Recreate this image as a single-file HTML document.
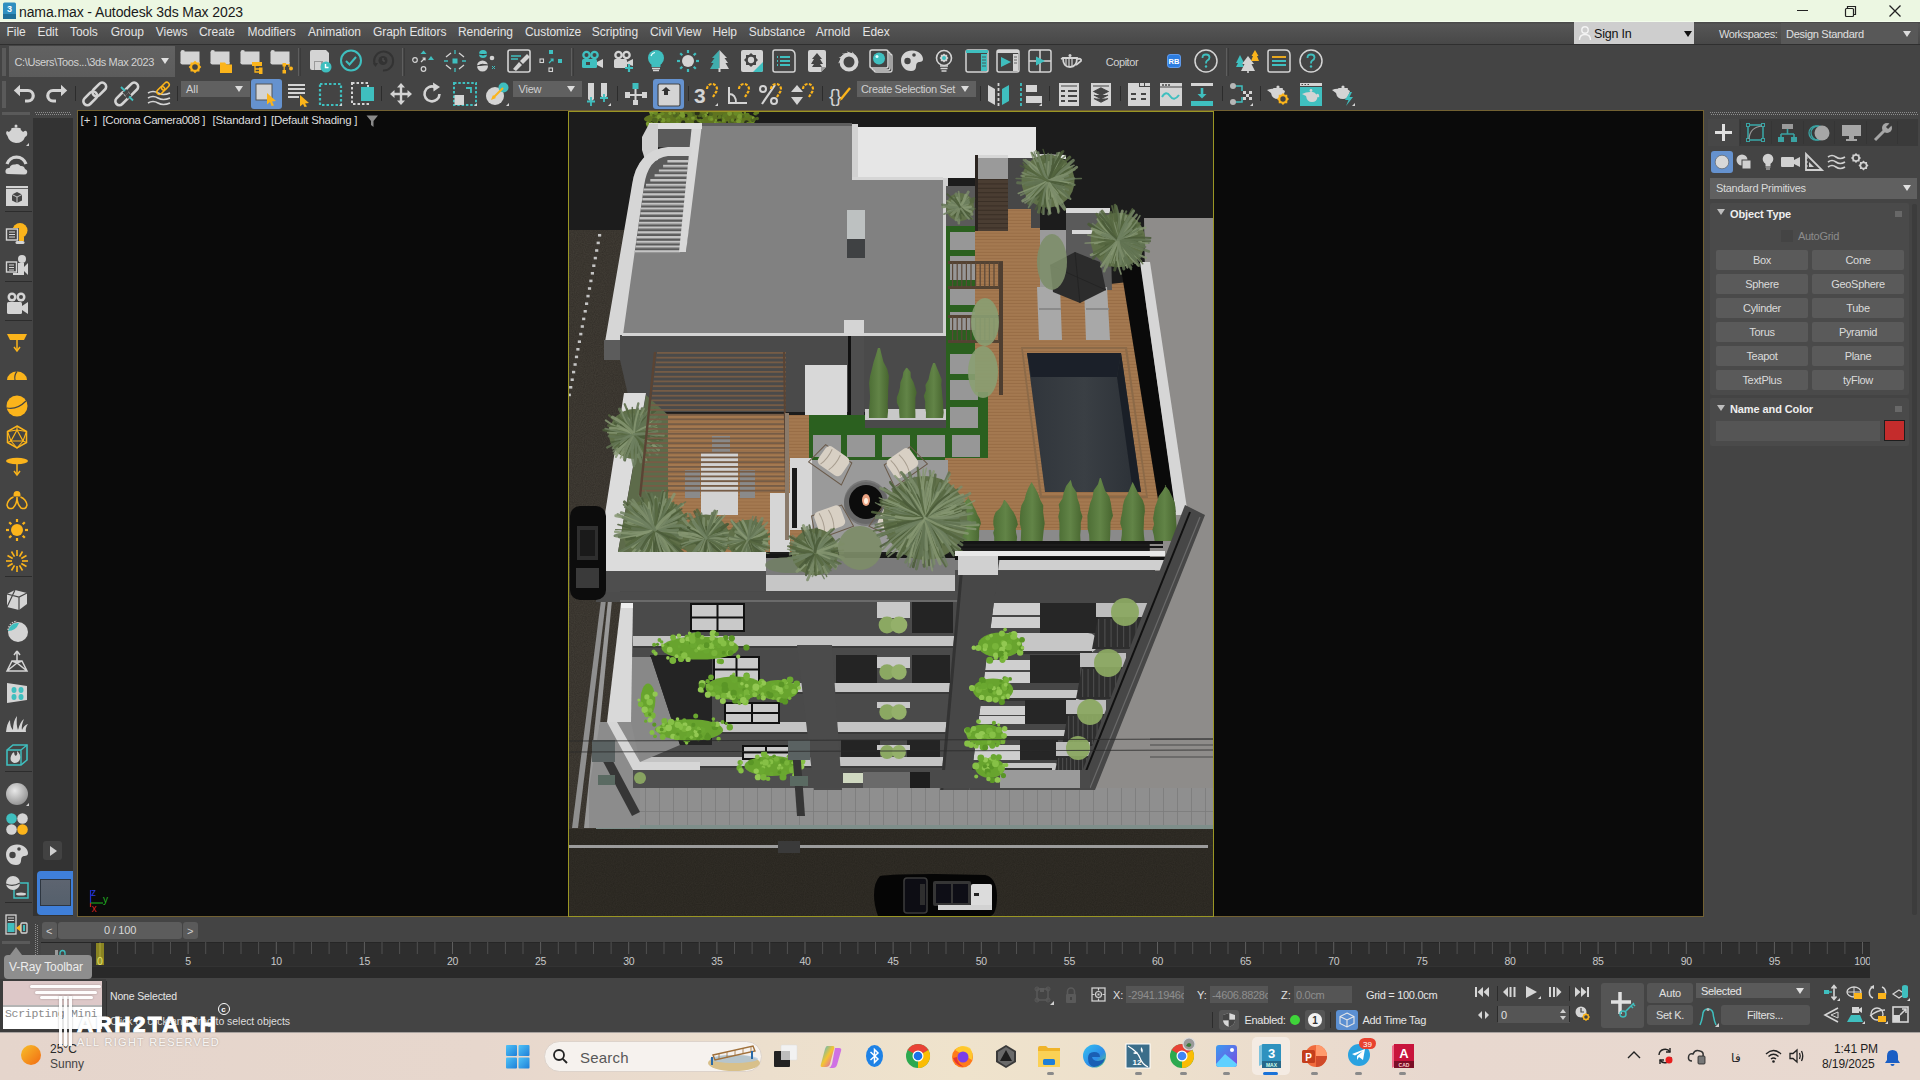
<!DOCTYPE html><html><head><meta charset="utf-8"><style>
*{box-sizing:border-box;margin:0;padding:0}
html,body{width:1920px;height:1080px;overflow:hidden;background:#444444;font-family:"Liberation Sans",sans-serif;position:relative}
.a{position:absolute}
svg.a{overflow:visible}
.t{position:absolute;white-space:nowrap;line-height:1}
</style></head><body>
<div class="a" style="left:0px;top:0px;width:1920px;height:22px;background:#ecf7e2;"></div>
<div class="a" style="left:0px;top:21px;width:1920px;height:1px;background:#f3fdec;"></div>
<div class="a" style="left:0px;top:22px;width:1920px;height:23px;background:linear-gradient(#4a4a4a 0px,#4a4a4a 1px,#565656 2px,#474747 100%);"></div>
<div class="a" style="left:0px;top:44px;width:1920px;height:1px;background:#2f2f2f;"></div>
<div class="a" style="left:33px;top:118px;width:40px;height:798px;background:#333333;"></div>
<div class="a" style="left:77px;top:110px;width:1627px;height:807px;background:#0a0a0a;border:1px solid #726132"></div>
<svg class="a" style="left:2px;top:2px" width="15" height="18" viewBox="0 0 15 18"><rect x="1" y="0.5" width="13" height="15.5" rx="1.5" fill="#2f8fc0"/><rect x="1" y="12" width="13" height="5" fill="#1f6f98"/><text x="7.5" y="10" font-size="9" font-weight="700" fill="#fff" text-anchor="middle" font-family="Liberation Sans">3</text></svg>
<div class="t" style="left:19.0px;top:5.0px;font-size:14px;color:#1a1a1a;font-weight:400;letter-spacing:-0.1px;font-family:'Liberation Sans';">nama.max - Autodesk 3ds Max 2023</div>
<div class="a" style="left:1797px;top:10px;width:11px;height:1px;background:#222;"></div>
<svg class="a" style="left:1843px;top:4px" width="14" height="14" viewBox="0 0 14 14"><rect x="2.5" y="4.5" width="8" height="8" fill="none" stroke="#222" stroke-width="1.2" rx="1"/><path d="M4.5 4.5 V2.5 H12.5 V10.5 H10.5" fill="none" stroke="#222" stroke-width="1.2"/></svg>
<svg class="a" style="left:1888px;top:4px" width="14" height="14" viewBox="0 0 14 14"><path d="M1.5 1.5 L12.5 12.5 M12.5 1.5 L1.5 12.5" stroke="#222" stroke-width="1.3"/></svg>
<div class="t" style="left:6.5px;top:25.8px;font-size:12px;color:#e4e4e4;font-weight:400;letter-spacing:-0.05px;font-family:'Liberation Sans';">File</div>
<div class="t" style="left:37.5px;top:25.8px;font-size:12px;color:#e4e4e4;font-weight:400;letter-spacing:-0.05px;font-family:'Liberation Sans';">Edit</div>
<div class="t" style="left:70.0px;top:25.8px;font-size:12px;color:#e4e4e4;font-weight:400;letter-spacing:-0.05px;font-family:'Liberation Sans';">Tools</div>
<div class="t" style="left:110.8px;top:25.8px;font-size:12px;color:#e4e4e4;font-weight:400;letter-spacing:-0.05px;font-family:'Liberation Sans';">Group</div>
<div class="t" style="left:155.8px;top:25.8px;font-size:12px;color:#e4e4e4;font-weight:400;letter-spacing:-0.05px;font-family:'Liberation Sans';">Views</div>
<div class="t" style="left:199.0px;top:25.8px;font-size:12px;color:#e4e4e4;font-weight:400;letter-spacing:-0.05px;font-family:'Liberation Sans';">Create</div>
<div class="t" style="left:247.5px;top:25.8px;font-size:12px;color:#e4e4e4;font-weight:400;letter-spacing:-0.05px;font-family:'Liberation Sans';">Modifiers</div>
<div class="t" style="left:308.0px;top:25.8px;font-size:12px;color:#e4e4e4;font-weight:400;letter-spacing:-0.05px;font-family:'Liberation Sans';">Animation</div>
<div class="t" style="left:373.0px;top:25.8px;font-size:12px;color:#e4e4e4;font-weight:400;letter-spacing:-0.05px;font-family:'Liberation Sans';">Graph Editors</div>
<div class="t" style="left:458.0px;top:25.8px;font-size:12px;color:#e4e4e4;font-weight:400;letter-spacing:-0.05px;font-family:'Liberation Sans';">Rendering</div>
<div class="t" style="left:525.0px;top:25.8px;font-size:12px;color:#e4e4e4;font-weight:400;letter-spacing:-0.05px;font-family:'Liberation Sans';">Customize</div>
<div class="t" style="left:591.8px;top:25.8px;font-size:12px;color:#e4e4e4;font-weight:400;letter-spacing:-0.05px;font-family:'Liberation Sans';">Scripting</div>
<div class="t" style="left:650.0px;top:25.8px;font-size:12px;color:#e4e4e4;font-weight:400;letter-spacing:-0.05px;font-family:'Liberation Sans';">Civil View</div>
<div class="t" style="left:712.5px;top:25.8px;font-size:12px;color:#e4e4e4;font-weight:400;letter-spacing:-0.05px;font-family:'Liberation Sans';">Help</div>
<div class="t" style="left:748.8px;top:25.8px;font-size:12px;color:#e4e4e4;font-weight:400;letter-spacing:-0.05px;font-family:'Liberation Sans';">Substance</div>
<div class="t" style="left:815.8px;top:25.8px;font-size:12px;color:#e4e4e4;font-weight:400;letter-spacing:-0.05px;font-family:'Liberation Sans';">Arnold</div>
<div class="t" style="left:862.5px;top:25.8px;font-size:12px;color:#e4e4e4;font-weight:400;letter-spacing:-0.05px;font-family:'Liberation Sans';">Edex</div>
<div class="a" style="left:1574px;top:22px;width:120px;height:22px;background:#cecece;"></div>
<svg class="a" style="left:1578px;top:25px" width="14" height="16" viewBox="0 0 14 16"><circle cx="7" cy="5" r="3.2" fill="none" stroke="#f4f4f4" stroke-width="1.4"/><path d="M1.5 15 Q1.5 9.5 7 9.5 Q12.5 9.5 12.5 15" fill="none" stroke="#f4f4f4" stroke-width="1.4"/></svg>
<div class="t" style="left:1594.0px;top:27.9px;font-size:12.5px;color:#111;font-weight:400;letter-spacing:-0.2px;font-family:'Liberation Sans';">Sign In</div>
<svg class="a" style="left:1683px;top:30px" width="10" height="8" viewBox="0 0 10 8"><path d="M1 1 H9 L5 7 Z" fill="#111"/></svg>
<div class="t" style="left:1719.0px;top:28.6px;font-size:11px;color:#dddddd;font-weight:400;letter-spacing:-0.45px;font-family:'Liberation Sans';">Workspaces:</div>
<div class="a" style="left:1781px;top:23px;width:137px;height:21px;background:#585858;"></div>
<div class="t" style="left:1786.0px;top:28.6px;font-size:11px;color:#e0e0e0;font-weight:400;letter-spacing:-0.28px;font-family:'Liberation Sans';">Design Standard</div>
<svg class="a" style="left:1902px;top:30px" width="10" height="8" viewBox="0 0 10 8"><path d="M1 1 H9 L5 7 Z" fill="#dcdcdc"/></svg>
<svg class="a" style="left:569px;top:112px;overflow:hidden" width="644" height="804" viewBox="569 112 644 804"><defs><radialGradient id="palm" cx="50%" cy="50%" r="50%"><stop offset="0" stop-color="#4f5e3e"/><stop offset="0.6" stop-color="#667757"/><stop offset="1" stop-color="#6f8060" stop-opacity="0.85"/></radialGradient><radialGradient id="cree" cx="50%" cy="50%" r="50%"><stop offset="0" stop-color="#5e9a2a"/><stop offset="1" stop-color="#7ab040" stop-opacity="0.9"/></radialGradient><linearGradient id="cyp" x1="0" y1="0" x2="1" y2="0"><stop offset="0" stop-color="#4d6e35"/><stop offset="0.5" stop-color="#628447"/><stop offset="1" stop-color="#47652f"/></linearGradient><linearGradient id="pool" x1="0" y1="0" x2="1" y2="0"><stop offset="0" stop-color="#30353b"/><stop offset="0.5" stop-color="#3a3f44"/><stop offset="1" stop-color="#2b3036"/></linearGradient><pattern id="wood" width="40" height="3.2" patternUnits="userSpaceOnUse"><rect width="40" height="3.2" fill="#a47950"/><rect y="2.3" width="40" height="0.9" fill="#976c45"/></pattern><pattern id="tiles" x="589" y="788" width="14" height="24" patternUnits="userSpaceOnUse"><rect width="14" height="24" fill="#8f8f8f"/><rect width="0.8" height="24" fill="#7b7b7b"/><rect y="23.2" width="14" height="0.8" fill="#7b7b7b"/></pattern><filter id="nz" x="0" y="0" width="100%" height="100%"><feTurbulence type="fractalNoise" baseFrequency="0.9" numOctaves="2" result="n"/><feColorMatrix type="matrix" values="0 0 0 0 0.55  0 0 0 0 0.5  0 0 0 0 0.4  0 0 0 0.35 0"/><feComposite in2="SourceGraphic" operator="in"/></filter></defs><rect x="569" y="112" width="644" height="804" fill="#1c1c1c" /><rect x="569" y="230" width="91" height="600" fill="#322e28" /><rect x="569" y="230" width="91" height="600" fill="#322e28" filter="url(#nz)" opacity="0.35"/><rect x="569" y="396" width="91" height="1" fill="#3a362f" /><rect x="598.0" y="234.0" width="3.2000000000000455" height="2.5999999999999943" fill="#c4c4c4" /><rect x="596.6" y="241.6" width="3.199999999999932" height="2.5999999999999943" fill="#c4c4c4" /><rect x="595.1" y="249.2" width="3.199999999999932" height="2.6000000000000227" fill="#c4c4c4" /><rect x="593.7" y="256.8" width="3.199999999999932" height="2.599999999999966" fill="#c4c4c4" /><rect x="592.2" y="264.4" width="3.199999999999932" height="2.6000000000000227" fill="#c4c4c4" /><rect x="590.8" y="272.0" width="3.2000000000000455" height="2.6000000000000227" fill="#c4c4c4" /><rect x="589.3" y="279.6" width="3.2000000000000455" height="2.599999999999966" fill="#c4c4c4" /><rect x="587.9" y="287.2" width="3.2000000000000455" height="2.6000000000000227" fill="#c4c4c4" /><rect x="586.4" y="294.8" width="3.2000000000000455" height="2.599999999999966" fill="#c4c4c4" /><rect x="585.0" y="302.4" width="3.2000000000000455" height="2.6000000000000227" fill="#c4c4c4" /><rect x="583.6" y="310.0" width="3.199999999999932" height="2.6000000000000227" fill="#c4c4c4" /><rect x="582.1" y="317.6" width="3.199999999999932" height="2.599999999999966" fill="#c4c4c4" /><rect x="580.7" y="325.2" width="3.199999999999932" height="2.6000000000000227" fill="#c4c4c4" /><rect x="579.2" y="332.8" width="3.199999999999932" height="2.599999999999966" fill="#c4c4c4" /><rect x="577.8" y="340.4" width="3.2000000000000455" height="2.6000000000000227" fill="#c4c4c4" /><rect x="576.3" y="348.0" width="3.2000000000000455" height="2.6000000000000227" fill="#c4c4c4" /><rect x="574.9" y="355.6" width="3.2000000000000455" height="2.599999999999966" fill="#c4c4c4" /><rect x="573.5" y="363.2" width="3.2000000000000455" height="2.6000000000000227" fill="#c4c4c4" /><rect x="572.0" y="370.8" width="3.2000000000000455" height="2.599999999999966" fill="#c4c4c4" /><rect x="570.6" y="378.4" width="3.199999999999932" height="2.6000000000000227" fill="#c4c4c4" /><rect x="569.1" y="386.0" width="3.199999999999932" height="2.6000000000000227" fill="#c4c4c4" /><rect x="567.7" y="393.6" width="3.199999999999932" height="2.599999999999966" fill="#c4c4c4" /><polygon points="1144,218 1213,218 1213,790 1080,790 1150,560" fill="#8e8c8a" /><line x1="1150" y1="739" x2="1213" y2="739" stroke="#3a3a3a" stroke-width="0.8" /><line x1="1150" y1="745" x2="1213" y2="745" stroke="#3a3a3a" stroke-width="0.8" /><line x1="1150" y1="757" x2="1213" y2="757" stroke="#3a3a3a" stroke-width="0.8" /><rect x="589" y="788" width="624" height="40" fill="url(#tiles)" /><rect x="596" y="825" width="617" height="5" fill="#7e8e8a" /><rect x="569" y="829" width="644" height="87" fill="#27241e" /><rect x="569" y="829" width="644" height="87" fill="#27241e" filter="url(#nz)" opacity="0.22"/><rect x="569" y="845" width="639" height="3" fill="#9c9c9c" /><rect x="778" y="841" width="22" height="12" fill="#3a3a3a" /><polygon points="601,600 606,600 578,828 572,828" fill="#8f8f8f" /><polygon points="608,600 612,600 590,828 584,828" fill="#999999" /><ellipse cx="700" cy="119" rx="56" ry="9" fill="#5f7420" /><circle cx="682.3" cy="114.4" r="2.0" fill="#6a8a26"/><circle cx="738.0" cy="113.5" r="1.9" fill="#2a3018"/><circle cx="670.0" cy="113.4" r="1.7" fill="#7a9a30"/><circle cx="656.2" cy="118.8" r="2.3" fill="#6a8a26"/><circle cx="752.1" cy="122.1" r="1.9" fill="#6a8a26"/><circle cx="710.6" cy="118.3" r="2.6" fill="#6a8a26"/><circle cx="708.3" cy="114.1" r="1.7" fill="#2a3018"/><circle cx="659.2" cy="116.9" r="2.3" fill="#7a9a30"/><circle cx="657.5" cy="121.1" r="1.3" fill="#6a8a26"/><circle cx="707.3" cy="113.0" r="1.1" fill="#7a9a30"/><circle cx="701.6" cy="120.5" r="2.2" fill="#5e7a22"/><circle cx="711.6" cy="119.3" r="1.5" fill="#7a9a30"/><circle cx="724.3" cy="115.9" r="1.9" fill="#2a3018"/><circle cx="701.5" cy="117.5" r="1.7" fill="#2a3018"/><circle cx="755.8" cy="113.9" r="1.7" fill="#4e6420"/><circle cx="663.0" cy="119.8" r="1.1" fill="#6a8a26"/><circle cx="731.6" cy="121.2" r="2.4" fill="#4e6420"/><circle cx="684.1" cy="117.6" r="1.8" fill="#5e7a22"/><circle cx="653.7" cy="113.5" r="1.4" fill="#6a8a26"/><circle cx="652.8" cy="123.2" r="2.0" fill="#5e7a22"/><circle cx="677.9" cy="118.2" r="2.1" fill="#6a8a26"/><circle cx="751.4" cy="117.7" r="2.0" fill="#5e7a22"/><circle cx="652.6" cy="124.3" r="1.2" fill="#7a9a30"/><circle cx="690.6" cy="126.7" r="1.8" fill="#7a9a30"/><circle cx="696.3" cy="120.8" r="2.4" fill="#5e7a22"/><circle cx="742.8" cy="116.5" r="1.7" fill="#4e6420"/><circle cx="722.5" cy="118.1" r="1.4" fill="#6a8a26"/><circle cx="665.7" cy="115.7" r="1.4" fill="#5e7a22"/><circle cx="739.1" cy="114.9" r="1.5" fill="#7a9a30"/><circle cx="692.9" cy="117.9" r="1.9" fill="#7a9a30"/><circle cx="723.3" cy="120.2" r="2.0" fill="#6a8a26"/><circle cx="697.1" cy="125.9" r="2.5" fill="#2a3018"/><circle cx="689.9" cy="118.4" r="1.2" fill="#5e7a22"/><circle cx="653.0" cy="113.1" r="1.3" fill="#7a9a30"/><circle cx="658.3" cy="121.6" r="1.2" fill="#2a3018"/><circle cx="662.9" cy="113.6" r="1.6" fill="#6a8a26"/><circle cx="653.9" cy="115.3" r="1.6" fill="#4e6420"/><circle cx="753.0" cy="121.6" r="1.8" fill="#6a8a26"/><circle cx="741.1" cy="127.9" r="1.7" fill="#5e7a22"/><circle cx="680.9" cy="114.3" r="2.2" fill="#4e6420"/><circle cx="699.6" cy="123.1" r="1.8" fill="#7a9a30"/><circle cx="752.5" cy="120.5" r="1.2" fill="#2a3018"/><circle cx="748.4" cy="124.1" r="1.5" fill="#6a8a26"/><circle cx="724.0" cy="116.2" r="1.6" fill="#7a9a30"/><circle cx="685.8" cy="115.6" r="1.9" fill="#2a3018"/><circle cx="682.9" cy="115.6" r="2.3" fill="#7a9a30"/><circle cx="736.3" cy="125.1" r="2.2" fill="#7a9a30"/><circle cx="668.4" cy="119.9" r="2.2" fill="#6a8a26"/><circle cx="734.5" cy="119.6" r="1.3" fill="#2a3018"/><circle cx="753.1" cy="119.2" r="2.5" fill="#4e6420"/><circle cx="753.0" cy="117.8" r="1.4" fill="#7a9a30"/><circle cx="698.6" cy="117.4" r="1.8" fill="#2a3018"/><circle cx="740.1" cy="119.7" r="2.0" fill="#6a8a26"/><circle cx="739.5" cy="113.9" r="1.6" fill="#7a9a30"/><circle cx="699.5" cy="114.9" r="2.3" fill="#4e6420"/><circle cx="655.7" cy="127.1" r="2.2" fill="#5e7a22"/><circle cx="691.0" cy="127.1" r="2.2" fill="#7a9a30"/><circle cx="757.2" cy="112.4" r="1.9" fill="#5e7a22"/><circle cx="736.3" cy="114.3" r="2.3" fill="#5e7a22"/><circle cx="719.6" cy="117.6" r="1.9" fill="#7a9a30"/><circle cx="648.4" cy="124.8" r="2.2" fill="#6a8a26"/><circle cx="705.0" cy="126.9" r="1.7" fill="#7a9a30"/><circle cx="738.5" cy="115.4" r="1.4" fill="#4e6420"/><circle cx="702.1" cy="124.2" r="1.5" fill="#2a3018"/><circle cx="692.9" cy="114.1" r="2.5" fill="#4e6420"/><circle cx="746.5" cy="122.6" r="2.3" fill="#2a3018"/><circle cx="693.1" cy="126.7" r="1.8" fill="#2a3018"/><circle cx="663.0" cy="120.2" r="2.4" fill="#7a9a30"/><circle cx="714.2" cy="124.4" r="1.2" fill="#7a9a30"/><circle cx="699.0" cy="123.6" r="1.9" fill="#4e6420"/><circle cx="722.4" cy="120.5" r="1.8" fill="#6a8a26"/><circle cx="744.9" cy="112.9" r="1.3" fill="#6a8a26"/><circle cx="732.5" cy="120.1" r="1.9" fill="#6a8a26"/><circle cx="695.6" cy="121.8" r="1.8" fill="#2a3018"/><circle cx="668.3" cy="116.4" r="1.8" fill="#5e7a22"/><circle cx="702.9" cy="116.0" r="1.8" fill="#4e6420"/><circle cx="749.4" cy="126.3" r="1.3" fill="#5e7a22"/><circle cx="661.4" cy="113.9" r="1.7" fill="#6a8a26"/><circle cx="721.2" cy="118.9" r="1.3" fill="#4e6420"/><circle cx="733.8" cy="126.4" r="1.2" fill="#4e6420"/><circle cx="662.0" cy="126.1" r="2.5" fill="#7a9a30"/><circle cx="729.6" cy="113.5" r="2.4" fill="#7a9a30"/><circle cx="756.9" cy="125.3" r="1.3" fill="#5e7a22"/><circle cx="757.3" cy="118.5" r="1.7" fill="#4e6420"/><circle cx="681.7" cy="123.6" r="1.0" fill="#2a3018"/><circle cx="697.4" cy="123.3" r="1.6" fill="#2a3018"/><circle cx="715.9" cy="120.2" r="1.1" fill="#7a9a30"/><circle cx="754.8" cy="113.7" r="1.4" fill="#6a8a26"/><circle cx="747.5" cy="114.9" r="2.2" fill="#5e7a22"/><circle cx="741.2" cy="122.8" r="2.5" fill="#5e7a22"/><circle cx="662.7" cy="126.7" r="1.9" fill="#4e6420"/><circle cx="656.0" cy="112.9" r="2.1" fill="#5e7a22"/><circle cx="746.3" cy="116.3" r="1.0" fill="#6a8a26"/><circle cx="735.8" cy="113.3" r="2.4" fill="#6a8a26"/><circle cx="675.6" cy="113.9" r="1.0" fill="#2a3018"/><circle cx="692.8" cy="126.6" r="2.0" fill="#6a8a26"/><circle cx="705.0" cy="115.8" r="1.2" fill="#7a9a30"/><circle cx="675.3" cy="114.9" r="2.5" fill="#4e6420"/><circle cx="705.5" cy="115.3" r="1.7" fill="#7a9a30"/><circle cx="676.3" cy="124.9" r="2.6" fill="#6a8a26"/><circle cx="647.7" cy="123.7" r="1.9" fill="#7a9a30"/><circle cx="703.6" cy="115.9" r="1.7" fill="#5e7a22"/><circle cx="719.5" cy="120.7" r="2.4" fill="#2a3018"/><circle cx="680.5" cy="115.4" r="1.4" fill="#7a9a30"/><circle cx="739.2" cy="123.3" r="2.0" fill="#5e7a22"/><circle cx="756.8" cy="127.7" r="2.3" fill="#6a8a26"/><circle cx="653.9" cy="123.9" r="1.4" fill="#7a9a30"/><circle cx="652.2" cy="122.6" r="1.6" fill="#2a3018"/><circle cx="721.1" cy="116.5" r="1.4" fill="#4e6420"/><circle cx="651.1" cy="115.0" r="1.4" fill="#6a8a26"/><circle cx="675.5" cy="127.4" r="2.6" fill="#2a3018"/><circle cx="682.2" cy="112.6" r="2.4" fill="#7a9a30"/><circle cx="685.9" cy="112.0" r="1.6" fill="#5e7a22"/><circle cx="677.2" cy="122.5" r="1.4" fill="#6a8a26"/><circle cx="656.2" cy="125.1" r="1.2" fill="#2a3018"/><circle cx="650.7" cy="112.4" r="1.5" fill="#7a9a30"/><circle cx="655.5" cy="127.3" r="2.4" fill="#7a9a30"/><circle cx="719.6" cy="123.5" r="2.4" fill="#5e7a22"/><circle cx="731.6" cy="123.5" r="1.8" fill="#4e6420"/><circle cx="727.1" cy="122.3" r="1.1" fill="#2a3018"/><circle cx="716.3" cy="123.7" r="2.3" fill="#7a9a30"/><circle cx="747.9" cy="124.0" r="1.9" fill="#6a8a26"/><circle cx="738.6" cy="121.3" r="2.4" fill="#7a9a30"/><circle cx="655.5" cy="112.7" r="2.0" fill="#6a8a26"/><circle cx="688.2" cy="119.2" r="1.1" fill="#6a8a26"/><circle cx="716.1" cy="122.9" r="1.8" fill="#6a8a26"/><circle cx="697.2" cy="113.1" r="2.5" fill="#2a3018"/><circle cx="656.3" cy="120.4" r="2.2" fill="#5e7a22"/><circle cx="674.2" cy="113.2" r="1.4" fill="#7a9a30"/><circle cx="671.8" cy="122.4" r="1.7" fill="#5e7a22"/><circle cx="654.6" cy="126.6" r="1.5" fill="#6a8a26"/><circle cx="715.1" cy="122.3" r="1.1" fill="#7a9a30"/><circle cx="683.2" cy="122.4" r="2.1" fill="#2a3018"/><circle cx="709.6" cy="112.2" r="1.1" fill="#4e6420"/><circle cx="754.9" cy="113.6" r="1.3" fill="#5e7a22"/><circle cx="678.6" cy="120.3" r="1.7" fill="#5e7a22"/><circle cx="731.9" cy="127.9" r="1.9" fill="#4e6420"/><circle cx="755.6" cy="127.0" r="1.0" fill="#5e7a22"/><circle cx="654.6" cy="120.1" r="2.6" fill="#4e6420"/><circle cx="689.3" cy="126.7" r="2.5" fill="#6a8a26"/><circle cx="711.1" cy="114.3" r="1.8" fill="#4e6420"/><circle cx="660.9" cy="125.1" r="1.8" fill="#6a8a26"/><circle cx="724.8" cy="115.7" r="2.4" fill="#5e7a22"/><circle cx="690.1" cy="114.5" r="2.5" fill="#5e7a22"/><circle cx="691.4" cy="123.6" r="1.7" fill="#5e7a22"/><circle cx="681.4" cy="125.4" r="1.0" fill="#4e6420"/><circle cx="740.0" cy="113.9" r="2.5" fill="#6a8a26"/><circle cx="747.0" cy="116.6" r="1.6" fill="#5e7a22"/><circle cx="689.7" cy="125.9" r="1.1" fill="#5e7a22"/><circle cx="730.6" cy="125.7" r="1.4" fill="#6a8a26"/><circle cx="739.5" cy="116.6" r="2.5" fill="#7a9a30"/><circle cx="754.8" cy="119.0" r="1.5" fill="#4e6420"/><circle cx="733.9" cy="118.8" r="1.0" fill="#5e7a22"/><circle cx="748.3" cy="127.1" r="1.9" fill="#6a8a26"/><circle cx="651.5" cy="123.7" r="1.7" fill="#7a9a30"/><circle cx="718.2" cy="116.6" r="1.1" fill="#2a3018"/><circle cx="660.3" cy="119.6" r="1.5" fill="#4e6420"/><circle cx="674.6" cy="123.8" r="2.0" fill="#5e7a22"/><circle cx="719.5" cy="116.8" r="1.9" fill="#5e7a22"/><circle cx="659.4" cy="122.3" r="1.1" fill="#2a3018"/><polygon points="702,124 852,124 852,178 943,178 948,335 622,335 630,252 686,252 698,135" fill="#818181" /><rect x="702" y="123" width="150" height="3" fill="#5e5e5e" /><polygon points="857,127 1036,127 1036,154 1066,155 1066,159 975,159 975,178 857,178" fill="#e6e6e6" /><rect x="852" y="124" width="6" height="54" fill="#d2d2d2" /><rect x="852" y="177" width="91" height="3" fill="#d6d6d6" /><rect x="943" y="178" width="5" height="157" fill="#d0d0d0" /><rect x="847" y="210" width="18" height="29" fill="#bdc1c1" /><rect x="847" y="239" width="18" height="19" fill="#3f4143" /><path d="M655 128 L698 128 L686 252 L626 252 L632 185 Q637 150 668 148 L657 147Z" fill="#5a5a5a" /><rect x="667.4" y="160.0" width="21.200000000000045" height="2.0" fill="#c4c4c4" /><rect x="667.4" y="162.0" width="21.200000000000045" height="0.8000000000000114" fill="#9a9a9a" /><rect x="663.1" y="164.8" width="25.100000000000023" height="2.0" fill="#c4c4c4" /><rect x="663.1" y="166.8" width="25.100000000000023" height="0.799999999999983" fill="#9a9a9a" /><rect x="658.9" y="169.5" width="28.800000000000068" height="2.0" fill="#c4c4c4" /><rect x="658.9" y="171.5" width="28.800000000000068" height="0.8000000000000114" fill="#9a9a9a" /><rect x="654.6" y="174.2" width="32.69999999999993" height="2.0" fill="#c4c4c4" /><rect x="654.6" y="176.2" width="32.69999999999993" height="0.9000000000000057" fill="#9a9a9a" /><rect x="650.3" y="179.0" width="36.5" height="2.0" fill="#c4c4c4" /><rect x="650.3" y="181.0" width="36.5" height="0.8000000000000114" fill="#9a9a9a" /><rect x="646.0" y="183.8" width="40.39999999999998" height="2.0" fill="#c4c4c4" /><rect x="646.0" y="185.8" width="40.39999999999998" height="0.799999999999983" fill="#9a9a9a" /><rect x="643.6" y="188.5" width="42.299999999999955" height="2.0" fill="#c4c4c4" /><rect x="643.6" y="190.5" width="42.299999999999955" height="0.8000000000000114" fill="#9a9a9a" /><rect x="643.0" y="193.2" width="42.5" height="2.0" fill="#c4c4c4" /><rect x="643.0" y="195.2" width="42.5" height="0.9000000000000057" fill="#9a9a9a" /><rect x="642.3" y="198.0" width="42.700000000000045" height="2.0" fill="#c4c4c4" /><rect x="642.3" y="200.0" width="42.700000000000045" height="0.8000000000000114" fill="#9a9a9a" /><rect x="641.6" y="202.8" width="43.0" height="2.0" fill="#c4c4c4" /><rect x="641.6" y="204.8" width="43.0" height="0.799999999999983" fill="#9a9a9a" /><rect x="641.0" y="207.5" width="43.200000000000045" height="2.0" fill="#c4c4c4" /><rect x="641.0" y="209.5" width="43.200000000000045" height="0.8000000000000114" fill="#9a9a9a" /><rect x="640.3" y="212.2" width="43.40000000000009" height="2.0" fill="#c4c4c4" /><rect x="640.3" y="214.2" width="43.40000000000009" height="0.9000000000000057" fill="#9a9a9a" /><rect x="639.6" y="217.0" width="43.69999999999993" height="2.0" fill="#c4c4c4" /><rect x="639.6" y="219.0" width="43.69999999999993" height="0.8000000000000114" fill="#9a9a9a" /><rect x="639.0" y="221.8" width="43.799999999999955" height="2.0" fill="#c4c4c4" /><rect x="639.0" y="223.8" width="43.799999999999955" height="0.799999999999983" fill="#9a9a9a" /><rect x="638.3" y="226.5" width="44.10000000000002" height="2.0" fill="#c4c4c4" /><rect x="638.3" y="228.5" width="44.10000000000002" height="0.8000000000000114" fill="#9a9a9a" /><rect x="637.6" y="231.2" width="44.299999999999955" height="2.0" fill="#c4c4c4" /><rect x="637.6" y="233.2" width="44.299999999999955" height="0.9000000000000057" fill="#9a9a9a" /><rect x="637.0" y="236.0" width="44.5" height="2.0" fill="#c4c4c4" /><rect x="637.0" y="238.0" width="44.5" height="0.8000000000000114" fill="#9a9a9a" /><rect x="636.3" y="240.8" width="44.700000000000045" height="2.0" fill="#c4c4c4" /><rect x="636.3" y="242.8" width="44.700000000000045" height="0.799999999999983" fill="#9a9a9a" /><rect x="635.6" y="245.5" width="45.0" height="2.0" fill="#c4c4c4" /><rect x="635.6" y="247.5" width="45.0" height="0.8000000000000114" fill="#9a9a9a" /><rect x="634.9" y="250.2" width="45.200000000000045" height="2.0" fill="#c4c4c4" /><rect x="634.9" y="252.2" width="45.200000000000045" height="0.9000000000000057" fill="#9a9a9a" /><polygon points="692,124 702,124 686,252 679,252" fill="#d8d8d8" /><rect x="649" y="123" width="53" height="6" fill="#dedede" /><polygon points="642,137 649,124 658,124 658,160 646,163 642,150" fill="#cfcfcf" /><path d="M605 342 L632 185 Q637 150 668 147 L692 147 L691 156 L668 156 Q648 158 644 186 L622 342Z" fill="#d6d6d6" /><polygon points="604,340 628,340 628,360 604,360" fill="#5c5c5c" /><polygon points="620,335 948,335 948,412 640,412 628,395 620,360" fill="#4a4a4a" /><rect x="622" y="333" width="326" height="3" fill="#d4d4d4" /><rect x="805" y="365" width="42" height="50" fill="#d8d8d8" /><rect x="844" y="320" width="20" height="16" fill="#d4d4d4" /><rect x="848" y="336" width="16" height="92" fill="#4e4e4e" /><rect x="848" y="336" width="3" height="92" fill="#111" /><rect x="946" y="186" width="29" height="40" fill="#5a5a5a" /><rect x="946" y="226" width="42" height="234" fill="#2b601f" /><rect x="808" y="415" width="180" height="45" fill="#2b601f" /><rect x="950" y="232" width="28" height="18" fill="#979797" /><rect x="950" y="256" width="28" height="24" fill="#979797" /><rect x="950" y="287" width="28" height="18" fill="#979797" /><rect x="950" y="312" width="28" height="18" fill="#979797" /><rect x="950" y="354" width="28" height="20" fill="#979797" /><rect x="950" y="380" width="28" height="20" fill="#979797" /><rect x="950" y="407" width="28" height="21" fill="#979797" /><rect x="813" y="435" width="28" height="22" fill="#979797" /><rect x="847" y="435" width="28" height="22" fill="#979797" /><rect x="882" y="435" width="28" height="22" fill="#979797" /><rect x="917" y="435" width="28" height="22" fill="#979797" /><rect x="952" y="435" width="28" height="22" fill="#979797" /><rect x="865" y="409" width="81" height="11" fill="#c8c8c8" /><rect x="865" y="420" width="81" height="8" fill="#4a4a4a" /><polygon points="880.0,348.0 881.7,355.0 883.5,362.0 887.2,369.0 888.9,376.0 888.6,383.0 888.1,390.0 888.1,397.0 887.7,404.0 888.1,411.0 887.4,418.0 869.0,418.0 868.9,411.0 869.5,404.0 870.1,397.0 869.6,390.0 869.1,383.0 870.1,376.0 871.9,369.0 873.6,362.0 875.9,355.0 877.9,348.0" fill="url(#cyp)"/><polygon points="906.5,367.0 910.6,372.1 910.8,377.2 913.5,382.3 915.2,387.4 916.7,392.5 915.4,397.6 915.4,402.7 915.2,407.8 915.4,412.9 915.4,418.0 899.6,418.0 899.2,412.9 899.1,407.8 896.9,402.7 896.8,397.6 898.7,392.5 900.0,387.4 900.4,382.3 902.5,377.2 903.4,372.1 906.7,367.0" fill="url(#cyp)"/><polygon points="935.0,363.0 937.2,368.5 939.5,374.0 941.7,379.5 941.3,385.0 941.9,390.5 942.3,396.0 943.0,401.5 943.2,407.0 943.7,412.5 943.0,418.0 925.9,418.0 926.0,412.5 925.1,407.0 925.2,401.5 923.8,396.0 925.9,390.5 925.4,385.0 928.5,379.5 929.7,374.0 931.1,368.5 933.1,363.0" fill="url(#cyp)"/><polygon points="975,228 1040,228 1040,292 1128,282 1165,530 945,530 945,458 988,458 988,392 975,392" fill="url(#wood)" /><rect x="1006" y="158" width="34" height="70" fill="#474747" /><rect x="1008" y="209" width="23" height="23" fill="url(#wood)" /><rect x="975" y="155" width="33" height="76" fill="#4a3d32" /><rect x="975" y="179.0" width="33" height="1.0" fill="#3a2f26" /><rect x="975" y="183.4" width="33" height="1.0" fill="#3a2f26" /><rect x="975" y="187.8" width="33" height="1.0" fill="#3a2f26" /><rect x="975" y="192.2" width="33" height="1.0" fill="#3a2f26" /><rect x="975" y="196.6" width="33" height="1.0" fill="#3a2f26" /><rect x="975" y="201.0" width="33" height="1.0" fill="#3a2f26" /><rect x="975" y="205.4" width="33" height="1.0" fill="#3a2f26" /><rect x="975" y="209.8" width="33" height="1.0" fill="#3a2f26" /><rect x="975" y="214.2" width="33" height="1.0" fill="#3a2f26" /><rect x="975" y="218.6" width="33" height="1.0" fill="#3a2f26" /><rect x="975" y="223.0" width="33" height="1.0" fill="#3a2f26" /><rect x="975" y="227.4" width="33" height="1.0" fill="#3a2f26" /><rect x="975" y="155" width="33" height="24" fill="#9a9a9a" /><rect x="975" y="155" width="33" height="3" fill="#d6d6d6" /><rect x="975" y="155" width="3" height="76" fill="#2a2420" /><polygon points="1066,208 1110,208 1112,290 1066,290" fill="#5a5a5a" /><rect x="1066" y="208" width="44" height="5" fill="#d8d8d8" /><rect x="1072" y="230" width="38" height="4" fill="#d8d8d8" /><rect x="1040" y="230" width="26" height="65" fill="#9a9a9a" /><polygon points="1120,262 1140,262 1176,512 1160,512" fill="#0a0a0a" /><polygon points="1140,262 1150,262 1188,515 1176,515" fill="#d6d6d6" /><rect x="948" y="261" width="55" height="3" fill="#544332" /><rect x="948" y="286" width="55" height="3" fill="#544332" /><rect x="952.0" y="262" width="1.2000000000000455" height="25" fill="#5a4838" /><rect x="956.6" y="262" width="1.2000000000000455" height="25" fill="#5a4838" /><rect x="961.2" y="262" width="1.2000000000000455" height="25" fill="#5a4838" /><rect x="965.8" y="262" width="1.2000000000000455" height="25" fill="#5a4838" /><rect x="970.4" y="262" width="1.2000000000000455" height="25" fill="#5a4838" /><rect x="975.0" y="262" width="1.2000000000000455" height="25" fill="#5a4838" /><rect x="979.6" y="262" width="1.2000000000000455" height="25" fill="#5a4838" /><rect x="984.2" y="262" width="1.2000000000000455" height="25" fill="#5a4838" /><rect x="988.8" y="262" width="1.2000000000000455" height="25" fill="#5a4838" /><rect x="993.4" y="262" width="1.2000000000000455" height="25" fill="#5a4838" /><rect x="998.0" y="262" width="1.2000000000000455" height="25" fill="#5a4838" /><rect x="948" y="315" width="55" height="3" fill="#544332" /><rect x="948" y="340" width="55" height="3" fill="#544332" /><rect x="952.0" y="316" width="1.2000000000000455" height="25" fill="#5a4838" /><rect x="956.6" y="316" width="1.2000000000000455" height="25" fill="#5a4838" /><rect x="961.2" y="316" width="1.2000000000000455" height="25" fill="#5a4838" /><rect x="965.8" y="316" width="1.2000000000000455" height="25" fill="#5a4838" /><rect x="970.4" y="316" width="1.2000000000000455" height="25" fill="#5a4838" /><rect x="975.0" y="316" width="1.2000000000000455" height="25" fill="#5a4838" /><rect x="979.6" y="316" width="1.2000000000000455" height="25" fill="#5a4838" /><rect x="984.2" y="316" width="1.2000000000000455" height="25" fill="#5a4838" /><rect x="988.8" y="316" width="1.2000000000000455" height="25" fill="#5a4838" /><rect x="993.4" y="316" width="1.2000000000000455" height="25" fill="#5a4838" /><rect x="998.0" y="316" width="1.2000000000000455" height="25" fill="#5a4838" /><rect x="999" y="262" width="4" height="133" fill="#4e3e30" /><polygon points="1021,347 1127,347 1148,498 1040,498" fill="#8c6a48" /><polygon points="1023,349 1125,349 1146,496 1042,496" fill="url(#wood)" /><polygon points="1027,353 1121,353 1141,492 1045,492" fill="url(#pool)" /><polygon points="1027,353 1121,353 1117,377 1031,377" fill="#1b2029" /><polygon points="1117,377 1121,353 1141,492 1133,492" fill="#1a1f27" /><polygon points="1037,287 1060,287 1062,340 1039,340" fill="#a8a8a8" /><polygon points="1084,287 1107,287 1110,340 1086,340" fill="#a8a8a8" /><rect x="1039" y="308" width="22" height="2" fill="#8a8a8a" /><rect x="1086" y="308" width="23" height="2" fill="#8a8a8a" /><polygon points="1050,265 1075,252 1100,262 1106,290 1080,303 1053,292" fill="#2c2c2c" /><line x1="1075" y1="252" x2="1080" y2="303" stroke="#222" stroke-width="0.8" /><line x1="1050" y1="265" x2="1106" y2="290" stroke="#222" stroke-width="0.8" /><circle cx="1048" cy="181" r="26.5" fill="#607049"/><circle cx="1048" cy="181" r="13.6" fill="#4c5b3a"/><path d="M1048.0 181.0 Q1050.8 195.7 1047.7 208.2" stroke="#55663f" stroke-width="2.6" fill="none" stroke-linecap="round" opacity="0.85"/><path d="M1048.0 181.0 Q1044.8 198.8 1037.8 212.3" stroke="#6f8060" stroke-width="1.6" fill="none" stroke-linecap="round" opacity="0.85"/><path d="M1048.0 181.0 Q1040.6 176.7 1035.5 171.8" stroke="#7b8c6a" stroke-width="1.8" fill="none" stroke-linecap="round" opacity="0.85"/><path d="M1048.0 181.0 Q1043.2 197.4 1035.4 209.3" stroke="#4a5a38" stroke-width="1.7" fill="none" stroke-linecap="round" opacity="0.85"/><path d="M1048.0 181.0 Q1052.4 198.8 1048.6 214.3" stroke="#6f8060" stroke-width="2.6" fill="none" stroke-linecap="round" opacity="0.85"/><path d="M1048.0 181.0 Q1056.0 196.6 1059.0 210.9" stroke="#55663f" stroke-width="2.5" fill="none" stroke-linecap="round" opacity="0.85"/><path d="M1048.0 181.0 Q1040.7 164.6 1031.8 152.7" stroke="#55663f" stroke-width="1.7" fill="none" stroke-linecap="round" opacity="0.85"/><path d="M1048.0 181.0 Q1047.4 168.9 1043.6 159.4" stroke="#55663f" stroke-width="2.0" fill="none" stroke-linecap="round" opacity="0.85"/><path d="M1048.0 181.0 Q1045.8 167.6 1046.3 156.3" stroke="#627352" stroke-width="1.6" fill="none" stroke-linecap="round" opacity="0.85"/><path d="M1048.0 181.0 Q1050.6 170.5 1056.4 163.3" stroke="#6f8060" stroke-width="1.6" fill="none" stroke-linecap="round" opacity="0.85"/><path d="M1048.0 181.0 Q1037.1 171.1 1028.9 162.3" stroke="#7b8c6a" stroke-width="3.0" fill="none" stroke-linecap="round" opacity="0.85"/><path d="M1048.0 181.0 Q1035.5 167.8 1031.2 152.5" stroke="#7b8c6a" stroke-width="1.5" fill="none" stroke-linecap="round" opacity="0.85"/><path d="M1048.0 181.0 Q1062.5 180.0 1074.2 184.9" stroke="#869672" stroke-width="2.0" fill="none" stroke-linecap="round" opacity="0.85"/><path d="M1048.0 181.0 Q1036.5 194.4 1022.8 200.9" stroke="#869672" stroke-width="3.0" fill="none" stroke-linecap="round" opacity="0.85"/><path d="M1048.0 181.0 Q1055.6 187.6 1064.2 189.8" stroke="#869672" stroke-width="1.6" fill="none" stroke-linecap="round" opacity="0.85"/><path d="M1048.0 181.0 Q1049.3 172.4 1047.6 165.1" stroke="#7b8c6a" stroke-width="2.5" fill="none" stroke-linecap="round" opacity="0.85"/><path d="M1048.0 181.0 Q1060.7 178.4 1071.5 178.8" stroke="#55663f" stroke-width="1.4" fill="none" stroke-linecap="round" opacity="0.85"/><path d="M1048.0 181.0 Q1038.0 196.3 1028.3 207.7" stroke="#627352" stroke-width="1.4" fill="none" stroke-linecap="round" opacity="0.85"/><path d="M1048.0 181.0 Q1046.8 169.5 1050.5 160.1" stroke="#55663f" stroke-width="2.8" fill="none" stroke-linecap="round" opacity="0.85"/><path d="M1048.0 181.0 Q1036.1 184.1 1026.0 184.7" stroke="#627352" stroke-width="3.0" fill="none" stroke-linecap="round" opacity="0.85"/><path d="M1048.0 181.0 Q1049.0 167.7 1046.1 156.9" stroke="#627352" stroke-width="2.5" fill="none" stroke-linecap="round" opacity="0.85"/><path d="M1048.0 181.0 Q1050.2 172.5 1049.7 165.0" stroke="#55663f" stroke-width="1.3" fill="none" stroke-linecap="round" opacity="0.85"/><path d="M1048.0 181.0 Q1057.9 184.2 1065.5 188.2" stroke="#4a5a38" stroke-width="1.3" fill="none" stroke-linecap="round" opacity="0.85"/><path d="M1048.0 181.0 Q1043.2 198.6 1043.4 213.9" stroke="#6f8060" stroke-width="2.4" fill="none" stroke-linecap="round" opacity="0.85"/><path d="M1048.0 181.0 Q1043.5 163.6 1035.9 150.7" stroke="#869672" stroke-width="1.8" fill="none" stroke-linecap="round" opacity="0.85"/><path d="M1048.0 181.0 Q1062.0 175.7 1071.5 167.4" stroke="#55663f" stroke-width="3.1" fill="none" stroke-linecap="round" opacity="0.85"/><path d="M1048.0 181.0 Q1058.8 192.5 1070.4 198.9" stroke="#7b8c6a" stroke-width="2.1" fill="none" stroke-linecap="round" opacity="0.85"/><path d="M1048.0 181.0 Q1060.8 170.2 1074.1 165.2" stroke="#7b8c6a" stroke-width="1.5" fill="none" stroke-linecap="round" opacity="0.85"/><path d="M1048.0 181.0 Q1054.0 166.2 1057.4 153.5" stroke="#627352" stroke-width="2.8" fill="none" stroke-linecap="round" opacity="0.85"/><path d="M1048.0 181.0 Q1044.8 192.3 1038.0 199.8" stroke="#4a5a38" stroke-width="1.9" fill="none" stroke-linecap="round" opacity="0.85"/><path d="M1048.0 181.0 Q1052.1 196.6 1057.5 208.8" stroke="#55663f" stroke-width="1.7" fill="none" stroke-linecap="round" opacity="0.85"/><path d="M1048.0 181.0 Q1034.0 179.9 1022.7 183.9" stroke="#7b8c6a" stroke-width="1.5" fill="none" stroke-linecap="round" opacity="0.85"/><path d="M1048.0 181.0 Q1059.1 179.7 1068.2 179.5" stroke="#55663f" stroke-width="1.4" fill="none" stroke-linecap="round" opacity="0.85"/><path d="M1048.0 181.0 Q1066.3 178.9 1081.4 178.6" stroke="#627352" stroke-width="1.5" fill="none" stroke-linecap="round" opacity="0.85"/><path d="M1048.0 181.0 Q1038.3 169.1 1027.7 161.9" stroke="#869672" stroke-width="2.7" fill="none" stroke-linecap="round" opacity="0.85"/><path d="M1048.0 181.0 Q1049.4 169.6 1051.9 160.6" stroke="#6f8060" stroke-width="1.8" fill="none" stroke-linecap="round" opacity="0.85"/><path d="M1048.0 181.0 Q1045.8 170.8 1046.6 162.0" stroke="#627352" stroke-width="1.7" fill="none" stroke-linecap="round" opacity="0.85"/><path d="M1048.0 181.0 Q1045.4 198.6 1041.7 212.6" stroke="#55663f" stroke-width="1.6" fill="none" stroke-linecap="round" opacity="0.85"/><path d="M1048.0 181.0 Q1061.6 181.4 1072.8 179.8" stroke="#55663f" stroke-width="1.7" fill="none" stroke-linecap="round" opacity="0.85"/><path d="M1048.0 181.0 Q1057.4 182.1 1065.2 180.0" stroke="#627352" stroke-width="2.1" fill="none" stroke-linecap="round" opacity="0.85"/><path d="M1048.0 181.0 Q1054.4 174.9 1061.8 172.8" stroke="#55663f" stroke-width="1.8" fill="none" stroke-linecap="round" opacity="0.85"/><path d="M1048.0 181.0 Q1033.7 171.9 1023.2 162.8" stroke="#55663f" stroke-width="1.6" fill="none" stroke-linecap="round" opacity="0.85"/><path d="M1048.0 181.0 Q1058.6 173.4 1063.8 163.3" stroke="#869672" stroke-width="1.7" fill="none" stroke-linecap="round" opacity="0.85"/><path d="M1048.0 181.0 Q1061.2 187.1 1068.8 197.3" stroke="#627352" stroke-width="2.4" fill="none" stroke-linecap="round" opacity="0.85"/><path d="M1048.0 181.0 Q1042.9 188.2 1039.4 194.6" stroke="#55663f" stroke-width="3.2" fill="none" stroke-linecap="round" opacity="0.85"/><path d="M1048.0 181.0 Q1041.5 172.7 1036.9 165.4" stroke="#6f8060" stroke-width="1.2" fill="none" stroke-linecap="round" opacity="0.85"/><path d="M1048.0 181.0 Q1036.3 190.0 1029.4 200.4" stroke="#55663f" stroke-width="1.4" fill="none" stroke-linecap="round" opacity="0.85"/><path d="M1048.0 181.0 Q1039.6 177.6 1032.3 176.1" stroke="#7b8c6a" stroke-width="1.4" fill="none" stroke-linecap="round" opacity="0.85"/><path d="M1048.0 181.0 Q1054.7 193.2 1062.3 201.9" stroke="#7b8c6a" stroke-width="2.5" fill="none" stroke-linecap="round" opacity="0.85"/><path d="M1048.0 181.0 Q1039.1 188.0 1030.6 192.1" stroke="#55663f" stroke-width="1.8" fill="none" stroke-linecap="round" opacity="0.85"/><path d="M1048.0 181.0 Q1037.3 175.3 1027.9 172.1" stroke="#6f8060" stroke-width="2.0" fill="none" stroke-linecap="round" opacity="0.85"/><path d="M1048.0 181.0 Q1036.9 186.9 1030.3 195.5" stroke="#7b8c6a" stroke-width="3.1" fill="none" stroke-linecap="round" opacity="0.85"/><path d="M1048.0 181.0 Q1033.2 189.1 1020.8 195.1" stroke="#6f8060" stroke-width="2.0" fill="none" stroke-linecap="round" opacity="0.85"/><path d="M1048.0 181.0 Q1051.3 188.9 1056.1 194.3" stroke="#869672" stroke-width="2.3" fill="none" stroke-linecap="round" opacity="0.85"/><path d="M1048.0 181.0 Q1036.6 189.6 1027.3 196.7" stroke="#869672" stroke-width="3.1" fill="none" stroke-linecap="round" opacity="0.85"/><path d="M1048.0 181.0 Q1056.5 188.5 1060.5 197.3" stroke="#55663f" stroke-width="2.2" fill="none" stroke-linecap="round" opacity="0.85"/><path d="M1048.0 181.0 Q1031.5 183.6 1017.7 182.8" stroke="#627352" stroke-width="3.1" fill="none" stroke-linecap="round" opacity="0.85"/><path d="M1048.0 181.0 Q1050.8 172.6 1056.4 167.3" stroke="#6f8060" stroke-width="3.0" fill="none" stroke-linecap="round" opacity="0.85"/><path d="M1048.0 181.0 Q1059.6 176.5 1068.2 170.9" stroke="#4a5a38" stroke-width="3.0" fill="none" stroke-linecap="round" opacity="0.85"/><path d="M1048.0 181.0 Q1059.2 171.0 1069.1 163.8" stroke="#4a5a38" stroke-width="2.9" fill="none" stroke-linecap="round" opacity="0.85"/><path d="M1048.0 181.0 Q1054.2 165.2 1065.5 155.7" stroke="#627352" stroke-width="1.6" fill="none" stroke-linecap="round" opacity="0.85"/><path d="M1048.0 181.0 Q1056.7 176.1 1064.9 174.1" stroke="#627352" stroke-width="1.9" fill="none" stroke-linecap="round" opacity="0.85"/><path d="M1048.0 181.0 Q1048.2 163.4 1043.0 149.3" stroke="#4a5a38" stroke-width="1.3" fill="none" stroke-linecap="round" opacity="0.85"/><path d="M1048.0 181.0 Q1041.5 167.2 1035.0 156.5" stroke="#7b8c6a" stroke-width="1.8" fill="none" stroke-linecap="round" opacity="0.85"/><path d="M1048.0 181.0 Q1033.5 177.8 1022.3 172.6" stroke="#7b8c6a" stroke-width="1.8" fill="none" stroke-linecap="round" opacity="0.85"/><path d="M1048.0 181.0 Q1048.4 193.4 1048.1 203.6" stroke="#4a5a38" stroke-width="1.9" fill="none" stroke-linecap="round" opacity="0.85"/><path d="M1048.0 181.0 Q1062.7 182.8 1074.6 184.9" stroke="#627352" stroke-width="2.2" fill="none" stroke-linecap="round" opacity="0.85"/><path d="M1048.0 181.0 Q1035.1 170.2 1025.5 160.2" stroke="#7b8c6a" stroke-width="2.9" fill="none" stroke-linecap="round" opacity="0.85"/><path d="M1048.0 181.0 Q1059.0 186.0 1068.1 190.0" stroke="#7b8c6a" stroke-width="1.9" fill="none" stroke-linecap="round" opacity="0.85"/><path d="M1048.0 181.0 Q1042.5 174.1 1039.1 167.6" stroke="#869672" stroke-width="1.5" fill="none" stroke-linecap="round" opacity="0.85"/><path d="M1048.0 181.0 Q1047.0 171.8 1044.9 164.5" stroke="#7b8c6a" stroke-width="2.7" fill="none" stroke-linecap="round" opacity="0.85"/><path d="M1048.0 181.0 Q1050.8 172.8 1051.4 165.6" stroke="#4a5a38" stroke-width="1.3" fill="none" stroke-linecap="round" opacity="0.85"/><path d="M1048.0 181.0 Q1051.1 171.1 1055.5 163.6" stroke="#7b8c6a" stroke-width="3.2" fill="none" stroke-linecap="round" opacity="0.85"/><path d="M1048.0 181.0 Q1057.3 167.3 1059.3 153.0" stroke="#869672" stroke-width="2.6" fill="none" stroke-linecap="round" opacity="0.85"/><path d="M1048.0 181.0 Q1059.4 184.8 1068.0 189.7" stroke="#627352" stroke-width="2.7" fill="none" stroke-linecap="round" opacity="0.85"/><path d="M1048.0 181.0 Q1034.6 169.4 1023.6 159.9" stroke="#6f8060" stroke-width="2.1" fill="none" stroke-linecap="round" opacity="0.85"/><path d="M1048.0 181.0 Q1056.5 174.7 1064.8 171.7" stroke="#4a5a38" stroke-width="1.7" fill="none" stroke-linecap="round" opacity="0.85"/><path d="M1048.0 181.0 Q1039.3 186.8 1034.8 194.7" stroke="#869672" stroke-width="2.0" fill="none" stroke-linecap="round" opacity="0.85"/><path d="M1048.0 181.0 Q1037.6 166.8 1034.3 152.0" stroke="#6f8060" stroke-width="1.5" fill="none" stroke-linecap="round" opacity="0.85"/><path d="M1048.0 181.0 Q1033.4 177.7 1021.3 175.8" stroke="#7b8c6a" stroke-width="1.9" fill="none" stroke-linecap="round" opacity="0.85"/><path d="M1048.0 181.0 Q1033.3 171.6 1020.1 165.7" stroke="#4a5a38" stroke-width="1.4" fill="none" stroke-linecap="round" opacity="0.85"/><path d="M1048.0 181.0 Q1034.5 190.7 1024.2 199.6" stroke="#6f8060" stroke-width="1.7" fill="none" stroke-linecap="round" opacity="0.85"/><path d="M1048.0 181.0 Q1036.9 192.9 1029.1 203.8" stroke="#627352" stroke-width="2.1" fill="none" stroke-linecap="round" opacity="0.85"/><path d="M1048.0 181.0 Q1059.2 178.8 1068.1 175.6" stroke="#6f8060" stroke-width="2.2" fill="none" stroke-linecap="round" opacity="0.85"/><path d="M1048.0 181.0 Q1062.4 181.2 1074.1 178.4" stroke="#6f8060" stroke-width="2.5" fill="none" stroke-linecap="round" opacity="0.85"/><path d="M1048.0 181.0 Q1047.4 170.3 1047.6 161.6" stroke="#869672" stroke-width="1.8" fill="none" stroke-linecap="round" opacity="0.85"/><path d="M1048.0 181.0 Q1030.5 178.6 1016.1 178.4" stroke="#627352" stroke-width="1.5" fill="none" stroke-linecap="round" opacity="0.85"/><path d="M1048.0 181.0 Q1056.9 181.8 1063.7 185.6" stroke="#6f8060" stroke-width="2.3" fill="none" stroke-linecap="round" opacity="0.85"/><path d="M1048.0 181.0 Q1043.0 190.5 1035.8 196.2" stroke="#4a5a38" stroke-width="2.4" fill="none" stroke-linecap="round" opacity="0.85"/><path d="M1048.0 181.0 Q1034.2 190.9 1027.5 203.9" stroke="#55663f" stroke-width="1.5" fill="none" stroke-linecap="round" opacity="0.85"/><path d="M1048.0 181.0 Q1050.2 190.7 1048.7 199.1" stroke="#869672" stroke-width="1.4" fill="none" stroke-linecap="round" opacity="0.85"/><path d="M1048.0 181.0 Q1040.3 172.8 1037.7 163.5" stroke="#55663f" stroke-width="2.8" fill="none" stroke-linecap="round" opacity="0.85"/><path d="M1048.0 181.0 Q1055.1 164.9 1061.8 152.1" stroke="#4a5a38" stroke-width="2.4" fill="none" stroke-linecap="round" opacity="0.85"/><path d="M1048.0 181.0 Q1061.0 171.7 1074.8 169.8" stroke="#55663f" stroke-width="1.7" fill="none" stroke-linecap="round" opacity="0.85"/><path d="M1048.0 181.0 Q1036.4 176.1 1025.6 176.5" stroke="#55663f" stroke-width="1.7" fill="none" stroke-linecap="round" opacity="0.85"/><path d="M1048.0 181.0 Q1061.1 187.8 1069.2 197.4" stroke="#627352" stroke-width="2.5" fill="none" stroke-linecap="round" opacity="0.85"/><path d="M1048.0 181.0 Q1053.2 194.7 1056.3 206.3" stroke="#869672" stroke-width="2.2" fill="none" stroke-linecap="round" opacity="0.85"/><path d="M1048.0 181.0 Q1035.9 174.6 1029.2 164.8" stroke="#869672" stroke-width="1.3" fill="none" stroke-linecap="round" opacity="0.85"/><path d="M1048.0 181.0 Q1060.0 169.7 1071.0 161.8" stroke="#55663f" stroke-width="2.6" fill="none" stroke-linecap="round" opacity="0.85"/><path d="M1048.0 181.0 Q1031.8 188.3 1018.2 193.5" stroke="#869672" stroke-width="1.4" fill="none" stroke-linecap="round" opacity="0.85"/><path d="M1048.0 181.0 Q1051.2 190.0 1050.6 198.1" stroke="#55663f" stroke-width="1.7" fill="none" stroke-linecap="round" opacity="0.85"/><path d="M1048.0 181.0 Q1063.0 171.2 1073.3 160.4" stroke="#6f8060" stroke-width="3.1" fill="none" stroke-linecap="round" opacity="0.85"/><path d="M1048.0 181.0 Q1043.3 194.3 1045.4 206.5" stroke="#4a5a38" stroke-width="2.1" fill="none" stroke-linecap="round" opacity="0.85"/><path d="M1048.0 181.0 Q1039.8 197.0 1038.8 212.3" stroke="#55663f" stroke-width="3.0" fill="none" stroke-linecap="round" opacity="0.85"/><path d="M1048.0 181.0 Q1059.1 180.4 1068.1 182.9" stroke="#869672" stroke-width="1.7" fill="none" stroke-linecap="round" opacity="0.85"/><path d="M1048.0 181.0 Q1058.9 195.1 1065.5 208.3" stroke="#7b8c6a" stroke-width="1.6" fill="none" stroke-linecap="round" opacity="0.85"/><path d="M1048.0 181.0 Q1044.9 198.5 1050.2 213.2" stroke="#869672" stroke-width="2.5" fill="none" stroke-linecap="round" opacity="0.85"/><path d="M1048.0 181.0 Q1056.7 170.1 1061.8 159.7" stroke="#4a5a38" stroke-width="2.1" fill="none" stroke-linecap="round" opacity="0.85"/><path d="M1048.0 181.0 Q1057.9 172.7 1062.7 162.7" stroke="#4a5a38" stroke-width="2.6" fill="none" stroke-linecap="round" opacity="0.85"/><path d="M1048.0 181.0 Q1053.4 169.8 1053.5 159.1" stroke="#4a5a38" stroke-width="2.4" fill="none" stroke-linecap="round" opacity="0.85"/><path d="M1048.0 181.0 Q1053.9 187.4 1057.7 193.5" stroke="#627352" stroke-width="1.4" fill="none" stroke-linecap="round" opacity="0.85"/><path d="M1048.0 181.0 Q1053.0 188.2 1058.0 193.3" stroke="#869672" stroke-width="1.3" fill="none" stroke-linecap="round" opacity="0.85"/><path d="M1048.0 181.0 Q1056.4 184.5 1064.0 185.4" stroke="#4a5a38" stroke-width="1.3" fill="none" stroke-linecap="round" opacity="0.85"/><path d="M1048.0 181.0 Q1057.3 196.7 1058.4 212.5" stroke="#869672" stroke-width="2.3" fill="none" stroke-linecap="round" opacity="0.85"/><path d="M1048.0 181.0 Q1058.3 166.4 1069.8 157.1" stroke="#55663f" stroke-width="3.1" fill="none" stroke-linecap="round" opacity="0.85"/><path d="M1048.0 181.0 Q1052.2 188.7 1052.6 196.2" stroke="#869672" stroke-width="3.1" fill="none" stroke-linecap="round" opacity="0.85"/><path d="M1048.0 181.0 Q1045.2 166.4 1048.2 153.9" stroke="#627352" stroke-width="2.2" fill="none" stroke-linecap="round" opacity="0.85"/><path d="M1048.0 181.0 Q1047.2 170.5 1048.9 161.9" stroke="#7b8c6a" stroke-width="1.8" fill="none" stroke-linecap="round" opacity="0.85"/><path d="M1048.0 181.0 Q1034.6 193.0 1028.6 207.3" stroke="#6f8060" stroke-width="1.3" fill="none" stroke-linecap="round" opacity="0.85"/><path d="M1048.0 181.0 Q1050.6 166.6 1051.2 154.6" stroke="#6f8060" stroke-width="2.2" fill="none" stroke-linecap="round" opacity="0.85"/><path d="M1048.0 181.0 Q1060.6 182.5 1070.6 185.5" stroke="#55663f" stroke-width="2.1" fill="none" stroke-linecap="round" opacity="0.85"/><path d="M1048.0 181.0 Q1044.6 167.5 1040.9 156.7" stroke="#55663f" stroke-width="1.6" fill="none" stroke-linecap="round" opacity="0.85"/><path d="M1048.0 181.0 Q1043.4 193.1 1042.6 203.8" stroke="#6f8060" stroke-width="2.2" fill="none" stroke-linecap="round" opacity="0.85"/><path d="M1048.0 181.0 Q1056.5 180.6 1063.2 178.9" stroke="#7b8c6a" stroke-width="2.2" fill="none" stroke-linecap="round" opacity="0.85"/><path d="M1048.0 181.0 Q1054.4 163.8 1063.2 151.3" stroke="#4a5a38" stroke-width="2.4" fill="none" stroke-linecap="round" opacity="0.85"/><path d="M1048.0 181.0 Q1058.0 175.7 1067.3 173.9" stroke="#869672" stroke-width="1.6" fill="none" stroke-linecap="round" opacity="0.85"/><path d="M1048.0 181.0 Q1054.8 197.7 1064.6 209.4" stroke="#7b8c6a" stroke-width="2.7" fill="none" stroke-linecap="round" opacity="0.85"/><path d="M1048.0 181.0 Q1039.6 166.8 1038.2 152.6" stroke="#6f8060" stroke-width="2.5" fill="none" stroke-linecap="round" opacity="0.85"/><path d="M1048.0 181.0 Q1065.0 176.6 1076.8 167.1" stroke="#7b8c6a" stroke-width="2.7" fill="none" stroke-linecap="round" opacity="0.85"/><path d="M1048.0 181.0 Q1058.4 182.7 1066.9 184.0" stroke="#4a5a38" stroke-width="1.7" fill="none" stroke-linecap="round" opacity="0.85"/><path d="M1048.0 181.0 Q1037.7 195.2 1024.9 202.9" stroke="#7b8c6a" stroke-width="1.7" fill="none" stroke-linecap="round" opacity="0.85"/><path d="M1048.0 181.0 Q1034.5 173.4 1024.6 165.3" stroke="#55663f" stroke-width="2.4" fill="none" stroke-linecap="round" opacity="0.85"/><circle cx="1118" cy="240" r="27.3" fill="#607049"/><circle cx="1118" cy="240" r="14.0" fill="#4c5b3a"/><path d="M1118.0 240.0 Q1113.0 249.0 1109.3 256.6" stroke="#869672" stroke-width="2.9" fill="none" stroke-linecap="round" opacity="0.85"/><path d="M1118.0 240.0 Q1111.5 251.9 1107.0 262.1" stroke="#6f8060" stroke-width="2.6" fill="none" stroke-linecap="round" opacity="0.85"/><path d="M1118.0 240.0 Q1127.5 249.7 1135.3 257.5" stroke="#627352" stroke-width="3.0" fill="none" stroke-linecap="round" opacity="0.85"/><path d="M1118.0 240.0 Q1119.0 256.6 1114.7 270.1" stroke="#4a5a38" stroke-width="2.9" fill="none" stroke-linecap="round" opacity="0.85"/><path d="M1118.0 240.0 Q1125.0 248.9 1129.4 257.0" stroke="#4a5a38" stroke-width="1.9" fill="none" stroke-linecap="round" opacity="0.85"/><path d="M1118.0 240.0 Q1115.0 258.5 1121.0 274.0" stroke="#869672" stroke-width="1.7" fill="none" stroke-linecap="round" opacity="0.85"/><path d="M1118.0 240.0 Q1122.5 255.0 1132.5 264.4" stroke="#627352" stroke-width="1.6" fill="none" stroke-linecap="round" opacity="0.85"/><path d="M1118.0 240.0 Q1119.4 223.6 1126.3 211.3" stroke="#627352" stroke-width="2.1" fill="none" stroke-linecap="round" opacity="0.85"/><path d="M1118.0 240.0 Q1126.2 231.7 1136.0 228.8" stroke="#7b8c6a" stroke-width="3.0" fill="none" stroke-linecap="round" opacity="0.85"/><path d="M1118.0 240.0 Q1102.3 246.5 1093.1 258.4" stroke="#4a5a38" stroke-width="2.6" fill="none" stroke-linecap="round" opacity="0.85"/><path d="M1118.0 240.0 Q1115.9 248.6 1113.4 255.5" stroke="#869672" stroke-width="1.7" fill="none" stroke-linecap="round" opacity="0.85"/><path d="M1118.0 240.0 Q1117.8 221.7 1116.1 206.8" stroke="#4a5a38" stroke-width="2.1" fill="none" stroke-linecap="round" opacity="0.85"/><path d="M1118.0 240.0 Q1110.2 224.2 1098.7 214.4" stroke="#869672" stroke-width="2.5" fill="none" stroke-linecap="round" opacity="0.85"/><path d="M1118.0 240.0 Q1117.9 223.9 1122.4 211.1" stroke="#869672" stroke-width="2.9" fill="none" stroke-linecap="round" opacity="0.85"/><path d="M1118.0 240.0 Q1129.1 247.3 1135.1 256.9" stroke="#869672" stroke-width="1.7" fill="none" stroke-linecap="round" opacity="0.85"/><path d="M1118.0 240.0 Q1104.8 250.6 1091.0 254.9" stroke="#869672" stroke-width="2.6" fill="none" stroke-linecap="round" opacity="0.85"/><path d="M1118.0 240.0 Q1126.2 228.9 1132.6 219.7" stroke="#7b8c6a" stroke-width="1.2" fill="none" stroke-linecap="round" opacity="0.85"/><path d="M1118.0 240.0 Q1110.7 223.6 1100.7 212.4" stroke="#6f8060" stroke-width="3.0" fill="none" stroke-linecap="round" opacity="0.85"/><path d="M1118.0 240.0 Q1108.6 250.2 1098.7 256.2" stroke="#55663f" stroke-width="3.1" fill="none" stroke-linecap="round" opacity="0.85"/><path d="M1118.0 240.0 Q1121.1 255.9 1123.9 268.9" stroke="#627352" stroke-width="3.1" fill="none" stroke-linecap="round" opacity="0.85"/><path d="M1118.0 240.0 Q1130.0 248.6 1139.6 255.9" stroke="#869672" stroke-width="2.3" fill="none" stroke-linecap="round" opacity="0.85"/><path d="M1118.0 240.0 Q1135.0 241.0 1148.8 243.1" stroke="#6f8060" stroke-width="1.9" fill="none" stroke-linecap="round" opacity="0.85"/><path d="M1118.0 240.0 Q1128.3 236.6 1136.7 233.6" stroke="#7b8c6a" stroke-width="2.6" fill="none" stroke-linecap="round" opacity="0.85"/><path d="M1118.0 240.0 Q1131.1 230.2 1145.2 227.8" stroke="#869672" stroke-width="2.4" fill="none" stroke-linecap="round" opacity="0.85"/><path d="M1118.0 240.0 Q1113.4 252.1 1114.4 263.2" stroke="#7b8c6a" stroke-width="1.2" fill="none" stroke-linecap="round" opacity="0.85"/><path d="M1118.0 240.0 Q1105.6 230.2 1098.1 219.2" stroke="#55663f" stroke-width="2.4" fill="none" stroke-linecap="round" opacity="0.85"/><path d="M1118.0 240.0 Q1121.6 221.7 1116.2 206.2" stroke="#627352" stroke-width="2.3" fill="none" stroke-linecap="round" opacity="0.85"/><path d="M1118.0 240.0 Q1131.5 238.8 1141.9 234.0" stroke="#55663f" stroke-width="1.5" fill="none" stroke-linecap="round" opacity="0.85"/><path d="M1118.0 240.0 Q1110.6 228.5 1101.5 221.5" stroke="#627352" stroke-width="2.3" fill="none" stroke-linecap="round" opacity="0.85"/><path d="M1118.0 240.0 Q1127.7 252.3 1135.3 262.7" stroke="#7b8c6a" stroke-width="2.9" fill="none" stroke-linecap="round" opacity="0.85"/><path d="M1118.0 240.0 Q1115.0 254.2 1110.8 265.3" stroke="#7b8c6a" stroke-width="1.5" fill="none" stroke-linecap="round" opacity="0.85"/><path d="M1118.0 240.0 Q1126.8 232.6 1130.4 223.1" stroke="#6f8060" stroke-width="2.0" fill="none" stroke-linecap="round" opacity="0.85"/><path d="M1118.0 240.0 Q1111.2 228.0 1107.2 217.4" stroke="#6f8060" stroke-width="2.8" fill="none" stroke-linecap="round" opacity="0.85"/><path d="M1118.0 240.0 Q1111.9 229.6 1105.6 221.9" stroke="#4a5a38" stroke-width="2.2" fill="none" stroke-linecap="round" opacity="0.85"/><path d="M1118.0 240.0 Q1109.1 231.2 1105.7 220.9" stroke="#7b8c6a" stroke-width="3.1" fill="none" stroke-linecap="round" opacity="0.85"/><path d="M1118.0 240.0 Q1126.8 224.0 1133.6 210.7" stroke="#627352" stroke-width="2.8" fill="none" stroke-linecap="round" opacity="0.85"/><path d="M1118.0 240.0 Q1107.1 250.1 1102.8 262.3" stroke="#627352" stroke-width="2.5" fill="none" stroke-linecap="round" opacity="0.85"/><path d="M1118.0 240.0 Q1113.5 229.6 1106.5 222.9" stroke="#627352" stroke-width="1.4" fill="none" stroke-linecap="round" opacity="0.85"/><path d="M1118.0 240.0 Q1120.7 253.2 1127.6 262.5" stroke="#627352" stroke-width="2.8" fill="none" stroke-linecap="round" opacity="0.85"/><path d="M1118.0 240.0 Q1123.0 230.8 1122.9 221.7" stroke="#4a5a38" stroke-width="3.0" fill="none" stroke-linecap="round" opacity="0.85"/><path d="M1118.0 240.0 Q1131.5 252.2 1145.9 257.8" stroke="#869672" stroke-width="2.3" fill="none" stroke-linecap="round" opacity="0.85"/><path d="M1118.0 240.0 Q1120.6 255.8 1127.4 267.5" stroke="#869672" stroke-width="2.3" fill="none" stroke-linecap="round" opacity="0.85"/><path d="M1118.0 240.0 Q1112.2 232.0 1109.4 224.2" stroke="#7b8c6a" stroke-width="1.4" fill="none" stroke-linecap="round" opacity="0.85"/><path d="M1118.0 240.0 Q1124.6 252.2 1134.2 259.4" stroke="#7b8c6a" stroke-width="1.3" fill="none" stroke-linecap="round" opacity="0.85"/><path d="M1118.0 240.0 Q1116.5 228.8 1111.7 220.5" stroke="#4a5a38" stroke-width="1.5" fill="none" stroke-linecap="round" opacity="0.85"/><path d="M1118.0 240.0 Q1135.5 240.7 1149.9 241.3" stroke="#4a5a38" stroke-width="2.1" fill="none" stroke-linecap="round" opacity="0.85"/><path d="M1118.0 240.0 Q1116.9 253.5 1110.8 263.7" stroke="#869672" stroke-width="2.1" fill="none" stroke-linecap="round" opacity="0.85"/><path d="M1118.0 240.0 Q1105.6 230.9 1099.8 218.8" stroke="#4a5a38" stroke-width="1.3" fill="none" stroke-linecap="round" opacity="0.85"/><path d="M1118.0 240.0 Q1116.5 220.8 1115.0 205.1" stroke="#55663f" stroke-width="2.8" fill="none" stroke-linecap="round" opacity="0.85"/><path d="M1118.0 240.0 Q1100.0 242.5 1085.1 243.2" stroke="#869672" stroke-width="1.3" fill="none" stroke-linecap="round" opacity="0.85"/><path d="M1118.0 240.0 Q1124.8 246.8 1130.3 252.6" stroke="#6f8060" stroke-width="2.5" fill="none" stroke-linecap="round" opacity="0.85"/><path d="M1118.0 240.0 Q1101.2 238.6 1087.8 235.1" stroke="#7b8c6a" stroke-width="1.6" fill="none" stroke-linecap="round" opacity="0.85"/><path d="M1118.0 240.0 Q1116.4 249.1 1117.8 256.8" stroke="#6f8060" stroke-width="1.8" fill="none" stroke-linecap="round" opacity="0.85"/><path d="M1118.0 240.0 Q1107.1 248.8 1097.1 254.5" stroke="#4a5a38" stroke-width="1.7" fill="none" stroke-linecap="round" opacity="0.85"/><path d="M1118.0 240.0 Q1123.2 252.9 1125.3 264.2" stroke="#627352" stroke-width="1.4" fill="none" stroke-linecap="round" opacity="0.85"/><path d="M1118.0 240.0 Q1114.2 254.4 1109.8 265.8" stroke="#55663f" stroke-width="2.5" fill="none" stroke-linecap="round" opacity="0.85"/><path d="M1118.0 240.0 Q1105.4 236.9 1095.8 232.1" stroke="#7b8c6a" stroke-width="2.3" fill="none" stroke-linecap="round" opacity="0.85"/><path d="M1118.0 240.0 Q1128.5 241.8 1137.4 240.8" stroke="#4a5a38" stroke-width="3.0" fill="none" stroke-linecap="round" opacity="0.85"/><path d="M1118.0 240.0 Q1130.7 245.9 1141.6 249.4" stroke="#7b8c6a" stroke-width="2.3" fill="none" stroke-linecap="round" opacity="0.85"/><path d="M1118.0 240.0 Q1104.7 231.1 1097.6 219.2" stroke="#869672" stroke-width="2.4" fill="none" stroke-linecap="round" opacity="0.85"/><path d="M1118.0 240.0 Q1133.4 240.7 1145.1 246.9" stroke="#627352" stroke-width="2.5" fill="none" stroke-linecap="round" opacity="0.85"/><path d="M1118.0 240.0 Q1123.7 247.1 1124.9 255.0" stroke="#869672" stroke-width="2.7" fill="none" stroke-linecap="round" opacity="0.85"/><path d="M1118.0 240.0 Q1124.1 231.9 1130.8 226.7" stroke="#869672" stroke-width="1.8" fill="none" stroke-linecap="round" opacity="0.85"/><path d="M1118.0 240.0 Q1113.4 252.3 1110.3 262.6" stroke="#7b8c6a" stroke-width="1.8" fill="none" stroke-linecap="round" opacity="0.85"/><path d="M1118.0 240.0 Q1100.3 235.3 1088.6 224.3" stroke="#4a5a38" stroke-width="2.2" fill="none" stroke-linecap="round" opacity="0.85"/><path d="M1118.0 240.0 Q1131.0 251.4 1141.0 261.3" stroke="#7b8c6a" stroke-width="2.4" fill="none" stroke-linecap="round" opacity="0.85"/><path d="M1118.0 240.0 Q1130.1 244.1 1141.1 242.1" stroke="#869672" stroke-width="2.4" fill="none" stroke-linecap="round" opacity="0.85"/><path d="M1118.0 240.0 Q1105.2 242.2 1094.6 243.6" stroke="#869672" stroke-width="1.4" fill="none" stroke-linecap="round" opacity="0.85"/><path d="M1118.0 240.0 Q1130.9 231.8 1140.1 223.1" stroke="#55663f" stroke-width="2.1" fill="none" stroke-linecap="round" opacity="0.85"/><path d="M1118.0 240.0 Q1133.8 250.3 1142.8 263.8" stroke="#55663f" stroke-width="1.4" fill="none" stroke-linecap="round" opacity="0.85"/><path d="M1118.0 240.0 Q1133.8 243.8 1147.4 243.3" stroke="#869672" stroke-width="1.7" fill="none" stroke-linecap="round" opacity="0.85"/><path d="M1118.0 240.0 Q1129.9 236.2 1138.2 229.4" stroke="#869672" stroke-width="2.7" fill="none" stroke-linecap="round" opacity="0.85"/><path d="M1118.0 240.0 Q1116.8 230.5 1115.8 222.8" stroke="#869672" stroke-width="2.5" fill="none" stroke-linecap="round" opacity="0.85"/><path d="M1118.0 240.0 Q1111.0 223.3 1102.1 211.2" stroke="#55663f" stroke-width="3.0" fill="none" stroke-linecap="round" opacity="0.85"/><path d="M1118.0 240.0 Q1126.7 238.8 1134.0 241.1" stroke="#4a5a38" stroke-width="2.5" fill="none" stroke-linecap="round" opacity="0.85"/><path d="M1118.0 240.0 Q1111.0 254.8 1106.8 267.6" stroke="#7b8c6a" stroke-width="1.5" fill="none" stroke-linecap="round" opacity="0.85"/><path d="M1118.0 240.0 Q1109.0 256.4 1104.2 271.1" stroke="#7b8c6a" stroke-width="2.7" fill="none" stroke-linecap="round" opacity="0.85"/><path d="M1118.0 240.0 Q1130.6 251.6 1137.1 264.6" stroke="#869672" stroke-width="1.9" fill="none" stroke-linecap="round" opacity="0.85"/><path d="M1118.0 240.0 Q1125.1 228.3 1126.0 216.4" stroke="#7b8c6a" stroke-width="2.8" fill="none" stroke-linecap="round" opacity="0.85"/><path d="M1118.0 240.0 Q1122.0 225.9 1123.8 214.0" stroke="#55663f" stroke-width="1.8" fill="none" stroke-linecap="round" opacity="0.85"/><path d="M1118.0 240.0 Q1109.6 225.0 1099.8 214.7" stroke="#4a5a38" stroke-width="2.4" fill="none" stroke-linecap="round" opacity="0.85"/><path d="M1118.0 240.0 Q1128.2 240.6 1136.6 241.8" stroke="#4a5a38" stroke-width="2.9" fill="none" stroke-linecap="round" opacity="0.85"/><path d="M1118.0 240.0 Q1128.7 233.2 1135.5 225.1" stroke="#4a5a38" stroke-width="2.6" fill="none" stroke-linecap="round" opacity="0.85"/><path d="M1118.0 240.0 Q1120.9 253.1 1120.4 264.3" stroke="#6f8060" stroke-width="2.6" fill="none" stroke-linecap="round" opacity="0.85"/><path d="M1118.0 240.0 Q1105.7 248.3 1094.1 252.7" stroke="#55663f" stroke-width="2.8" fill="none" stroke-linecap="round" opacity="0.85"/><path d="M1118.0 240.0 Q1131.0 252.6 1138.9 265.4" stroke="#627352" stroke-width="3.2" fill="none" stroke-linecap="round" opacity="0.85"/><path d="M1118.0 240.0 Q1127.1 225.4 1136.6 214.8" stroke="#7b8c6a" stroke-width="2.6" fill="none" stroke-linecap="round" opacity="0.85"/><path d="M1118.0 240.0 Q1129.3 249.1 1140.7 253.5" stroke="#627352" stroke-width="2.8" fill="none" stroke-linecap="round" opacity="0.85"/><path d="M1118.0 240.0 Q1116.4 221.0 1112.0 205.9" stroke="#55663f" stroke-width="1.8" fill="none" stroke-linecap="round" opacity="0.85"/><path d="M1118.0 240.0 Q1107.2 240.8 1098.7 244.3" stroke="#55663f" stroke-width="1.7" fill="none" stroke-linecap="round" opacity="0.85"/><path d="M1118.0 240.0 Q1109.1 243.6 1101.1 244.4" stroke="#55663f" stroke-width="2.8" fill="none" stroke-linecap="round" opacity="0.85"/><path d="M1118.0 240.0 Q1101.4 232.8 1089.0 224.2" stroke="#4a5a38" stroke-width="3.0" fill="none" stroke-linecap="round" opacity="0.85"/><path d="M1118.0 240.0 Q1107.3 241.3 1098.4 239.2" stroke="#55663f" stroke-width="1.6" fill="none" stroke-linecap="round" opacity="0.85"/><path d="M1118.0 240.0 Q1115.9 227.7 1111.1 218.3" stroke="#7b8c6a" stroke-width="2.3" fill="none" stroke-linecap="round" opacity="0.85"/><path d="M1118.0 240.0 Q1124.4 230.8 1130.8 224.0" stroke="#7b8c6a" stroke-width="3.0" fill="none" stroke-linecap="round" opacity="0.85"/><path d="M1118.0 240.0 Q1130.9 248.3 1139.9 257.3" stroke="#627352" stroke-width="2.8" fill="none" stroke-linecap="round" opacity="0.85"/><path d="M1118.0 240.0 Q1129.6 239.5 1138.8 244.0" stroke="#55663f" stroke-width="2.4" fill="none" stroke-linecap="round" opacity="0.85"/><path d="M1118.0 240.0 Q1135.5 236.4 1150.4 238.0" stroke="#4a5a38" stroke-width="2.2" fill="none" stroke-linecap="round" opacity="0.85"/><path d="M1118.0 240.0 Q1129.0 236.2 1136.9 230.5" stroke="#7b8c6a" stroke-width="1.4" fill="none" stroke-linecap="round" opacity="0.85"/><path d="M1118.0 240.0 Q1124.5 222.3 1132.4 208.9" stroke="#55663f" stroke-width="1.7" fill="none" stroke-linecap="round" opacity="0.85"/><path d="M1118.0 240.0 Q1130.7 239.9 1141.0 239.2" stroke="#55663f" stroke-width="1.3" fill="none" stroke-linecap="round" opacity="0.85"/><path d="M1118.0 240.0 Q1128.9 232.0 1134.9 222.2" stroke="#55663f" stroke-width="3.1" fill="none" stroke-linecap="round" opacity="0.85"/><path d="M1118.0 240.0 Q1104.6 227.3 1096.6 214.2" stroke="#55663f" stroke-width="2.6" fill="none" stroke-linecap="round" opacity="0.85"/><path d="M1118.0 240.0 Q1103.8 233.9 1092.2 228.9" stroke="#869672" stroke-width="3.1" fill="none" stroke-linecap="round" opacity="0.85"/><path d="M1118.0 240.0 Q1121.1 257.4 1131.2 269.3" stroke="#627352" stroke-width="1.9" fill="none" stroke-linecap="round" opacity="0.85"/><path d="M1118.0 240.0 Q1121.5 248.4 1120.9 256.2" stroke="#6f8060" stroke-width="1.7" fill="none" stroke-linecap="round" opacity="0.85"/><path d="M1118.0 240.0 Q1110.0 235.9 1102.6 234.7" stroke="#6f8060" stroke-width="3.0" fill="none" stroke-linecap="round" opacity="0.85"/><path d="M1118.0 240.0 Q1111.2 226.1 1110.9 212.7" stroke="#55663f" stroke-width="3.2" fill="none" stroke-linecap="round" opacity="0.85"/><path d="M1118.0 240.0 Q1115.2 248.3 1111.5 254.4" stroke="#869672" stroke-width="1.6" fill="none" stroke-linecap="round" opacity="0.85"/><path d="M1118.0 240.0 Q1103.4 231.8 1092.5 223.5" stroke="#6f8060" stroke-width="1.4" fill="none" stroke-linecap="round" opacity="0.85"/><path d="M1118.0 240.0 Q1109.4 249.3 1100.3 254.6" stroke="#7b8c6a" stroke-width="2.0" fill="none" stroke-linecap="round" opacity="0.85"/><path d="M1118.0 240.0 Q1125.1 254.2 1135.9 262.5" stroke="#869672" stroke-width="1.2" fill="none" stroke-linecap="round" opacity="0.85"/><path d="M1118.0 240.0 Q1123.2 231.1 1123.7 222.1" stroke="#55663f" stroke-width="2.9" fill="none" stroke-linecap="round" opacity="0.85"/><path d="M1118.0 240.0 Q1132.8 229.7 1140.0 215.6" stroke="#7b8c6a" stroke-width="1.5" fill="none" stroke-linecap="round" opacity="0.85"/><path d="M1118.0 240.0 Q1129.2 234.0 1138.7 229.6" stroke="#55663f" stroke-width="1.2" fill="none" stroke-linecap="round" opacity="0.85"/><path d="M1118.0 240.0 Q1109.7 255.3 1101.1 266.7" stroke="#869672" stroke-width="2.2" fill="none" stroke-linecap="round" opacity="0.85"/><path d="M1118.0 240.0 Q1109.5 254.1 1103.3 266.0" stroke="#7b8c6a" stroke-width="1.6" fill="none" stroke-linecap="round" opacity="0.85"/><path d="M1118.0 240.0 Q1130.7 252.6 1138.0 265.7" stroke="#7b8c6a" stroke-width="1.7" fill="none" stroke-linecap="round" opacity="0.85"/><path d="M1118.0 240.0 Q1132.7 240.6 1144.4 244.3" stroke="#627352" stroke-width="1.8" fill="none" stroke-linecap="round" opacity="0.85"/><path d="M1118.0 240.0 Q1126.1 250.8 1137.0 255.5" stroke="#627352" stroke-width="2.2" fill="none" stroke-linecap="round" opacity="0.85"/><path d="M1118.0 240.0 Q1134.8 246.8 1148.9 251.5" stroke="#627352" stroke-width="2.5" fill="none" stroke-linecap="round" opacity="0.85"/><path d="M1118.0 240.0 Q1122.8 231.3 1127.2 224.5" stroke="#6f8060" stroke-width="2.7" fill="none" stroke-linecap="round" opacity="0.85"/><path d="M1118.0 240.0 Q1118.4 251.2 1116.5 260.3" stroke="#7b8c6a" stroke-width="1.7" fill="none" stroke-linecap="round" opacity="0.85"/><path d="M1118.0 240.0 Q1124.3 233.2 1131.4 229.8" stroke="#6f8060" stroke-width="2.7" fill="none" stroke-linecap="round" opacity="0.85"/><path d="M1118.0 240.0 Q1107.8 231.4 1102.5 221.3" stroke="#4a5a38" stroke-width="2.2" fill="none" stroke-linecap="round" opacity="0.85"/><path d="M1118.0 240.0 Q1135.4 239.0 1149.8 240.4" stroke="#627352" stroke-width="2.3" fill="none" stroke-linecap="round" opacity="0.85"/><path d="M1118.0 240.0 Q1131.0 241.0 1140.9 246.0" stroke="#627352" stroke-width="1.8" fill="none" stroke-linecap="round" opacity="0.85"/><path d="M1118.0 240.0 Q1124.4 255.6 1131.0 267.7" stroke="#627352" stroke-width="2.6" fill="none" stroke-linecap="round" opacity="0.85"/><path d="M1118.0 240.0 Q1123.9 222.9 1133.6 211.1" stroke="#6f8060" stroke-width="2.7" fill="none" stroke-linecap="round" opacity="0.85"/><path d="M1118.0 240.0 Q1127.8 252.4 1136.7 261.7" stroke="#627352" stroke-width="2.5" fill="none" stroke-linecap="round" opacity="0.85"/><path d="M1118.0 240.0 Q1119.2 249.3 1123.0 256.3" stroke="#7b8c6a" stroke-width="2.7" fill="none" stroke-linecap="round" opacity="0.85"/><path d="M1118.0 240.0 Q1131.3 235.1 1140.2 227.1" stroke="#6f8060" stroke-width="1.9" fill="none" stroke-linecap="round" opacity="0.85"/><circle cx="960" cy="207" r="14.0" fill="#607049"/><circle cx="960" cy="207" r="7.2" fill="#4c5b3a"/><path d="M960.0 207.0 Q963.6 200.9 968.6 197.2" stroke="#7b8c6a" stroke-width="1.2" fill="none" stroke-linecap="round" opacity="0.85"/><path d="M960.0 207.0 Q956.0 202.8 954.7 197.9" stroke="#6f8060" stroke-width="2.3" fill="none" stroke-linecap="round" opacity="0.85"/><path d="M960.0 207.0 Q957.8 199.7 955.9 193.8" stroke="#6f8060" stroke-width="2.9" fill="none" stroke-linecap="round" opacity="0.85"/><path d="M960.0 207.0 Q953.5 210.3 947.6 211.4" stroke="#869672" stroke-width="1.4" fill="none" stroke-linecap="round" opacity="0.85"/><path d="M960.0 207.0 Q964.9 198.9 968.3 192.0" stroke="#7b8c6a" stroke-width="2.8" fill="none" stroke-linecap="round" opacity="0.85"/><path d="M960.0 207.0 Q964.8 203.4 968.8 200.4" stroke="#869672" stroke-width="1.4" fill="none" stroke-linecap="round" opacity="0.85"/><path d="M960.0 207.0 Q952.7 207.3 946.7 205.9" stroke="#55663f" stroke-width="2.3" fill="none" stroke-linecap="round" opacity="0.85"/><path d="M960.0 207.0 Q967.1 210.3 972.1 214.5" stroke="#6f8060" stroke-width="1.5" fill="none" stroke-linecap="round" opacity="0.85"/><path d="M960.0 207.0 Q962.4 203.0 963.4 199.3" stroke="#869672" stroke-width="1.4" fill="none" stroke-linecap="round" opacity="0.85"/><path d="M960.0 207.0 Q959.3 216.0 958.8 223.3" stroke="#7b8c6a" stroke-width="2.5" fill="none" stroke-linecap="round" opacity="0.85"/><path d="M960.0 207.0 Q957.8 202.5 957.3 198.3" stroke="#869672" stroke-width="2.9" fill="none" stroke-linecap="round" opacity="0.85"/><path d="M960.0 207.0 Q960.4 214.0 958.2 219.6" stroke="#6f8060" stroke-width="2.4" fill="none" stroke-linecap="round" opacity="0.85"/><path d="M960.0 207.0 Q965.4 214.5 972.2 218.7" stroke="#627352" stroke-width="2.3" fill="none" stroke-linecap="round" opacity="0.85"/><path d="M960.0 207.0 Q963.1 213.9 968.3 218.0" stroke="#627352" stroke-width="2.7" fill="none" stroke-linecap="round" opacity="0.85"/><path d="M960.0 207.0 Q967.6 209.2 974.3 208.7" stroke="#4a5a38" stroke-width="2.6" fill="none" stroke-linecap="round" opacity="0.85"/><path d="M960.0 207.0 Q953.4 206.5 948.1 205.1" stroke="#6f8060" stroke-width="3.1" fill="none" stroke-linecap="round" opacity="0.85"/><path d="M960.0 207.0 Q959.4 213.3 960.7 218.4" stroke="#4a5a38" stroke-width="2.1" fill="none" stroke-linecap="round" opacity="0.85"/><path d="M960.0 207.0 Q967.2 201.7 973.8 198.6" stroke="#55663f" stroke-width="2.9" fill="none" stroke-linecap="round" opacity="0.85"/><path d="M960.0 207.0 Q964.4 213.9 969.0 218.8" stroke="#7b8c6a" stroke-width="1.9" fill="none" stroke-linecap="round" opacity="0.85"/><path d="M960.0 207.0 Q965.0 207.2 969.2 207.7" stroke="#6f8060" stroke-width="1.6" fill="none" stroke-linecap="round" opacity="0.85"/><path d="M960.0 207.0 Q955.5 206.2 951.7 206.8" stroke="#7b8c6a" stroke-width="1.5" fill="none" stroke-linecap="round" opacity="0.85"/><path d="M960.0 207.0 Q966.4 202.4 973.3 201.5" stroke="#55663f" stroke-width="2.8" fill="none" stroke-linecap="round" opacity="0.85"/><path d="M960.0 207.0 Q956.6 202.2 953.2 198.7" stroke="#6f8060" stroke-width="2.6" fill="none" stroke-linecap="round" opacity="0.85"/><path d="M960.0 207.0 Q961.7 202.7 962.9 199.1" stroke="#55663f" stroke-width="1.4" fill="none" stroke-linecap="round" opacity="0.85"/><path d="M960.0 207.0 Q951.5 211.6 944.0 214.1" stroke="#6f8060" stroke-width="1.8" fill="none" stroke-linecap="round" opacity="0.85"/><path d="M960.0 207.0 Q961.5 211.5 964.3 214.5" stroke="#4a5a38" stroke-width="3.1" fill="none" stroke-linecap="round" opacity="0.85"/><path d="M960.0 207.0 Q967.2 209.6 972.0 214.1" stroke="#7b8c6a" stroke-width="3.1" fill="none" stroke-linecap="round" opacity="0.85"/><path d="M960.0 207.0 Q964.6 211.0 967.5 215.1" stroke="#6f8060" stroke-width="2.0" fill="none" stroke-linecap="round" opacity="0.85"/><path d="M960.0 207.0 Q959.7 198.5 958.6 191.6" stroke="#7b8c6a" stroke-width="1.8" fill="none" stroke-linecap="round" opacity="0.85"/><path d="M960.0 207.0 Q952.6 204.1 946.9 200.8" stroke="#869672" stroke-width="1.6" fill="none" stroke-linecap="round" opacity="0.85"/><path d="M960.0 207.0 Q963.7 202.2 968.6 200.0" stroke="#6f8060" stroke-width="2.2" fill="none" stroke-linecap="round" opacity="0.85"/><path d="M960.0 207.0 Q957.5 211.9 955.0 215.6" stroke="#4a5a38" stroke-width="2.3" fill="none" stroke-linecap="round" opacity="0.85"/><path d="M960.0 207.0 Q964.8 204.7 968.6 202.5" stroke="#6f8060" stroke-width="3.1" fill="none" stroke-linecap="round" opacity="0.85"/><path d="M960.0 207.0 Q954.2 208.6 949.1 207.6" stroke="#6f8060" stroke-width="3.2" fill="none" stroke-linecap="round" opacity="0.85"/><path d="M960.0 207.0 Q967.4 207.8 973.4 208.8" stroke="#6f8060" stroke-width="2.4" fill="none" stroke-linecap="round" opacity="0.85"/><path d="M960.0 207.0 Q965.7 210.3 971.0 211.5" stroke="#869672" stroke-width="2.1" fill="none" stroke-linecap="round" opacity="0.85"/><path d="M960.0 207.0 Q950.2 206.1 942.3 204.7" stroke="#627352" stroke-width="2.6" fill="none" stroke-linecap="round" opacity="0.85"/><path d="M960.0 207.0 Q958.3 202.1 955.3 198.7" stroke="#4a5a38" stroke-width="1.6" fill="none" stroke-linecap="round" opacity="0.85"/><path d="M960.0 207.0 Q964.5 201.2 965.7 195.1" stroke="#869672" stroke-width="2.7" fill="none" stroke-linecap="round" opacity="0.85"/><path d="M960.0 207.0 Q965.8 208.1 970.8 206.7" stroke="#869672" stroke-width="2.5" fill="none" stroke-linecap="round" opacity="0.85"/><path d="M960.0 207.0 Q966.1 213.9 971.7 219.0" stroke="#4a5a38" stroke-width="1.2" fill="none" stroke-linecap="round" opacity="0.85"/><path d="M960.0 207.0 Q950.4 205.4 942.4 207.2" stroke="#7b8c6a" stroke-width="2.3" fill="none" stroke-linecap="round" opacity="0.85"/><path d="M960.0 207.0 Q957.8 214.5 957.4 221.0" stroke="#7b8c6a" stroke-width="1.4" fill="none" stroke-linecap="round" opacity="0.85"/><path d="M960.0 207.0 Q958.3 213.1 957.3 218.3" stroke="#4a5a38" stroke-width="1.9" fill="none" stroke-linecap="round" opacity="0.85"/><path d="M960.0 207.0 Q955.6 211.4 951.6 214.5" stroke="#7b8c6a" stroke-width="2.8" fill="none" stroke-linecap="round" opacity="0.85"/><path d="M960.0 207.0 Q957.5 213.9 955.9 219.8" stroke="#7b8c6a" stroke-width="2.8" fill="none" stroke-linecap="round" opacity="0.85"/><path d="M960.0 207.0 Q956.4 203.6 952.2 202.6" stroke="#6f8060" stroke-width="3.0" fill="none" stroke-linecap="round" opacity="0.85"/><path d="M960.0 207.0 Q956.3 202.6 951.8 200.4" stroke="#7b8c6a" stroke-width="1.9" fill="none" stroke-linecap="round" opacity="0.85"/><path d="M960.0 207.0 Q964.3 205.3 968.0 204.7" stroke="#7b8c6a" stroke-width="1.7" fill="none" stroke-linecap="round" opacity="0.85"/><path d="M960.0 207.0 Q954.0 205.6 949.1 204.5" stroke="#7b8c6a" stroke-width="2.4" fill="none" stroke-linecap="round" opacity="0.85"/><path d="M960.0 207.0 Q951.9 208.0 945.2 205.4" stroke="#6f8060" stroke-width="2.0" fill="none" stroke-linecap="round" opacity="0.85"/><path d="M960.0 207.0 Q957.0 200.8 954.4 195.7" stroke="#55663f" stroke-width="1.2" fill="none" stroke-linecap="round" opacity="0.85"/><path d="M960.0 207.0 Q964.4 211.8 969.6 213.9" stroke="#4a5a38" stroke-width="2.0" fill="none" stroke-linecap="round" opacity="0.85"/><path d="M960.0 207.0 Q963.2 211.4 965.6 215.2" stroke="#7b8c6a" stroke-width="2.0" fill="none" stroke-linecap="round" opacity="0.85"/><path d="M960.0 207.0 Q953.9 199.2 947.3 194.3" stroke="#4a5a38" stroke-width="1.9" fill="none" stroke-linecap="round" opacity="0.85"/><ellipse cx="1052" cy="262" rx="15" ry="28" fill="#7d8e6a" opacity="0.9"/><ellipse cx="985" cy="322" rx="14" ry="24" fill="#8a9e72" opacity="0.9"/><ellipse cx="983" cy="372" rx="15" ry="26" fill="#8a9e72" opacity="0.9"/><rect x="640" y="415" width="169" height="137" fill="url(#wood)" /><polygon points="624,393 646,393 618,552 766,552 766,571 596,571" fill="#dcdcdc" /><polygon points="646,395 668,415 668,552 618,552" fill="#5d6b4a" /><circle cx="634" cy="434" r="25.0" fill="#607049"/><circle cx="634" cy="434" r="12.8" fill="#4c5b3a"/><path d="M634.0 434.0 Q642.4 441.7 651.4 445.4" stroke="#55663f" stroke-width="1.9" fill="none" stroke-linecap="round" opacity="0.85"/><path d="M634.0 434.0 Q625.0 434.0 617.7 432.7" stroke="#869672" stroke-width="3.0" fill="none" stroke-linecap="round" opacity="0.85"/><path d="M634.0 434.0 Q644.8 427.0 655.5 424.8" stroke="#869672" stroke-width="3.1" fill="none" stroke-linecap="round" opacity="0.85"/><path d="M634.0 434.0 Q631.4 446.6 628.2 456.7" stroke="#627352" stroke-width="2.2" fill="none" stroke-linecap="round" opacity="0.85"/><path d="M634.0 434.0 Q644.9 441.8 656.6 443.0" stroke="#4a5a38" stroke-width="1.4" fill="none" stroke-linecap="round" opacity="0.85"/><path d="M634.0 434.0 Q628.0 428.3 624.1 422.5" stroke="#55663f" stroke-width="2.0" fill="none" stroke-linecap="round" opacity="0.85"/><path d="M634.0 434.0 Q631.4 426.5 628.7 420.5" stroke="#55663f" stroke-width="1.8" fill="none" stroke-linecap="round" opacity="0.85"/><path d="M634.0 434.0 Q629.5 425.3 625.2 418.5" stroke="#4a5a38" stroke-width="2.2" fill="none" stroke-linecap="round" opacity="0.85"/><path d="M634.0 434.0 Q645.9 422.4 654.8 412.2" stroke="#627352" stroke-width="2.2" fill="none" stroke-linecap="round" opacity="0.85"/><path d="M634.0 434.0 Q627.4 440.2 620.0 442.8" stroke="#4a5a38" stroke-width="1.5" fill="none" stroke-linecap="round" opacity="0.85"/><path d="M634.0 434.0 Q641.4 440.1 648.1 444.2" stroke="#7b8c6a" stroke-width="2.2" fill="none" stroke-linecap="round" opacity="0.85"/><path d="M634.0 434.0 Q636.2 425.8 639.4 419.5" stroke="#4a5a38" stroke-width="1.2" fill="none" stroke-linecap="round" opacity="0.85"/><path d="M634.0 434.0 Q632.3 422.8 629.6 413.9" stroke="#6f8060" stroke-width="1.5" fill="none" stroke-linecap="round" opacity="0.85"/><path d="M634.0 434.0 Q644.5 420.5 653.7 410.0" stroke="#627352" stroke-width="1.3" fill="none" stroke-linecap="round" opacity="0.85"/><path d="M634.0 434.0 Q627.0 438.7 622.4 444.1" stroke="#4a5a38" stroke-width="3.0" fill="none" stroke-linecap="round" opacity="0.85"/><path d="M634.0 434.0 Q642.4 434.4 648.8 438.2" stroke="#627352" stroke-width="1.7" fill="none" stroke-linecap="round" opacity="0.85"/><path d="M634.0 434.0 Q647.9 425.8 660.7 421.6" stroke="#7b8c6a" stroke-width="1.8" fill="none" stroke-linecap="round" opacity="0.85"/><path d="M634.0 434.0 Q619.0 425.5 609.0 415.2" stroke="#55663f" stroke-width="2.2" fill="none" stroke-linecap="round" opacity="0.85"/><path d="M634.0 434.0 Q623.0 444.1 613.2 451.3" stroke="#6f8060" stroke-width="1.6" fill="none" stroke-linecap="round" opacity="0.85"/><path d="M634.0 434.0 Q630.8 426.5 630.5 419.6" stroke="#55663f" stroke-width="2.9" fill="none" stroke-linecap="round" opacity="0.85"/><path d="M634.0 434.0 Q628.3 441.9 622.9 447.7" stroke="#6f8060" stroke-width="3.1" fill="none" stroke-linecap="round" opacity="0.85"/><path d="M634.0 434.0 Q627.1 442.8 620.8 449.4" stroke="#6f8060" stroke-width="2.9" fill="none" stroke-linecap="round" opacity="0.85"/><path d="M634.0 434.0 Q642.3 437.9 649.2 440.6" stroke="#6f8060" stroke-width="2.9" fill="none" stroke-linecap="round" opacity="0.85"/><path d="M634.0 434.0 Q626.7 444.0 616.8 448.7" stroke="#7b8c6a" stroke-width="1.9" fill="none" stroke-linecap="round" opacity="0.85"/><path d="M634.0 434.0 Q626.6 425.6 623.5 416.5" stroke="#869672" stroke-width="1.5" fill="none" stroke-linecap="round" opacity="0.85"/><path d="M634.0 434.0 Q638.7 446.3 641.9 456.6" stroke="#4a5a38" stroke-width="2.8" fill="none" stroke-linecap="round" opacity="0.85"/><path d="M634.0 434.0 Q640.1 419.5 648.7 409.5" stroke="#6f8060" stroke-width="1.5" fill="none" stroke-linecap="round" opacity="0.85"/><path d="M634.0 434.0 Q620.9 439.1 612.9 448.3" stroke="#6f8060" stroke-width="2.4" fill="none" stroke-linecap="round" opacity="0.85"/><path d="M634.0 434.0 Q624.2 431.5 615.6 433.4" stroke="#627352" stroke-width="2.1" fill="none" stroke-linecap="round" opacity="0.85"/><path d="M634.0 434.0 Q647.7 434.1 658.9 433.7" stroke="#6f8060" stroke-width="2.1" fill="none" stroke-linecap="round" opacity="0.85"/><path d="M634.0 434.0 Q622.8 440.3 614.7 447.2" stroke="#55663f" stroke-width="1.5" fill="none" stroke-linecap="round" opacity="0.85"/><path d="M634.0 434.0 Q649.2 439.4 658.7 450.0" stroke="#7b8c6a" stroke-width="2.7" fill="none" stroke-linecap="round" opacity="0.85"/><path d="M634.0 434.0 Q630.3 425.4 630.6 417.4" stroke="#869672" stroke-width="1.2" fill="none" stroke-linecap="round" opacity="0.85"/><path d="M634.0 434.0 Q638.2 449.6 647.0 460.3" stroke="#869672" stroke-width="1.8" fill="none" stroke-linecap="round" opacity="0.85"/><path d="M634.0 434.0 Q650.1 438.5 661.7 446.6" stroke="#6f8060" stroke-width="2.8" fill="none" stroke-linecap="round" opacity="0.85"/><path d="M634.0 434.0 Q631.9 425.5 630.9 418.4" stroke="#869672" stroke-width="1.8" fill="none" stroke-linecap="round" opacity="0.85"/><path d="M634.0 434.0 Q621.8 444.5 615.9 457.0" stroke="#869672" stroke-width="2.1" fill="none" stroke-linecap="round" opacity="0.85"/><path d="M634.0 434.0 Q639.4 426.6 644.8 421.2" stroke="#55663f" stroke-width="1.8" fill="none" stroke-linecap="round" opacity="0.85"/><path d="M634.0 434.0 Q639.6 420.5 642.1 408.7" stroke="#55663f" stroke-width="3.0" fill="none" stroke-linecap="round" opacity="0.85"/><path d="M634.0 434.0 Q632.8 423.7 628.1 416.2" stroke="#6f8060" stroke-width="2.9" fill="none" stroke-linecap="round" opacity="0.85"/><path d="M634.0 434.0 Q642.0 441.2 650.0 445.2" stroke="#4a5a38" stroke-width="1.7" fill="none" stroke-linecap="round" opacity="0.85"/><path d="M634.0 434.0 Q631.8 426.0 630.5 419.3" stroke="#627352" stroke-width="1.3" fill="none" stroke-linecap="round" opacity="0.85"/><path d="M634.0 434.0 Q633.5 424.6 634.7 416.9" stroke="#4a5a38" stroke-width="2.7" fill="none" stroke-linecap="round" opacity="0.85"/><path d="M634.0 434.0 Q627.8 426.6 622.7 420.6" stroke="#4a5a38" stroke-width="2.9" fill="none" stroke-linecap="round" opacity="0.85"/><path d="M634.0 434.0 Q617.1 433.1 603.6 430.0" stroke="#4a5a38" stroke-width="2.5" fill="none" stroke-linecap="round" opacity="0.85"/><path d="M634.0 434.0 Q649.7 437.3 663.1 434.2" stroke="#6f8060" stroke-width="2.8" fill="none" stroke-linecap="round" opacity="0.85"/><path d="M634.0 434.0 Q644.4 425.3 651.5 416.5" stroke="#627352" stroke-width="2.6" fill="none" stroke-linecap="round" opacity="0.85"/><path d="M634.0 434.0 Q644.3 437.9 653.5 438.6" stroke="#6f8060" stroke-width="2.8" fill="none" stroke-linecap="round" opacity="0.85"/><path d="M634.0 434.0 Q646.1 442.3 656.8 447.7" stroke="#869672" stroke-width="2.0" fill="none" stroke-linecap="round" opacity="0.85"/><path d="M634.0 434.0 Q636.7 446.7 638.3 457.3" stroke="#7b8c6a" stroke-width="1.9" fill="none" stroke-linecap="round" opacity="0.85"/><path d="M634.0 434.0 Q626.5 444.3 621.5 453.6" stroke="#869672" stroke-width="2.6" fill="none" stroke-linecap="round" opacity="0.85"/><path d="M634.0 434.0 Q619.6 433.1 607.7 432.6" stroke="#869672" stroke-width="1.6" fill="none" stroke-linecap="round" opacity="0.85"/><path d="M634.0 434.0 Q642.9 432.0 649.0 426.7" stroke="#55663f" stroke-width="2.7" fill="none" stroke-linecap="round" opacity="0.85"/><path d="M634.0 434.0 Q642.7 423.9 645.0 412.4" stroke="#627352" stroke-width="1.5" fill="none" stroke-linecap="round" opacity="0.85"/><path d="M634.0 434.0 Q623.9 425.5 618.4 415.8" stroke="#55663f" stroke-width="1.7" fill="none" stroke-linecap="round" opacity="0.85"/><path d="M634.0 434.0 Q630.3 442.0 624.8 447.1" stroke="#627352" stroke-width="2.5" fill="none" stroke-linecap="round" opacity="0.85"/><path d="M634.0 434.0 Q626.9 421.5 627.0 408.8" stroke="#627352" stroke-width="1.7" fill="none" stroke-linecap="round" opacity="0.85"/><path d="M634.0 434.0 Q629.8 425.8 628.0 418.4" stroke="#869672" stroke-width="2.5" fill="none" stroke-linecap="round" opacity="0.85"/><path d="M634.0 434.0 Q641.3 428.3 646.7 422.8" stroke="#6f8060" stroke-width="2.3" fill="none" stroke-linecap="round" opacity="0.85"/><path d="M634.0 434.0 Q642.2 442.8 650.1 448.8" stroke="#869672" stroke-width="3.1" fill="none" stroke-linecap="round" opacity="0.85"/><path d="M634.0 434.0 Q622.7 428.9 615.7 420.9" stroke="#627352" stroke-width="2.7" fill="none" stroke-linecap="round" opacity="0.85"/><path d="M634.0 434.0 Q629.1 444.3 628.9 454.1" stroke="#55663f" stroke-width="1.6" fill="none" stroke-linecap="round" opacity="0.85"/><path d="M634.0 434.0 Q632.5 442.9 628.6 449.4" stroke="#55663f" stroke-width="1.8" fill="none" stroke-linecap="round" opacity="0.85"/><path d="M634.0 434.0 Q622.6 441.1 611.0 442.3" stroke="#4a5a38" stroke-width="1.8" fill="none" stroke-linecap="round" opacity="0.85"/><path d="M634.0 434.0 Q651.2 437.3 665.8 436.2" stroke="#55663f" stroke-width="2.7" fill="none" stroke-linecap="round" opacity="0.85"/><path d="M634.0 434.0 Q626.7 447.2 620.5 457.9" stroke="#869672" stroke-width="1.7" fill="none" stroke-linecap="round" opacity="0.85"/><path d="M634.0 434.0 Q625.4 438.5 617.8 441.1" stroke="#55663f" stroke-width="2.3" fill="none" stroke-linecap="round" opacity="0.85"/><path d="M634.0 434.0 Q642.5 440.5 650.3 444.5" stroke="#869672" stroke-width="2.4" fill="none" stroke-linecap="round" opacity="0.85"/><path d="M634.0 434.0 Q636.3 444.0 633.8 452.7" stroke="#55663f" stroke-width="1.5" fill="none" stroke-linecap="round" opacity="0.85"/><path d="M634.0 434.0 Q626.6 439.6 620.6 444.4" stroke="#869672" stroke-width="1.9" fill="none" stroke-linecap="round" opacity="0.85"/><path d="M634.0 434.0 Q646.8 427.2 654.9 417.9" stroke="#869672" stroke-width="1.4" fill="none" stroke-linecap="round" opacity="0.85"/><path d="M634.0 434.0 Q632.5 423.0 633.0 413.9" stroke="#6f8060" stroke-width="1.6" fill="none" stroke-linecap="round" opacity="0.85"/><path d="M634.0 434.0 Q626.4 444.8 617.7 451.7" stroke="#6f8060" stroke-width="1.9" fill="none" stroke-linecap="round" opacity="0.85"/><path d="M634.0 434.0 Q647.1 436.8 657.6 440.2" stroke="#869672" stroke-width="2.5" fill="none" stroke-linecap="round" opacity="0.85"/><path d="M634.0 434.0 Q643.9 435.5 651.3 439.7" stroke="#869672" stroke-width="2.0" fill="none" stroke-linecap="round" opacity="0.85"/><path d="M634.0 434.0 Q631.6 447.3 626.5 457.4" stroke="#869672" stroke-width="1.4" fill="none" stroke-linecap="round" opacity="0.85"/><path d="M634.0 434.0 Q641.1 446.2 650.5 453.6" stroke="#55663f" stroke-width="2.0" fill="none" stroke-linecap="round" opacity="0.85"/><path d="M634.0 434.0 Q624.0 433.6 615.9 436.4" stroke="#55663f" stroke-width="1.9" fill="none" stroke-linecap="round" opacity="0.85"/><path d="M634.0 434.0 Q640.7 420.0 651.4 411.7" stroke="#6f8060" stroke-width="2.1" fill="none" stroke-linecap="round" opacity="0.85"/><path d="M634.0 434.0 Q648.1 438.6 659.3 443.2" stroke="#55663f" stroke-width="3.0" fill="none" stroke-linecap="round" opacity="0.85"/><path d="M634.0 434.0 Q625.2 420.8 619.4 409.0" stroke="#627352" stroke-width="3.0" fill="none" stroke-linecap="round" opacity="0.85"/><path d="M634.0 434.0 Q649.6 432.0 662.5 434.8" stroke="#4a5a38" stroke-width="2.6" fill="none" stroke-linecap="round" opacity="0.85"/><path d="M634.0 434.0 Q642.2 441.4 651.3 444.2" stroke="#4a5a38" stroke-width="2.1" fill="none" stroke-linecap="round" opacity="0.85"/><path d="M634.0 434.0 Q642.6 418.9 654.9 410.4" stroke="#4a5a38" stroke-width="3.1" fill="none" stroke-linecap="round" opacity="0.85"/><path d="M634.0 434.0 Q638.0 419.6 643.9 408.8" stroke="#869672" stroke-width="1.9" fill="none" stroke-linecap="round" opacity="0.85"/><path d="M634.0 434.0 Q617.5 429.5 605.9 420.5" stroke="#869672" stroke-width="2.2" fill="none" stroke-linecap="round" opacity="0.85"/><path d="M634.0 434.0 Q641.2 423.1 649.7 416.2" stroke="#627352" stroke-width="2.5" fill="none" stroke-linecap="round" opacity="0.85"/><path d="M634.0 434.0 Q632.1 419.5 632.3 407.5" stroke="#4a5a38" stroke-width="1.5" fill="none" stroke-linecap="round" opacity="0.85"/><path d="M634.0 434.0 Q623.4 428.5 615.0 423.4" stroke="#4a5a38" stroke-width="2.3" fill="none" stroke-linecap="round" opacity="0.85"/><path d="M634.0 434.0 Q633.1 444.1 632.7 452.4" stroke="#627352" stroke-width="3.1" fill="none" stroke-linecap="round" opacity="0.85"/><path d="M634.0 434.0 Q647.9 442.5 656.5 453.2" stroke="#55663f" stroke-width="1.7" fill="none" stroke-linecap="round" opacity="0.85"/><path d="M634.0 434.0 Q625.2 422.1 621.1 410.4" stroke="#7b8c6a" stroke-width="1.7" fill="none" stroke-linecap="round" opacity="0.85"/><path d="M634.0 434.0 Q626.0 429.8 619.3 426.8" stroke="#4a5a38" stroke-width="2.2" fill="none" stroke-linecap="round" opacity="0.85"/><path d="M634.0 434.0 Q644.6 424.1 649.7 412.8" stroke="#627352" stroke-width="2.8" fill="none" stroke-linecap="round" opacity="0.85"/><path d="M634.0 434.0 Q620.2 428.5 608.4 425.6" stroke="#55663f" stroke-width="2.7" fill="none" stroke-linecap="round" opacity="0.85"/><path d="M634.0 434.0 Q646.3 430.1 656.7 428.2" stroke="#869672" stroke-width="2.1" fill="none" stroke-linecap="round" opacity="0.85"/><path d="M634.0 434.0 Q644.8 447.4 648.9 461.5" stroke="#55663f" stroke-width="2.3" fill="none" stroke-linecap="round" opacity="0.85"/><path d="M634.0 434.0 Q633.5 425.5 636.5 418.8" stroke="#6f8060" stroke-width="1.7" fill="none" stroke-linecap="round" opacity="0.85"/><path d="M634.0 434.0 Q630.6 417.2 624.7 404.2" stroke="#55663f" stroke-width="2.1" fill="none" stroke-linecap="round" opacity="0.85"/><path d="M634.0 434.0 Q619.0 440.9 607.2 447.5" stroke="#627352" stroke-width="2.4" fill="none" stroke-linecap="round" opacity="0.85"/><path d="M634.0 434.0 Q649.4 428.4 659.8 419.3" stroke="#869672" stroke-width="1.5" fill="none" stroke-linecap="round" opacity="0.85"/><path d="M634.0 434.0 Q636.3 419.1 643.1 408.2" stroke="#6f8060" stroke-width="1.2" fill="none" stroke-linecap="round" opacity="0.85"/><path d="M634.0 434.0 Q623.5 444.8 614.9 453.6" stroke="#869672" stroke-width="3.1" fill="none" stroke-linecap="round" opacity="0.85"/><path d="M634.0 434.0 Q640.1 424.4 642.4 415.2" stroke="#6f8060" stroke-width="1.9" fill="none" stroke-linecap="round" opacity="0.85"/><path d="M634.0 434.0 Q647.6 444.0 657.3 454.0" stroke="#6f8060" stroke-width="2.6" fill="none" stroke-linecap="round" opacity="0.85"/><path d="M634.0 434.0 Q629.8 427.1 628.9 420.1" stroke="#7b8c6a" stroke-width="3.2" fill="none" stroke-linecap="round" opacity="0.85"/><path d="M634.0 434.0 Q643.0 433.6 650.2 436.1" stroke="#627352" stroke-width="2.8" fill="none" stroke-linecap="round" opacity="0.85"/><path d="M634.0 434.0 Q649.2 427.8 661.0 421.5" stroke="#627352" stroke-width="2.5" fill="none" stroke-linecap="round" opacity="0.85"/><path d="M634.0 434.0 Q630.1 451.1 633.9 466.0" stroke="#6f8060" stroke-width="2.7" fill="none" stroke-linecap="round" opacity="0.85"/><path d="M634.0 434.0 Q645.2 434.9 654.3 435.8" stroke="#4a5a38" stroke-width="1.5" fill="none" stroke-linecap="round" opacity="0.85"/><path d="M634.0 434.0 Q649.0 439.6 662.6 439.8" stroke="#4a5a38" stroke-width="1.3" fill="none" stroke-linecap="round" opacity="0.85"/><path d="M634.0 434.0 Q630.0 423.0 624.9 414.7" stroke="#627352" stroke-width="2.2" fill="none" stroke-linecap="round" opacity="0.85"/><path d="M634.0 434.0 Q625.3 439.2 616.5 439.9" stroke="#4a5a38" stroke-width="3.1" fill="none" stroke-linecap="round" opacity="0.85"/><path d="M634.0 434.0 Q628.7 442.5 625.3 450.0" stroke="#4a5a38" stroke-width="3.0" fill="none" stroke-linecap="round" opacity="0.85"/><path d="M634.0 434.0 Q637.2 449.5 640.9 462.0" stroke="#6f8060" stroke-width="2.7" fill="none" stroke-linecap="round" opacity="0.85"/><path d="M634.0 434.0 Q625.4 441.4 618.3 447.4" stroke="#4a5a38" stroke-width="1.2" fill="none" stroke-linecap="round" opacity="0.85"/><path d="M634.0 434.0 Q637.8 443.6 636.7 452.6" stroke="#4a5a38" stroke-width="3.0" fill="none" stroke-linecap="round" opacity="0.85"/><path d="M634.0 434.0 Q645.0 443.3 650.0 454.8" stroke="#6f8060" stroke-width="1.7" fill="none" stroke-linecap="round" opacity="0.85"/><path d="M634.0 434.0 Q645.2 436.0 654.6 432.9" stroke="#4a5a38" stroke-width="2.3" fill="none" stroke-linecap="round" opacity="0.85"/><path d="M634.0 434.0 Q642.2 435.1 649.0 433.3" stroke="#55663f" stroke-width="2.3" fill="none" stroke-linecap="round" opacity="0.85"/><path d="M634.0 434.0 Q638.1 420.6 637.9 408.8" stroke="#6f8060" stroke-width="2.5" fill="none" stroke-linecap="round" opacity="0.85"/><path d="M634.0 434.0 Q637.6 424.4 639.0 416.1" stroke="#627352" stroke-width="2.8" fill="none" stroke-linecap="round" opacity="0.85"/><path d="M634.0 434.0 Q626.4 447.3 624.7 460.2" stroke="#4a5a38" stroke-width="2.7" fill="none" stroke-linecap="round" opacity="0.85"/><path d="M634.0 434.0 Q638.0 449.9 634.9 463.7" stroke="#6f8060" stroke-width="2.6" fill="none" stroke-linecap="round" opacity="0.85"/><path d="M634.0 434.0 Q628.2 443.4 623.5 451.1" stroke="#7b8c6a" stroke-width="3.2" fill="none" stroke-linecap="round" opacity="0.85"/><path d="M634.0 434.0 Q644.4 422.2 656.5 416.3" stroke="#627352" stroke-width="3.2" fill="none" stroke-linecap="round" opacity="0.85"/><path d="M634.0 434.0 Q650.4 433.9 663.7 435.4" stroke="#7b8c6a" stroke-width="2.1" fill="none" stroke-linecap="round" opacity="0.85"/><path d="M634.0 434.0 Q634.7 417.1 638.3 403.5" stroke="#627352" stroke-width="2.4" fill="none" stroke-linecap="round" opacity="0.85"/><path d="M634.0 434.0 Q631.7 448.8 624.2 459.4" stroke="#6f8060" stroke-width="2.3" fill="none" stroke-linecap="round" opacity="0.85"/><path d="M634.0 434.0 Q639.6 449.9 645.3 462.5" stroke="#6f8060" stroke-width="2.4" fill="none" stroke-linecap="round" opacity="0.85"/><path d="M634.0 434.0 Q645.4 434.4 654.6 432.4" stroke="#7b8c6a" stroke-width="2.7" fill="none" stroke-linecap="round" opacity="0.85"/><path d="M634.0 434.0 Q647.2 424.9 659.7 420.3" stroke="#627352" stroke-width="1.8" fill="none" stroke-linecap="round" opacity="0.85"/><path d="M634.0 434.0 Q634.7 442.1 633.3 448.8" stroke="#6f8060" stroke-width="1.5" fill="none" stroke-linecap="round" opacity="0.85"/><path d="M634.0 434.0 Q642.4 434.1 649.1 435.9" stroke="#4a5a38" stroke-width="2.1" fill="none" stroke-linecap="round" opacity="0.85"/><path d="M634.0 434.0 Q625.4 431.9 617.8 433.8" stroke="#55663f" stroke-width="1.7" fill="none" stroke-linecap="round" opacity="0.85"/><path d="M634.0 434.0 Q626.6 429.4 621.3 424.6" stroke="#4a5a38" stroke-width="2.8" fill="none" stroke-linecap="round" opacity="0.85"/><path d="M634.0 434.0 Q639.8 441.8 645.6 447.4" stroke="#55663f" stroke-width="2.3" fill="none" stroke-linecap="round" opacity="0.85"/><path d="M634.0 434.0 Q641.5 427.4 650.0 425.6" stroke="#869672" stroke-width="1.9" fill="none" stroke-linecap="round" opacity="0.85"/><path d="M634.0 434.0 Q620.8 438.2 609.0 436.2" stroke="#627352" stroke-width="2.8" fill="none" stroke-linecap="round" opacity="0.85"/><path d="M634.0 434.0 Q626.3 437.3 621.0 441.8" stroke="#6f8060" stroke-width="2.5" fill="none" stroke-linecap="round" opacity="0.85"/><path d="M634.0 434.0 Q645.2 430.4 655.4 432.4" stroke="#55663f" stroke-width="3.1" fill="none" stroke-linecap="round" opacity="0.85"/><path d="M634.0 434.0 Q627.5 446.7 623.4 457.7" stroke="#7b8c6a" stroke-width="1.8" fill="none" stroke-linecap="round" opacity="0.85"/><path d="M634.0 434.0 Q630.6 423.4 630.7 414.1" stroke="#627352" stroke-width="1.4" fill="none" stroke-linecap="round" opacity="0.85"/><path d="M634.0 434.0 Q618.1 431.7 605.3 428.6" stroke="#6f8060" stroke-width="1.9" fill="none" stroke-linecap="round" opacity="0.85"/><path d="M634.0 434.0 Q621.9 427.7 610.0 428.0" stroke="#869672" stroke-width="2.3" fill="none" stroke-linecap="round" opacity="0.85"/><path d="M634.0 434.0 Q624.9 429.5 617.6 425.6" stroke="#869672" stroke-width="2.4" fill="none" stroke-linecap="round" opacity="0.85"/><path d="M634.0 434.0 Q646.9 440.0 659.3 439.1" stroke="#4a5a38" stroke-width="2.5" fill="none" stroke-linecap="round" opacity="0.85"/><path d="M634.0 434.0 Q624.6 438.9 615.5 439.6" stroke="#6f8060" stroke-width="2.2" fill="none" stroke-linecap="round" opacity="0.85"/><path d="M634.0 434.0 Q646.4 432.5 656.7 435.3" stroke="#6f8060" stroke-width="2.5" fill="none" stroke-linecap="round" opacity="0.85"/><path d="M634.0 434.0 Q626.4 425.0 619.2 418.5" stroke="#55663f" stroke-width="3.2" fill="none" stroke-linecap="round" opacity="0.85"/><path d="M634.0 434.0 Q644.5 441.9 651.2 450.6" stroke="#627352" stroke-width="1.6" fill="none" stroke-linecap="round" opacity="0.85"/><path d="M634.0 434.0 Q624.0 422.7 612.5 417.1" stroke="#869672" stroke-width="3.0" fill="none" stroke-linecap="round" opacity="0.85"/><path d="M634.0 434.0 Q634.7 421.0 638.3 410.7" stroke="#869672" stroke-width="1.9" fill="none" stroke-linecap="round" opacity="0.85"/><path d="M634.0 434.0 Q646.7 435.1 657.0 431.4" stroke="#6f8060" stroke-width="2.5" fill="none" stroke-linecap="round" opacity="0.85"/><rect x="701" y="453" width="37" height="62" fill="#d2d2d2" /><rect x="712" y="436" width="18" height="16" fill="#8a8a8a" /><rect x="685" y="470" width="15" height="28" fill="#8a8a8a" /><rect x="740" y="470" width="15" height="28" fill="#8a8a8a" /><rect x="657.0" y="352.0" width="129.0" height="1.8000000000000114" fill="#765c46" /><rect x="656.4" y="356.8" width="129.60000000000002" height="1.8000000000000114" fill="#765c46" /><rect x="655.9" y="361.5" width="130.10000000000002" height="1.8000000000000114" fill="#765c46" /><rect x="655.3" y="366.2" width="130.70000000000005" height="1.900000000000034" fill="#765c46" /><rect x="654.7" y="371.0" width="131.29999999999995" height="1.8000000000000114" fill="#765c46" /><rect x="654.1" y="375.8" width="131.89999999999998" height="1.8000000000000114" fill="#765c46" /><rect x="653.6" y="380.5" width="132.39999999999998" height="1.8000000000000114" fill="#765c46" /><rect x="653.0" y="385.2" width="133.0" height="1.900000000000034" fill="#765c46" /><rect x="652.4" y="390.0" width="133.60000000000002" height="1.8000000000000114" fill="#765c46" /><rect x="651.9" y="394.8" width="134.10000000000002" height="1.8000000000000114" fill="#765c46" /><rect x="651.3" y="399.5" width="134.70000000000005" height="1.8000000000000114" fill="#765c46" /><rect x="650.7" y="404.2" width="135.29999999999995" height="1.900000000000034" fill="#765c46" /><rect x="650.2" y="409.0" width="135.79999999999995" height="1.8000000000000114" fill="#765c46" /><rect x="649.6" y="413.8" width="136.39999999999998" height="1.8000000000000114" fill="#765c46" /><rect x="649.0" y="418.5" width="137.0" height="1.8000000000000114" fill="#765c46" /><rect x="648.5" y="423.2" width="137.5" height="1.900000000000034" fill="#765c46" /><rect x="647.9" y="428.0" width="138.10000000000002" height="1.8000000000000114" fill="#765c46" /><rect x="647.3" y="432.8" width="138.70000000000005" height="1.8000000000000114" fill="#765c46" /><rect x="646.7" y="437.5" width="139.29999999999995" height="1.8000000000000114" fill="#765c46" /><rect x="646.2" y="442.2" width="139.79999999999995" height="1.900000000000034" fill="#765c46" /><rect x="645.6" y="447.0" width="140.39999999999998" height="1.8000000000000114" fill="#765c46" /><rect x="645.0" y="451.8" width="141.0" height="1.8000000000000114" fill="#765c46" /><rect x="644.5" y="456.5" width="141.5" height="1.8000000000000114" fill="#765c46" /><rect x="643.9" y="461.2" width="142.10000000000002" height="1.900000000000034" fill="#765c46" /><rect x="643.3" y="466.0" width="142.70000000000005" height="1.8000000000000114" fill="#765c46" /><rect x="642.8" y="470.8" width="143.20000000000005" height="1.8000000000000114" fill="#765c46" /><rect x="642.2" y="475.5" width="143.79999999999995" height="1.8000000000000114" fill="#765c46" /><rect x="641.6" y="480.2" width="144.39999999999998" height="1.900000000000034" fill="#765c46" /><rect x="641.0" y="485.0" width="145.0" height="1.8000000000000114" fill="#765c46" /><rect x="640.5" y="489.8" width="145.5" height="1.8000000000000114" fill="#765c46" /><line x1="655" y1="352" x2="640" y2="497" stroke="#5a4434" stroke-width="2.4" /><line x1="784" y1="352" x2="786" y2="495" stroke="#5a4434" stroke-width="2" /><circle cx="655" cy="530" r="32.8" fill="#607049"/><circle cx="655" cy="530" r="16.8" fill="#4c5b3a"/><path d="M655.0 530.0 Q646.8 540.2 636.8 545.3" stroke="#55663f" stroke-width="2.8" fill="none" stroke-linecap="round" opacity="0.85"/><path d="M655.0 530.0 Q654.8 518.8 652.9 509.7" stroke="#7b8c6a" stroke-width="2.5" fill="none" stroke-linecap="round" opacity="0.85"/><path d="M655.0 530.0 Q645.0 538.7 640.7 549.5" stroke="#7b8c6a" stroke-width="2.0" fill="none" stroke-linecap="round" opacity="0.85"/><path d="M655.0 530.0 Q646.8 519.6 638.2 512.7" stroke="#6f8060" stroke-width="1.7" fill="none" stroke-linecap="round" opacity="0.85"/><path d="M655.0 530.0 Q654.7 544.9 656.4 557.0" stroke="#7b8c6a" stroke-width="1.9" fill="none" stroke-linecap="round" opacity="0.85"/><path d="M655.0 530.0 Q645.0 550.7 642.4 569.9" stroke="#4a5a38" stroke-width="1.6" fill="none" stroke-linecap="round" opacity="0.85"/><path d="M655.0 530.0 Q632.7 529.6 614.9 535.7" stroke="#627352" stroke-width="2.7" fill="none" stroke-linecap="round" opacity="0.85"/><path d="M655.0 530.0 Q654.5 544.6 649.6 556.0" stroke="#627352" stroke-width="2.2" fill="none" stroke-linecap="round" opacity="0.85"/><path d="M655.0 530.0 Q644.2 515.6 641.6 500.2" stroke="#4a5a38" stroke-width="2.1" fill="none" stroke-linecap="round" opacity="0.85"/><path d="M655.0 530.0 Q662.1 510.0 662.7 492.2" stroke="#55663f" stroke-width="2.7" fill="none" stroke-linecap="round" opacity="0.85"/><path d="M655.0 530.0 Q664.2 521.2 670.1 512.5" stroke="#6f8060" stroke-width="2.9" fill="none" stroke-linecap="round" opacity="0.85"/><path d="M655.0 530.0 Q661.5 519.5 662.6 508.9" stroke="#627352" stroke-width="3.0" fill="none" stroke-linecap="round" opacity="0.85"/><path d="M655.0 530.0 Q666.8 545.8 676.0 559.2" stroke="#627352" stroke-width="1.4" fill="none" stroke-linecap="round" opacity="0.85"/><path d="M655.0 530.0 Q641.6 538.0 632.3 547.1" stroke="#869672" stroke-width="2.5" fill="none" stroke-linecap="round" opacity="0.85"/><path d="M655.0 530.0 Q669.4 512.2 685.6 501.9" stroke="#627352" stroke-width="1.3" fill="none" stroke-linecap="round" opacity="0.85"/><path d="M655.0 530.0 Q646.7 523.5 641.6 516.2" stroke="#4a5a38" stroke-width="1.5" fill="none" stroke-linecap="round" opacity="0.85"/><path d="M655.0 530.0 Q645.7 537.1 635.7 539.0" stroke="#6f8060" stroke-width="1.2" fill="none" stroke-linecap="round" opacity="0.85"/><path d="M655.0 530.0 Q672.9 543.8 686.5 556.2" stroke="#4a5a38" stroke-width="3.1" fill="none" stroke-linecap="round" opacity="0.85"/><path d="M655.0 530.0 Q662.8 547.4 670.0 561.3" stroke="#869672" stroke-width="1.5" fill="none" stroke-linecap="round" opacity="0.85"/><path d="M655.0 530.0 Q672.0 528.0 686.1 528.7" stroke="#55663f" stroke-width="2.9" fill="none" stroke-linecap="round" opacity="0.85"/><path d="M655.0 530.0 Q664.5 550.6 664.0 570.3" stroke="#869672" stroke-width="3.0" fill="none" stroke-linecap="round" opacity="0.85"/><path d="M655.0 530.0 Q650.5 520.4 649.5 511.6" stroke="#55663f" stroke-width="1.7" fill="none" stroke-linecap="round" opacity="0.85"/><path d="M655.0 530.0 Q675.4 531.1 690.5 541.0" stroke="#6f8060" stroke-width="3.1" fill="none" stroke-linecap="round" opacity="0.85"/><path d="M655.0 530.0 Q646.5 513.4 642.1 498.5" stroke="#4a5a38" stroke-width="2.3" fill="none" stroke-linecap="round" opacity="0.85"/><path d="M655.0 530.0 Q636.2 543.3 619.6 552.3" stroke="#6f8060" stroke-width="2.7" fill="none" stroke-linecap="round" opacity="0.85"/><path d="M655.0 530.0 Q646.7 543.3 643.1 556.0" stroke="#7b8c6a" stroke-width="3.1" fill="none" stroke-linecap="round" opacity="0.85"/><path d="M655.0 530.0 Q666.3 512.8 682.6 504.6" stroke="#869672" stroke-width="3.0" fill="none" stroke-linecap="round" opacity="0.85"/><path d="M655.0 530.0 Q639.4 514.2 623.6 504.7" stroke="#4a5a38" stroke-width="1.7" fill="none" stroke-linecap="round" opacity="0.85"/><path d="M655.0 530.0 Q675.7 532.4 692.9 527.9" stroke="#55663f" stroke-width="2.5" fill="none" stroke-linecap="round" opacity="0.85"/><path d="M655.0 530.0 Q660.3 508.7 663.4 491.0" stroke="#869672" stroke-width="1.3" fill="none" stroke-linecap="round" opacity="0.85"/><path d="M655.0 530.0 Q652.2 514.2 643.4 503.3" stroke="#7b8c6a" stroke-width="2.5" fill="none" stroke-linecap="round" opacity="0.85"/><path d="M655.0 530.0 Q674.8 528.6 691.1 530.2" stroke="#4a5a38" stroke-width="2.9" fill="none" stroke-linecap="round" opacity="0.85"/><path d="M655.0 530.0 Q641.5 523.0 628.5 522.1" stroke="#869672" stroke-width="2.8" fill="none" stroke-linecap="round" opacity="0.85"/><path d="M655.0 530.0 Q647.6 538.4 642.5 546.1" stroke="#6f8060" stroke-width="3.2" fill="none" stroke-linecap="round" opacity="0.85"/><path d="M655.0 530.0 Q649.7 516.5 643.4 506.4" stroke="#4a5a38" stroke-width="2.5" fill="none" stroke-linecap="round" opacity="0.85"/><path d="M655.0 530.0 Q674.2 524.1 687.5 513.2" stroke="#7b8c6a" stroke-width="1.7" fill="none" stroke-linecap="round" opacity="0.85"/><path d="M655.0 530.0 Q648.1 546.5 636.3 556.6" stroke="#627352" stroke-width="2.3" fill="none" stroke-linecap="round" opacity="0.85"/><path d="M655.0 530.0 Q658.0 515.3 656.2 502.7" stroke="#627352" stroke-width="1.6" fill="none" stroke-linecap="round" opacity="0.85"/><path d="M655.0 530.0 Q657.9 542.2 656.6 552.8" stroke="#7b8c6a" stroke-width="2.8" fill="none" stroke-linecap="round" opacity="0.85"/><path d="M655.0 530.0 Q674.4 521.3 691.6 517.4" stroke="#55663f" stroke-width="2.5" fill="none" stroke-linecap="round" opacity="0.85"/><path d="M655.0 530.0 Q644.2 548.4 629.9 559.7" stroke="#7b8c6a" stroke-width="2.1" fill="none" stroke-linecap="round" opacity="0.85"/><path d="M655.0 530.0 Q654.8 541.7 654.8 551.3" stroke="#4a5a38" stroke-width="1.9" fill="none" stroke-linecap="round" opacity="0.85"/><path d="M655.0 530.0 Q643.7 532.3 635.0 536.1" stroke="#7b8c6a" stroke-width="2.0" fill="none" stroke-linecap="round" opacity="0.85"/><path d="M655.0 530.0 Q640.5 537.8 626.6 539.4" stroke="#4a5a38" stroke-width="2.8" fill="none" stroke-linecap="round" opacity="0.85"/><path d="M655.0 530.0 Q649.5 516.0 643.4 505.2" stroke="#627352" stroke-width="2.2" fill="none" stroke-linecap="round" opacity="0.85"/><path d="M655.0 530.0 Q634.4 530.1 618.0 524.5" stroke="#4a5a38" stroke-width="1.7" fill="none" stroke-linecap="round" opacity="0.85"/><path d="M655.0 530.0 Q645.1 525.0 636.7 521.3" stroke="#869672" stroke-width="1.6" fill="none" stroke-linecap="round" opacity="0.85"/><path d="M655.0 530.0 Q665.2 520.9 676.5 517.6" stroke="#7b8c6a" stroke-width="1.7" fill="none" stroke-linecap="round" opacity="0.85"/><path d="M655.0 530.0 Q645.0 511.2 629.6 500.8" stroke="#7b8c6a" stroke-width="1.6" fill="none" stroke-linecap="round" opacity="0.85"/><path d="M655.0 530.0 Q650.5 549.8 645.7 565.8" stroke="#869672" stroke-width="3.0" fill="none" stroke-linecap="round" opacity="0.85"/><path d="M655.0 530.0 Q642.4 544.9 631.3 556.2" stroke="#7b8c6a" stroke-width="1.8" fill="none" stroke-linecap="round" opacity="0.85"/><path d="M655.0 530.0 Q642.9 523.6 635.6 514.5" stroke="#4a5a38" stroke-width="1.7" fill="none" stroke-linecap="round" opacity="0.85"/><path d="M655.0 530.0 Q637.3 515.6 624.5 501.9" stroke="#4a5a38" stroke-width="2.9" fill="none" stroke-linecap="round" opacity="0.85"/><path d="M655.0 530.0 Q646.9 517.9 641.6 507.1" stroke="#7b8c6a" stroke-width="1.3" fill="none" stroke-linecap="round" opacity="0.85"/><path d="M655.0 530.0 Q638.3 530.6 625.0 525.1" stroke="#55663f" stroke-width="3.0" fill="none" stroke-linecap="round" opacity="0.85"/><path d="M655.0 530.0 Q634.1 522.2 617.7 514.3" stroke="#7b8c6a" stroke-width="2.6" fill="none" stroke-linecap="round" opacity="0.85"/><path d="M655.0 530.0 Q634.6 537.4 616.1 536.5" stroke="#7b8c6a" stroke-width="2.1" fill="none" stroke-linecap="round" opacity="0.85"/><path d="M655.0 530.0 Q654.7 519.5 655.3 510.9" stroke="#627352" stroke-width="1.7" fill="none" stroke-linecap="round" opacity="0.85"/><path d="M655.0 530.0 Q672.6 537.2 688.5 538.7" stroke="#7b8c6a" stroke-width="2.3" fill="none" stroke-linecap="round" opacity="0.85"/><path d="M655.0 530.0 Q666.3 536.8 672.7 546.2" stroke="#55663f" stroke-width="1.4" fill="none" stroke-linecap="round" opacity="0.85"/><path d="M655.0 530.0 Q670.1 543.1 685.9 549.1" stroke="#55663f" stroke-width="2.3" fill="none" stroke-linecap="round" opacity="0.85"/><path d="M655.0 530.0 Q658.2 544.3 663.3 555.3" stroke="#4a5a38" stroke-width="2.9" fill="none" stroke-linecap="round" opacity="0.85"/><path d="M655.0 530.0 Q638.1 535.8 626.8 546.0" stroke="#55663f" stroke-width="3.2" fill="none" stroke-linecap="round" opacity="0.85"/><path d="M655.0 530.0 Q665.6 540.1 671.2 551.1" stroke="#55663f" stroke-width="2.2" fill="none" stroke-linecap="round" opacity="0.85"/><path d="M655.0 530.0 Q638.1 527.9 625.0 522.5" stroke="#7b8c6a" stroke-width="1.4" fill="none" stroke-linecap="round" opacity="0.85"/><path d="M655.0 530.0 Q667.2 517.5 675.1 505.4" stroke="#7b8c6a" stroke-width="2.2" fill="none" stroke-linecap="round" opacity="0.85"/><path d="M655.0 530.0 Q648.1 541.7 646.4 553.1" stroke="#7b8c6a" stroke-width="2.0" fill="none" stroke-linecap="round" opacity="0.85"/><path d="M655.0 530.0 Q653.4 542.9 654.0 553.5" stroke="#4a5a38" stroke-width="1.3" fill="none" stroke-linecap="round" opacity="0.85"/><path d="M655.0 530.0 Q671.5 521.2 686.0 516.0" stroke="#627352" stroke-width="2.6" fill="none" stroke-linecap="round" opacity="0.85"/><path d="M655.0 530.0 Q660.1 518.1 662.5 507.7" stroke="#4a5a38" stroke-width="3.0" fill="none" stroke-linecap="round" opacity="0.85"/><path d="M655.0 530.0 Q655.3 519.5 652.5 511.1" stroke="#4a5a38" stroke-width="1.3" fill="none" stroke-linecap="round" opacity="0.85"/><path d="M655.0 530.0 Q667.5 534.2 678.4 535.3" stroke="#627352" stroke-width="2.1" fill="none" stroke-linecap="round" opacity="0.85"/><path d="M655.0 530.0 Q660.3 512.9 665.5 499.2" stroke="#869672" stroke-width="2.1" fill="none" stroke-linecap="round" opacity="0.85"/><path d="M655.0 530.0 Q661.4 520.9 669.6 516.0" stroke="#869672" stroke-width="2.1" fill="none" stroke-linecap="round" opacity="0.85"/><path d="M655.0 530.0 Q671.5 543.9 680.6 559.7" stroke="#7b8c6a" stroke-width="2.8" fill="none" stroke-linecap="round" opacity="0.85"/><path d="M655.0 530.0 Q669.2 519.7 683.1 515.1" stroke="#7b8c6a" stroke-width="2.8" fill="none" stroke-linecap="round" opacity="0.85"/><path d="M655.0 530.0 Q654.7 510.1 648.3 494.4" stroke="#4a5a38" stroke-width="2.8" fill="none" stroke-linecap="round" opacity="0.85"/><path d="M655.0 530.0 Q668.7 547.3 679.4 561.8" stroke="#55663f" stroke-width="1.6" fill="none" stroke-linecap="round" opacity="0.85"/><path d="M655.0 530.0 Q657.6 541.3 661.3 550.1" stroke="#627352" stroke-width="1.3" fill="none" stroke-linecap="round" opacity="0.85"/><path d="M655.0 530.0 Q650.0 551.3 653.1 569.8" stroke="#627352" stroke-width="2.6" fill="none" stroke-linecap="round" opacity="0.85"/><path d="M655.0 530.0 Q665.1 523.4 674.5 519.9" stroke="#7b8c6a" stroke-width="1.5" fill="none" stroke-linecap="round" opacity="0.85"/><path d="M655.0 530.0 Q655.0 547.8 658.5 562.2" stroke="#4a5a38" stroke-width="1.8" fill="none" stroke-linecap="round" opacity="0.85"/><path d="M655.0 530.0 Q652.3 543.4 645.9 553.1" stroke="#627352" stroke-width="2.3" fill="none" stroke-linecap="round" opacity="0.85"/><path d="M655.0 530.0 Q660.1 507.7 667.7 490.4" stroke="#55663f" stroke-width="2.0" fill="none" stroke-linecap="round" opacity="0.85"/><path d="M655.0 530.0 Q665.0 539.9 669.3 551.3" stroke="#869672" stroke-width="2.5" fill="none" stroke-linecap="round" opacity="0.85"/><path d="M655.0 530.0 Q636.1 535.3 620.2 537.9" stroke="#869672" stroke-width="2.1" fill="none" stroke-linecap="round" opacity="0.85"/><path d="M655.0 530.0 Q668.1 537.0 681.2 536.5" stroke="#627352" stroke-width="2.5" fill="none" stroke-linecap="round" opacity="0.85"/><path d="M655.0 530.0 Q668.9 520.1 683.8 518.5" stroke="#6f8060" stroke-width="1.8" fill="none" stroke-linecap="round" opacity="0.85"/><path d="M655.0 530.0 Q659.1 508.7 662.7 491.3" stroke="#627352" stroke-width="3.0" fill="none" stroke-linecap="round" opacity="0.85"/><path d="M655.0 530.0 Q664.7 514.8 676.5 505.3" stroke="#55663f" stroke-width="2.3" fill="none" stroke-linecap="round" opacity="0.85"/><path d="M655.0 530.0 Q635.1 532.9 619.0 536.8" stroke="#627352" stroke-width="2.7" fill="none" stroke-linecap="round" opacity="0.85"/><path d="M655.0 530.0 Q650.9 547.3 645.0 560.7" stroke="#55663f" stroke-width="1.4" fill="none" stroke-linecap="round" opacity="0.85"/><path d="M655.0 530.0 Q672.1 522.3 687.0 518.3" stroke="#6f8060" stroke-width="1.3" fill="none" stroke-linecap="round" opacity="0.85"/><path d="M655.0 530.0 Q640.4 529.6 628.7 533.2" stroke="#55663f" stroke-width="1.9" fill="none" stroke-linecap="round" opacity="0.85"/><path d="M655.0 530.0 Q650.3 540.3 648.9 549.6" stroke="#55663f" stroke-width="2.3" fill="none" stroke-linecap="round" opacity="0.85"/><path d="M655.0 530.0 Q666.1 535.7 672.2 544.7" stroke="#55663f" stroke-width="2.0" fill="none" stroke-linecap="round" opacity="0.85"/><path d="M655.0 530.0 Q643.4 529.5 633.9 528.2" stroke="#627352" stroke-width="2.5" fill="none" stroke-linecap="round" opacity="0.85"/><path d="M655.0 530.0 Q659.2 519.4 665.8 512.4" stroke="#869672" stroke-width="2.7" fill="none" stroke-linecap="round" opacity="0.85"/><path d="M655.0 530.0 Q662.0 551.2 674.7 565.6" stroke="#869672" stroke-width="1.9" fill="none" stroke-linecap="round" opacity="0.85"/><path d="M655.0 530.0 Q643.3 533.8 632.8 532.8" stroke="#627352" stroke-width="1.4" fill="none" stroke-linecap="round" opacity="0.85"/><path d="M655.0 530.0 Q638.0 532.6 623.7 530.8" stroke="#7b8c6a" stroke-width="1.4" fill="none" stroke-linecap="round" opacity="0.85"/><path d="M655.0 530.0 Q644.6 526.5 636.9 521.7" stroke="#627352" stroke-width="1.7" fill="none" stroke-linecap="round" opacity="0.85"/><path d="M655.0 530.0 Q635.2 518.3 615.8 515.8" stroke="#869672" stroke-width="3.0" fill="none" stroke-linecap="round" opacity="0.85"/><path d="M655.0 530.0 Q633.3 529.9 615.5 529.6" stroke="#55663f" stroke-width="1.2" fill="none" stroke-linecap="round" opacity="0.85"/><path d="M655.0 530.0 Q655.9 512.4 663.2 499.0" stroke="#627352" stroke-width="2.6" fill="none" stroke-linecap="round" opacity="0.85"/><path d="M655.0 530.0 Q666.0 548.0 673.2 563.7" stroke="#7b8c6a" stroke-width="3.2" fill="none" stroke-linecap="round" opacity="0.85"/><path d="M655.0 530.0 Q641.2 527.3 629.5 527.1" stroke="#55663f" stroke-width="3.0" fill="none" stroke-linecap="round" opacity="0.85"/><path d="M655.0 530.0 Q656.3 543.4 660.0 554.0" stroke="#4a5a38" stroke-width="2.7" fill="none" stroke-linecap="round" opacity="0.85"/><path d="M655.0 530.0 Q668.3 532.2 677.7 539.4" stroke="#55663f" stroke-width="2.4" fill="none" stroke-linecap="round" opacity="0.85"/><path d="M655.0 530.0 Q638.5 520.2 629.3 506.4" stroke="#6f8060" stroke-width="2.8" fill="none" stroke-linecap="round" opacity="0.85"/><path d="M655.0 530.0 Q659.9 512.8 656.9 497.5" stroke="#6f8060" stroke-width="1.6" fill="none" stroke-linecap="round" opacity="0.85"/><path d="M655.0 530.0 Q643.4 540.4 630.9 544.9" stroke="#627352" stroke-width="1.4" fill="none" stroke-linecap="round" opacity="0.85"/><path d="M655.0 530.0 Q642.5 531.0 632.3 528.4" stroke="#627352" stroke-width="2.8" fill="none" stroke-linecap="round" opacity="0.85"/><path d="M655.0 530.0 Q673.6 525.8 686.0 514.2" stroke="#55663f" stroke-width="2.6" fill="none" stroke-linecap="round" opacity="0.85"/><path d="M655.0 530.0 Q662.4 515.3 662.7 501.0" stroke="#6f8060" stroke-width="2.2" fill="none" stroke-linecap="round" opacity="0.85"/><path d="M655.0 530.0 Q651.0 511.9 655.3 496.4" stroke="#869672" stroke-width="1.6" fill="none" stroke-linecap="round" opacity="0.85"/><path d="M655.0 530.0 Q644.2 541.2 636.1 551.2" stroke="#6f8060" stroke-width="2.5" fill="none" stroke-linecap="round" opacity="0.85"/><path d="M655.0 530.0 Q657.5 513.5 665.0 501.4" stroke="#7b8c6a" stroke-width="2.7" fill="none" stroke-linecap="round" opacity="0.85"/><path d="M655.0 530.0 Q665.2 510.2 674.2 494.3" stroke="#869672" stroke-width="3.0" fill="none" stroke-linecap="round" opacity="0.85"/><path d="M655.0 530.0 Q662.5 512.5 663.3 496.4" stroke="#7b8c6a" stroke-width="1.5" fill="none" stroke-linecap="round" opacity="0.85"/><path d="M655.0 530.0 Q659.9 509.1 663.4 491.9" stroke="#4a5a38" stroke-width="1.8" fill="none" stroke-linecap="round" opacity="0.85"/><path d="M655.0 530.0 Q666.6 527.5 675.3 522.8" stroke="#6f8060" stroke-width="3.1" fill="none" stroke-linecap="round" opacity="0.85"/><path d="M655.0 530.0 Q661.2 518.1 669.1 510.0" stroke="#4a5a38" stroke-width="2.4" fill="none" stroke-linecap="round" opacity="0.85"/><path d="M655.0 530.0 Q633.9 535.9 615.2 531.8" stroke="#869672" stroke-width="2.6" fill="none" stroke-linecap="round" opacity="0.85"/><path d="M655.0 530.0 Q649.3 515.7 640.5 506.0" stroke="#6f8060" stroke-width="2.5" fill="none" stroke-linecap="round" opacity="0.85"/><path d="M655.0 530.0 Q644.9 535.6 637.6 541.6" stroke="#6f8060" stroke-width="2.5" fill="none" stroke-linecap="round" opacity="0.85"/><path d="M655.0 530.0 Q668.0 521.0 678.7 513.7" stroke="#6f8060" stroke-width="1.8" fill="none" stroke-linecap="round" opacity="0.85"/><path d="M655.0 530.0 Q666.8 530.7 676.3 532.2" stroke="#7b8c6a" stroke-width="2.8" fill="none" stroke-linecap="round" opacity="0.85"/><path d="M655.0 530.0 Q652.1 541.9 648.2 551.2" stroke="#55663f" stroke-width="2.3" fill="none" stroke-linecap="round" opacity="0.85"/><path d="M655.0 530.0 Q668.6 517.8 673.6 502.5" stroke="#55663f" stroke-width="1.8" fill="none" stroke-linecap="round" opacity="0.85"/><path d="M655.0 530.0 Q660.2 551.1 670.1 566.4" stroke="#4a5a38" stroke-width="2.0" fill="none" stroke-linecap="round" opacity="0.85"/><path d="M655.0 530.0 Q669.5 542.3 680.2 553.9" stroke="#627352" stroke-width="1.3" fill="none" stroke-linecap="round" opacity="0.85"/><path d="M655.0 530.0 Q646.9 539.3 643.9 549.4" stroke="#6f8060" stroke-width="1.5" fill="none" stroke-linecap="round" opacity="0.85"/><path d="M655.0 530.0 Q637.1 517.7 624.6 504.7" stroke="#7b8c6a" stroke-width="2.0" fill="none" stroke-linecap="round" opacity="0.85"/><path d="M655.0 530.0 Q668.8 514.9 681.5 503.9" stroke="#627352" stroke-width="2.4" fill="none" stroke-linecap="round" opacity="0.85"/><path d="M655.0 530.0 Q676.2 530.7 693.6 532.2" stroke="#627352" stroke-width="1.4" fill="none" stroke-linecap="round" opacity="0.85"/><path d="M655.0 530.0 Q662.8 518.9 664.0 507.0" stroke="#55663f" stroke-width="1.9" fill="none" stroke-linecap="round" opacity="0.85"/><path d="M655.0 530.0 Q657.3 510.2 651.5 493.9" stroke="#627352" stroke-width="2.5" fill="none" stroke-linecap="round" opacity="0.85"/><path d="M655.0 530.0 Q668.8 517.1 681.9 508.8" stroke="#4a5a38" stroke-width="1.4" fill="none" stroke-linecap="round" opacity="0.85"/><path d="M655.0 530.0 Q652.6 544.0 652.4 555.6" stroke="#869672" stroke-width="1.8" fill="none" stroke-linecap="round" opacity="0.85"/><path d="M655.0 530.0 Q642.9 542.0 633.0 551.8" stroke="#869672" stroke-width="2.6" fill="none" stroke-linecap="round" opacity="0.85"/><path d="M655.0 530.0 Q643.6 549.7 627.8 561.3" stroke="#869672" stroke-width="1.3" fill="none" stroke-linecap="round" opacity="0.85"/><path d="M655.0 530.0 Q643.6 538.8 636.3 548.2" stroke="#627352" stroke-width="2.2" fill="none" stroke-linecap="round" opacity="0.85"/><path d="M655.0 530.0 Q652.3 519.5 655.0 510.3" stroke="#627352" stroke-width="1.9" fill="none" stroke-linecap="round" opacity="0.85"/><path d="M655.0 530.0 Q667.8 524.7 678.2 520.2" stroke="#4a5a38" stroke-width="1.6" fill="none" stroke-linecap="round" opacity="0.85"/><path d="M655.0 530.0 Q667.6 530.6 677.9 529.7" stroke="#6f8060" stroke-width="2.4" fill="none" stroke-linecap="round" opacity="0.85"/><path d="M655.0 530.0 Q651.2 549.9 656.9 566.7" stroke="#4a5a38" stroke-width="1.3" fill="none" stroke-linecap="round" opacity="0.85"/><path d="M655.0 530.0 Q642.7 513.5 632.7 499.8" stroke="#7b8c6a" stroke-width="2.6" fill="none" stroke-linecap="round" opacity="0.85"/><path d="M655.0 530.0 Q669.2 525.2 681.9 525.7" stroke="#6f8060" stroke-width="3.0" fill="none" stroke-linecap="round" opacity="0.85"/><path d="M655.0 530.0 Q638.6 517.0 621.2 512.7" stroke="#6f8060" stroke-width="2.8" fill="none" stroke-linecap="round" opacity="0.85"/><path d="M655.0 530.0 Q658.9 550.3 666.4 565.8" stroke="#6f8060" stroke-width="1.3" fill="none" stroke-linecap="round" opacity="0.85"/><path d="M655.0 530.0 Q658.7 543.9 667.5 552.9" stroke="#6f8060" stroke-width="1.3" fill="none" stroke-linecap="round" opacity="0.85"/><path d="M655.0 530.0 Q656.1 515.1 659.6 503.2" stroke="#6f8060" stroke-width="2.6" fill="none" stroke-linecap="round" opacity="0.85"/><path d="M655.0 530.0 Q666.9 525.0 677.0 521.9" stroke="#7b8c6a" stroke-width="1.8" fill="none" stroke-linecap="round" opacity="0.85"/><path d="M655.0 530.0 Q647.2 517.2 643.6 505.2" stroke="#7b8c6a" stroke-width="1.8" fill="none" stroke-linecap="round" opacity="0.85"/><path d="M655.0 530.0 Q659.8 551.4 666.4 568.2" stroke="#7b8c6a" stroke-width="2.1" fill="none" stroke-linecap="round" opacity="0.85"/><path d="M655.0 530.0 Q657.4 515.8 659.7 504.3" stroke="#4a5a38" stroke-width="1.5" fill="none" stroke-linecap="round" opacity="0.85"/><path d="M655.0 530.0 Q637.0 524.1 622.9 517.6" stroke="#6f8060" stroke-width="2.7" fill="none" stroke-linecap="round" opacity="0.85"/><path d="M655.0 530.0 Q649.1 515.8 649.3 502.6" stroke="#869672" stroke-width="2.8" fill="none" stroke-linecap="round" opacity="0.85"/><path d="M655.0 530.0 Q644.9 532.9 636.8 536.0" stroke="#869672" stroke-width="2.3" fill="none" stroke-linecap="round" opacity="0.85"/><path d="M655.0 530.0 Q638.3 544.8 630.4 562.3" stroke="#627352" stroke-width="1.7" fill="none" stroke-linecap="round" opacity="0.85"/><path d="M655.0 530.0 Q664.5 523.3 670.0 515.1" stroke="#7b8c6a" stroke-width="2.4" fill="none" stroke-linecap="round" opacity="0.85"/><path d="M655.0 530.0 Q654.9 507.8 645.4 490.8" stroke="#627352" stroke-width="1.5" fill="none" stroke-linecap="round" opacity="0.85"/><path d="M655.0 530.0 Q644.8 513.7 631.8 504.0" stroke="#7b8c6a" stroke-width="2.7" fill="none" stroke-linecap="round" opacity="0.85"/><path d="M655.0 530.0 Q663.3 510.6 664.5 492.9" stroke="#7b8c6a" stroke-width="2.0" fill="none" stroke-linecap="round" opacity="0.85"/><path d="M655.0 530.0 Q646.4 539.4 641.4 548.8" stroke="#4a5a38" stroke-width="2.9" fill="none" stroke-linecap="round" opacity="0.85"/><path d="M655.0 530.0 Q637.0 542.9 620.5 550.8" stroke="#627352" stroke-width="1.8" fill="none" stroke-linecap="round" opacity="0.85"/><path d="M655.0 530.0 Q668.7 537.5 681.0 541.5" stroke="#4a5a38" stroke-width="2.2" fill="none" stroke-linecap="round" opacity="0.85"/><path d="M655.0 530.0 Q642.5 520.8 630.1 516.7" stroke="#6f8060" stroke-width="2.3" fill="none" stroke-linecap="round" opacity="0.85"/><path d="M655.0 530.0 Q647.6 510.1 638.5 495.1" stroke="#627352" stroke-width="1.5" fill="none" stroke-linecap="round" opacity="0.85"/><path d="M655.0 530.0 Q657.5 513.4 655.8 499.5" stroke="#55663f" stroke-width="3.0" fill="none" stroke-linecap="round" opacity="0.85"/><path d="M655.0 530.0 Q664.3 513.8 669.6 499.4" stroke="#627352" stroke-width="3.0" fill="none" stroke-linecap="round" opacity="0.85"/><path d="M655.0 530.0 Q663.3 517.2 674.7 510.4" stroke="#869672" stroke-width="3.0" fill="none" stroke-linecap="round" opacity="0.85"/><path d="M655.0 530.0 Q641.2 514.3 624.8 507.1" stroke="#627352" stroke-width="1.7" fill="none" stroke-linecap="round" opacity="0.85"/><path d="M655.0 530.0 Q650.5 544.3 645.1 555.3" stroke="#55663f" stroke-width="2.3" fill="none" stroke-linecap="round" opacity="0.85"/><path d="M655.0 530.0 Q650.0 519.9 648.6 510.5" stroke="#6f8060" stroke-width="2.9" fill="none" stroke-linecap="round" opacity="0.85"/><circle cx="706" cy="538" r="23.4" fill="#607049"/><circle cx="706" cy="538" r="12.0" fill="#4c5b3a"/><path d="M706.0 538.0 Q693.3 544.7 680.8 544.9" stroke="#4a5a38" stroke-width="2.1" fill="none" stroke-linecap="round" opacity="0.85"/><path d="M706.0 538.0 Q694.2 541.9 684.6 545.6" stroke="#55663f" stroke-width="2.8" fill="none" stroke-linecap="round" opacity="0.85"/><path d="M706.0 538.0 Q694.2 537.7 685.0 542.3" stroke="#6f8060" stroke-width="1.8" fill="none" stroke-linecap="round" opacity="0.85"/><path d="M706.0 538.0 Q696.5 537.2 689.0 534.7" stroke="#627352" stroke-width="2.3" fill="none" stroke-linecap="round" opacity="0.85"/><path d="M706.0 538.0 Q718.7 537.7 728.7 534.2" stroke="#627352" stroke-width="2.6" fill="none" stroke-linecap="round" opacity="0.85"/><path d="M706.0 538.0 Q717.0 542.7 727.5 541.9" stroke="#55663f" stroke-width="2.0" fill="none" stroke-linecap="round" opacity="0.85"/><path d="M706.0 538.0 Q704.7 546.1 703.8 552.8" stroke="#7b8c6a" stroke-width="1.4" fill="none" stroke-linecap="round" opacity="0.85"/><path d="M706.0 538.0 Q698.8 531.8 691.4 528.9" stroke="#55663f" stroke-width="2.9" fill="none" stroke-linecap="round" opacity="0.85"/><path d="M706.0 538.0 Q716.3 536.2 724.4 533.4" stroke="#55663f" stroke-width="3.2" fill="none" stroke-linecap="round" opacity="0.85"/><path d="M706.0 538.0 Q696.2 532.2 687.7 528.6" stroke="#869672" stroke-width="3.1" fill="none" stroke-linecap="round" opacity="0.85"/><path d="M706.0 538.0 Q712.0 549.5 714.6 560.0" stroke="#627352" stroke-width="1.4" fill="none" stroke-linecap="round" opacity="0.85"/><path d="M706.0 538.0 Q709.0 551.8 714.8 562.1" stroke="#7b8c6a" stroke-width="2.2" fill="none" stroke-linecap="round" opacity="0.85"/><path d="M706.0 538.0 Q710.0 524.4 712.4 513.1" stroke="#627352" stroke-width="2.7" fill="none" stroke-linecap="round" opacity="0.85"/><path d="M706.0 538.0 Q704.4 521.8 697.1 509.8" stroke="#55663f" stroke-width="2.7" fill="none" stroke-linecap="round" opacity="0.85"/><path d="M706.0 538.0 Q703.0 524.4 701.6 513.0" stroke="#627352" stroke-width="1.3" fill="none" stroke-linecap="round" opacity="0.85"/><path d="M706.0 538.0 Q711.4 525.9 718.3 517.3" stroke="#4a5a38" stroke-width="2.7" fill="none" stroke-linecap="round" opacity="0.85"/><path d="M706.0 538.0 Q701.2 545.5 696.0 550.8" stroke="#6f8060" stroke-width="2.5" fill="none" stroke-linecap="round" opacity="0.85"/><path d="M706.0 538.0 Q714.2 541.8 721.8 542.5" stroke="#55663f" stroke-width="1.9" fill="none" stroke-linecap="round" opacity="0.85"/><path d="M706.0 538.0 Q698.2 540.9 691.4 542.2" stroke="#627352" stroke-width="1.4" fill="none" stroke-linecap="round" opacity="0.85"/><path d="M706.0 538.0 Q715.9 531.5 722.1 523.7" stroke="#6f8060" stroke-width="1.4" fill="none" stroke-linecap="round" opacity="0.85"/><path d="M706.0 538.0 Q691.3 540.0 679.2 542.0" stroke="#55663f" stroke-width="1.5" fill="none" stroke-linecap="round" opacity="0.85"/><path d="M706.0 538.0 Q708.5 548.7 705.8 557.9" stroke="#869672" stroke-width="1.9" fill="none" stroke-linecap="round" opacity="0.85"/><path d="M706.0 538.0 Q717.4 530.1 727.2 524.3" stroke="#4a5a38" stroke-width="3.1" fill="none" stroke-linecap="round" opacity="0.85"/><path d="M706.0 538.0 Q702.8 527.6 703.8 518.3" stroke="#7b8c6a" stroke-width="2.8" fill="none" stroke-linecap="round" opacity="0.85"/><path d="M706.0 538.0 Q715.3 536.6 723.0 539.4" stroke="#7b8c6a" stroke-width="2.4" fill="none" stroke-linecap="round" opacity="0.85"/><path d="M706.0 538.0 Q710.0 522.2 717.4 510.7" stroke="#55663f" stroke-width="1.4" fill="none" stroke-linecap="round" opacity="0.85"/><path d="M706.0 538.0 Q692.4 530.2 680.4 525.4" stroke="#6f8060" stroke-width="2.9" fill="none" stroke-linecap="round" opacity="0.85"/><path d="M706.0 538.0 Q712.7 528.3 722.2 523.8" stroke="#627352" stroke-width="2.5" fill="none" stroke-linecap="round" opacity="0.85"/><path d="M706.0 538.0 Q708.5 548.3 711.5 556.6" stroke="#55663f" stroke-width="3.0" fill="none" stroke-linecap="round" opacity="0.85"/><path d="M706.0 538.0 Q711.0 545.8 717.8 550.0" stroke="#4a5a38" stroke-width="2.1" fill="none" stroke-linecap="round" opacity="0.85"/><path d="M706.0 538.0 Q701.4 523.0 694.7 511.7" stroke="#4a5a38" stroke-width="2.7" fill="none" stroke-linecap="round" opacity="0.85"/><path d="M706.0 538.0 Q716.2 543.8 726.1 545.0" stroke="#869672" stroke-width="2.0" fill="none" stroke-linecap="round" opacity="0.85"/><path d="M706.0 538.0 Q719.9 537.9 731.3 536.4" stroke="#7b8c6a" stroke-width="2.1" fill="none" stroke-linecap="round" opacity="0.85"/><path d="M706.0 538.0 Q715.8 544.9 722.0 552.7" stroke="#869672" stroke-width="2.0" fill="none" stroke-linecap="round" opacity="0.85"/><path d="M706.0 538.0 Q715.5 538.8 723.2 536.6" stroke="#869672" stroke-width="2.0" fill="none" stroke-linecap="round" opacity="0.85"/><path d="M706.0 538.0 Q698.9 525.8 688.8 518.8" stroke="#55663f" stroke-width="1.3" fill="none" stroke-linecap="round" opacity="0.85"/><path d="M706.0 538.0 Q709.2 544.7 710.2 550.9" stroke="#7b8c6a" stroke-width="2.1" fill="none" stroke-linecap="round" opacity="0.85"/><path d="M706.0 538.0 Q714.8 534.6 721.5 530.8" stroke="#4a5a38" stroke-width="2.5" fill="none" stroke-linecap="round" opacity="0.85"/><path d="M706.0 538.0 Q714.5 533.1 721.6 529.3" stroke="#55663f" stroke-width="1.5" fill="none" stroke-linecap="round" opacity="0.85"/><path d="M706.0 538.0 Q719.0 532.0 731.1 531.0" stroke="#55663f" stroke-width="3.0" fill="none" stroke-linecap="round" opacity="0.85"/><path d="M706.0 538.0 Q709.2 529.7 711.7 522.8" stroke="#55663f" stroke-width="2.2" fill="none" stroke-linecap="round" opacity="0.85"/><path d="M706.0 538.0 Q716.8 537.0 725.1 532.7" stroke="#55663f" stroke-width="3.0" fill="none" stroke-linecap="round" opacity="0.85"/><path d="M706.0 538.0 Q692.3 532.1 680.6 528.7" stroke="#4a5a38" stroke-width="2.2" fill="none" stroke-linecap="round" opacity="0.85"/><path d="M706.0 538.0 Q709.5 526.2 711.8 516.4" stroke="#869672" stroke-width="2.6" fill="none" stroke-linecap="round" opacity="0.85"/><path d="M706.0 538.0 Q704.8 549.0 700.9 557.4" stroke="#869672" stroke-width="1.2" fill="none" stroke-linecap="round" opacity="0.85"/><path d="M706.0 538.0 Q712.6 548.0 714.4 558.2" stroke="#627352" stroke-width="2.9" fill="none" stroke-linecap="round" opacity="0.85"/><path d="M706.0 538.0 Q701.0 530.2 696.1 524.3" stroke="#55663f" stroke-width="2.1" fill="none" stroke-linecap="round" opacity="0.85"/><path d="M706.0 538.0 Q715.6 545.4 724.9 549.4" stroke="#55663f" stroke-width="2.6" fill="none" stroke-linecap="round" opacity="0.85"/><path d="M706.0 538.0 Q713.4 524.8 722.1 515.7" stroke="#6f8060" stroke-width="1.4" fill="none" stroke-linecap="round" opacity="0.85"/><path d="M706.0 538.0 Q700.2 546.3 699.3 555.1" stroke="#4a5a38" stroke-width="2.2" fill="none" stroke-linecap="round" opacity="0.85"/><path d="M706.0 538.0 Q707.6 530.7 707.6 524.5" stroke="#55663f" stroke-width="1.3" fill="none" stroke-linecap="round" opacity="0.85"/><path d="M706.0 538.0 Q709.0 529.1 707.9 521.1" stroke="#7b8c6a" stroke-width="2.0" fill="none" stroke-linecap="round" opacity="0.85"/><path d="M706.0 538.0 Q698.7 532.2 690.8 530.3" stroke="#55663f" stroke-width="2.7" fill="none" stroke-linecap="round" opacity="0.85"/><path d="M706.0 538.0 Q711.0 525.0 719.2 516.4" stroke="#869672" stroke-width="1.3" fill="none" stroke-linecap="round" opacity="0.85"/><path d="M706.0 538.0 Q719.9 533.1 728.7 523.9" stroke="#4a5a38" stroke-width="1.3" fill="none" stroke-linecap="round" opacity="0.85"/><path d="M706.0 538.0 Q692.4 540.7 682.5 547.0" stroke="#6f8060" stroke-width="1.7" fill="none" stroke-linecap="round" opacity="0.85"/><path d="M706.0 538.0 Q716.0 542.4 725.5 541.5" stroke="#627352" stroke-width="1.5" fill="none" stroke-linecap="round" opacity="0.85"/><path d="M706.0 538.0 Q695.6 526.0 689.6 514.2" stroke="#6f8060" stroke-width="2.7" fill="none" stroke-linecap="round" opacity="0.85"/><path d="M706.0 538.0 Q705.8 549.2 706.0 558.3" stroke="#627352" stroke-width="1.2" fill="none" stroke-linecap="round" opacity="0.85"/><path d="M706.0 538.0 Q694.7 547.6 689.2 559.1" stroke="#627352" stroke-width="1.2" fill="none" stroke-linecap="round" opacity="0.85"/><path d="M706.0 538.0 Q708.9 526.1 712.2 516.6" stroke="#6f8060" stroke-width="1.4" fill="none" stroke-linecap="round" opacity="0.85"/><path d="M706.0 538.0 Q703.1 545.4 698.4 550.4" stroke="#7b8c6a" stroke-width="1.4" fill="none" stroke-linecap="round" opacity="0.85"/><path d="M706.0 538.0 Q693.8 532.7 682.2 533.3" stroke="#7b8c6a" stroke-width="2.3" fill="none" stroke-linecap="round" opacity="0.85"/><path d="M706.0 538.0 Q691.5 538.4 679.9 534.9" stroke="#869672" stroke-width="2.5" fill="none" stroke-linecap="round" opacity="0.85"/><path d="M706.0 538.0 Q702.9 553.3 699.4 565.7" stroke="#6f8060" stroke-width="1.2" fill="none" stroke-linecap="round" opacity="0.85"/><path d="M706.0 538.0 Q716.7 549.9 727.4 557.7" stroke="#4a5a38" stroke-width="2.4" fill="none" stroke-linecap="round" opacity="0.85"/><path d="M706.0 538.0 Q699.8 525.2 696.6 514.0" stroke="#627352" stroke-width="2.7" fill="none" stroke-linecap="round" opacity="0.85"/><path d="M706.0 538.0 Q713.7 535.0 720.6 534.3" stroke="#869672" stroke-width="2.9" fill="none" stroke-linecap="round" opacity="0.85"/><path d="M706.0 538.0 Q718.0 532.4 729.5 532.6" stroke="#869672" stroke-width="2.4" fill="none" stroke-linecap="round" opacity="0.85"/><path d="M706.0 538.0 Q716.7 540.3 724.2 546.3" stroke="#869672" stroke-width="1.4" fill="none" stroke-linecap="round" opacity="0.85"/><path d="M706.0 538.0 Q716.5 540.2 725.4 539.8" stroke="#55663f" stroke-width="1.5" fill="none" stroke-linecap="round" opacity="0.85"/><path d="M706.0 538.0 Q697.4 529.6 692.9 520.4" stroke="#7b8c6a" stroke-width="3.0" fill="none" stroke-linecap="round" opacity="0.85"/><path d="M706.0 538.0 Q715.1 542.6 721.0 548.9" stroke="#869672" stroke-width="2.0" fill="none" stroke-linecap="round" opacity="0.85"/><path d="M706.0 538.0 Q721.2 535.8 733.9 536.1" stroke="#7b8c6a" stroke-width="2.9" fill="none" stroke-linecap="round" opacity="0.85"/><path d="M706.0 538.0 Q708.4 530.7 712.9 525.8" stroke="#627352" stroke-width="2.9" fill="none" stroke-linecap="round" opacity="0.85"/><path d="M706.0 538.0 Q711.1 547.3 710.9 556.6" stroke="#4a5a38" stroke-width="1.9" fill="none" stroke-linecap="round" opacity="0.85"/><path d="M706.0 538.0 Q710.6 553.0 716.5 564.4" stroke="#869672" stroke-width="1.5" fill="none" stroke-linecap="round" opacity="0.85"/><path d="M706.0 538.0 Q704.2 547.6 699.2 554.5" stroke="#7b8c6a" stroke-width="1.3" fill="none" stroke-linecap="round" opacity="0.85"/><path d="M706.0 538.0 Q716.9 537.3 725.7 535.9" stroke="#4a5a38" stroke-width="2.5" fill="none" stroke-linecap="round" opacity="0.85"/><path d="M706.0 538.0 Q714.3 543.8 723.0 545.0" stroke="#627352" stroke-width="1.7" fill="none" stroke-linecap="round" opacity="0.85"/><path d="M706.0 538.0 Q697.1 546.5 692.2 555.7" stroke="#6f8060" stroke-width="1.6" fill="none" stroke-linecap="round" opacity="0.85"/><path d="M706.0 538.0 Q703.9 548.5 705.8 557.5" stroke="#55663f" stroke-width="2.2" fill="none" stroke-linecap="round" opacity="0.85"/><path d="M706.0 538.0 Q712.8 532.2 719.7 529.2" stroke="#55663f" stroke-width="2.7" fill="none" stroke-linecap="round" opacity="0.85"/><path d="M706.0 538.0 Q710.4 546.3 711.9 554.1" stroke="#6f8060" stroke-width="2.0" fill="none" stroke-linecap="round" opacity="0.85"/><path d="M706.0 538.0 Q714.1 532.5 719.9 526.9" stroke="#55663f" stroke-width="1.2" fill="none" stroke-linecap="round" opacity="0.85"/><path d="M706.0 538.0 Q710.9 529.8 715.0 523.1" stroke="#7b8c6a" stroke-width="1.3" fill="none" stroke-linecap="round" opacity="0.85"/><path d="M706.0 538.0 Q716.9 544.0 723.5 552.4" stroke="#7b8c6a" stroke-width="2.2" fill="none" stroke-linecap="round" opacity="0.85"/><path d="M706.0 538.0 Q697.5 541.1 689.8 540.1" stroke="#7b8c6a" stroke-width="1.7" fill="none" stroke-linecap="round" opacity="0.85"/><path d="M706.0 538.0 Q707.5 547.7 712.5 554.7" stroke="#627352" stroke-width="2.1" fill="none" stroke-linecap="round" opacity="0.85"/><path d="M706.0 538.0 Q698.1 536.4 692.2 533.0" stroke="#869672" stroke-width="1.6" fill="none" stroke-linecap="round" opacity="0.85"/><path d="M706.0 538.0 Q691.5 530.0 683.0 518.7" stroke="#7b8c6a" stroke-width="3.1" fill="none" stroke-linecap="round" opacity="0.85"/><path d="M706.0 538.0 Q717.5 533.8 726.8 530.3" stroke="#627352" stroke-width="1.7" fill="none" stroke-linecap="round" opacity="0.85"/><path d="M706.0 538.0 Q701.1 544.8 699.9 551.9" stroke="#7b8c6a" stroke-width="2.2" fill="none" stroke-linecap="round" opacity="0.85"/><path d="M706.0 538.0 Q692.2 540.5 681.2 544.2" stroke="#7b8c6a" stroke-width="1.3" fill="none" stroke-linecap="round" opacity="0.85"/><path d="M706.0 538.0 Q715.1 542.1 720.8 548.5" stroke="#55663f" stroke-width="2.8" fill="none" stroke-linecap="round" opacity="0.85"/><path d="M706.0 538.0 Q717.8 537.6 727.3 535.9" stroke="#55663f" stroke-width="1.6" fill="none" stroke-linecap="round" opacity="0.85"/><path d="M706.0 538.0 Q713.6 524.3 716.7 511.7" stroke="#869672" stroke-width="2.5" fill="none" stroke-linecap="round" opacity="0.85"/><path d="M706.0 538.0 Q696.5 537.5 689.1 534.0" stroke="#4a5a38" stroke-width="2.2" fill="none" stroke-linecap="round" opacity="0.85"/><path d="M706.0 538.0 Q697.9 545.3 692.9 553.0" stroke="#6f8060" stroke-width="3.0" fill="none" stroke-linecap="round" opacity="0.85"/><path d="M706.0 538.0 Q713.5 530.3 718.2 522.7" stroke="#627352" stroke-width="3.0" fill="none" stroke-linecap="round" opacity="0.85"/><path d="M706.0 538.0 Q717.6 537.5 727.0 540.1" stroke="#7b8c6a" stroke-width="2.6" fill="none" stroke-linecap="round" opacity="0.85"/><path d="M706.0 538.0 Q717.3 539.5 726.2 542.6" stroke="#627352" stroke-width="1.5" fill="none" stroke-linecap="round" opacity="0.85"/><path d="M706.0 538.0 Q701.6 546.1 699.4 553.4" stroke="#55663f" stroke-width="1.3" fill="none" stroke-linecap="round" opacity="0.85"/><path d="M706.0 538.0 Q722.0 538.3 735.1 540.3" stroke="#7b8c6a" stroke-width="1.7" fill="none" stroke-linecap="round" opacity="0.85"/><path d="M706.0 538.0 Q715.2 527.3 721.6 517.5" stroke="#627352" stroke-width="2.5" fill="none" stroke-linecap="round" opacity="0.85"/><path d="M706.0 538.0 Q710.8 552.2 711.7 564.7" stroke="#7b8c6a" stroke-width="1.6" fill="none" stroke-linecap="round" opacity="0.85"/><path d="M706.0 538.0 Q719.9 534.7 731.6 533.9" stroke="#627352" stroke-width="1.3" fill="none" stroke-linecap="round" opacity="0.85"/><path d="M706.0 538.0 Q701.4 531.9 699.2 525.9" stroke="#627352" stroke-width="1.9" fill="none" stroke-linecap="round" opacity="0.85"/><path d="M706.0 538.0 Q710.4 530.4 714.3 524.3" stroke="#4a5a38" stroke-width="2.8" fill="none" stroke-linecap="round" opacity="0.85"/><path d="M706.0 538.0 Q693.3 532.3 682.6 528.4" stroke="#627352" stroke-width="1.5" fill="none" stroke-linecap="round" opacity="0.85"/><path d="M706.0 538.0 Q706.4 549.2 703.0 558.1" stroke="#4a5a38" stroke-width="3.0" fill="none" stroke-linecap="round" opacity="0.85"/><path d="M706.0 538.0 Q702.0 551.7 694.8 561.4" stroke="#7b8c6a" stroke-width="1.5" fill="none" stroke-linecap="round" opacity="0.85"/><path d="M706.0 538.0 Q696.6 531.3 688.0 527.3" stroke="#4a5a38" stroke-width="2.0" fill="none" stroke-linecap="round" opacity="0.85"/><path d="M706.0 538.0 Q715.7 525.1 724.7 515.5" stroke="#869672" stroke-width="1.7" fill="none" stroke-linecap="round" opacity="0.85"/><path d="M706.0 538.0 Q719.6 545.9 733.1 547.1" stroke="#55663f" stroke-width="1.4" fill="none" stroke-linecap="round" opacity="0.85"/><path d="M706.0 538.0 Q719.1 543.6 729.4 549.1" stroke="#627352" stroke-width="1.6" fill="none" stroke-linecap="round" opacity="0.85"/><path d="M706.0 538.0 Q691.5 533.7 679.0 533.0" stroke="#869672" stroke-width="2.8" fill="none" stroke-linecap="round" opacity="0.85"/><path d="M706.0 538.0 Q696.3 531.9 687.9 527.6" stroke="#4a5a38" stroke-width="2.2" fill="none" stroke-linecap="round" opacity="0.85"/><path d="M706.0 538.0 Q710.4 523.1 714.9 511.1" stroke="#627352" stroke-width="3.1" fill="none" stroke-linecap="round" opacity="0.85"/><path d="M706.0 538.0 Q699.3 531.0 691.2 528.3" stroke="#869672" stroke-width="2.0" fill="none" stroke-linecap="round" opacity="0.85"/><path d="M706.0 538.0 Q699.9 528.7 693.4 522.1" stroke="#6f8060" stroke-width="3.1" fill="none" stroke-linecap="round" opacity="0.85"/><circle cx="748" cy="540" r="20.3" fill="#607049"/><circle cx="748" cy="540" r="10.4" fill="#4c5b3a"/><path d="M748.0 540.0 Q759.7 543.8 768.0 549.9" stroke="#7b8c6a" stroke-width="2.4" fill="none" stroke-linecap="round" opacity="0.85"/><path d="M748.0 540.0 Q740.5 551.4 736.3 561.9" stroke="#6f8060" stroke-width="2.1" fill="none" stroke-linecap="round" opacity="0.85"/><path d="M748.0 540.0 Q746.7 528.5 742.7 519.7" stroke="#6f8060" stroke-width="1.6" fill="none" stroke-linecap="round" opacity="0.85"/><path d="M748.0 540.0 Q748.8 549.8 749.9 557.8" stroke="#627352" stroke-width="3.1" fill="none" stroke-linecap="round" opacity="0.85"/><path d="M748.0 540.0 Q741.4 543.6 736.9 547.9" stroke="#6f8060" stroke-width="2.7" fill="none" stroke-linecap="round" opacity="0.85"/><path d="M748.0 540.0 Q738.6 546.9 734.5 556.4" stroke="#627352" stroke-width="2.7" fill="none" stroke-linecap="round" opacity="0.85"/><path d="M748.0 540.0 Q737.8 531.4 732.5 521.3" stroke="#4a5a38" stroke-width="1.4" fill="none" stroke-linecap="round" opacity="0.85"/><path d="M748.0 540.0 Q740.0 545.6 733.3 549.9" stroke="#4a5a38" stroke-width="1.4" fill="none" stroke-linecap="round" opacity="0.85"/><path d="M748.0 540.0 Q743.6 549.8 738.4 556.9" stroke="#7b8c6a" stroke-width="1.9" fill="none" stroke-linecap="round" opacity="0.85"/><path d="M748.0 540.0 Q751.9 528.8 756.1 520.0" stroke="#627352" stroke-width="2.6" fill="none" stroke-linecap="round" opacity="0.85"/><path d="M748.0 540.0 Q755.9 548.2 763.3 553.9" stroke="#4a5a38" stroke-width="1.8" fill="none" stroke-linecap="round" opacity="0.85"/><path d="M748.0 540.0 Q739.5 531.6 733.6 523.7" stroke="#627352" stroke-width="3.1" fill="none" stroke-linecap="round" opacity="0.85"/><path d="M748.0 540.0 Q755.3 531.0 760.4 523.1" stroke="#55663f" stroke-width="1.5" fill="none" stroke-linecap="round" opacity="0.85"/><path d="M748.0 540.0 Q757.8 531.0 762.2 520.4" stroke="#627352" stroke-width="2.4" fill="none" stroke-linecap="round" opacity="0.85"/><path d="M748.0 540.0 Q739.0 536.4 733.5 530.1" stroke="#55663f" stroke-width="2.3" fill="none" stroke-linecap="round" opacity="0.85"/><path d="M748.0 540.0 Q755.7 539.0 762.2 540.4" stroke="#55663f" stroke-width="2.6" fill="none" stroke-linecap="round" opacity="0.85"/><path d="M748.0 540.0 Q756.9 550.2 759.2 561.9" stroke="#627352" stroke-width="2.8" fill="none" stroke-linecap="round" opacity="0.85"/><path d="M748.0 540.0 Q758.5 548.9 766.9 556.5" stroke="#627352" stroke-width="3.1" fill="none" stroke-linecap="round" opacity="0.85"/><path d="M748.0 540.0 Q756.3 544.0 762.9 547.4" stroke="#869672" stroke-width="1.8" fill="none" stroke-linecap="round" opacity="0.85"/><path d="M748.0 540.0 Q748.4 546.9 747.3 552.5" stroke="#627352" stroke-width="1.4" fill="none" stroke-linecap="round" opacity="0.85"/><path d="M748.0 540.0 Q753.9 543.5 759.5 544.8" stroke="#627352" stroke-width="3.1" fill="none" stroke-linecap="round" opacity="0.85"/><path d="M748.0 540.0 Q747.3 530.9 745.8 523.6" stroke="#627352" stroke-width="2.2" fill="none" stroke-linecap="round" opacity="0.85"/><path d="M748.0 540.0 Q760.7 538.7 771.2 538.5" stroke="#869672" stroke-width="2.7" fill="none" stroke-linecap="round" opacity="0.85"/><path d="M748.0 540.0 Q745.2 546.0 744.7 551.5" stroke="#55663f" stroke-width="1.8" fill="none" stroke-linecap="round" opacity="0.85"/><path d="M748.0 540.0 Q757.3 545.9 764.7 551.2" stroke="#869672" stroke-width="1.6" fill="none" stroke-linecap="round" opacity="0.85"/><path d="M748.0 540.0 Q735.4 542.7 725.1 544.6" stroke="#869672" stroke-width="2.4" fill="none" stroke-linecap="round" opacity="0.85"/><path d="M748.0 540.0 Q742.6 543.7 737.1 544.7" stroke="#627352" stroke-width="3.1" fill="none" stroke-linecap="round" opacity="0.85"/><path d="M748.0 540.0 Q742.5 533.7 737.9 528.7" stroke="#7b8c6a" stroke-width="1.7" fill="none" stroke-linecap="round" opacity="0.85"/><path d="M748.0 540.0 Q745.5 546.4 741.8 550.9" stroke="#55663f" stroke-width="1.7" fill="none" stroke-linecap="round" opacity="0.85"/><path d="M748.0 540.0 Q746.8 551.4 742.7 560.2" stroke="#4a5a38" stroke-width="2.6" fill="none" stroke-linecap="round" opacity="0.85"/><path d="M748.0 540.0 Q756.0 551.7 758.4 563.6" stroke="#6f8060" stroke-width="3.2" fill="none" stroke-linecap="round" opacity="0.85"/><path d="M748.0 540.0 Q756.9 544.8 764.9 547.0" stroke="#869672" stroke-width="1.9" fill="none" stroke-linecap="round" opacity="0.85"/><path d="M748.0 540.0 Q760.3 536.9 770.3 534.1" stroke="#6f8060" stroke-width="1.8" fill="none" stroke-linecap="round" opacity="0.85"/><path d="M748.0 540.0 Q746.4 552.4 740.1 561.4" stroke="#6f8060" stroke-width="1.8" fill="none" stroke-linecap="round" opacity="0.85"/><path d="M748.0 540.0 Q740.4 539.5 734.2 538.8" stroke="#627352" stroke-width="3.1" fill="none" stroke-linecap="round" opacity="0.85"/><path d="M748.0 540.0 Q749.1 547.3 752.3 552.7" stroke="#4a5a38" stroke-width="2.2" fill="none" stroke-linecap="round" opacity="0.85"/><path d="M748.0 540.0 Q742.2 531.6 740.7 523.0" stroke="#55663f" stroke-width="1.8" fill="none" stroke-linecap="round" opacity="0.85"/><path d="M748.0 540.0 Q755.9 545.3 763.6 547.3" stroke="#6f8060" stroke-width="2.2" fill="none" stroke-linecap="round" opacity="0.85"/><path d="M748.0 540.0 Q738.0 539.6 729.9 538.5" stroke="#869672" stroke-width="2.9" fill="none" stroke-linecap="round" opacity="0.85"/><path d="M748.0 540.0 Q747.3 529.4 742.6 521.4" stroke="#869672" stroke-width="2.8" fill="none" stroke-linecap="round" opacity="0.85"/><path d="M748.0 540.0 Q743.8 534.1 738.3 531.0" stroke="#869672" stroke-width="2.1" fill="none" stroke-linecap="round" opacity="0.85"/><path d="M748.0 540.0 Q758.5 548.0 764.1 557.8" stroke="#4a5a38" stroke-width="3.1" fill="none" stroke-linecap="round" opacity="0.85"/><path d="M748.0 540.0 Q736.7 540.4 727.9 544.4" stroke="#55663f" stroke-width="1.8" fill="none" stroke-linecap="round" opacity="0.85"/><path d="M748.0 540.0 Q742.7 532.6 739.2 526.0" stroke="#627352" stroke-width="2.2" fill="none" stroke-linecap="round" opacity="0.85"/><path d="M748.0 540.0 Q757.8 550.0 769.2 554.2" stroke="#6f8060" stroke-width="1.3" fill="none" stroke-linecap="round" opacity="0.85"/><path d="M748.0 540.0 Q741.4 531.7 738.7 523.1" stroke="#6f8060" stroke-width="2.6" fill="none" stroke-linecap="round" opacity="0.85"/><path d="M748.0 540.0 Q735.1 538.1 724.9 535.3" stroke="#627352" stroke-width="1.5" fill="none" stroke-linecap="round" opacity="0.85"/><path d="M748.0 540.0 Q752.0 528.7 755.6 519.6" stroke="#627352" stroke-width="1.9" fill="none" stroke-linecap="round" opacity="0.85"/><path d="M748.0 540.0 Q741.8 536.4 735.7 535.8" stroke="#869672" stroke-width="3.1" fill="none" stroke-linecap="round" opacity="0.85"/><path d="M748.0 540.0 Q734.1 540.6 723.0 544.3" stroke="#6f8060" stroke-width="2.4" fill="none" stroke-linecap="round" opacity="0.85"/><path d="M748.0 540.0 Q742.6 545.9 736.6 549.1" stroke="#869672" stroke-width="2.8" fill="none" stroke-linecap="round" opacity="0.85"/><path d="M748.0 540.0 Q755.2 539.2 760.8 536.6" stroke="#6f8060" stroke-width="2.8" fill="none" stroke-linecap="round" opacity="0.85"/><path d="M748.0 540.0 Q758.5 540.0 766.7 543.3" stroke="#869672" stroke-width="2.8" fill="none" stroke-linecap="round" opacity="0.85"/><path d="M748.0 540.0 Q754.6 534.0 757.9 527.1" stroke="#869672" stroke-width="1.5" fill="none" stroke-linecap="round" opacity="0.85"/><path d="M748.0 540.0 Q745.2 528.7 739.3 520.7" stroke="#55663f" stroke-width="1.3" fill="none" stroke-linecap="round" opacity="0.85"/><path d="M748.0 540.0 Q741.7 538.4 737.4 534.6" stroke="#4a5a38" stroke-width="2.7" fill="none" stroke-linecap="round" opacity="0.85"/><path d="M748.0 540.0 Q761.2 545.5 773.2 546.1" stroke="#6f8060" stroke-width="1.7" fill="none" stroke-linecap="round" opacity="0.85"/><path d="M748.0 540.0 Q747.6 549.3 746.3 556.8" stroke="#6f8060" stroke-width="1.9" fill="none" stroke-linecap="round" opacity="0.85"/><path d="M748.0 540.0 Q745.7 553.7 742.7 564.6" stroke="#869672" stroke-width="1.2" fill="none" stroke-linecap="round" opacity="0.85"/><path d="M748.0 540.0 Q740.9 528.6 732.0 521.6" stroke="#627352" stroke-width="2.7" fill="none" stroke-linecap="round" opacity="0.85"/><path d="M748.0 540.0 Q744.5 534.1 740.3 530.2" stroke="#627352" stroke-width="3.0" fill="none" stroke-linecap="round" opacity="0.85"/><path d="M748.0 540.0 Q751.0 532.1 753.9 525.9" stroke="#7b8c6a" stroke-width="2.5" fill="none" stroke-linecap="round" opacity="0.85"/><path d="M748.0 540.0 Q743.9 547.2 742.7 554.2" stroke="#869672" stroke-width="2.6" fill="none" stroke-linecap="round" opacity="0.85"/><path d="M748.0 540.0 Q738.8 549.3 734.6 559.6" stroke="#627352" stroke-width="2.9" fill="none" stroke-linecap="round" opacity="0.85"/><path d="M748.0 540.0 Q761.2 538.2 771.2 533.2" stroke="#55663f" stroke-width="2.3" fill="none" stroke-linecap="round" opacity="0.85"/><path d="M748.0 540.0 Q757.4 529.4 762.1 518.5" stroke="#7b8c6a" stroke-width="3.1" fill="none" stroke-linecap="round" opacity="0.85"/><path d="M748.0 540.0 Q749.8 526.8 752.9 516.4" stroke="#6f8060" stroke-width="1.6" fill="none" stroke-linecap="round" opacity="0.85"/><path d="M748.0 540.0 Q755.1 541.9 760.3 545.2" stroke="#55663f" stroke-width="3.0" fill="none" stroke-linecap="round" opacity="0.85"/><path d="M748.0 540.0 Q753.7 544.1 759.4 545.4" stroke="#627352" stroke-width="2.7" fill="none" stroke-linecap="round" opacity="0.85"/><path d="M748.0 540.0 Q741.7 533.7 737.7 527.6" stroke="#7b8c6a" stroke-width="2.2" fill="none" stroke-linecap="round" opacity="0.85"/><path d="M748.0 540.0 Q740.1 529.1 731.5 521.9" stroke="#6f8060" stroke-width="2.1" fill="none" stroke-linecap="round" opacity="0.85"/><path d="M748.0 540.0 Q742.4 552.1 738.9 562.4" stroke="#55663f" stroke-width="2.3" fill="none" stroke-linecap="round" opacity="0.85"/><path d="M748.0 540.0 Q761.5 539.2 772.5 539.7" stroke="#7b8c6a" stroke-width="1.3" fill="none" stroke-linecap="round" opacity="0.85"/><path d="M748.0 540.0 Q756.7 532.2 763.5 525.5" stroke="#6f8060" stroke-width="1.6" fill="none" stroke-linecap="round" opacity="0.85"/><path d="M748.0 540.0 Q759.3 537.2 767.0 530.7" stroke="#869672" stroke-width="2.9" fill="none" stroke-linecap="round" opacity="0.85"/><path d="M748.0 540.0 Q759.1 540.4 767.7 544.4" stroke="#869672" stroke-width="2.1" fill="none" stroke-linecap="round" opacity="0.85"/><path d="M748.0 540.0 Q755.8 541.1 762.3 539.9" stroke="#4a5a38" stroke-width="1.8" fill="none" stroke-linecap="round" opacity="0.85"/><path d="M748.0 540.0 Q743.9 547.1 738.8 551.7" stroke="#55663f" stroke-width="2.7" fill="none" stroke-linecap="round" opacity="0.85"/><path d="M748.0 540.0 Q759.2 531.2 767.2 522.6" stroke="#7b8c6a" stroke-width="2.1" fill="none" stroke-linecap="round" opacity="0.85"/><path d="M748.0 540.0 Q756.6 544.6 763.6 548.2" stroke="#6f8060" stroke-width="1.9" fill="none" stroke-linecap="round" opacity="0.85"/><path d="M748.0 540.0 Q758.3 539.1 766.4 536.8" stroke="#55663f" stroke-width="2.7" fill="none" stroke-linecap="round" opacity="0.85"/><path d="M748.0 540.0 Q754.3 552.4 763.8 559.9" stroke="#4a5a38" stroke-width="3.2" fill="none" stroke-linecap="round" opacity="0.85"/><path d="M748.0 540.0 Q750.3 546.2 754.1 550.3" stroke="#55663f" stroke-width="2.5" fill="none" stroke-linecap="round" opacity="0.85"/><path d="M748.0 540.0 Q737.2 548.5 731.9 559.0" stroke="#55663f" stroke-width="1.6" fill="none" stroke-linecap="round" opacity="0.85"/><path d="M748.0 540.0 Q755.2 530.3 761.0 522.4" stroke="#627352" stroke-width="2.6" fill="none" stroke-linecap="round" opacity="0.85"/><path d="M748.0 540.0 Q757.7 535.2 766.0 531.9" stroke="#869672" stroke-width="1.5" fill="none" stroke-linecap="round" opacity="0.85"/><path d="M748.0 540.0 Q755.5 540.6 761.4 542.6" stroke="#4a5a38" stroke-width="2.6" fill="none" stroke-linecap="round" opacity="0.85"/><path d="M748.0 540.0 Q738.2 543.7 731.3 549.1" stroke="#55663f" stroke-width="2.1" fill="none" stroke-linecap="round" opacity="0.85"/><path d="M748.0 540.0 Q752.6 527.3 756.0 516.7" stroke="#627352" stroke-width="1.5" fill="none" stroke-linecap="round" opacity="0.85"/><path d="M748.0 540.0 Q746.8 552.8 750.6 563.3" stroke="#627352" stroke-width="1.7" fill="none" stroke-linecap="round" opacity="0.85"/><path d="M748.0 540.0 Q751.5 550.5 754.0 559.2" stroke="#869672" stroke-width="2.6" fill="none" stroke-linecap="round" opacity="0.85"/><path d="M748.0 540.0 Q742.4 534.1 735.7 531.8" stroke="#7b8c6a" stroke-width="2.9" fill="none" stroke-linecap="round" opacity="0.85"/><path d="M748.0 540.0 Q760.1 546.8 771.8 548.2" stroke="#55663f" stroke-width="2.1" fill="none" stroke-linecap="round" opacity="0.85"/><path d="M748.0 540.0 Q756.5 533.3 763.8 528.2" stroke="#6f8060" stroke-width="2.0" fill="none" stroke-linecap="round" opacity="0.85"/><path d="M748.0 540.0 Q737.5 530.3 731.3 520.1" stroke="#869672" stroke-width="1.9" fill="none" stroke-linecap="round" opacity="0.85"/><path d="M748.0 540.0 Q750.7 547.2 752.4 553.3" stroke="#4a5a38" stroke-width="2.0" fill="none" stroke-linecap="round" opacity="0.85"/><path d="M748.0 540.0 Q745.5 551.1 740.3 559.3" stroke="#627352" stroke-width="2.1" fill="none" stroke-linecap="round" opacity="0.85"/><path d="M748.0 540.0 Q742.3 548.7 740.4 557.3" stroke="#7b8c6a" stroke-width="1.6" fill="none" stroke-linecap="round" opacity="0.85"/><path d="M748.0 540.0 Q749.1 529.0 750.4 520.0" stroke="#6f8060" stroke-width="2.1" fill="none" stroke-linecap="round" opacity="0.85"/><rect x="790" y="458" width="22" height="72" fill="#d6d6d6" /><rect x="770" y="493" width="20" height="59" fill="#d6d6d6" /><rect x="792" y="468" width="5" height="60" fill="#1a1a1a" /><rect x="785" y="413" width="4" height="127" fill="#8a7a6a" /><rect x="812" y="460" width="136" height="92" fill="#9a9a9a" /><circle cx="866" cy="502" r="22" fill="#777777" /><circle cx="866" cy="504" r="22" fill="#5a5a5a" opacity="0.5"/><circle cx="866" cy="502" r="17" fill="#0c0c0c" /><ellipse cx="866" cy="500" rx="4" ry="6" fill="#e8a080" /><ellipse cx="866" cy="501" rx="2" ry="3" fill="#fff0e0" /><g transform="translate(833 462) rotate(35)"><path d="M-16 -10 L16 -10 L20 14 L-20 14Z" fill="none" stroke="#6a5a4a" stroke-width="1"/><rect x="-14" y="-12" width="28" height="22" rx="5" fill="#d8d0c4"/><path d="M-8 -10 Q-6 0 -9 9 M2 -10 Q4 0 1 9" stroke="#a89e90" stroke-width="1" fill="none"/></g><g transform="translate(903 464) rotate(-35)"><path d="M-16 -10 L16 -10 L20 14 L-20 14Z" fill="none" stroke="#6a5a4a" stroke-width="1"/><rect x="-14" y="-12" width="28" height="22" rx="5" fill="#d8d0c4"/><path d="M-8 -10 Q-6 0 -9 9 M2 -10 Q4 0 1 9" stroke="#a89e90" stroke-width="1" fill="none"/></g><g transform="translate(830 520) rotate(-20)"><path d="M-16 -10 L16 -10 L20 14 L-20 14Z" fill="none" stroke="#6a5a4a" stroke-width="1"/><rect x="-14" y="-12" width="28" height="22" rx="5" fill="#d8d0c4"/><path d="M-8 -10 Q-6 0 -9 9 M2 -10 Q4 0 1 9" stroke="#a89e90" stroke-width="1" fill="none"/></g><g transform="translate(893 522) rotate(25)"><path d="M-16 -10 L16 -10 L20 14 L-20 14Z" fill="none" stroke="#6a5a4a" stroke-width="1"/><rect x="-14" y="-12" width="28" height="22" rx="5" fill="#d8d0c4"/><path d="M-8 -10 Q-6 0 -9 9 M2 -10 Q4 0 1 9" stroke="#a89e90" stroke-width="1" fill="none"/></g><rect x="950" y="530" width="213" height="11" fill="#8a8a8a" /><polygon points="967.3,497.0 971.4,501.4 973.2,505.8 975.7,510.2 977.3,514.6 979.9,519.0 980.9,523.4 979.4,527.8 979.1,532.2 979.1,536.6 978.7,541.0 957.4,541.0 956.5,536.6 955.7,532.2 957.2,527.8 956.4,523.4 955.4,519.0 958.5,514.6 960.0,510.2 961.6,505.8 965.1,501.4 969.0,497.0" fill="url(#cyp)"/><polygon points="1004.8,500.0 1008.0,504.1 1010.6,508.2 1013.6,512.3 1015.7,516.4 1017.0,520.5 1017.9,524.6 1015.8,528.7 1016.1,532.8 1017.1,536.9 1016.7,541.0 994.2,541.0 994.2,536.9 993.2,532.8 994.4,528.7 993.3,524.6 993.3,520.5 993.9,516.4 995.6,512.3 999.9,508.2 1002.5,504.1 1003.9,500.0" fill="url(#cyp)"/><polygon points="1031.6,482.0 1035.1,487.9 1038.1,493.8 1040.2,499.7 1043.3,505.6 1043.1,511.5 1043.9,517.4 1044.7,523.3 1043.8,529.2 1043.2,535.1 1042.6,541.0 1020.7,541.0 1021.0,535.1 1021.2,529.2 1019.8,523.3 1019.9,517.4 1020.3,511.5 1021.4,505.6 1024.5,499.7 1026.0,493.8 1028.3,487.9 1031.6,482.0" fill="url(#cyp)"/><polygon points="1070.8,480.0 1072.4,486.1 1076.5,492.2 1077.4,498.3 1079.6,504.4 1080.4,510.5 1082.5,516.6 1080.8,522.7 1080.8,528.8 1080.2,534.9 1080.5,541.0 1059.5,541.0 1059.3,534.9 1059.5,528.8 1059.4,522.7 1058.3,516.6 1059.6,510.5 1058.7,504.4 1062.5,498.3 1063.8,492.2 1066.1,486.1 1070.6,480.0" fill="url(#cyp)"/><polygon points="1100.9,478.0 1102.9,484.3 1105.1,490.6 1109.4,496.9 1110.9,503.2 1111.7,509.5 1113.0,515.8 1110.5,522.1 1110.4,528.4 1110.3,534.7 1109.9,541.0 1089.4,541.0 1089.1,534.7 1087.6,528.4 1087.6,522.1 1087.4,515.8 1088.8,509.5 1090.1,503.2 1092.6,496.9 1093.6,490.6 1098.0,484.3 1099.8,478.0" fill="url(#cyp)"/><polygon points="1132.7,482.0 1135.6,487.9 1138.4,493.8 1142.6,499.7 1144.5,505.6 1144.9,511.5 1144.0,517.4 1143.9,523.3 1143.6,529.2 1143.9,535.1 1144.6,541.0 1120.9,541.0 1121.8,535.1 1122.0,529.2 1120.2,523.3 1121.0,517.4 1122.3,511.5 1122.9,505.6 1124.4,499.7 1127.8,493.8 1130.1,487.9 1132.6,482.0" fill="url(#cyp)"/><polygon points="1164.8,485.0 1169.2,490.6 1171.9,496.2 1174.5,501.8 1175.5,507.4 1175.6,513.0 1176.0,518.6 1176.4,524.2 1176.9,529.8 1175.1,535.4 1176.8,541.0 1154.6,541.0 1153.8,535.4 1152.4,529.8 1154.1,524.2 1153.0,518.6 1154.0,513.0 1154.9,507.4 1157.0,501.8 1158.7,496.2 1162.9,490.6 1166.1,485.0" fill="url(#cyp)"/><rect x="950" y="541" width="213" height="3" fill="#151515" /><rect x="950" y="546" width="213" height="2" fill="#151515" /><rect x="950" y="510" width="3" height="50" fill="#151515" /><rect x="596" y="552" width="170" height="19" fill="#dcdcdc" /><rect x="596" y="571" width="170" height="21" fill="#4e4e4e" /><rect x="766" y="554" width="192" height="5" fill="#161616" /><rect x="766" y="558" width="192" height="17" fill="#7a7a7a" /><ellipse cx="790" cy="565" rx="25" ry="8" fill="#6f8060" opacity="0.7"/><rect x="766" y="575" width="192" height="16" fill="#c6c6c6" /><circle cx="815" cy="552" r="23.4" fill="#607049"/><circle cx="815" cy="552" r="12.0" fill="#4c5b3a"/><path d="M815.0 552.0 Q825.7 544.6 836.3 541.8" stroke="#7b8c6a" stroke-width="1.8" fill="none" stroke-linecap="round" opacity="0.85"/><path d="M815.0 552.0 Q824.3 553.1 832.0 551.3" stroke="#4a5a38" stroke-width="2.5" fill="none" stroke-linecap="round" opacity="0.85"/><path d="M815.0 552.0 Q828.5 549.6 839.8 550.6" stroke="#4a5a38" stroke-width="1.8" fill="none" stroke-linecap="round" opacity="0.85"/><path d="M815.0 552.0 Q809.6 544.9 802.6 541.7" stroke="#7b8c6a" stroke-width="2.9" fill="none" stroke-linecap="round" opacity="0.85"/><path d="M815.0 552.0 Q822.9 537.7 833.8 528.8" stroke="#55663f" stroke-width="2.2" fill="none" stroke-linecap="round" opacity="0.85"/><path d="M815.0 552.0 Q815.9 539.4 816.6 529.1" stroke="#4a5a38" stroke-width="3.0" fill="none" stroke-linecap="round" opacity="0.85"/><path d="M815.0 552.0 Q811.5 545.4 811.2 539.0" stroke="#627352" stroke-width="2.4" fill="none" stroke-linecap="round" opacity="0.85"/><path d="M815.0 552.0 Q812.0 559.9 812.4 567.2" stroke="#7b8c6a" stroke-width="2.9" fill="none" stroke-linecap="round" opacity="0.85"/><path d="M815.0 552.0 Q816.4 544.0 820.4 538.2" stroke="#6f8060" stroke-width="2.1" fill="none" stroke-linecap="round" opacity="0.85"/><path d="M815.0 552.0 Q801.2 554.2 789.6 553.0" stroke="#869672" stroke-width="1.6" fill="none" stroke-linecap="round" opacity="0.85"/><path d="M815.0 552.0 Q819.0 543.6 818.4 535.4" stroke="#4a5a38" stroke-width="2.2" fill="none" stroke-linecap="round" opacity="0.85"/><path d="M815.0 552.0 Q803.8 557.8 794.5 562.2" stroke="#6f8060" stroke-width="2.8" fill="none" stroke-linecap="round" opacity="0.85"/><path d="M815.0 552.0 Q824.0 545.5 828.2 536.8" stroke="#7b8c6a" stroke-width="3.1" fill="none" stroke-linecap="round" opacity="0.85"/><path d="M815.0 552.0 Q830.0 553.0 841.1 559.8" stroke="#6f8060" stroke-width="2.8" fill="none" stroke-linecap="round" opacity="0.85"/><path d="M815.0 552.0 Q827.2 550.2 837.4 550.4" stroke="#627352" stroke-width="2.7" fill="none" stroke-linecap="round" opacity="0.85"/><path d="M815.0 552.0 Q821.0 538.0 831.4 529.8" stroke="#4a5a38" stroke-width="1.7" fill="none" stroke-linecap="round" opacity="0.85"/><path d="M815.0 552.0 Q807.1 554.3 800.2 554.1" stroke="#55663f" stroke-width="2.9" fill="none" stroke-linecap="round" opacity="0.85"/><path d="M815.0 552.0 Q801.9 543.9 792.5 535.5" stroke="#6f8060" stroke-width="1.4" fill="none" stroke-linecap="round" opacity="0.85"/><path d="M815.0 552.0 Q823.6 548.9 830.1 545.2" stroke="#55663f" stroke-width="1.5" fill="none" stroke-linecap="round" opacity="0.85"/><path d="M815.0 552.0 Q820.0 543.6 824.4 536.9" stroke="#627352" stroke-width="1.5" fill="none" stroke-linecap="round" opacity="0.85"/><path d="M815.0 552.0 Q815.5 542.3 818.9 534.8" stroke="#627352" stroke-width="3.0" fill="none" stroke-linecap="round" opacity="0.85"/><path d="M815.0 552.0 Q825.2 552.5 833.5 551.6" stroke="#55663f" stroke-width="3.2" fill="none" stroke-linecap="round" opacity="0.85"/><path d="M815.0 552.0 Q800.0 549.5 788.0 546.3" stroke="#55663f" stroke-width="2.1" fill="none" stroke-linecap="round" opacity="0.85"/><path d="M815.0 552.0 Q805.3 555.3 796.7 555.5" stroke="#7b8c6a" stroke-width="1.3" fill="none" stroke-linecap="round" opacity="0.85"/><path d="M815.0 552.0 Q801.3 557.8 788.6 558.2" stroke="#6f8060" stroke-width="3.1" fill="none" stroke-linecap="round" opacity="0.85"/><path d="M815.0 552.0 Q812.4 539.8 805.9 531.3" stroke="#627352" stroke-width="2.0" fill="none" stroke-linecap="round" opacity="0.85"/><path d="M815.0 552.0 Q823.9 544.5 832.1 539.4" stroke="#4a5a38" stroke-width="3.1" fill="none" stroke-linecap="round" opacity="0.85"/><path d="M815.0 552.0 Q801.1 548.3 790.4 543.3" stroke="#627352" stroke-width="2.4" fill="none" stroke-linecap="round" opacity="0.85"/><path d="M815.0 552.0 Q824.0 558.1 831.3 563.1" stroke="#627352" stroke-width="1.4" fill="none" stroke-linecap="round" opacity="0.85"/><path d="M815.0 552.0 Q813.8 562.4 811.1 570.6" stroke="#627352" stroke-width="2.4" fill="none" stroke-linecap="round" opacity="0.85"/><path d="M815.0 552.0 Q824.2 553.5 831.6 555.0" stroke="#6f8060" stroke-width="1.4" fill="none" stroke-linecap="round" opacity="0.85"/><path d="M815.0 552.0 Q805.9 563.2 797.0 571.3" stroke="#869672" stroke-width="3.1" fill="none" stroke-linecap="round" opacity="0.85"/><path d="M815.0 552.0 Q827.8 549.0 837.8 544.5" stroke="#869672" stroke-width="2.3" fill="none" stroke-linecap="round" opacity="0.85"/><path d="M815.0 552.0 Q808.1 562.9 800.0 570.1" stroke="#869672" stroke-width="1.8" fill="none" stroke-linecap="round" opacity="0.85"/><path d="M815.0 552.0 Q822.4 549.0 829.4 549.5" stroke="#4a5a38" stroke-width="1.2" fill="none" stroke-linecap="round" opacity="0.85"/><path d="M815.0 552.0 Q801.8 549.6 790.7 549.7" stroke="#627352" stroke-width="2.7" fill="none" stroke-linecap="round" opacity="0.85"/><path d="M815.0 552.0 Q809.2 537.3 803.4 525.6" stroke="#869672" stroke-width="3.2" fill="none" stroke-linecap="round" opacity="0.85"/><path d="M815.0 552.0 Q812.2 542.5 806.1 536.4" stroke="#55663f" stroke-width="3.1" fill="none" stroke-linecap="round" opacity="0.85"/><path d="M815.0 552.0 Q811.0 563.9 806.2 573.1" stroke="#7b8c6a" stroke-width="1.2" fill="none" stroke-linecap="round" opacity="0.85"/><path d="M815.0 552.0 Q810.2 540.7 809.5 530.4" stroke="#4a5a38" stroke-width="1.6" fill="none" stroke-linecap="round" opacity="0.85"/><path d="M815.0 552.0 Q823.0 564.7 826.7 576.6" stroke="#55663f" stroke-width="1.4" fill="none" stroke-linecap="round" opacity="0.85"/><path d="M815.0 552.0 Q823.4 543.3 831.1 537.0" stroke="#7b8c6a" stroke-width="1.8" fill="none" stroke-linecap="round" opacity="0.85"/><path d="M815.0 552.0 Q811.0 545.0 810.3 538.2" stroke="#7b8c6a" stroke-width="2.9" fill="none" stroke-linecap="round" opacity="0.85"/><path d="M815.0 552.0 Q816.6 542.3 814.6 534.0" stroke="#6f8060" stroke-width="1.5" fill="none" stroke-linecap="round" opacity="0.85"/><path d="M815.0 552.0 Q822.5 553.5 828.8 553.9" stroke="#7b8c6a" stroke-width="1.3" fill="none" stroke-linecap="round" opacity="0.85"/><path d="M815.0 552.0 Q808.7 545.7 805.8 538.7" stroke="#4a5a38" stroke-width="2.7" fill="none" stroke-linecap="round" opacity="0.85"/><path d="M815.0 552.0 Q823.4 545.2 832.1 542.5" stroke="#627352" stroke-width="2.3" fill="none" stroke-linecap="round" opacity="0.85"/><path d="M815.0 552.0 Q823.5 561.5 828.7 570.7" stroke="#627352" stroke-width="2.8" fill="none" stroke-linecap="round" opacity="0.85"/><path d="M815.0 552.0 Q807.5 548.4 801.2 545.8" stroke="#7b8c6a" stroke-width="2.2" fill="none" stroke-linecap="round" opacity="0.85"/><path d="M815.0 552.0 Q822.6 554.4 829.4 553.4" stroke="#627352" stroke-width="2.0" fill="none" stroke-linecap="round" opacity="0.85"/><path d="M815.0 552.0 Q830.2 555.1 843.3 553.0" stroke="#55663f" stroke-width="1.9" fill="none" stroke-linecap="round" opacity="0.85"/><path d="M815.0 552.0 Q804.7 547.4 797.5 541.1" stroke="#55663f" stroke-width="2.2" fill="none" stroke-linecap="round" opacity="0.85"/><path d="M815.0 552.0 Q806.1 539.9 801.9 528.1" stroke="#4a5a38" stroke-width="2.1" fill="none" stroke-linecap="round" opacity="0.85"/><path d="M815.0 552.0 Q830.8 552.4 843.0 558.7" stroke="#6f8060" stroke-width="1.6" fill="none" stroke-linecap="round" opacity="0.85"/><path d="M815.0 552.0 Q810.1 558.6 807.7 565.0" stroke="#7b8c6a" stroke-width="2.5" fill="none" stroke-linecap="round" opacity="0.85"/><path d="M815.0 552.0 Q828.9 556.2 838.5 563.8" stroke="#869672" stroke-width="2.1" fill="none" stroke-linecap="round" opacity="0.85"/><path d="M815.0 552.0 Q811.4 561.7 808.6 569.7" stroke="#869672" stroke-width="3.0" fill="none" stroke-linecap="round" opacity="0.85"/><path d="M815.0 552.0 Q826.9 547.3 835.9 541.9" stroke="#869672" stroke-width="2.2" fill="none" stroke-linecap="round" opacity="0.85"/><path d="M815.0 552.0 Q824.6 561.0 828.2 571.8" stroke="#4a5a38" stroke-width="1.3" fill="none" stroke-linecap="round" opacity="0.85"/><path d="M815.0 552.0 Q826.6 555.7 836.1 558.5" stroke="#627352" stroke-width="2.7" fill="none" stroke-linecap="round" opacity="0.85"/><path d="M815.0 552.0 Q821.9 563.6 827.1 573.4" stroke="#869672" stroke-width="2.1" fill="none" stroke-linecap="round" opacity="0.85"/><path d="M815.0 552.0 Q816.3 563.6 816.3 573.2" stroke="#869672" stroke-width="2.6" fill="none" stroke-linecap="round" opacity="0.85"/><path d="M815.0 552.0 Q818.3 559.6 819.8 566.2" stroke="#6f8060" stroke-width="2.6" fill="none" stroke-linecap="round" opacity="0.85"/><path d="M815.0 552.0 Q814.2 565.5 812.5 576.4" stroke="#7b8c6a" stroke-width="1.6" fill="none" stroke-linecap="round" opacity="0.85"/><path d="M815.0 552.0 Q819.7 545.4 823.2 539.9" stroke="#55663f" stroke-width="1.4" fill="none" stroke-linecap="round" opacity="0.85"/><path d="M815.0 552.0 Q830.8 552.5 843.6 550.3" stroke="#4a5a38" stroke-width="1.4" fill="none" stroke-linecap="round" opacity="0.85"/><path d="M815.0 552.0 Q813.6 560.2 814.7 567.1" stroke="#4a5a38" stroke-width="3.0" fill="none" stroke-linecap="round" opacity="0.85"/><path d="M815.0 552.0 Q813.8 567.9 807.5 579.9" stroke="#7b8c6a" stroke-width="2.8" fill="none" stroke-linecap="round" opacity="0.85"/><path d="M815.0 552.0 Q824.9 557.7 833.9 560.5" stroke="#55663f" stroke-width="2.5" fill="none" stroke-linecap="round" opacity="0.85"/><path d="M815.0 552.0 Q801.9 542.3 788.9 538.0" stroke="#869672" stroke-width="1.3" fill="none" stroke-linecap="round" opacity="0.85"/><path d="M815.0 552.0 Q827.8 559.2 838.8 564.1" stroke="#627352" stroke-width="1.7" fill="none" stroke-linecap="round" opacity="0.85"/><path d="M815.0 552.0 Q812.7 541.7 811.8 533.0" stroke="#6f8060" stroke-width="2.6" fill="none" stroke-linecap="round" opacity="0.85"/><path d="M815.0 552.0 Q817.1 543.4 822.6 537.7" stroke="#627352" stroke-width="2.1" fill="none" stroke-linecap="round" opacity="0.85"/><path d="M815.0 552.0 Q825.0 561.8 836.4 565.9" stroke="#869672" stroke-width="2.9" fill="none" stroke-linecap="round" opacity="0.85"/><path d="M815.0 552.0 Q808.1 545.0 805.4 537.0" stroke="#7b8c6a" stroke-width="1.4" fill="none" stroke-linecap="round" opacity="0.85"/><path d="M815.0 552.0 Q815.0 560.8 817.9 567.8" stroke="#55663f" stroke-width="2.9" fill="none" stroke-linecap="round" opacity="0.85"/><path d="M815.0 552.0 Q825.2 553.6 833.7 551.6" stroke="#4a5a38" stroke-width="3.0" fill="none" stroke-linecap="round" opacity="0.85"/><path d="M815.0 552.0 Q801.4 543.2 789.9 536.5" stroke="#4a5a38" stroke-width="2.5" fill="none" stroke-linecap="round" opacity="0.85"/><path d="M815.0 552.0 Q812.1 560.8 808.7 567.6" stroke="#627352" stroke-width="2.7" fill="none" stroke-linecap="round" opacity="0.85"/><path d="M815.0 552.0 Q802.4 550.1 791.8 550.5" stroke="#6f8060" stroke-width="1.6" fill="none" stroke-linecap="round" opacity="0.85"/><path d="M815.0 552.0 Q821.1 556.6 824.6 562.0" stroke="#4a5a38" stroke-width="2.1" fill="none" stroke-linecap="round" opacity="0.85"/><path d="M815.0 552.0 Q805.2 550.3 797.3 548.4" stroke="#869672" stroke-width="2.7" fill="none" stroke-linecap="round" opacity="0.85"/><path d="M815.0 552.0 Q806.5 560.1 799.9 567.1" stroke="#4a5a38" stroke-width="2.6" fill="none" stroke-linecap="round" opacity="0.85"/><path d="M815.0 552.0 Q805.9 547.7 797.4 547.0" stroke="#55663f" stroke-width="2.9" fill="none" stroke-linecap="round" opacity="0.85"/><path d="M815.0 552.0 Q801.0 551.0 789.6 554.8" stroke="#7b8c6a" stroke-width="1.6" fill="none" stroke-linecap="round" opacity="0.85"/><path d="M815.0 552.0 Q813.4 540.6 809.7 531.7" stroke="#6f8060" stroke-width="1.4" fill="none" stroke-linecap="round" opacity="0.85"/><path d="M815.0 552.0 Q816.4 561.4 819.6 568.7" stroke="#869672" stroke-width="2.8" fill="none" stroke-linecap="round" opacity="0.85"/><path d="M815.0 552.0 Q817.0 562.6 814.3 571.5" stroke="#4a5a38" stroke-width="1.2" fill="none" stroke-linecap="round" opacity="0.85"/><path d="M815.0 552.0 Q809.0 556.9 806.0 562.8" stroke="#4a5a38" stroke-width="3.1" fill="none" stroke-linecap="round" opacity="0.85"/><path d="M815.0 552.0 Q821.3 544.0 827.6 538.4" stroke="#6f8060" stroke-width="2.8" fill="none" stroke-linecap="round" opacity="0.85"/><path d="M815.0 552.0 Q828.0 558.8 835.7 568.8" stroke="#7b8c6a" stroke-width="2.7" fill="none" stroke-linecap="round" opacity="0.85"/><path d="M815.0 552.0 Q817.1 567.4 824.2 578.7" stroke="#627352" stroke-width="1.3" fill="none" stroke-linecap="round" opacity="0.85"/><path d="M815.0 552.0 Q821.6 538.2 831.2 529.4" stroke="#7b8c6a" stroke-width="2.1" fill="none" stroke-linecap="round" opacity="0.85"/><path d="M815.0 552.0 Q823.7 562.0 828.7 571.8" stroke="#6f8060" stroke-width="2.6" fill="none" stroke-linecap="round" opacity="0.85"/><path d="M815.0 552.0 Q829.5 547.6 839.3 539.0" stroke="#627352" stroke-width="1.9" fill="none" stroke-linecap="round" opacity="0.85"/><path d="M815.0 552.0 Q806.8 556.0 800.0 559.4" stroke="#6f8060" stroke-width="2.7" fill="none" stroke-linecap="round" opacity="0.85"/><path d="M815.0 552.0 Q820.8 560.0 828.8 563.6" stroke="#4a5a38" stroke-width="2.2" fill="none" stroke-linecap="round" opacity="0.85"/><path d="M815.0 552.0 Q826.0 552.4 834.9 550.3" stroke="#55663f" stroke-width="1.6" fill="none" stroke-linecap="round" opacity="0.85"/><path d="M815.0 552.0 Q822.4 559.3 829.2 564.3" stroke="#55663f" stroke-width="1.5" fill="none" stroke-linecap="round" opacity="0.85"/><path d="M815.0 552.0 Q818.8 558.6 820.2 564.8" stroke="#4a5a38" stroke-width="2.5" fill="none" stroke-linecap="round" opacity="0.85"/><path d="M815.0 552.0 Q827.3 558.5 835.5 566.6" stroke="#627352" stroke-width="2.9" fill="none" stroke-linecap="round" opacity="0.85"/><path d="M815.0 552.0 Q804.4 545.1 795.3 540.2" stroke="#55663f" stroke-width="1.8" fill="none" stroke-linecap="round" opacity="0.85"/><path d="M815.0 552.0 Q799.9 553.3 787.6 549.2" stroke="#7b8c6a" stroke-width="1.4" fill="none" stroke-linecap="round" opacity="0.85"/><path d="M815.0 552.0 Q819.7 561.1 819.3 570.1" stroke="#6f8060" stroke-width="2.0" fill="none" stroke-linecap="round" opacity="0.85"/><path d="M815.0 552.0 Q814.6 562.4 817.6 570.8" stroke="#869672" stroke-width="2.0" fill="none" stroke-linecap="round" opacity="0.85"/><path d="M815.0 552.0 Q815.4 564.7 815.9 575.2" stroke="#55663f" stroke-width="2.0" fill="none" stroke-linecap="round" opacity="0.85"/><path d="M815.0 552.0 Q805.3 548.9 797.4 546.3" stroke="#869672" stroke-width="2.1" fill="none" stroke-linecap="round" opacity="0.85"/><path d="M815.0 552.0 Q822.9 551.7 829.3 550.8" stroke="#627352" stroke-width="2.0" fill="none" stroke-linecap="round" opacity="0.85"/><path d="M815.0 552.0 Q822.7 562.3 825.6 572.9" stroke="#7b8c6a" stroke-width="2.1" fill="none" stroke-linecap="round" opacity="0.85"/><path d="M815.0 552.0 Q830.6 547.1 843.5 543.9" stroke="#869672" stroke-width="2.7" fill="none" stroke-linecap="round" opacity="0.85"/><path d="M815.0 552.0 Q823.2 552.4 830.0 551.3" stroke="#627352" stroke-width="2.1" fill="none" stroke-linecap="round" opacity="0.85"/><path d="M815.0 552.0 Q829.5 557.9 840.9 563.7" stroke="#55663f" stroke-width="1.6" fill="none" stroke-linecap="round" opacity="0.85"/><path d="M815.0 552.0 Q805.0 552.2 796.7 551.1" stroke="#4a5a38" stroke-width="2.6" fill="none" stroke-linecap="round" opacity="0.85"/><path d="M815.0 552.0 Q812.6 544.0 811.5 537.3" stroke="#55663f" stroke-width="2.3" fill="none" stroke-linecap="round" opacity="0.85"/><path d="M815.0 552.0 Q822.1 546.0 825.9 539.0" stroke="#6f8060" stroke-width="3.0" fill="none" stroke-linecap="round" opacity="0.85"/><path d="M815.0 552.0 Q805.4 543.9 796.8 538.4" stroke="#55663f" stroke-width="1.7" fill="none" stroke-linecap="round" opacity="0.85"/><path d="M815.0 552.0 Q812.9 537.1 809.3 525.2" stroke="#4a5a38" stroke-width="1.9" fill="none" stroke-linecap="round" opacity="0.85"/><path d="M815.0 552.0 Q824.2 561.9 831.0 570.7" stroke="#627352" stroke-width="1.4" fill="none" stroke-linecap="round" opacity="0.85"/><path d="M815.0 552.0 Q825.7 551.8 833.7 546.8" stroke="#627352" stroke-width="2.0" fill="none" stroke-linecap="round" opacity="0.85"/><path d="M815.0 552.0 Q820.5 563.0 822.2 573.1" stroke="#6f8060" stroke-width="1.9" fill="none" stroke-linecap="round" opacity="0.85"/><path d="M815.0 552.0 Q819.6 541.4 820.2 531.6" stroke="#6f8060" stroke-width="2.9" fill="none" stroke-linecap="round" opacity="0.85"/><path d="M815.0 552.0 Q824.7 556.8 833.4 559.1" stroke="#6f8060" stroke-width="3.0" fill="none" stroke-linecap="round" opacity="0.85"/><path d="M815.0 552.0 Q809.9 541.2 805.2 532.6" stroke="#627352" stroke-width="2.1" fill="none" stroke-linecap="round" opacity="0.85"/><path d="M815.0 552.0 Q823.2 555.7 829.9 558.7" stroke="#869672" stroke-width="1.6" fill="none" stroke-linecap="round" opacity="0.85"/><path d="M815.0 552.0 Q809.3 538.8 807.2 527.0" stroke="#6f8060" stroke-width="2.5" fill="none" stroke-linecap="round" opacity="0.85"/><path d="M815.0 552.0 Q801.1 551.6 790.3 546.6" stroke="#55663f" stroke-width="2.7" fill="none" stroke-linecap="round" opacity="0.85"/><path d="M815.0 552.0 Q808.3 563.8 806.1 575.0" stroke="#4a5a38" stroke-width="2.3" fill="none" stroke-linecap="round" opacity="0.85"/><path d="M815.0 552.0 Q829.7 548.9 840.4 542.0" stroke="#869672" stroke-width="2.5" fill="none" stroke-linecap="round" opacity="0.85"/><path d="M815.0 552.0 Q802.1 545.9 791.3 541.5" stroke="#7b8c6a" stroke-width="1.9" fill="none" stroke-linecap="round" opacity="0.85"/><path d="M815.0 552.0 Q818.7 559.1 822.4 564.4" stroke="#55663f" stroke-width="3.1" fill="none" stroke-linecap="round" opacity="0.85"/><path d="M815.0 552.0 Q830.9 552.5 843.3 558.0" stroke="#869672" stroke-width="3.1" fill="none" stroke-linecap="round" opacity="0.85"/><path d="M815.0 552.0 Q815.9 544.0 820.1 538.3" stroke="#4a5a38" stroke-width="3.0" fill="none" stroke-linecap="round" opacity="0.85"/><circle cx="860" cy="548" r="22" fill="#7d8c68" opacity="0.92"/><circle cx="925" cy="518" r="42.1" fill="#607049"/><circle cx="925" cy="518" r="21.6" fill="#4c5b3a"/><path d="M925.0 518.0 Q912.2 506.7 902.1 496.9" stroke="#869672" stroke-width="1.4" fill="none" stroke-linecap="round" opacity="0.85"/><path d="M925.0 518.0 Q927.5 534.2 927.1 547.6" stroke="#869672" stroke-width="1.8" fill="none" stroke-linecap="round" opacity="0.85"/><path d="M925.0 518.0 Q943.8 516.6 958.8 523.6" stroke="#55663f" stroke-width="1.3" fill="none" stroke-linecap="round" opacity="0.85"/><path d="M925.0 518.0 Q920.8 504.5 920.1 492.7" stroke="#869672" stroke-width="2.6" fill="none" stroke-linecap="round" opacity="0.85"/><path d="M925.0 518.0 Q950.3 505.7 969.9 493.4" stroke="#7b8c6a" stroke-width="2.9" fill="none" stroke-linecap="round" opacity="0.85"/><path d="M925.0 518.0 Q947.3 516.5 965.0 510.6" stroke="#55663f" stroke-width="1.2" fill="none" stroke-linecap="round" opacity="0.85"/><path d="M925.0 518.0 Q927.2 532.7 928.8 544.8" stroke="#4a5a38" stroke-width="3.1" fill="none" stroke-linecap="round" opacity="0.85"/><path d="M925.0 518.0 Q902.3 502.0 884.2 488.1" stroke="#4a5a38" stroke-width="2.0" fill="none" stroke-linecap="round" opacity="0.85"/><path d="M925.0 518.0 Q927.4 497.3 933.5 481.1" stroke="#627352" stroke-width="1.6" fill="none" stroke-linecap="round" opacity="0.85"/><path d="M925.0 518.0 Q921.5 491.3 923.4 469.0" stroke="#869672" stroke-width="1.7" fill="none" stroke-linecap="round" opacity="0.85"/><path d="M925.0 518.0 Q939.4 521.9 951.0 525.7" stroke="#6f8060" stroke-width="2.1" fill="none" stroke-linecap="round" opacity="0.85"/><path d="M925.0 518.0 Q910.3 533.4 902.7 549.6" stroke="#869672" stroke-width="2.4" fill="none" stroke-linecap="round" opacity="0.85"/><path d="M925.0 518.0 Q922.1 498.3 915.5 483.0" stroke="#7b8c6a" stroke-width="1.5" fill="none" stroke-linecap="round" opacity="0.85"/><path d="M925.0 518.0 Q913.5 501.7 905.1 487.5" stroke="#627352" stroke-width="2.2" fill="none" stroke-linecap="round" opacity="0.85"/><path d="M925.0 518.0 Q934.6 545.6 946.2 566.7" stroke="#627352" stroke-width="1.6" fill="none" stroke-linecap="round" opacity="0.85"/><path d="M925.0 518.0 Q927.7 540.5 925.3 559.3" stroke="#6f8060" stroke-width="3.0" fill="none" stroke-linecap="round" opacity="0.85"/><path d="M925.0 518.0 Q913.9 499.9 899.6 488.9" stroke="#4a5a38" stroke-width="2.0" fill="none" stroke-linecap="round" opacity="0.85"/><path d="M925.0 518.0 Q917.4 543.4 905.6 562.2" stroke="#6f8060" stroke-width="2.9" fill="none" stroke-linecap="round" opacity="0.85"/><path d="M925.0 518.0 Q939.5 501.0 944.8 482.4" stroke="#869672" stroke-width="2.4" fill="none" stroke-linecap="round" opacity="0.85"/><path d="M925.0 518.0 Q922.3 502.1 916.1 490.1" stroke="#55663f" stroke-width="2.5" fill="none" stroke-linecap="round" opacity="0.85"/><path d="M925.0 518.0 Q916.0 492.9 903.8 474.3" stroke="#869672" stroke-width="2.1" fill="none" stroke-linecap="round" opacity="0.85"/><path d="M925.0 518.0 Q899.9 528.4 879.4 537.1" stroke="#627352" stroke-width="1.5" fill="none" stroke-linecap="round" opacity="0.85"/><path d="M925.0 518.0 Q936.5 530.5 943.3 542.9" stroke="#7b8c6a" stroke-width="2.9" fill="none" stroke-linecap="round" opacity="0.85"/><path d="M925.0 518.0 Q945.6 532.5 962.0 544.8" stroke="#627352" stroke-width="2.9" fill="none" stroke-linecap="round" opacity="0.85"/><path d="M925.0 518.0 Q904.5 518.1 888.7 509.2" stroke="#55663f" stroke-width="2.2" fill="none" stroke-linecap="round" opacity="0.85"/><path d="M925.0 518.0 Q940.3 511.4 952.3 505.1" stroke="#869672" stroke-width="1.3" fill="none" stroke-linecap="round" opacity="0.85"/><path d="M925.0 518.0 Q908.9 512.9 895.1 510.7" stroke="#6f8060" stroke-width="2.8" fill="none" stroke-linecap="round" opacity="0.85"/><path d="M925.0 518.0 Q900.2 503.5 881.7 488.8" stroke="#6f8060" stroke-width="1.5" fill="none" stroke-linecap="round" opacity="0.85"/><path d="M925.0 518.0 Q910.9 521.2 899.0 521.3" stroke="#869672" stroke-width="2.5" fill="none" stroke-linecap="round" opacity="0.85"/><path d="M925.0 518.0 Q920.1 544.2 924.2 566.4" stroke="#55663f" stroke-width="2.8" fill="none" stroke-linecap="round" opacity="0.85"/><path d="M925.0 518.0 Q933.4 506.6 942.7 499.2" stroke="#55663f" stroke-width="1.7" fill="none" stroke-linecap="round" opacity="0.85"/><path d="M925.0 518.0 Q932.3 501.9 941.1 490.2" stroke="#55663f" stroke-width="1.6" fill="none" stroke-linecap="round" opacity="0.85"/><path d="M925.0 518.0 Q906.4 523.5 890.7 526.5" stroke="#869672" stroke-width="2.8" fill="none" stroke-linecap="round" opacity="0.85"/><path d="M925.0 518.0 Q920.4 490.9 926.4 468.1" stroke="#869672" stroke-width="1.4" fill="none" stroke-linecap="round" opacity="0.85"/><path d="M925.0 518.0 Q914.7 494.0 909.5 473.1" stroke="#627352" stroke-width="3.2" fill="none" stroke-linecap="round" opacity="0.85"/><path d="M925.0 518.0 Q918.3 536.5 911.1 551.0" stroke="#4a5a38" stroke-width="2.5" fill="none" stroke-linecap="round" opacity="0.85"/><path d="M925.0 518.0 Q917.8 530.7 914.9 542.4" stroke="#4a5a38" stroke-width="3.1" fill="none" stroke-linecap="round" opacity="0.85"/><path d="M925.0 518.0 Q912.6 498.7 906.5 480.7" stroke="#7b8c6a" stroke-width="2.3" fill="none" stroke-linecap="round" opacity="0.85"/><path d="M925.0 518.0 Q940.2 494.3 949.1 472.8" stroke="#627352" stroke-width="2.8" fill="none" stroke-linecap="round" opacity="0.85"/><path d="M925.0 518.0 Q908.0 505.8 889.6 504.1" stroke="#627352" stroke-width="2.3" fill="none" stroke-linecap="round" opacity="0.85"/><path d="M925.0 518.0 Q910.4 513.6 897.2 516.5" stroke="#7b8c6a" stroke-width="2.6" fill="none" stroke-linecap="round" opacity="0.85"/><path d="M925.0 518.0 Q948.6 519.6 967.8 521.6" stroke="#627352" stroke-width="2.5" fill="none" stroke-linecap="round" opacity="0.85"/><path d="M925.0 518.0 Q934.3 533.8 947.6 542.4" stroke="#869672" stroke-width="2.6" fill="none" stroke-linecap="round" opacity="0.85"/><path d="M925.0 518.0 Q940.7 530.1 947.5 546.1" stroke="#6f8060" stroke-width="1.2" fill="none" stroke-linecap="round" opacity="0.85"/><path d="M925.0 518.0 Q909.4 528.3 893.3 530.2" stroke="#6f8060" stroke-width="2.4" fill="none" stroke-linecap="round" opacity="0.85"/><path d="M925.0 518.0 Q939.3 521.0 950.4 526.0" stroke="#6f8060" stroke-width="1.3" fill="none" stroke-linecap="round" opacity="0.85"/><path d="M925.0 518.0 Q900.1 508.7 878.7 504.3" stroke="#869672" stroke-width="1.4" fill="none" stroke-linecap="round" opacity="0.85"/><path d="M925.0 518.0 Q943.2 519.4 958.2 517.1" stroke="#6f8060" stroke-width="2.8" fill="none" stroke-linecap="round" opacity="0.85"/><path d="M925.0 518.0 Q904.6 505.8 892.8 489.2" stroke="#55663f" stroke-width="2.7" fill="none" stroke-linecap="round" opacity="0.85"/><path d="M925.0 518.0 Q904.4 523.5 887.2 526.7" stroke="#55663f" stroke-width="2.1" fill="none" stroke-linecap="round" opacity="0.85"/><path d="M925.0 518.0 Q925.9 547.2 932.3 570.6" stroke="#869672" stroke-width="1.8" fill="none" stroke-linecap="round" opacity="0.85"/><path d="M925.0 518.0 Q908.6 532.4 896.3 545.4" stroke="#55663f" stroke-width="2.3" fill="none" stroke-linecap="round" opacity="0.85"/><path d="M925.0 518.0 Q914.4 503.9 906.4 491.8" stroke="#627352" stroke-width="3.0" fill="none" stroke-linecap="round" opacity="0.85"/><path d="M925.0 518.0 Q923.5 500.2 927.6 485.6" stroke="#4a5a38" stroke-width="1.5" fill="none" stroke-linecap="round" opacity="0.85"/><path d="M925.0 518.0 Q935.2 532.6 944.3 544.1" stroke="#55663f" stroke-width="2.9" fill="none" stroke-linecap="round" opacity="0.85"/><path d="M925.0 518.0 Q911.8 522.4 903.1 530.7" stroke="#6f8060" stroke-width="2.1" fill="none" stroke-linecap="round" opacity="0.85"/><path d="M925.0 518.0 Q901.5 528.7 881.4 535.3" stroke="#55663f" stroke-width="1.4" fill="none" stroke-linecap="round" opacity="0.85"/><path d="M925.0 518.0 Q898.6 521.9 876.4 516.1" stroke="#6f8060" stroke-width="2.8" fill="none" stroke-linecap="round" opacity="0.85"/><path d="M925.0 518.0 Q911.4 519.3 900.6 522.1" stroke="#627352" stroke-width="1.5" fill="none" stroke-linecap="round" opacity="0.85"/><path d="M925.0 518.0 Q930.1 496.2 941.2 480.6" stroke="#55663f" stroke-width="2.4" fill="none" stroke-linecap="round" opacity="0.85"/><path d="M925.0 518.0 Q932.0 499.1 940.9 484.9" stroke="#627352" stroke-width="1.7" fill="none" stroke-linecap="round" opacity="0.85"/><path d="M925.0 518.0 Q947.6 518.0 965.0 508.9" stroke="#4a5a38" stroke-width="3.2" fill="none" stroke-linecap="round" opacity="0.85"/><path d="M925.0 518.0 Q906.1 531.3 889.7 540.9" stroke="#55663f" stroke-width="2.9" fill="none" stroke-linecap="round" opacity="0.85"/><path d="M925.0 518.0 Q910.5 509.3 897.4 504.6" stroke="#6f8060" stroke-width="2.9" fill="none" stroke-linecap="round" opacity="0.85"/><path d="M925.0 518.0 Q918.5 539.8 914.9 558.1" stroke="#7b8c6a" stroke-width="1.2" fill="none" stroke-linecap="round" opacity="0.85"/><path d="M925.0 518.0 Q923.1 535.8 915.1 548.9" stroke="#55663f" stroke-width="2.5" fill="none" stroke-linecap="round" opacity="0.85"/><path d="M925.0 518.0 Q906.2 516.0 890.8 514.5" stroke="#6f8060" stroke-width="1.9" fill="none" stroke-linecap="round" opacity="0.85"/><path d="M925.0 518.0 Q900.6 512.2 879.3 516.9" stroke="#7b8c6a" stroke-width="1.9" fill="none" stroke-linecap="round" opacity="0.85"/><path d="M925.0 518.0 Q903.1 510.6 883.2 514.6" stroke="#627352" stroke-width="2.4" fill="none" stroke-linecap="round" opacity="0.85"/><path d="M925.0 518.0 Q942.2 514.4 954.9 506.9" stroke="#4a5a38" stroke-width="2.8" fill="none" stroke-linecap="round" opacity="0.85"/><path d="M925.0 518.0 Q943.3 530.7 951.8 548.4" stroke="#4a5a38" stroke-width="1.5" fill="none" stroke-linecap="round" opacity="0.85"/><path d="M925.0 518.0 Q922.4 542.7 922.9 563.1" stroke="#869672" stroke-width="1.9" fill="none" stroke-linecap="round" opacity="0.85"/><path d="M925.0 518.0 Q934.1 536.8 938.1 553.7" stroke="#55663f" stroke-width="2.6" fill="none" stroke-linecap="round" opacity="0.85"/><path d="M925.0 518.0 Q931.6 503.0 934.4 489.7" stroke="#4a5a38" stroke-width="2.5" fill="none" stroke-linecap="round" opacity="0.85"/><path d="M925.0 518.0 Q940.4 523.9 953.9 526.0" stroke="#7b8c6a" stroke-width="3.1" fill="none" stroke-linecap="round" opacity="0.85"/><path d="M925.0 518.0 Q935.5 539.9 939.8 559.6" stroke="#869672" stroke-width="2.3" fill="none" stroke-linecap="round" opacity="0.85"/><path d="M925.0 518.0 Q918.2 499.3 905.3 487.7" stroke="#7b8c6a" stroke-width="2.0" fill="none" stroke-linecap="round" opacity="0.85"/><path d="M925.0 518.0 Q948.4 506.6 971.2 507.6" stroke="#7b8c6a" stroke-width="3.2" fill="none" stroke-linecap="round" opacity="0.85"/><path d="M925.0 518.0 Q943.2 534.4 963.9 539.9" stroke="#4a5a38" stroke-width="1.4" fill="none" stroke-linecap="round" opacity="0.85"/><path d="M925.0 518.0 Q938.6 493.8 950.2 474.3" stroke="#7b8c6a" stroke-width="1.7" fill="none" stroke-linecap="round" opacity="0.85"/><path d="M925.0 518.0 Q914.6 534.4 911.5 550.6" stroke="#627352" stroke-width="2.8" fill="none" stroke-linecap="round" opacity="0.85"/><path d="M925.0 518.0 Q917.4 503.8 910.8 492.3" stroke="#4a5a38" stroke-width="1.5" fill="none" stroke-linecap="round" opacity="0.85"/><path d="M925.0 518.0 Q897.5 518.7 875.5 524.8" stroke="#627352" stroke-width="2.2" fill="none" stroke-linecap="round" opacity="0.85"/><path d="M925.0 518.0 Q932.1 544.3 933.2 566.8" stroke="#6f8060" stroke-width="1.9" fill="none" stroke-linecap="round" opacity="0.85"/><path d="M925.0 518.0 Q925.6 537.8 921.0 553.8" stroke="#7b8c6a" stroke-width="1.2" fill="none" stroke-linecap="round" opacity="0.85"/><path d="M925.0 518.0 Q906.2 526.3 888.4 525.8" stroke="#55663f" stroke-width="2.5" fill="none" stroke-linecap="round" opacity="0.85"/><path d="M925.0 518.0 Q942.1 507.7 959.2 505.8" stroke="#4a5a38" stroke-width="1.7" fill="none" stroke-linecap="round" opacity="0.85"/><path d="M925.0 518.0 Q918.7 496.0 914.6 477.7" stroke="#627352" stroke-width="2.2" fill="none" stroke-linecap="round" opacity="0.85"/><path d="M925.0 518.0 Q925.6 532.3 931.0 543.3" stroke="#55663f" stroke-width="2.3" fill="none" stroke-linecap="round" opacity="0.85"/><path d="M925.0 518.0 Q943.4 538.0 960.1 552.9" stroke="#869672" stroke-width="1.2" fill="none" stroke-linecap="round" opacity="0.85"/><path d="M925.0 518.0 Q938.2 501.3 953.9 492.3" stroke="#7b8c6a" stroke-width="1.5" fill="none" stroke-linecap="round" opacity="0.85"/><path d="M925.0 518.0 Q907.3 517.2 893.8 510.0" stroke="#627352" stroke-width="2.0" fill="none" stroke-linecap="round" opacity="0.85"/><path d="M925.0 518.0 Q951.2 516.6 972.4 513.2" stroke="#6f8060" stroke-width="2.5" fill="none" stroke-linecap="round" opacity="0.85"/><path d="M925.0 518.0 Q945.1 500.5 967.7 495.2" stroke="#6f8060" stroke-width="2.3" fill="none" stroke-linecap="round" opacity="0.85"/><path d="M925.0 518.0 Q903.5 515.6 885.6 517.8" stroke="#6f8060" stroke-width="1.3" fill="none" stroke-linecap="round" opacity="0.85"/><path d="M925.0 518.0 Q947.9 511.1 964.5 499.8" stroke="#7b8c6a" stroke-width="2.5" fill="none" stroke-linecap="round" opacity="0.85"/><path d="M925.0 518.0 Q904.3 520.8 889.2 530.8" stroke="#6f8060" stroke-width="2.7" fill="none" stroke-linecap="round" opacity="0.85"/><path d="M925.0 518.0 Q920.3 502.5 913.9 490.7" stroke="#869672" stroke-width="1.4" fill="none" stroke-linecap="round" opacity="0.85"/><path d="M925.0 518.0 Q937.8 509.4 946.9 500.4" stroke="#7b8c6a" stroke-width="1.5" fill="none" stroke-linecap="round" opacity="0.85"/><path d="M925.0 518.0 Q929.5 536.3 938.0 549.6" stroke="#7b8c6a" stroke-width="2.7" fill="none" stroke-linecap="round" opacity="0.85"/><path d="M925.0 518.0 Q913.7 506.4 905.1 496.3" stroke="#627352" stroke-width="3.1" fill="none" stroke-linecap="round" opacity="0.85"/><path d="M925.0 518.0 Q937.9 523.1 948.0 528.3" stroke="#869672" stroke-width="3.0" fill="none" stroke-linecap="round" opacity="0.85"/><path d="M925.0 518.0 Q944.5 513.1 960.1 507.6" stroke="#55663f" stroke-width="2.9" fill="none" stroke-linecap="round" opacity="0.85"/><path d="M925.0 518.0 Q930.4 535.5 927.6 551.3" stroke="#7b8c6a" stroke-width="2.2" fill="none" stroke-linecap="round" opacity="0.85"/><path d="M925.0 518.0 Q933.5 507.5 943.1 501.4" stroke="#7b8c6a" stroke-width="1.3" fill="none" stroke-linecap="round" opacity="0.85"/><path d="M925.0 518.0 Q916.1 528.2 912.4 539.2" stroke="#55663f" stroke-width="1.4" fill="none" stroke-linecap="round" opacity="0.85"/><path d="M925.0 518.0 Q941.1 503.9 949.5 487.9" stroke="#6f8060" stroke-width="2.2" fill="none" stroke-linecap="round" opacity="0.85"/><path d="M925.0 518.0 Q906.2 505.0 889.4 496.7" stroke="#7b8c6a" stroke-width="1.2" fill="none" stroke-linecap="round" opacity="0.85"/><path d="M925.0 518.0 Q901.6 535.1 880.6 546.5" stroke="#4a5a38" stroke-width="2.2" fill="none" stroke-linecap="round" opacity="0.85"/><path d="M925.0 518.0 Q905.1 519.7 888.7 519.8" stroke="#869672" stroke-width="1.4" fill="none" stroke-linecap="round" opacity="0.85"/><path d="M925.0 518.0 Q911.5 515.1 900.0 517.3" stroke="#7b8c6a" stroke-width="2.7" fill="none" stroke-linecap="round" opacity="0.85"/><path d="M925.0 518.0 Q950.8 518.0 971.7 514.1" stroke="#7b8c6a" stroke-width="1.3" fill="none" stroke-linecap="round" opacity="0.85"/><path d="M925.0 518.0 Q922.4 546.3 916.4 568.9" stroke="#627352" stroke-width="2.9" fill="none" stroke-linecap="round" opacity="0.85"/><path d="M925.0 518.0 Q910.1 520.1 898.2 523.4" stroke="#4a5a38" stroke-width="2.5" fill="none" stroke-linecap="round" opacity="0.85"/><path d="M925.0 518.0 Q915.1 537.9 905.1 553.2" stroke="#4a5a38" stroke-width="3.1" fill="none" stroke-linecap="round" opacity="0.85"/><path d="M925.0 518.0 Q944.7 500.4 961.4 486.7" stroke="#7b8c6a" stroke-width="2.5" fill="none" stroke-linecap="round" opacity="0.85"/><path d="M925.0 518.0 Q902.2 507.1 881.6 503.2" stroke="#4a5a38" stroke-width="3.1" fill="none" stroke-linecap="round" opacity="0.85"/><path d="M925.0 518.0 Q910.0 541.8 908.0 566.2" stroke="#6f8060" stroke-width="1.3" fill="none" stroke-linecap="round" opacity="0.85"/><path d="M925.0 518.0 Q943.1 522.1 958.7 521.0" stroke="#55663f" stroke-width="3.0" fill="none" stroke-linecap="round" opacity="0.85"/><path d="M925.0 518.0 Q929.7 545.8 926.8 569.3" stroke="#6f8060" stroke-width="1.5" fill="none" stroke-linecap="round" opacity="0.85"/><path d="M925.0 518.0 Q910.1 526.3 902.2 539.1" stroke="#4a5a38" stroke-width="2.6" fill="none" stroke-linecap="round" opacity="0.85"/><path d="M925.0 518.0 Q924.9 494.6 930.3 475.8" stroke="#55663f" stroke-width="1.5" fill="none" stroke-linecap="round" opacity="0.85"/><path d="M925.0 518.0 Q905.4 519.2 889.4 514.4" stroke="#7b8c6a" stroke-width="1.9" fill="none" stroke-linecap="round" opacity="0.85"/><path d="M925.0 518.0 Q900.9 508.3 880.9 501.0" stroke="#55663f" stroke-width="3.1" fill="none" stroke-linecap="round" opacity="0.85"/><path d="M925.0 518.0 Q928.4 504.2 932.4 493.2" stroke="#55663f" stroke-width="1.4" fill="none" stroke-linecap="round" opacity="0.85"/><path d="M925.0 518.0 Q896.6 515.6 875.5 502.7" stroke="#6f8060" stroke-width="1.3" fill="none" stroke-linecap="round" opacity="0.85"/><path d="M925.0 518.0 Q903.4 536.7 887.2 553.6" stroke="#55663f" stroke-width="2.3" fill="none" stroke-linecap="round" opacity="0.85"/><path d="M925.0 518.0 Q944.2 536.2 959.7 551.3" stroke="#627352" stroke-width="2.2" fill="none" stroke-linecap="round" opacity="0.85"/><path d="M925.0 518.0 Q934.9 506.3 939.5 494.2" stroke="#627352" stroke-width="3.0" fill="none" stroke-linecap="round" opacity="0.85"/><path d="M925.0 518.0 Q929.4 530.6 928.2 542.1" stroke="#6f8060" stroke-width="2.9" fill="none" stroke-linecap="round" opacity="0.85"/><path d="M925.0 518.0 Q933.7 493.5 929.9 471.0" stroke="#6f8060" stroke-width="2.5" fill="none" stroke-linecap="round" opacity="0.85"/><path d="M925.0 518.0 Q935.1 530.9 945.5 539.6" stroke="#7b8c6a" stroke-width="2.6" fill="none" stroke-linecap="round" opacity="0.85"/><path d="M925.0 518.0 Q939.1 500.3 948.9 484.5" stroke="#6f8060" stroke-width="1.8" fill="none" stroke-linecap="round" opacity="0.85"/><path d="M925.0 518.0 Q937.2 538.0 942.3 556.9" stroke="#627352" stroke-width="1.9" fill="none" stroke-linecap="round" opacity="0.85"/><path d="M925.0 518.0 Q920.2 494.1 910.6 476.1" stroke="#6f8060" stroke-width="1.4" fill="none" stroke-linecap="round" opacity="0.85"/><path d="M925.0 518.0 Q920.0 532.1 915.6 543.5" stroke="#869672" stroke-width="1.8" fill="none" stroke-linecap="round" opacity="0.85"/><path d="M925.0 518.0 Q930.6 503.1 936.6 491.4" stroke="#6f8060" stroke-width="1.4" fill="none" stroke-linecap="round" opacity="0.85"/><path d="M925.0 518.0 Q935.1 531.4 938.0 545.5" stroke="#55663f" stroke-width="3.1" fill="none" stroke-linecap="round" opacity="0.85"/><path d="M925.0 518.0 Q915.1 507.1 911.8 494.7" stroke="#869672" stroke-width="1.7" fill="none" stroke-linecap="round" opacity="0.85"/><path d="M925.0 518.0 Q946.4 508.1 965.2 503.1" stroke="#7b8c6a" stroke-width="1.4" fill="none" stroke-linecap="round" opacity="0.85"/><path d="M925.0 518.0 Q925.9 544.2 927.4 565.7" stroke="#7b8c6a" stroke-width="2.6" fill="none" stroke-linecap="round" opacity="0.85"/><path d="M925.0 518.0 Q919.6 503.5 916.2 491.3" stroke="#6f8060" stroke-width="2.0" fill="none" stroke-linecap="round" opacity="0.85"/><path d="M925.0 518.0 Q922.6 533.1 917.8 544.8" stroke="#7b8c6a" stroke-width="2.1" fill="none" stroke-linecap="round" opacity="0.85"/><path d="M925.0 518.0 Q941.7 501.0 953.4 485.4" stroke="#7b8c6a" stroke-width="2.2" fill="none" stroke-linecap="round" opacity="0.85"/><path d="M925.0 518.0 Q936.3 528.4 948.5 532.8" stroke="#7b8c6a" stroke-width="1.3" fill="none" stroke-linecap="round" opacity="0.85"/><path d="M925.0 518.0 Q922.5 535.4 923.7 550.0" stroke="#4a5a38" stroke-width="1.4" fill="none" stroke-linecap="round" opacity="0.85"/><path d="M925.0 518.0 Q911.1 501.3 900.0 487.4" stroke="#55663f" stroke-width="1.6" fill="none" stroke-linecap="round" opacity="0.85"/><path d="M925.0 518.0 Q903.7 534.8 888.6 551.2" stroke="#7b8c6a" stroke-width="3.0" fill="none" stroke-linecap="round" opacity="0.85"/><path d="M925.0 518.0 Q902.2 507.3 882.1 501.9" stroke="#7b8c6a" stroke-width="1.4" fill="none" stroke-linecap="round" opacity="0.85"/><path d="M925.0 518.0 Q914.0 536.8 911.0 555.0" stroke="#7b8c6a" stroke-width="1.8" fill="none" stroke-linecap="round" opacity="0.85"/><path d="M925.0 518.0 Q918.8 544.9 913.2 566.8" stroke="#4a5a38" stroke-width="2.7" fill="none" stroke-linecap="round" opacity="0.85"/><path d="M925.0 518.0 Q940.2 514.5 952.7 511.7" stroke="#869672" stroke-width="3.0" fill="none" stroke-linecap="round" opacity="0.85"/><path d="M925.0 518.0 Q949.0 524.7 970.1 522.5" stroke="#6f8060" stroke-width="2.8" fill="none" stroke-linecap="round" opacity="0.85"/><path d="M925.0 518.0 Q932.6 500.1 940.0 485.9" stroke="#627352" stroke-width="2.9" fill="none" stroke-linecap="round" opacity="0.85"/><path d="M925.0 518.0 Q953.5 526.1 978.4 524.8" stroke="#869672" stroke-width="2.7" fill="none" stroke-linecap="round" opacity="0.85"/><path d="M925.0 518.0 Q921.8 503.5 921.8 491.2" stroke="#627352" stroke-width="3.2" fill="none" stroke-linecap="round" opacity="0.85"/><path d="M925.0 518.0 Q926.4 537.4 935.3 551.8" stroke="#869672" stroke-width="2.5" fill="none" stroke-linecap="round" opacity="0.85"/><path d="M925.0 518.0 Q910.7 504.9 901.5 491.9" stroke="#55663f" stroke-width="1.4" fill="none" stroke-linecap="round" opacity="0.85"/><path d="M925.0 518.0 Q942.8 536.4 959.9 548.8" stroke="#7b8c6a" stroke-width="2.7" fill="none" stroke-linecap="round" opacity="0.85"/><path d="M925.0 518.0 Q904.1 506.9 886.1 499.6" stroke="#869672" stroke-width="1.7" fill="none" stroke-linecap="round" opacity="0.85"/><path d="M925.0 518.0 Q907.3 507.9 889.4 508.2" stroke="#6f8060" stroke-width="1.7" fill="none" stroke-linecap="round" opacity="0.85"/><path d="M925.0 518.0 Q921.4 504.5 922.0 492.8" stroke="#4a5a38" stroke-width="2.2" fill="none" stroke-linecap="round" opacity="0.85"/><path d="M925.0 518.0 Q938.8 526.1 952.4 527.6" stroke="#55663f" stroke-width="1.9" fill="none" stroke-linecap="round" opacity="0.85"/><path d="M925.0 518.0 Q928.4 543.9 929.1 565.3" stroke="#4a5a38" stroke-width="2.1" fill="none" stroke-linecap="round" opacity="0.85"/><path d="M925.0 518.0 Q946.2 531.8 965.8 539.4" stroke="#627352" stroke-width="1.5" fill="none" stroke-linecap="round" opacity="0.85"/><path d="M925.0 518.0 Q905.7 538.8 887.3 553.2" stroke="#6f8060" stroke-width="2.8" fill="none" stroke-linecap="round" opacity="0.85"/><path d="M925.0 518.0 Q939.7 529.5 946.4 544.4" stroke="#55663f" stroke-width="2.1" fill="none" stroke-linecap="round" opacity="0.85"/><path d="M925.0 518.0 Q911.1 517.5 899.8 520.1" stroke="#869672" stroke-width="2.7" fill="none" stroke-linecap="round" opacity="0.85"/><path d="M925.0 518.0 Q908.3 542.3 888.0 556.7" stroke="#7b8c6a" stroke-width="1.7" fill="none" stroke-linecap="round" opacity="0.85"/><path d="M925.0 518.0 Q935.7 500.2 940.1 483.4" stroke="#6f8060" stroke-width="2.6" fill="none" stroke-linecap="round" opacity="0.85"/><path d="M925.0 518.0 Q945.3 532.7 955.3 552.0" stroke="#4a5a38" stroke-width="2.8" fill="none" stroke-linecap="round" opacity="0.85"/><path d="M925.0 518.0 Q917.4 535.7 913.4 551.1" stroke="#627352" stroke-width="1.7" fill="none" stroke-linecap="round" opacity="0.85"/><path d="M925.0 518.0 Q942.4 525.1 952.7 538.1" stroke="#6f8060" stroke-width="1.7" fill="none" stroke-linecap="round" opacity="0.85"/><path d="M925.0 518.0 Q899.8 529.0 877.9 535.1" stroke="#869672" stroke-width="2.8" fill="none" stroke-linecap="round" opacity="0.85"/><path d="M925.0 518.0 Q902.4 515.6 883.7 518.2" stroke="#627352" stroke-width="1.6" fill="none" stroke-linecap="round" opacity="0.85"/><path d="M925.0 518.0 Q905.3 534.6 897.4 555.9" stroke="#869672" stroke-width="2.3" fill="none" stroke-linecap="round" opacity="0.85"/><path d="M925.0 518.0 Q902.8 537.4 886.3 555.0" stroke="#55663f" stroke-width="1.2" fill="none" stroke-linecap="round" opacity="0.85"/><path d="M925.0 518.0 Q913.5 497.3 909.8 477.8" stroke="#7b8c6a" stroke-width="2.5" fill="none" stroke-linecap="round" opacity="0.85"/><path d="M925.0 518.0 Q934.8 497.9 933.6 478.3" stroke="#7b8c6a" stroke-width="2.7" fill="none" stroke-linecap="round" opacity="0.85"/><path d="M925.0 518.0 Q897.2 520.6 875.2 527.6" stroke="#55663f" stroke-width="1.9" fill="none" stroke-linecap="round" opacity="0.85"/><path d="M925.0 518.0 Q915.1 540.5 913.3 561.2" stroke="#7b8c6a" stroke-width="1.5" fill="none" stroke-linecap="round" opacity="0.85"/><path d="M925.0 518.0 Q906.6 498.0 889.9 483.2" stroke="#7b8c6a" stroke-width="1.8" fill="none" stroke-linecap="round" opacity="0.85"/><path d="M925.0 518.0 Q919.0 502.5 921.0 488.1" stroke="#6f8060" stroke-width="1.8" fill="none" stroke-linecap="round" opacity="0.85"/><path d="M925.0 518.0 Q921.3 546.1 910.1 567.3" stroke="#627352" stroke-width="1.6" fill="none" stroke-linecap="round" opacity="0.85"/><path d="M925.0 518.0 Q926.8 502.8 921.8 490.4" stroke="#627352" stroke-width="2.7" fill="none" stroke-linecap="round" opacity="0.85"/><path d="M925.0 518.0 Q912.0 540.3 909.6 562.3" stroke="#869672" stroke-width="2.0" fill="none" stroke-linecap="round" opacity="0.85"/><path d="M925.0 518.0 Q942.7 514.8 955.3 505.6" stroke="#869672" stroke-width="2.7" fill="none" stroke-linecap="round" opacity="0.85"/><path d="M925.0 518.0 Q916.8 540.7 900.7 554.5" stroke="#869672" stroke-width="3.1" fill="none" stroke-linecap="round" opacity="0.85"/><path d="M925.0 518.0 Q918.0 535.2 908.7 547.6" stroke="#7b8c6a" stroke-width="1.6" fill="none" stroke-linecap="round" opacity="0.85"/><path d="M925.0 518.0 Q916.7 541.9 899.8 556.5" stroke="#6f8060" stroke-width="2.5" fill="none" stroke-linecap="round" opacity="0.85"/><path d="M925.0 518.0 Q940.1 508.5 951.2 498.9" stroke="#55663f" stroke-width="1.6" fill="none" stroke-linecap="round" opacity="0.85"/><path d="M925.0 518.0 Q912.4 535.6 903.4 551.0" stroke="#55663f" stroke-width="2.1" fill="none" stroke-linecap="round" opacity="0.85"/><path d="M925.0 518.0 Q909.5 527.9 893.5 529.1" stroke="#869672" stroke-width="2.3" fill="none" stroke-linecap="round" opacity="0.85"/><path d="M925.0 518.0 Q904.5 529.5 887.4 538.4" stroke="#627352" stroke-width="1.7" fill="none" stroke-linecap="round" opacity="0.85"/><path d="M925.0 518.0 Q916.3 530.9 911.4 542.8" stroke="#4a5a38" stroke-width="3.0" fill="none" stroke-linecap="round" opacity="0.85"/><path d="M925.0 518.0 Q924.8 535.4 927.9 549.5" stroke="#627352" stroke-width="1.7" fill="none" stroke-linecap="round" opacity="0.85"/><path d="M925.0 518.0 Q922.7 540.0 928.0 558.1" stroke="#6f8060" stroke-width="2.9" fill="none" stroke-linecap="round" opacity="0.85"/><path d="M925.0 518.0 Q915.4 528.6 906.8 536.6" stroke="#627352" stroke-width="2.5" fill="none" stroke-linecap="round" opacity="0.85"/><path d="M925.0 518.0 Q940.6 512.9 954.7 514.7" stroke="#55663f" stroke-width="2.6" fill="none" stroke-linecap="round" opacity="0.85"/><path d="M925.0 518.0 Q909.0 532.0 902.4 549.4" stroke="#627352" stroke-width="2.2" fill="none" stroke-linecap="round" opacity="0.85"/><path d="M925.0 518.0 Q907.5 505.0 898.1 488.9" stroke="#7b8c6a" stroke-width="1.5" fill="none" stroke-linecap="round" opacity="0.85"/><path d="M925.0 518.0 Q932.3 542.8 934.5 564.0" stroke="#7b8c6a" stroke-width="2.1" fill="none" stroke-linecap="round" opacity="0.85"/><path d="M925.0 518.0 Q898.8 530.5 882.7 549.5" stroke="#7b8c6a" stroke-width="1.9" fill="none" stroke-linecap="round" opacity="0.85"/><path d="M925.0 518.0 Q929.8 539.8 937.4 556.5" stroke="#55663f" stroke-width="3.1" fill="none" stroke-linecap="round" opacity="0.85"/><path d="M925.0 518.0 Q897.4 527.4 873.6 531.0" stroke="#55663f" stroke-width="1.6" fill="none" stroke-linecap="round" opacity="0.85"/><path d="M925.0 518.0 Q935.9 530.4 942.7 542.2" stroke="#869672" stroke-width="2.3" fill="none" stroke-linecap="round" opacity="0.85"/><path d="M925.0 518.0 Q915.2 500.5 910.4 484.5" stroke="#55663f" stroke-width="2.7" fill="none" stroke-linecap="round" opacity="0.85"/><path d="M925.0 518.0 Q909.4 496.5 891.0 483.8" stroke="#6f8060" stroke-width="2.1" fill="none" stroke-linecap="round" opacity="0.85"/><path d="M925.0 518.0 Q921.4 540.0 912.2 556.4" stroke="#7b8c6a" stroke-width="1.3" fill="none" stroke-linecap="round" opacity="0.85"/><path d="M925.0 518.0 Q926.0 537.0 934.8 551.1" stroke="#627352" stroke-width="2.4" fill="none" stroke-linecap="round" opacity="0.85"/><path d="M925.0 518.0 Q953.6 513.3 974.8 500.7" stroke="#869672" stroke-width="1.4" fill="none" stroke-linecap="round" opacity="0.85"/><path d="M925.0 518.0 Q940.0 521.7 952.0 525.6" stroke="#7b8c6a" stroke-width="2.3" fill="none" stroke-linecap="round" opacity="0.85"/><path d="M925.0 518.0 Q902.3 504.0 884.9 490.7" stroke="#55663f" stroke-width="1.8" fill="none" stroke-linecap="round" opacity="0.85"/><path d="M925.0 518.0 Q907.6 504.5 888.4 502.0" stroke="#7b8c6a" stroke-width="1.7" fill="none" stroke-linecap="round" opacity="0.85"/><path d="M925.0 518.0 Q925.3 501.2 923.0 487.5" stroke="#869672" stroke-width="1.5" fill="none" stroke-linecap="round" opacity="0.85"/><path d="M925.0 518.0 Q911.3 510.7 900.6 503.9" stroke="#55663f" stroke-width="2.0" fill="none" stroke-linecap="round" opacity="0.85"/><path d="M925.0 518.0 Q922.8 496.5 912.2 480.8" stroke="#7b8c6a" stroke-width="3.2" fill="none" stroke-linecap="round" opacity="0.85"/><path d="M925.0 518.0 Q934.7 494.6 950.0 479.3" stroke="#869672" stroke-width="1.3" fill="none" stroke-linecap="round" opacity="0.85"/><path d="M925.0 518.0 Q929.5 502.4 928.9 488.8" stroke="#7b8c6a" stroke-width="2.8" fill="none" stroke-linecap="round" opacity="0.85"/><path d="M925.0 518.0 Q947.5 534.0 959.1 555.0" stroke="#6f8060" stroke-width="2.0" fill="none" stroke-linecap="round" opacity="0.85"/><path d="M925.0 518.0 Q942.3 540.7 963.8 552.3" stroke="#55663f" stroke-width="1.9" fill="none" stroke-linecap="round" opacity="0.85"/><path d="M925.0 518.0 Q903.4 520.4 885.6 515.2" stroke="#627352" stroke-width="3.2" fill="none" stroke-linecap="round" opacity="0.85"/><path d="M925.0 518.0 Q939.7 526.8 951.1 535.1" stroke="#55663f" stroke-width="1.7" fill="none" stroke-linecap="round" opacity="0.85"/><path d="M925.0 518.0 Q952.0 526.8 975.4 529.2" stroke="#869672" stroke-width="2.2" fill="none" stroke-linecap="round" opacity="0.85"/><path d="M925.0 518.0 Q923.5 492.3 919.1 471.5" stroke="#869672" stroke-width="1.8" fill="none" stroke-linecap="round" opacity="0.85"/><path d="M925.0 518.0 Q943.2 534.4 952.7 552.9" stroke="#7b8c6a" stroke-width="2.1" fill="none" stroke-linecap="round" opacity="0.85"/><path d="M925.0 518.0 Q907.6 538.4 897.8 558.5" stroke="#55663f" stroke-width="2.8" fill="none" stroke-linecap="round" opacity="0.85"/><path d="M925.0 518.0 Q910.4 522.5 899.1 528.1" stroke="#6f8060" stroke-width="2.7" fill="none" stroke-linecap="round" opacity="0.85"/><path d="M925.0 518.0 Q930.6 496.9 932.3 479.1" stroke="#869672" stroke-width="2.3" fill="none" stroke-linecap="round" opacity="0.85"/><path d="M925.0 518.0 Q912.9 498.5 901.7 483.3" stroke="#7b8c6a" stroke-width="2.2" fill="none" stroke-linecap="round" opacity="0.85"/><path d="M925.0 518.0 Q940.8 530.8 950.5 544.8" stroke="#7b8c6a" stroke-width="2.0" fill="none" stroke-linecap="round" opacity="0.85"/><path d="M925.0 518.0 Q903.2 516.8 885.6 513.2" stroke="#6f8060" stroke-width="1.5" fill="none" stroke-linecap="round" opacity="0.85"/><path d="M925.0 518.0 Q938.8 512.6 951.6 513.3" stroke="#869672" stroke-width="1.2" fill="none" stroke-linecap="round" opacity="0.85"/><path d="M925.0 518.0 Q909.0 520.5 895.5 518.8" stroke="#55663f" stroke-width="1.4" fill="none" stroke-linecap="round" opacity="0.85"/><path d="M925.0 518.0 Q951.6 525.7 975.0 522.8" stroke="#6f8060" stroke-width="3.1" fill="none" stroke-linecap="round" opacity="0.85"/><path d="M925.0 518.0 Q916.3 491.1 901.3 472.5" stroke="#627352" stroke-width="3.0" fill="none" stroke-linecap="round" opacity="0.85"/><path d="M925.0 518.0 Q926.5 535.5 926.8 549.8" stroke="#7b8c6a" stroke-width="2.6" fill="none" stroke-linecap="round" opacity="0.85"/><path d="M925.0 518.0 Q939.1 526.4 947.2 538.0" stroke="#6f8060" stroke-width="2.8" fill="none" stroke-linecap="round" opacity="0.85"/><path d="M925.0 518.0 Q904.4 496.9 880.5 488.2" stroke="#7b8c6a" stroke-width="2.6" fill="none" stroke-linecap="round" opacity="0.85"/><path d="M925.0 518.0 Q945.3 517.1 961.2 510.7" stroke="#869672" stroke-width="1.6" fill="none" stroke-linecap="round" opacity="0.85"/><path d="M925.0 518.0 Q911.2 502.1 905.6 484.9" stroke="#4a5a38" stroke-width="3.0" fill="none" stroke-linecap="round" opacity="0.85"/><path d="M925.0 518.0 Q923.3 504.6 916.8 494.9" stroke="#4a5a38" stroke-width="2.0" fill="none" stroke-linecap="round" opacity="0.85"/><path d="M925.0 518.0 Q921.0 503.2 921.5 490.3" stroke="#6f8060" stroke-width="1.7" fill="none" stroke-linecap="round" opacity="0.85"/><path d="M925.0 518.0 Q937.6 510.2 946.1 501.2" stroke="#627352" stroke-width="2.4" fill="none" stroke-linecap="round" opacity="0.85"/><path d="M925.0 518.0 Q895.9 517.2 872.3 512.0" stroke="#55663f" stroke-width="2.7" fill="none" stroke-linecap="round" opacity="0.85"/><path d="M925.0 518.0 Q911.7 510.7 903.3 500.9" stroke="#4a5a38" stroke-width="2.0" fill="none" stroke-linecap="round" opacity="0.85"/><path d="M925.0 518.0 Q897.9 517.1 875.7 517.9" stroke="#6f8060" stroke-width="2.1" fill="none" stroke-linecap="round" opacity="0.85"/><path d="M925.0 518.0 Q935.5 533.0 940.9 547.4" stroke="#4a5a38" stroke-width="2.4" fill="none" stroke-linecap="round" opacity="0.85"/><path d="M925.0 518.0 Q943.4 501.8 963.0 494.6" stroke="#869672" stroke-width="2.1" fill="none" stroke-linecap="round" opacity="0.85"/><path d="M925.0 518.0 Q922.6 538.4 922.2 555.2" stroke="#627352" stroke-width="3.0" fill="none" stroke-linecap="round" opacity="0.85"/><path d="M925.0 518.0 Q899.5 528.9 877.7 535.3" stroke="#627352" stroke-width="2.7" fill="none" stroke-linecap="round" opacity="0.85"/><path d="M925.0 518.0 Q922.8 498.2 927.2 481.8" stroke="#7b8c6a" stroke-width="2.2" fill="none" stroke-linecap="round" opacity="0.85"/><path d="M925.0 518.0 Q917.0 529.7 908.0 537.3" stroke="#869672" stroke-width="2.9" fill="none" stroke-linecap="round" opacity="0.85"/><path d="M925.0 518.0 Q946.8 520.2 964.5 512.5" stroke="#7b8c6a" stroke-width="2.6" fill="none" stroke-linecap="round" opacity="0.85"/><path d="M925.0 518.0 Q934.2 505.6 937.9 493.0" stroke="#869672" stroke-width="3.0" fill="none" stroke-linecap="round" opacity="0.85"/><path d="M925.0 518.0 Q901.9 518.0 883.1 514.6" stroke="#869672" stroke-width="1.5" fill="none" stroke-linecap="round" opacity="0.85"/><path d="M925.0 518.0 Q918.3 496.8 908.1 481.2" stroke="#869672" stroke-width="1.2" fill="none" stroke-linecap="round" opacity="0.85"/><path d="M925.0 518.0 Q931.9 546.3 945.6 566.7" stroke="#55663f" stroke-width="1.4" fill="none" stroke-linecap="round" opacity="0.85"/><path d="M925.0 518.0 Q908.4 509.4 892.7 507.5" stroke="#6f8060" stroke-width="1.7" fill="none" stroke-linecap="round" opacity="0.85"/><path d="M925.0 518.0 Q933.0 494.9 935.3 474.8" stroke="#55663f" stroke-width="2.6" fill="none" stroke-linecap="round" opacity="0.85"/><path d="M925.0 518.0 Q938.8 498.3 957.8 489.1" stroke="#55663f" stroke-width="1.4" fill="none" stroke-linecap="round" opacity="0.85"/><path d="M925.0 518.0 Q900.3 505.8 879.3 497.8" stroke="#869672" stroke-width="1.4" fill="none" stroke-linecap="round" opacity="0.85"/><path d="M925.0 518.0 Q909.5 525.8 896.5 531.5" stroke="#6f8060" stroke-width="3.2" fill="none" stroke-linecap="round" opacity="0.85"/><path d="M925.0 518.0 Q934.9 502.5 944.4 490.8" stroke="#55663f" stroke-width="3.2" fill="none" stroke-linecap="round" opacity="0.85"/><path d="M925.0 518.0 Q924.7 491.9 933.8 471.3" stroke="#869672" stroke-width="2.3" fill="none" stroke-linecap="round" opacity="0.85"/><path d="M925.0 518.0 Q930.7 543.9 940.2 563.8" stroke="#869672" stroke-width="3.2" fill="none" stroke-linecap="round" opacity="0.85"/><path d="M925.0 518.0 Q913.4 531.6 910.5 547.0" stroke="#627352" stroke-width="2.4" fill="none" stroke-linecap="round" opacity="0.85"/><path d="M925.0 518.0 Q947.0 526.0 965.9 529.4" stroke="#627352" stroke-width="1.9" fill="none" stroke-linecap="round" opacity="0.85"/><path d="M925.0 518.0 Q912.3 530.5 907.7 545.3" stroke="#869672" stroke-width="2.5" fill="none" stroke-linecap="round" opacity="0.85"/><path d="M925.0 518.0 Q907.0 515.7 892.1 514.6" stroke="#55663f" stroke-width="2.4" fill="none" stroke-linecap="round" opacity="0.85"/><path d="M925.0 518.0 Q943.9 522.2 959.6 524.7" stroke="#627352" stroke-width="2.2" fill="none" stroke-linecap="round" opacity="0.85"/><path d="M925.0 518.0 Q919.2 490.6 917.7 467.7" stroke="#55663f" stroke-width="2.1" fill="none" stroke-linecap="round" opacity="0.85"/><path d="M925.0 518.0 Q944.9 531.4 962.4 540.5" stroke="#55663f" stroke-width="2.9" fill="none" stroke-linecap="round" opacity="0.85"/><path d="M925.0 518.0 Q931.5 504.0 930.6 490.4" stroke="#869672" stroke-width="1.8" fill="none" stroke-linecap="round" opacity="0.85"/><path d="M925.0 518.0 Q909.2 520.1 896.0 516.8" stroke="#869672" stroke-width="3.0" fill="none" stroke-linecap="round" opacity="0.85"/><path d="M925.0 518.0 Q914.5 502.7 906.7 489.6" stroke="#627352" stroke-width="1.5" fill="none" stroke-linecap="round" opacity="0.85"/><path d="M925.0 518.0 Q932.3 534.8 939.1 548.2" stroke="#6f8060" stroke-width="1.5" fill="none" stroke-linecap="round" opacity="0.85"/><path d="M925.0 518.0 Q902.5 531.9 885.5 545.3" stroke="#6f8060" stroke-width="1.4" fill="none" stroke-linecap="round" opacity="0.85"/><path d="M925.0 518.0 Q900.2 524.2 880.2 530.4" stroke="#4a5a38" stroke-width="1.4" fill="none" stroke-linecap="round" opacity="0.85"/><path d="M925.0 518.0 Q902.3 502.4 890.2 482.0" stroke="#4a5a38" stroke-width="2.3" fill="none" stroke-linecap="round" opacity="0.85"/><path d="M925.0 518.0 Q935.3 502.5 949.0 494.1" stroke="#4a5a38" stroke-width="2.0" fill="none" stroke-linecap="round" opacity="0.85"/><path d="M925.0 518.0 Q939.5 542.7 947.2 565.2" stroke="#6f8060" stroke-width="2.0" fill="none" stroke-linecap="round" opacity="0.85"/><path d="M925.0 518.0 Q942.3 537.2 953.7 555.2" stroke="#6f8060" stroke-width="2.6" fill="none" stroke-linecap="round" opacity="0.85"/><path d="M925.0 518.0 Q912.3 492.5 895.0 475.9" stroke="#869672" stroke-width="2.1" fill="none" stroke-linecap="round" opacity="0.85"/><path d="M925.0 518.0 Q916.6 534.6 906.9 546.6" stroke="#869672" stroke-width="2.2" fill="none" stroke-linecap="round" opacity="0.85"/><path d="M925.0 518.0 Q946.6 530.6 967.7 533.5" stroke="#869672" stroke-width="2.3" fill="none" stroke-linecap="round" opacity="0.85"/><rect x="955" y="551" width="210" height="5" fill="#e8e8e8" /><rect x="955" y="557" width="210" height="3" fill="#111" /><rect x="958" y="560" width="207" height="10" fill="#cfcfcf" /><rect x="955" y="570" width="200" height="30" fill="#4a4a4a" /><rect x="998" y="592" width="155" height="2" fill="#6a6a6a" /><polygon points="620,591 1169.956,591 1089.974,788 630,788" fill="#4a4a4a" /><rect x="596" y="592" width="362" height="10" fill="#4c4c4c" /><rect x="620" y="600" width="338" height="2" fill="#6a6a6a" /><polygon points="633,636 960,636 960,646 633,646" fill="#c4c4c4" /><rect x="633" y="646" width="327" height="2" fill="#3a3a3a" /><polygon points="633,683 960,683 960,692 633,692" fill="#c4c4c4" /><rect x="633" y="692" width="327" height="2" fill="#3a3a3a" /><polygon points="633,722 960,722 960,732 633,732" fill="#c4c4c4" /><rect x="633" y="732" width="327" height="2" fill="#3a3a3a" /><polygon points="633,757 960,757 960,766 633,766" fill="#c4c4c4" /><rect x="633" y="766" width="327" height="2" fill="#3a3a3a" /><rect x="912" y="602" width="41" height="31" fill="#242424" /><rect x="836" y="655" width="41" height="28" fill="#242424" /><rect x="912" y="655" width="38" height="28" fill="#242424" /><rect x="841" y="740" width="39" height="17" fill="#242424" /><rect x="907" y="740" width="33" height="17" fill="#242424" /><rect x="650" y="655" width="55" height="45" fill="#242424" /><rect x="660" y="700" width="50" height="45" fill="#242424" /><rect x="690" y="603" width="55" height="29" fill="#111" /><rect x="692" y="605" width="51" height="25" fill="#c9c9c9" /><rect x="716.5" y="603" width="2.0" height="29" fill="#111" /><rect x="690" y="616.5" width="55" height="2.0" fill="#111" /><rect x="713" y="656" width="47" height="27" fill="#111" /><rect x="715" y="658" width="43" height="23" fill="#c9c9c9" /><rect x="735.5" y="656" width="2.0" height="27" fill="#111" /><rect x="713" y="668.5" width="47" height="2.0" fill="#111" /><rect x="724" y="702" width="56" height="22" fill="#111" /><rect x="726" y="704" width="52" height="18" fill="#c9c9c9" /><rect x="751.0" y="702" width="2.0" height="22" fill="#111" /><rect x="724" y="712.0" width="56" height="2.0" fill="#111" /><rect x="742" y="745" width="48" height="15" fill="#111" /><rect x="744" y="747" width="44" height="11" fill="#c9c9c9" /><rect x="765.0" y="745" width="2.0" height="15" fill="#111" /><rect x="742" y="751.5" width="48" height="2.0" fill="#111" /><rect x="877" y="602" width="33" height="16" fill="#c8c8c8" /><rect x="877" y="657" width="33" height="11" fill="#c8c8c8" /><rect x="877" y="702" width="33" height="6" fill="#c8c8c8" /><rect x="877" y="745" width="33" height="5" fill="#c8c8c8" /><polygon points="797,645 832,645 842,790 814,790" fill="#4b4b4b" /><polygon points="998.0,571 1178.076,571 1089.162,790 969.53,790" fill="#474747" /><polygon points="993.84,603 1040,603 1040,615 992.28,615" fill="#cfcfcf" /><polygon points="992.02,617 1040,617 1040,628 990.59,628" fill="#cfcfcf" /><rect x="989.9" y="633" width="108.1" height="20" rx="10.0" fill="#c6c6c6"/><rect x="987.3" y="651" width="104.70000000000005" height="3" fill="#333" /><polygon points="986.43,660 1030,660 1030,670 985.13,670" fill="#cfcfcf" /><polygon points="984.87,672 1030,672 1030,683 983.44,683" fill="#cfcfcf" /><rect x="982.5" y="690" width="99.5" height="10" rx="5.0" fill="#c6c6c6"/><rect x="981.2" y="698" width="94.79999999999995" height="3" fill="#333" /><polygon points="980.45,706 1025,706 1025,715 979.28,715" fill="#cfcfcf" /><polygon points="979.15,716 1025,716 1025,724 978.11,724" fill="#cfcfcf" /><rect x="977.3" y="730" width="92.7" height="8" rx="4.0" fill="#c6c6c6"/><rect x="976.3" y="736" width="87.70000000000005" height="3" fill="#333" /><polygon points="975.38,745 1020,745 1020,752 974.47,752" fill="#cfcfcf" /><polygon points="974.47,752 1020,752 1020,760 973.43,760" fill="#cfcfcf" /><rect x="973.0" y="763" width="85.0" height="7" rx="3.5" fill="#c6c6c6"/><rect x="972.1" y="768" width="79.89999999999998" height="3" fill="#333" /><rect x="1040" y="603" width="58" height="30" fill="#262626" /><rect x="1030" y="655" width="50" height="28" fill="#262626" /><rect x="1025" y="700" width="43" height="24" fill="#262626" /><rect x="1020" y="740" width="38" height="20" fill="#262626" /><polygon points="1098,617 1148,617 1142,649 1092,649" fill="#2e2e2e" /><rect x="1098.0" y="619" width="1.2000000000000455" height="28" fill="#4a4a4a" /><rect x="1104.2" y="619" width="1.2999999999999545" height="28" fill="#4a4a4a" /><rect x="1110.5" y="619" width="1.2000000000000455" height="28" fill="#4a4a4a" /><rect x="1116.8" y="619" width="1.2000000000000455" height="28" fill="#4a4a4a" /><rect x="1123.0" y="619" width="1.2000000000000455" height="28" fill="#4a4a4a" /><rect x="1129.2" y="619" width="1.2999999999999545" height="28" fill="#4a4a4a" /><rect x="1135.5" y="619" width="1.2000000000000455" height="28" fill="#4a4a4a" /><rect x="1141.8" y="619" width="1.2000000000000455" height="28" fill="#4a4a4a" /><rect x="1096" y="603" width="52" height="14" fill="#bdbdbd" /><polygon points="1082,667 1126,667 1120,699 1076,699" fill="#2e2e2e" /><rect x="1082.0" y="669" width="1.2000000000000455" height="28" fill="#4a4a4a" /><rect x="1087.5" y="669" width="1.2000000000000455" height="28" fill="#4a4a4a" /><rect x="1093.0" y="669" width="1.2000000000000455" height="28" fill="#4a4a4a" /><rect x="1098.5" y="669" width="1.2000000000000455" height="28" fill="#4a4a4a" /><rect x="1104.0" y="669" width="1.2000000000000455" height="28" fill="#4a4a4a" /><rect x="1109.5" y="669" width="1.2000000000000455" height="28" fill="#4a4a4a" /><rect x="1115.0" y="669" width="1.2000000000000455" height="28" fill="#4a4a4a" /><rect x="1120.5" y="669" width="1.2000000000000455" height="28" fill="#4a4a4a" /><rect x="1080" y="653" width="46" height="14" fill="#bdbdbd" /><polygon points="1068,714 1106,714 1100,746 1062,746" fill="#2e2e2e" /><rect x="1068.0" y="716" width="1.2000000000000455" height="28" fill="#4a4a4a" /><rect x="1072.8" y="716" width="1.2000000000000455" height="28" fill="#4a4a4a" /><rect x="1077.5" y="716" width="1.2000000000000455" height="28" fill="#4a4a4a" /><rect x="1082.2" y="716" width="1.2999999999999545" height="28" fill="#4a4a4a" /><rect x="1087.0" y="716" width="1.2000000000000455" height="28" fill="#4a4a4a" /><rect x="1091.8" y="716" width="1.2000000000000455" height="28" fill="#4a4a4a" /><rect x="1096.5" y="716" width="1.2000000000000455" height="28" fill="#4a4a4a" /><rect x="1101.2" y="716" width="1.2999999999999545" height="28" fill="#4a4a4a" /><rect x="1066" y="700" width="40" height="14" fill="#bdbdbd" /><polygon points="1058,756 1090,756 1084,788 1052,788" fill="#2e2e2e" /><rect x="1058.0" y="758" width="1.2000000000000455" height="28" fill="#4a4a4a" /><rect x="1062.0" y="758" width="1.2000000000000455" height="28" fill="#4a4a4a" /><rect x="1066.0" y="758" width="1.2000000000000455" height="28" fill="#4a4a4a" /><rect x="1070.0" y="758" width="1.2000000000000455" height="28" fill="#4a4a4a" /><rect x="1074.0" y="758" width="1.2000000000000455" height="28" fill="#4a4a4a" /><rect x="1078.0" y="758" width="1.2000000000000455" height="28" fill="#4a4a4a" /><rect x="1082.0" y="758" width="1.2000000000000455" height="28" fill="#4a4a4a" /><rect x="1086.0" y="758" width="1.2000000000000455" height="28" fill="#4a4a4a" /><rect x="1056" y="742" width="34" height="14" fill="#bdbdbd" /><polygon points="960.99,560 999.43,560 969.53,790 940.29,790" fill="#474747" /><polygon points="960.99,560 963.99,560 943.29,790 940.29,790" fill="#333" /><rect x="958" y="556" width="40" height="19" fill="#d0d0d0" /><polygon points="1185,505 1205,515 1095,790 1075,790" fill="#474747" /><line x1="1200" y1="517" x2="1090" y2="788" stroke="#6a6a6a" stroke-width="1.2" /><line x1="1190" y1="512" x2="1080" y2="786" stroke="#111" stroke-width="2" /><rect x="630" y="770" width="460" height="18" fill="#4a4a4a" /><rect x="843" y="773" width="20" height="10" fill="#cfd8c0" /><rect x="863" y="772" width="47" height="16" fill="#6a6a6a" /><rect x="910" y="772" width="20" height="16" fill="#1e1e1e" /><rect x="1000" y="770" width="80" height="18" fill="#9a9a9a" /><polygon points="600,722 640,722 640,828 589,828 589,788" fill="#8c8c8c" /><polygon points="631,657 651,657 680,745 640,762 631,722" fill="#888888" /><polygon points="651,657 712,657 712,745 680,745" fill="#242424" /><polygon points="621,603 633,603 631,722 607,722" fill="#d9d9d9" /><polygon points="621,603 633,603 633,608 621,608" fill="#efefef" /><polygon points="607,722 617,722 640,762 700,762 700,770 633,770" fill="#d6d6d6" /><rect x="633" y="770" width="167" height="18" fill="#4e4e4e" /><ellipse cx="700" cy="648" rx="38.6" ry="11.6" fill="#68a42e"/><circle cx="702.1" cy="637.2" r="2.2" fill="#86c046"/><circle cx="706.4" cy="650.4" r="3.2" fill="#6aa830"/><circle cx="687.0" cy="636.8" r="2.4" fill="#6aa830"/><circle cx="712.1" cy="638.2" r="2.6" fill="#92c852"/><circle cx="719.3" cy="661.2" r="2.6" fill="#78b43a"/><circle cx="710.8" cy="646.1" r="1.8" fill="#5a9626"/><circle cx="673.1" cy="637.5" r="2.9" fill="#78b43a"/><circle cx="703.0" cy="648.3" r="2.0" fill="#78b43a"/><circle cx="667.9" cy="657.9" r="1.8" fill="#92c852"/><circle cx="725.7" cy="637.8" r="2.7" fill="#5a9626"/><circle cx="700.7" cy="647.4" r="3.2" fill="#78b43a"/><circle cx="690.0" cy="641.2" r="3.0" fill="#5a9626"/><circle cx="705.7" cy="647.1" r="2.4" fill="#78b43a"/><circle cx="688.0" cy="639.2" r="2.6" fill="#92c852"/><circle cx="681.7" cy="658.4" r="2.9" fill="#5a9626"/><circle cx="668.0" cy="644.6" r="1.5" fill="#5a9626"/><circle cx="690.3" cy="634.6" r="2.2" fill="#6aa830"/><circle cx="695.5" cy="646.1" r="1.7" fill="#6aa830"/><circle cx="723.7" cy="652.7" r="2.0" fill="#5a9626"/><circle cx="682.2" cy="640.4" r="2.6" fill="#92c852"/><circle cx="731.7" cy="643.4" r="2.6" fill="#92c852"/><circle cx="672.8" cy="660.5" r="3.4" fill="#78b43a"/><circle cx="704.7" cy="645.1" r="1.7" fill="#86c046"/><circle cx="692.1" cy="637.6" r="3.3" fill="#78b43a"/><circle cx="718.9" cy="646.4" r="1.9" fill="#6aa830"/><circle cx="681.4" cy="652.2" r="1.5" fill="#5a9626"/><circle cx="688.1" cy="659.5" r="2.6" fill="#92c852"/><circle cx="694.2" cy="635.1" r="2.6" fill="#78b43a"/><circle cx="670.0" cy="649.8" r="2.1" fill="#6aa830"/><circle cx="738.2" cy="656.6" r="2.1" fill="#92c852"/><circle cx="731.8" cy="638.3" r="3.1" fill="#5a9626"/><circle cx="713.5" cy="643.3" r="2.2" fill="#92c852"/><circle cx="712.9" cy="647.6" r="1.5" fill="#86c046"/><circle cx="723.5" cy="643.6" r="3.0" fill="#86c046"/><circle cx="680.9" cy="659.0" r="3.1" fill="#78b43a"/><circle cx="721.3" cy="661.5" r="2.7" fill="#6aa830"/><circle cx="653.6" cy="651.6" r="2.1" fill="#78b43a"/><circle cx="711.4" cy="646.5" r="2.2" fill="#5a9626"/><circle cx="654.1" cy="644.7" r="2.0" fill="#6aa830"/><circle cx="729.5" cy="652.8" r="2.9" fill="#86c046"/><circle cx="730.5" cy="652.8" r="2.9" fill="#5a9626"/><circle cx="715.3" cy="643.2" r="3.1" fill="#6aa830"/><circle cx="697.0" cy="649.4" r="2.1" fill="#6aa830"/><circle cx="676.6" cy="656.2" r="2.0" fill="#92c852"/><circle cx="693.2" cy="644.9" r="3.3" fill="#6aa830"/><circle cx="679.2" cy="646.6" r="1.7" fill="#6aa830"/><circle cx="697.9" cy="634.7" r="3.2" fill="#5a9626"/><circle cx="713.1" cy="633.5" r="3.4" fill="#92c852"/><circle cx="716.8" cy="634.2" r="2.2" fill="#5a9626"/><circle cx="678.9" cy="635.8" r="2.3" fill="#92c852"/><circle cx="661.7" cy="641.9" r="1.7" fill="#6aa830"/><circle cx="657.5" cy="644.3" r="1.6" fill="#5a9626"/><circle cx="684.3" cy="655.5" r="3.2" fill="#86c046"/><circle cx="698.7" cy="648.2" r="1.7" fill="#92c852"/><circle cx="714.4" cy="653.0" r="3.1" fill="#78b43a"/><circle cx="689.4" cy="633.1" r="1.6" fill="#86c046"/><circle cx="696.2" cy="650.6" r="2.0" fill="#78b43a"/><circle cx="659.4" cy="640.0" r="1.9" fill="#6aa830"/><circle cx="687.2" cy="643.1" r="2.0" fill="#6aa830"/><circle cx="655.6" cy="653.7" r="2.1" fill="#86c046"/><circle cx="746.4" cy="647.5" r="3.1" fill="#5a9626"/><circle cx="692.5" cy="640.5" r="3.1" fill="#78b43a"/><circle cx="662.6" cy="645.3" r="1.7" fill="#92c852"/><circle cx="710.9" cy="646.0" r="3.0" fill="#86c046"/><circle cx="706.6" cy="645.2" r="2.9" fill="#5a9626"/><circle cx="669.7" cy="649.7" r="2.9" fill="#92c852"/><circle cx="721.0" cy="640.4" r="3.4" fill="#86c046"/><ellipse cx="735" cy="688" rx="29.4" ry="11.6" fill="#68a42e"/><circle cx="702.2" cy="683.6" r="3.5" fill="#92c852"/><circle cx="745.9" cy="695.2" r="2.7" fill="#78b43a"/><circle cx="735.4" cy="700.3" r="3.5" fill="#5a9626"/><circle cx="710.9" cy="687.8" r="2.6" fill="#78b43a"/><circle cx="740.6" cy="695.8" r="3.5" fill="#6aa830"/><circle cx="744.2" cy="689.8" r="1.9" fill="#5a9626"/><circle cx="711.0" cy="677.2" r="2.8" fill="#6aa830"/><circle cx="713.2" cy="694.3" r="2.5" fill="#78b43a"/><circle cx="759.7" cy="689.8" r="2.8" fill="#78b43a"/><circle cx="735.7" cy="679.9" r="2.2" fill="#78b43a"/><circle cx="717.7" cy="697.0" r="2.6" fill="#86c046"/><circle cx="745.3" cy="701.8" r="3.4" fill="#86c046"/><circle cx="733.8" cy="674.1" r="1.6" fill="#86c046"/><circle cx="764.8" cy="689.1" r="3.4" fill="#6aa830"/><circle cx="738.8" cy="679.4" r="2.5" fill="#5a9626"/><circle cx="734.5" cy="679.7" r="3.2" fill="#6aa830"/><circle cx="761.6" cy="681.7" r="2.9" fill="#78b43a"/><circle cx="724.7" cy="685.3" r="3.2" fill="#5a9626"/><circle cx="728.6" cy="694.4" r="3.3" fill="#92c852"/><circle cx="717.9" cy="689.4" r="3.3" fill="#6aa830"/><circle cx="768.1" cy="694.3" r="3.3" fill="#6aa830"/><circle cx="701.8" cy="685.9" r="3.1" fill="#5a9626"/><circle cx="746.6" cy="675.6" r="3.1" fill="#6aa830"/><circle cx="732.5" cy="696.7" r="3.3" fill="#92c852"/><circle cx="746.8" cy="678.9" r="2.0" fill="#78b43a"/><circle cx="748.6" cy="693.4" r="1.5" fill="#92c852"/><circle cx="707.9" cy="694.7" r="3.1" fill="#92c852"/><circle cx="747.7" cy="697.1" r="2.8" fill="#6aa830"/><circle cx="762.0" cy="694.4" r="2.0" fill="#86c046"/><circle cx="756.0" cy="687.9" r="3.2" fill="#86c046"/><circle cx="725.2" cy="689.8" r="3.5" fill="#5a9626"/><circle cx="740.7" cy="695.2" r="1.5" fill="#78b43a"/><circle cx="723.8" cy="695.8" r="3.0" fill="#78b43a"/><circle cx="722.9" cy="701.0" r="3.0" fill="#92c852"/><circle cx="739.5" cy="702.6" r="2.3" fill="#6aa830"/><circle cx="750.0" cy="692.4" r="1.7" fill="#6aa830"/><circle cx="740.6" cy="685.3" r="2.9" fill="#6aa830"/><circle cx="743.3" cy="700.2" r="3.2" fill="#92c852"/><circle cx="707.8" cy="685.9" r="2.3" fill="#78b43a"/><circle cx="733.6" cy="692.9" r="3.2" fill="#5a9626"/><circle cx="746.7" cy="685.8" r="2.0" fill="#92c852"/><circle cx="702.2" cy="690.9" r="1.9" fill="#78b43a"/><circle cx="700.5" cy="689.7" r="2.7" fill="#92c852"/><circle cx="707.6" cy="681.2" r="2.2" fill="#6aa830"/><circle cx="732.4" cy="677.4" r="3.0" fill="#6aa830"/><circle cx="746.4" cy="692.0" r="2.8" fill="#78b43a"/><circle cx="741.9" cy="683.7" r="1.8" fill="#92c852"/><circle cx="733.8" cy="696.6" r="1.9" fill="#6aa830"/><circle cx="746.6" cy="676.7" r="3.2" fill="#78b43a"/><circle cx="717.9" cy="692.3" r="2.1" fill="#6aa830"/><circle cx="716.8" cy="687.7" r="2.7" fill="#6aa830"/><ellipse cx="778" cy="690" rx="20.2" ry="9.9" fill="#68a42e"/><circle cx="774.7" cy="687.6" r="2.4" fill="#78b43a"/><circle cx="786.1" cy="682.6" r="1.8" fill="#92c852"/><circle cx="753.9" cy="693.8" r="1.5" fill="#78b43a"/><circle cx="763.3" cy="683.0" r="2.8" fill="#92c852"/><circle cx="784.3" cy="681.6" r="2.8" fill="#78b43a"/><circle cx="790.1" cy="679.7" r="3.3" fill="#6aa830"/><circle cx="783.2" cy="687.6" r="2.4" fill="#6aa830"/><circle cx="785.1" cy="701.5" r="3.1" fill="#5a9626"/><circle cx="776.3" cy="694.9" r="2.3" fill="#6aa830"/><circle cx="773.1" cy="685.1" r="2.3" fill="#6aa830"/><circle cx="762.6" cy="694.1" r="1.8" fill="#86c046"/><circle cx="789.6" cy="698.3" r="1.8" fill="#78b43a"/><circle cx="753.4" cy="690.5" r="1.9" fill="#78b43a"/><circle cx="781.3" cy="692.3" r="2.2" fill="#86c046"/><circle cx="774.7" cy="687.5" r="1.9" fill="#92c852"/><circle cx="780.0" cy="689.5" r="2.8" fill="#92c852"/><circle cx="760.9" cy="686.1" r="1.7" fill="#86c046"/><circle cx="779.1" cy="699.6" r="2.6" fill="#86c046"/><circle cx="763.3" cy="697.8" r="2.6" fill="#92c852"/><circle cx="755.9" cy="687.0" r="3.5" fill="#92c852"/><circle cx="796.7" cy="683.8" r="3.4" fill="#6aa830"/><circle cx="799.1" cy="687.9" r="1.9" fill="#92c852"/><circle cx="758.8" cy="697.4" r="2.4" fill="#5a9626"/><circle cx="781.7" cy="700.6" r="2.5" fill="#5a9626"/><circle cx="768.2" cy="693.1" r="2.1" fill="#5a9626"/><circle cx="781.5" cy="684.4" r="2.8" fill="#5a9626"/><circle cx="776.7" cy="688.1" r="2.5" fill="#92c852"/><circle cx="793.9" cy="691.4" r="2.6" fill="#86c046"/><circle cx="773.0" cy="698.2" r="1.6" fill="#78b43a"/><circle cx="754.9" cy="694.8" r="2.5" fill="#86c046"/><circle cx="763.9" cy="688.6" r="1.8" fill="#6aa830"/><circle cx="773.9" cy="687.8" r="2.2" fill="#78b43a"/><circle cx="770.4" cy="695.3" r="3.0" fill="#5a9626"/><circle cx="760.2" cy="682.8" r="1.8" fill="#78b43a"/><circle cx="786.6" cy="687.0" r="2.2" fill="#78b43a"/><ellipse cx="690" cy="730" rx="33.1" ry="10.7" fill="#68a42e"/><circle cx="714.7" cy="728.1" r="2.7" fill="#6aa830"/><circle cx="671.0" cy="721.9" r="3.2" fill="#86c046"/><circle cx="677.5" cy="719.1" r="1.8" fill="#92c852"/><circle cx="654.3" cy="724.7" r="2.1" fill="#5a9626"/><circle cx="677.9" cy="724.7" r="3.3" fill="#86c046"/><circle cx="698.3" cy="739.2" r="2.0" fill="#5a9626"/><circle cx="686.5" cy="739.2" r="3.5" fill="#6aa830"/><circle cx="714.9" cy="727.0" r="3.2" fill="#5a9626"/><circle cx="656.9" cy="729.6" r="2.0" fill="#6aa830"/><circle cx="718.6" cy="739.0" r="2.2" fill="#78b43a"/><circle cx="652.0" cy="732.4" r="2.5" fill="#86c046"/><circle cx="713.4" cy="719.1" r="1.8" fill="#78b43a"/><circle cx="684.9" cy="724.8" r="2.5" fill="#92c852"/><circle cx="705.6" cy="737.5" r="2.4" fill="#6aa830"/><circle cx="662.7" cy="737.1" r="3.0" fill="#78b43a"/><circle cx="659.3" cy="729.4" r="3.2" fill="#86c046"/><circle cx="684.3" cy="728.7" r="3.2" fill="#78b43a"/><circle cx="717.1" cy="724.2" r="2.7" fill="#92c852"/><circle cx="701.9" cy="728.8" r="1.5" fill="#78b43a"/><circle cx="684.3" cy="720.3" r="2.1" fill="#6aa830"/><circle cx="726.2" cy="723.4" r="1.6" fill="#5a9626"/><circle cx="689.6" cy="734.7" r="3.1" fill="#6aa830"/><circle cx="707.7" cy="737.3" r="3.4" fill="#5a9626"/><circle cx="700.3" cy="736.2" r="2.1" fill="#5a9626"/><circle cx="693.4" cy="724.9" r="2.1" fill="#5a9626"/><circle cx="720.7" cy="730.8" r="1.7" fill="#6aa830"/><circle cx="655.0" cy="736.3" r="1.9" fill="#6aa830"/><circle cx="690.9" cy="732.3" r="1.7" fill="#6aa830"/><circle cx="695.7" cy="716.1" r="2.5" fill="#6aa830"/><circle cx="688.9" cy="728.2" r="2.5" fill="#92c852"/><circle cx="663.6" cy="729.5" r="3.0" fill="#86c046"/><circle cx="707.6" cy="734.1" r="1.7" fill="#5a9626"/><circle cx="695.5" cy="731.5" r="2.0" fill="#92c852"/><circle cx="729.8" cy="727.2" r="3.2" fill="#6aa830"/><circle cx="664.5" cy="721.1" r="3.1" fill="#78b43a"/><circle cx="680.7" cy="727.7" r="1.9" fill="#78b43a"/><circle cx="702.4" cy="730.1" r="3.0" fill="#6aa830"/><circle cx="698.6" cy="729.2" r="1.9" fill="#92c852"/><circle cx="686.6" cy="743.1" r="1.7" fill="#86c046"/><circle cx="713.4" cy="723.9" r="2.7" fill="#6aa830"/><circle cx="696.5" cy="734.9" r="2.3" fill="#92c852"/><circle cx="678.8" cy="729.6" r="1.9" fill="#6aa830"/><circle cx="699.5" cy="731.8" r="2.0" fill="#5a9626"/><circle cx="668.6" cy="727.8" r="3.4" fill="#92c852"/><circle cx="697.1" cy="728.5" r="2.4" fill="#6aa830"/><circle cx="673.0" cy="736.4" r="2.7" fill="#92c852"/><circle cx="680.4" cy="726.1" r="2.7" fill="#86c046"/><circle cx="687.4" cy="729.5" r="1.8" fill="#92c852"/><circle cx="688.0" cy="739.8" r="2.5" fill="#5a9626"/><circle cx="698.5" cy="728.2" r="1.7" fill="#78b43a"/><circle cx="661.7" cy="729.4" r="1.9" fill="#5a9626"/><circle cx="691.4" cy="737.3" r="1.8" fill="#86c046"/><circle cx="722.5" cy="722.1" r="2.0" fill="#6aa830"/><circle cx="663.3" cy="724.4" r="1.6" fill="#86c046"/><circle cx="676.8" cy="737.5" r="2.9" fill="#78b43a"/><circle cx="677.7" cy="734.1" r="1.7" fill="#5a9626"/><circle cx="680.9" cy="728.1" r="1.9" fill="#86c046"/><ellipse cx="772" cy="766" rx="27.6" ry="9.9" fill="#68a42e"/><circle cx="782.6" cy="761.0" r="2.8" fill="#5a9626"/><circle cx="793.5" cy="761.8" r="3.3" fill="#5a9626"/><circle cx="790.3" cy="766.8" r="1.6" fill="#6aa830"/><circle cx="792.7" cy="762.7" r="1.5" fill="#86c046"/><circle cx="779.7" cy="765.3" r="1.5" fill="#92c852"/><circle cx="739.4" cy="767.9" r="3.0" fill="#6aa830"/><circle cx="757.2" cy="770.6" r="2.3" fill="#6aa830"/><circle cx="758.9" cy="758.9" r="1.6" fill="#5a9626"/><circle cx="768.9" cy="765.8" r="1.8" fill="#86c046"/><circle cx="795.1" cy="774.8" r="2.6" fill="#78b43a"/><circle cx="783.0" cy="777.1" r="3.5" fill="#6aa830"/><circle cx="768.1" cy="778.8" r="2.3" fill="#78b43a"/><circle cx="782.3" cy="774.7" r="2.2" fill="#6aa830"/><circle cx="794.4" cy="769.6" r="3.4" fill="#92c852"/><circle cx="741.0" cy="770.7" r="2.7" fill="#86c046"/><circle cx="779.4" cy="772.2" r="1.8" fill="#5a9626"/><circle cx="764.1" cy="754.0" r="3.2" fill="#78b43a"/><circle cx="796.3" cy="759.7" r="1.7" fill="#92c852"/><circle cx="740.0" cy="762.6" r="2.5" fill="#6aa830"/><circle cx="757.9" cy="777.2" r="3.1" fill="#92c852"/><circle cx="770.7" cy="761.9" r="2.6" fill="#86c046"/><circle cx="757.3" cy="756.8" r="2.4" fill="#86c046"/><circle cx="786.8" cy="762.8" r="2.6" fill="#78b43a"/><circle cx="784.2" cy="773.1" r="2.8" fill="#6aa830"/><circle cx="773.8" cy="757.5" r="1.6" fill="#86c046"/><circle cx="778.6" cy="768.0" r="1.8" fill="#86c046"/><circle cx="798.7" cy="769.2" r="2.7" fill="#5a9626"/><circle cx="776.2" cy="761.1" r="2.7" fill="#6aa830"/><circle cx="768.6" cy="762.4" r="2.1" fill="#6aa830"/><circle cx="751.0" cy="762.3" r="2.9" fill="#5a9626"/><circle cx="795.1" cy="775.2" r="2.8" fill="#86c046"/><circle cx="760.7" cy="769.9" r="2.5" fill="#6aa830"/><circle cx="765.5" cy="762.4" r="3.2" fill="#86c046"/><circle cx="763.3" cy="767.3" r="1.8" fill="#86c046"/><circle cx="763.5" cy="777.2" r="3.2" fill="#78b43a"/><circle cx="771.4" cy="773.7" r="2.2" fill="#6aa830"/><circle cx="774.1" cy="756.6" r="2.0" fill="#5a9626"/><circle cx="741.3" cy="762.6" r="1.6" fill="#86c046"/><circle cx="781.8" cy="767.8" r="1.6" fill="#86c046"/><circle cx="788.3" cy="756.3" r="1.6" fill="#6aa830"/><circle cx="802.0" cy="761.3" r="3.4" fill="#86c046"/><circle cx="761.5" cy="762.9" r="1.7" fill="#86c046"/><circle cx="792.3" cy="769.9" r="3.4" fill="#78b43a"/><circle cx="761.5" cy="770.6" r="3.4" fill="#6aa830"/><circle cx="767.2" cy="756.4" r="2.0" fill="#78b43a"/><circle cx="756.2" cy="771.1" r="2.7" fill="#92c852"/><circle cx="776.4" cy="759.0" r="2.6" fill="#78b43a"/><circle cx="801.6" cy="766.6" r="2.8" fill="#92c852"/><ellipse cx="648" cy="700" rx="7.4" ry="16.5" fill="#68a42e"/><circle cx="649.7" cy="702.1" r="3.3" fill="#86c046"/><circle cx="638.8" cy="699.9" r="1.5" fill="#92c852"/><circle cx="646.9" cy="696.9" r="2.6" fill="#92c852"/><circle cx="652.3" cy="715.6" r="3.4" fill="#78b43a"/><circle cx="655.1" cy="694.1" r="2.6" fill="#92c852"/><circle cx="650.1" cy="710.3" r="2.2" fill="#78b43a"/><circle cx="645.7" cy="721.2" r="1.6" fill="#6aa830"/><circle cx="640.6" cy="704.2" r="2.7" fill="#78b43a"/><circle cx="644.7" cy="709.7" r="3.2" fill="#92c852"/><circle cx="650.1" cy="719.9" r="2.6" fill="#92c852"/><circle cx="646.9" cy="714.7" r="2.5" fill="#78b43a"/><circle cx="649.7" cy="714.4" r="1.7" fill="#5a9626"/><ellipse cx="1000" cy="645" rx="22.1" ry="12.4" fill="#68a42e"/><circle cx="995.4" cy="646.3" r="3.4" fill="#78b43a"/><circle cx="1013.9" cy="634.5" r="3.5" fill="#92c852"/><circle cx="1007.5" cy="650.8" r="2.3" fill="#5a9626"/><circle cx="985.0" cy="648.9" r="2.3" fill="#92c852"/><circle cx="1003.1" cy="642.5" r="2.5" fill="#78b43a"/><circle cx="1005.1" cy="629.6" r="1.9" fill="#86c046"/><circle cx="1021.2" cy="648.2" r="2.2" fill="#86c046"/><circle cx="1009.6" cy="641.8" r="2.6" fill="#6aa830"/><circle cx="995.8" cy="657.7" r="2.3" fill="#86c046"/><circle cx="995.6" cy="655.0" r="2.6" fill="#92c852"/><circle cx="990.4" cy="636.9" r="1.7" fill="#6aa830"/><circle cx="985.4" cy="646.0" r="2.7" fill="#86c046"/><circle cx="1002.5" cy="659.8" r="3.1" fill="#78b43a"/><circle cx="978.3" cy="648.1" r="3.0" fill="#86c046"/><circle cx="1005.0" cy="646.7" r="2.5" fill="#92c852"/><circle cx="1001.9" cy="633.6" r="3.0" fill="#86c046"/><circle cx="973.8" cy="647.4" r="1.7" fill="#6aa830"/><circle cx="1020.1" cy="652.5" r="3.2" fill="#86c046"/><circle cx="989.7" cy="660.2" r="3.5" fill="#6aa830"/><circle cx="1002.0" cy="649.7" r="2.9" fill="#92c852"/><circle cx="1001.2" cy="654.1" r="3.4" fill="#5a9626"/><circle cx="1023.3" cy="639.9" r="1.5" fill="#78b43a"/><circle cx="1005.5" cy="653.6" r="2.1" fill="#86c046"/><circle cx="987.7" cy="638.2" r="2.3" fill="#78b43a"/><circle cx="991.1" cy="635.6" r="1.9" fill="#86c046"/><circle cx="1013.6" cy="636.4" r="3.3" fill="#86c046"/><circle cx="1010.0" cy="633.7" r="1.6" fill="#6aa830"/><circle cx="1005.4" cy="657.3" r="2.6" fill="#86c046"/><circle cx="1008.5" cy="646.9" r="3.4" fill="#78b43a"/><circle cx="986.8" cy="652.7" r="1.9" fill="#6aa830"/><circle cx="1002.3" cy="657.5" r="1.6" fill="#6aa830"/><circle cx="1019.0" cy="643.6" r="2.2" fill="#92c852"/><circle cx="973.8" cy="647.7" r="2.3" fill="#92c852"/><circle cx="1021.5" cy="648.1" r="2.6" fill="#5a9626"/><circle cx="1014.8" cy="637.0" r="2.2" fill="#86c046"/><circle cx="1022.0" cy="639.8" r="2.8" fill="#5a9626"/><circle cx="1004.3" cy="643.8" r="2.8" fill="#92c852"/><circle cx="1022.5" cy="647.8" r="1.8" fill="#92c852"/><ellipse cx="993" cy="690" rx="20.2" ry="11.6" fill="#68a42e"/><circle cx="978.7" cy="689.7" r="3.2" fill="#78b43a"/><circle cx="982.3" cy="680.6" r="3.5" fill="#5a9626"/><circle cx="991.1" cy="689.8" r="3.4" fill="#5a9626"/><circle cx="1010.1" cy="678.9" r="1.9" fill="#5a9626"/><circle cx="999.2" cy="692.2" r="3.1" fill="#92c852"/><circle cx="984.1" cy="687.0" r="2.9" fill="#78b43a"/><circle cx="980.4" cy="696.3" r="1.7" fill="#5a9626"/><circle cx="1004.6" cy="687.7" r="2.9" fill="#5a9626"/><circle cx="981.6" cy="697.4" r="2.7" fill="#92c852"/><circle cx="983.8" cy="686.0" r="3.3" fill="#6aa830"/><circle cx="1005.6" cy="687.5" r="3.1" fill="#5a9626"/><circle cx="1004.8" cy="678.6" r="2.4" fill="#5a9626"/><circle cx="989.0" cy="699.0" r="3.2" fill="#92c852"/><circle cx="995.2" cy="688.6" r="1.5" fill="#5a9626"/><circle cx="979.4" cy="683.5" r="1.8" fill="#6aa830"/><circle cx="1000.6" cy="685.8" r="1.8" fill="#5a9626"/><circle cx="993.7" cy="688.3" r="2.2" fill="#92c852"/><circle cx="1004.5" cy="695.8" r="1.9" fill="#78b43a"/><circle cx="990.5" cy="686.2" r="2.9" fill="#6aa830"/><circle cx="979.9" cy="687.8" r="1.7" fill="#6aa830"/><circle cx="971.9" cy="687.8" r="2.9" fill="#92c852"/><circle cx="1001.7" cy="701.8" r="3.1" fill="#5a9626"/><circle cx="1002.9" cy="697.7" r="1.9" fill="#92c852"/><circle cx="972.2" cy="688.9" r="2.4" fill="#86c046"/><circle cx="1000.9" cy="681.1" r="1.5" fill="#5a9626"/><circle cx="995.7" cy="699.8" r="2.9" fill="#86c046"/><circle cx="1006.3" cy="679.9" r="3.0" fill="#78b43a"/><circle cx="1004.7" cy="688.3" r="2.6" fill="#78b43a"/><circle cx="994.3" cy="692.8" r="1.9" fill="#78b43a"/><circle cx="998.3" cy="688.4" r="1.8" fill="#86c046"/><circle cx="1004.2" cy="686.1" r="2.8" fill="#78b43a"/><circle cx="1005.8" cy="684.7" r="2.0" fill="#92c852"/><circle cx="1008.2" cy="697.7" r="1.5" fill="#92c852"/><circle cx="1008.0" cy="695.7" r="2.1" fill="#92c852"/><circle cx="1002.1" cy="702.0" r="2.6" fill="#5a9626"/><ellipse cx="985" cy="735" rx="18.4" ry="10.7" fill="#68a42e"/><circle cx="992.3" cy="745.6" r="3.1" fill="#6aa830"/><circle cx="981.8" cy="734.6" r="3.5" fill="#92c852"/><circle cx="967.1" cy="730.6" r="3.0" fill="#86c046"/><circle cx="1003.4" cy="740.2" r="2.0" fill="#6aa830"/><circle cx="967.3" cy="732.9" r="1.8" fill="#78b43a"/><circle cx="1004.0" cy="735.8" r="2.9" fill="#86c046"/><circle cx="998.9" cy="729.7" r="3.1" fill="#78b43a"/><circle cx="985.9" cy="736.8" r="3.0" fill="#78b43a"/><circle cx="988.6" cy="741.0" r="2.9" fill="#78b43a"/><circle cx="981.7" cy="737.5" r="2.4" fill="#86c046"/><circle cx="979.2" cy="736.3" r="3.1" fill="#92c852"/><circle cx="989.4" cy="730.9" r="3.3" fill="#78b43a"/><circle cx="970.6" cy="731.1" r="1.8" fill="#86c046"/><circle cx="998.5" cy="743.2" r="2.2" fill="#6aa830"/><circle cx="976.1" cy="745.9" r="2.6" fill="#86c046"/><circle cx="1002.8" cy="741.8" r="2.5" fill="#78b43a"/><circle cx="1004.7" cy="728.7" r="2.7" fill="#92c852"/><circle cx="984.3" cy="740.8" r="3.1" fill="#6aa830"/><circle cx="997.0" cy="745.2" r="2.0" fill="#6aa830"/><circle cx="978.0" cy="743.1" r="2.5" fill="#6aa830"/><circle cx="992.5" cy="734.9" r="3.3" fill="#86c046"/><circle cx="977.3" cy="735.4" r="2.4" fill="#92c852"/><circle cx="971.1" cy="745.0" r="3.0" fill="#86c046"/><circle cx="983.0" cy="747.0" r="3.4" fill="#6aa830"/><circle cx="978.5" cy="721.6" r="2.4" fill="#86c046"/><circle cx="968.9" cy="734.5" r="2.4" fill="#78b43a"/><circle cx="993.9" cy="722.9" r="2.1" fill="#6aa830"/><circle cx="998.6" cy="724.8" r="1.6" fill="#86c046"/><circle cx="985.2" cy="747.5" r="2.9" fill="#5a9626"/><circle cx="967.5" cy="743.5" r="3.3" fill="#86c046"/><circle cx="967.9" cy="729.7" r="2.8" fill="#5a9626"/><circle cx="973.6" cy="728.5" r="2.6" fill="#86c046"/><ellipse cx="990" cy="768" rx="14.7" ry="9.9" fill="#68a42e"/><circle cx="983.9" cy="768.1" r="2.2" fill="#86c046"/><circle cx="985.4" cy="759.8" r="2.6" fill="#92c852"/><circle cx="1001.3" cy="768.4" r="3.4" fill="#78b43a"/><circle cx="988.0" cy="770.0" r="2.1" fill="#5a9626"/><circle cx="991.1" cy="766.5" r="3.1" fill="#5a9626"/><circle cx="995.5" cy="763.7" r="3.4" fill="#86c046"/><circle cx="975.8" cy="766.1" r="3.5" fill="#86c046"/><circle cx="987.9" cy="764.8" r="1.5" fill="#86c046"/><circle cx="986.6" cy="769.5" r="3.1" fill="#92c852"/><circle cx="1004.1" cy="765.2" r="1.9" fill="#86c046"/><circle cx="998.8" cy="757.3" r="3.0" fill="#6aa830"/><circle cx="993.1" cy="758.7" r="2.9" fill="#86c046"/><circle cx="992.3" cy="780.0" r="3.1" fill="#5a9626"/><circle cx="984.9" cy="766.5" r="2.0" fill="#5a9626"/><circle cx="1001.3" cy="772.5" r="1.7" fill="#78b43a"/><circle cx="988.4" cy="779.0" r="2.2" fill="#86c046"/><circle cx="990.2" cy="758.5" r="1.6" fill="#92c852"/><circle cx="976.2" cy="776.5" r="2.0" fill="#86c046"/><circle cx="980.8" cy="758.0" r="3.4" fill="#6aa830"/><circle cx="997.6" cy="779.9" r="2.9" fill="#92c852"/><circle cx="1006.3" cy="765.1" r="2.1" fill="#86c046"/><circle cx="993.5" cy="756.9" r="2.8" fill="#6aa830"/><circle cx="1003.4" cy="775.6" r="2.6" fill="#5a9626"/><circle cx="987.5" cy="771.5" r="3.1" fill="#5a9626"/><circle cx="988.3" cy="774.0" r="1.9" fill="#6aa830"/><circle cx="887" cy="625" r="8.399999999999999" fill="#8ba862" /><circle cx="899" cy="625" r="8.399999999999999" fill="#94b06a" /><circle cx="887" cy="672" r="7.699999999999999" fill="#8ba862" /><circle cx="899" cy="672" r="7.699999999999999" fill="#94b06a" /><circle cx="887" cy="712" r="7.699999999999999" fill="#8ba862" /><circle cx="899" cy="712" r="7.699999999999999" fill="#94b06a" /><circle cx="887" cy="752" r="7.0" fill="#8ba862" /><circle cx="899" cy="752" r="7.0" fill="#94b06a" /><circle cx="1125" cy="612" r="14" fill="#8ba862" opacity="0.95"/><circle cx="1108" cy="663" r="14" fill="#8ba862" opacity="0.95"/><circle cx="1090" cy="712" r="13" fill="#8ba862" opacity="0.95"/><circle cx="1078" cy="748" r="12" fill="#8ba862" opacity="0.95"/><circle cx="640" cy="778" r="6" fill="#8ba862" opacity="0.95"/><polygon points="598,752 606,748 640,812 632,816" fill="#363636" /><polygon points="792,748 800,748 805,816 797,816" fill="#363636" /><rect x="592" y="740" width="23" height="22" fill="#5a6262" /><rect x="598" y="775" width="17" height="10" fill="#5a6a62" /><rect x="788" y="740" width="22" height="20" fill="#5a6262" /><rect x="790" y="776" width="18" height="10" fill="#5a6a62" /><line x1="569" y1="741" x2="1213" y2="739" stroke="#2a2a2a" stroke-width="0.8" /><line x1="569" y1="752" x2="1213" y2="750" stroke="#2a2a2a" stroke-width="0.8" /><rect x="570" y="506" width="36" height="94" rx="10" fill="#0c0c0c"/><rect x="577" y="526" width="21" height="34" fill="#2e2e2e" /><rect x="580" y="530" width="15" height="26" fill="#1a1a1a" /><rect x="576" y="568" width="23" height="20" fill="#3a3a3a" /><path d="M880 876 Q892 874 935 874 L985 875 Q996 877 997 895 Q997 915 990 916 L878 916 Q874 905 874 895 Q874 882 880 876Z" fill="#050505"/><rect x="904" y="878" width="23" height="35" rx="3" fill="#0d0d14" stroke="#3a3a3a" stroke-width="1.6"/><rect x="920" y="884" width="5" height="21" fill="#2e2e2e" /><rect x="933" y="881" width="38" height="25" rx="2" fill="#353535"/><rect x="936" y="884" width="15" height="19" fill="#0e0e16" /><rect x="953" y="884" width="15" height="19" fill="#0e0e16" /><rect x="971" y="884" width="21" height="26" rx="2" fill="#dcdcdc"/><rect x="974" y="893" width="5" height="3" fill="#222" /><rect x="938" y="905" width="54" height="5" fill="#d2d2d2" /></svg>
<div class="a" style="left:568px;top:111px;width:646px;height:806px;border:1px solid #9a9624"></div>
<div class="a" style="left:2px;top:48px;width:4px;height:28px;background:#5a5a5a;"></div>
<div class="a" style="left:2px;top:81px;width:4px;height:27px;background:#5a5a5a;"></div>
<div class="a" style="left:9px;top:46px;width:166px;height:31px;background:linear-gradient(#626262,#5c5c5c);"></div>
<div class="t" style="left:14.5px;top:56.6px;font-size:11px;color:#d2d2d2;font-weight:400;letter-spacing:-0.38px;font-family:'Liberation Sans';">C:\Users\Toos...\3ds Max 2023</div>
<svg class="a" style="left:160px;top:57px" width="10" height="8" viewBox="0 0 10 8"><path d="M1 1 H9 L5 7Z" fill="#e0e0e0"/></svg>
<svg class="a" style="left:180px;top:49px" width="24" height="24" viewBox="0 0 24 24"><rect x="5" y="2.5" width="14.5" height="12" fill="#d4d4d4"/><rect x="0.5" y="1" width="4.5" height="14" rx="2.2" fill="#d4d4d4"/><path d="M0.5 13 H19.5 V15.5 H2.5 A2 2 0 0 1 0.5 13Z" fill="#d4d4d4"/><polygon points="21.30,18.00 19.54,19.88 19.45,22.45 16.88,22.54 15.00,24.30 13.12,22.54 10.55,22.45 10.46,19.88 8.70,18.00 10.46,16.12 10.55,13.55 13.12,13.46 15.00,11.70 16.88,13.46 19.45,13.55 19.54,16.12" fill="#fbb41b"/><circle cx="15" cy="18" r="2.83" fill="#444"/></svg>
<svg class="a" style="left:210px;top:49px" width="24" height="24" viewBox="0 0 24 24"><rect x="5" y="2.5" width="14.5" height="12" fill="#d4d4d4"/><rect x="0.5" y="1" width="4.5" height="14" rx="2.2" fill="#d4d4d4"/><path d="M0.5 13 H19.5 V15.5 H2.5 A2 2 0 0 1 0.5 13Z" fill="#d4d4d4"/><path d="M10 13.5 H15 L16.5 15.5 H22 V24 H10Z" fill="#fbb41b"/></svg>
<svg class="a" style="left:240px;top:49px" width="24" height="24" viewBox="0 0 24 24"><rect x="5" y="2.5" width="14.5" height="12" fill="#d4d4d4"/><rect x="0.5" y="1" width="4.5" height="14" rx="2.2" fill="#d4d4d4"/><path d="M0.5 13 H19.5 V15.5 H2.5 A2 2 0 0 1 0.5 13Z" fill="#d4d4d4"/><rect x="12" y="13" width="10" height="4" fill="#fbb41b"/><path d="M15 17 V23 H20 M15 20 H20" stroke="#fbb41b" stroke-width="1.3" fill="none"/><rect x="19" y="18.5" width="3.5" height="3.5" fill="#fbb41b"/><rect x="19" y="22" width="3.5" height="3" fill="#fbb41b"/></svg>
<svg class="a" style="left:270px;top:49px" width="24" height="24" viewBox="0 0 24 24"><rect x="5" y="2.5" width="14.5" height="12" fill="#d4d4d4"/><rect x="0.5" y="1" width="4.5" height="14" rx="2.2" fill="#d4d4d4"/><path d="M0.5 13 H19.5 V15.5 H2.5 A2 2 0 0 1 0.5 13Z" fill="#d4d4d4"/><rect x="12.5" y="14" width="3.5" height="3.5" fill="#fbb41b"/><rect x="12.5" y="21" width="3.5" height="3.5" fill="#fbb41b"/><circle cx="21" cy="19.5" r="2" fill="#fbb41b"/><path d="M14.2 17 V21 M16 15.5 H19 V18" stroke="#fbb41b" stroke-width="1.2" fill="none"/></svg>
<div class="a" style="left:298px;top:48px;width:1px;height:28px;background:#5e5e5e;"></div>
<div class="a" style="left:300px;top:48px;width:1px;height:28px;background:#3a3a3a;"></div>
<svg class="a" style="left:309px;top:49px" width="24" height="24" viewBox="0 0 24 24"><path d="M1 3 Q1 1 3 1 H17 L20 4 V19 Q20 21 18 21 H3 Q1 21 1 19Z" fill="#d4d4d4"/><rect x="5" y="12" width="9" height="9" fill="#9a9a9a"/><rect x="6" y="13" width="6" height="8" fill="#d4d4d4"/><circle cx="17" cy="18" r="5.5" fill="#3fbfbf"/><path d="M16.5 15 V18.5 H19.5" stroke="#fff" stroke-width="1.4" fill="none"/></svg>
<svg class="a" style="left:339px;top:49px" width="24" height="24" viewBox="0 0 24 24"><circle cx="12" cy="11.5" r="10" fill="none" stroke="#3fbfbf" stroke-width="2"/><path d="M7 12 L10.5 15.5 L17 8" stroke="#3fbfbf" stroke-width="2" fill="none"/></svg>
<svg class="a" style="left:371px;top:49px" width="24" height="24" viewBox="0 0 24 24"><path d="M4 16 A9.5 9.5 0 1 1 12 21.5" stroke="#333" stroke-width="2" fill="none"/><circle cx="12" cy="11.5" r="4.5" fill="#333"/><path d="M12 9 V12 H14" stroke="#555" stroke-width="1" fill="none"/><path d="M2 14 L4.5 18 L7 14Z" fill="#333"/></svg>
<div class="a" style="left:402px;top:48px;width:1px;height:28px;background:#5e5e5e;"></div>
<div class="a" style="left:404px;top:48px;width:1px;height:28px;background:#3a3a3a;"></div>
<svg class="a" style="left:411px;top:49px" width="24" height="24" viewBox="0 0 24 24"><path d="M12.5 1.5 L15.5 5 H9.5Z" fill="#3fbfbf"/><path d="M20 7 L23 11 H17Z" fill="#3fbfbf"/><circle cx="4" cy="11" r="2.3" fill="none" stroke="#d4d4d4" stroke-width="1.2"/><circle cx="12.5" cy="20" r="2.3" fill="none" stroke="#d4d4d4" stroke-width="1.2"/><path d="M10 13 L14 9 M11.5 9 H14 V11.5" stroke="#d4d4d4" stroke-width="1.2" fill="none"/></svg>
<svg class="a" style="left:443px;top:49px" width="24" height="24" viewBox="0 0 24 24"><path d="M8 4 L3 8 M16 4 L21 8 M3 16 L8 20 M21 16 L16 20" stroke="#d4d4d4" stroke-width="1.3"/><path d="M12 1 V5 M12 19 V23 M1 12 H5 M19 12 H23" stroke="#3fbfbf" stroke-width="1.3"/><rect x="9.5" y="9.5" width="5" height="5" fill="#3fbfbf"/></svg>
<svg class="a" style="left:476px;top:49px" width="24" height="24" viewBox="0 0 24 24"><circle cx="7" cy="5" r="4" fill="#3fbfbf"/><path d="M3 5 Q7 7 11 5" stroke="#444" stroke-width="1"/><circle cx="6.5" cy="17" r="5.5" fill="#d4d4d4"/><path d="M1 17 Q6 14 12 16" stroke="#444" stroke-width="1"/><circle cx="16" cy="9" r="2.3" fill="#d4d4d4"/><path d="M16 17 L19 20 M19 17 L16 20" stroke="#3fbfbf" stroke-width="1"/></svg>
<svg class="a" style="left:507px;top:49px" width="24" height="24" viewBox="0 0 24 24"><rect x="1" y="1" width="22" height="22" rx="2" fill="none" stroke="#d4d4d4" stroke-width="1.6"/><path d="M4 7 H14 M4 10 H11" stroke="#3fbfbf" stroke-width="1.5"/><path d="M6 20 L12 13 L15 16 L9 22Z" fill="#d4d4d4"/><path d="M13 12 L20 5 L23 8 L16 15Z" fill="#d4d4d4"/></svg>
<svg class="a" style="left:539px;top:49px" width="24" height="24" viewBox="0 0 24 24"><rect x="10" y="1" width="4" height="4" fill="#3fbfbf"/><rect x="19" y="10" width="4" height="4" fill="#3fbfbf"/><rect x="1" y="10" width="3.5" height="3.5" fill="none" stroke="#d4d4d4" stroke-width="1.1"/><rect x="10" y="19" width="3.5" height="3.5" fill="none" stroke="#d4d4d4" stroke-width="1.1"/><path d="M10 14 L14 10 M11.5 10 H14 V12.5" stroke="#3fbfbf" stroke-width="1.2" fill="none"/></svg>
<div class="a" style="left:571px;top:48px;width:1px;height:28px;background:#5e5e5e;"></div>
<div class="a" style="left:573px;top:48px;width:1px;height:28px;background:#3a3a3a;"></div>
<svg class="a" style="left:580px;top:49px" width="24" height="24" viewBox="0 0 24 24"><circle cx="6.5" cy="6" r="4.3" fill="#3fbfbf"/><circle cx="14.5" cy="6" r="4.3" fill="#3fbfbf"/><circle cx="6.5" cy="6" r="2" fill="#444"/><circle cx="14.5" cy="6" r="2" fill="#444"/><rect x="2" y="10" width="15" height="9" rx="1.5" fill="#3fbfbf"/><path d="M17 13 L23 10 V19 L17 16Z" fill="#d4d4d4"/><rect x="6" y="13" width="4" height="3" fill="#444"/></svg>
<svg class="a" style="left:612px;top:49px" width="24" height="24" viewBox="0 0 24 24"><circle cx="6.5" cy="6" r="4.3" fill="#d4d4d4"/><circle cx="14.5" cy="6" r="4.3" fill="#d4d4d4"/><circle cx="6.5" cy="6" r="2" fill="#444"/><circle cx="14.5" cy="6" r="2" fill="#444"/><rect x="2" y="10" width="13" height="9" rx="1.5" fill="#d4d4d4"/><path d="M15 13 L21 10 V17 L15 15Z" fill="#d4d4d4"/><path d="M17 15 V23 M13 19 H21" stroke="#3fbfbf" stroke-width="2.2"/></svg>
<svg class="a" style="left:645px;top:49px" width="24" height="24" viewBox="0 0 24 24"><circle cx="11" cy="9" r="8" fill="#3fbfbf"/><path d="M6.5 14 H15.5 V18 H6.5Z" fill="#3fbfbf"/><path d="M7 19.5 H15 M8 21.5 H14" stroke="#d4d4d4" stroke-width="1.4"/><path d="M6 7 A5 5 0 0 1 10 3.5" stroke="#e8ffff" stroke-width="1.2" fill="none"/></svg>
<svg class="a" style="left:676px;top:49px" width="24" height="24" viewBox="0 0 24 24"><polygon points="12.10,12.00 12.07,12.03 12.07,12.07 12.03,12.07 12.00,12.10 11.97,12.07 11.93,12.07 11.93,12.03 11.90,12.00 11.93,11.97 11.93,11.93 11.97,11.93 12.00,11.90 12.03,11.93 12.07,11.93 12.07,11.97" fill="#d4d4d4"/><circle cx="12" cy="12" r="0.05" fill="#d4d4d4"/><circle cx="12" cy="12" r="6" fill="#d4d4d4"/><path d="M20.0 12.0 L23.0 12.0" stroke="#3fbfbf" stroke-width="2.2"/><path d="M17.7 17.7 L19.8 19.8" stroke="#3fbfbf" stroke-width="2.2"/><path d="M12.0 20.0 L12.0 23.0" stroke="#3fbfbf" stroke-width="2.2"/><path d="M6.3 17.7 L4.2 19.8" stroke="#3fbfbf" stroke-width="2.2"/><path d="M4.0 12.0 L1.0 12.0" stroke="#3fbfbf" stroke-width="2.2"/><path d="M6.3 6.3 L4.2 4.2" stroke="#3fbfbf" stroke-width="2.2"/><path d="M12.0 4.0 L12.0 1.0" stroke="#3fbfbf" stroke-width="2.2"/><path d="M17.7 6.3 L19.8 4.2" stroke="#3fbfbf" stroke-width="2.2"/></svg>
<svg class="a" style="left:708px;top:49px" width="24" height="24" viewBox="0 0 24 24"><path d="M11.5 1 L4 9 H6.5 L3 14 H5.5 L2 20 H11.5Z" fill="#3fbfbf" opacity="0.85"/><path d="M11.5 1 L19 9 H16.5 L20 14 H17.5 L21 20 H11.5Z" fill="#d4d4d4"/><rect x="10.5" y="19" width="2" height="4" fill="#d4d4d4"/></svg>
<svg class="a" style="left:740px;top:49px" width="24" height="24" viewBox="0 0 24 24"><rect x="1" y="1" width="22" height="22" rx="2" fill="#d4d4d4"/><polygon points="18.00,11.00 16.04,13.09 15.95,15.95 13.09,16.04 11.00,18.00 8.91,16.04 6.05,15.95 5.96,13.09 4.00,11.00 5.96,8.91 6.05,6.05 8.91,5.96 11.00,4.00 13.09,5.96 15.95,6.05 16.04,8.91" fill="#444"/><circle cx="11" cy="11" r="3.15" fill="#d4d4d4"/><path d="M13 23 L23 13 V21 Q23 23 21 23Z" fill="#3fbfbf"/></svg>
<svg class="a" style="left:772px;top:49px" width="24" height="24" viewBox="0 0 24 24"><path d="M1 3 Q1 1 3 1 H18 Q23 1 23 6 V21 Q23 23 21 23 H3 Q1 23 1 21Z" fill="none" stroke="#d4d4d4" stroke-width="1.5"/><path d="M8 8 H18 M8 12 H18 M8 16 H18" stroke="#3fbfbf" stroke-width="1.8"/><path d="M5 8 H6 M5 12 H6 M5 16 H6" stroke="#3fbfbf" stroke-width="1.8"/></svg>
<svg class="a" style="left:806px;top:49px" width="24" height="24" viewBox="0 0 24 24"><path d="M2 3 Q2 1 4 1 H18 Q20 1 20 3 V18 L15 23 H4 Q2 23 2 21Z" fill="#d4d4d4"/><path d="M11 4 L6 10 H8 L5 15 H8 L6 18 H16 L14 15 H17 L14 10 H16Z" fill="#444"/><path d="M15 23 V18 H20" fill="#999"/></svg>
<svg class="a" style="left:837px;top:49px" width="24" height="24" viewBox="0 0 24 24"><circle cx="12" cy="13" r="7.5" fill="none" stroke="#d4d4d4" stroke-width="4"/><path d="M5.1 11.9 L1.1 14.6 L3.6 9.8Z" fill="#d4d4d4"/><path d="M6.5 8.7 L1.7 9.1 L6.1 6.2Z" fill="#d4d4d4"/><path d="M9.2 6.6 L4.8 4.7 L10.1 4.2Z" fill="#d4d4d4"/><path d="M12.6 6.0 L9.7 2.2 L14.6 4.4Z" fill="#d4d4d4"/><path d="M15.9 7.2 L15.1 2.5 L18.4 6.7Z" fill="#d4d4d4"/></svg>
<svg class="a" style="left:869px;top:49px" width="24" height="24" viewBox="0 0 24 24"><rect x="5" y="5" width="18" height="18" rx="2" fill="none" stroke="#d4d4d4" stroke-width="1.3"/><rect x="3" y="3" width="18" height="18" rx="2" fill="#444" stroke="#d4d4d4" stroke-width="1.3"/><rect x="1" y="1" width="18" height="18" rx="2" fill="#444" stroke="#d4d4d4" stroke-width="1.5"/><circle cx="10" cy="9.5" r="6" fill="#3fbfbf"/><circle cx="8" cy="7.5" r="1.5" fill="#e0ffff"/></svg>
<svg class="a" style="left:900px;top:49px" width="24" height="24" viewBox="0 0 24 24"><path d="M12 1.5 C20 1.5 23 7 23 10 C23 14 19 12 17 14 C15 16 18 22 11 22 C5 22 1 17 1 11.5 C1 5.5 6 1.5 12 1.5Z" fill="#d4d4d4"/><circle cx="7.5" cy="12" r="3.2" fill="#444"/><circle cx="14" cy="6" r="1.8" fill="#444"/></svg>
<svg class="a" style="left:933px;top:49px" width="24" height="24" viewBox="0 0 24 24"><circle cx="11" cy="9" r="7.5" fill="none" stroke="#d4d4d4" stroke-width="1.6"/><polygon points="15.50,9.00 14.24,10.34 14.18,12.18 12.34,12.24 11.00,13.50 9.66,12.24 7.82,12.18 7.76,10.34 6.50,9.00 7.76,7.66 7.82,5.82 9.66,5.76 11.00,4.50 12.34,5.76 14.18,5.82 14.24,7.66" fill="#d4d4d4"/><circle cx="11" cy="9" r="2.02" fill="#3fbfbf"/><path d="M7 17 H15 M7.5 19.5 H14.5 M8.5 22 H13.5" stroke="#d4d4d4" stroke-width="1.6"/></svg>
<svg class="a" style="left:965px;top:49px" width="24" height="24" viewBox="0 0 24 24"><rect x="1" y="1" width="22" height="22" rx="2" fill="none" stroke="#d4d4d4" stroke-width="1.5"/><rect x="1" y="1" width="22" height="3" fill="#3fbfbf"/><rect x="16" y="5" width="6" height="17" fill="#3fbfbf"/><path d="M17 8 H21 M17 11 H21 M17 14 H21 M17 17 H21" stroke="#444" stroke-width="0.8"/></svg>
<svg class="a" style="left:996px;top:49px" width="24" height="24" viewBox="0 0 24 24"><rect x="1" y="1" width="22" height="22" rx="2" fill="none" stroke="#d4d4d4" stroke-width="1.5"/><rect x="1" y="1" width="22" height="3" fill="#d4d4d4"/><rect x="17" y="5" width="5" height="17" fill="#d4d4d4"/><path d="M5 8 L15 13 L5 18Z" fill="#3fbfbf"/><path d="M18 8 H21 M18 11 H21 M18 14 H21" stroke="#444" stroke-width="0.8"/></svg>
<svg class="a" style="left:1028px;top:49px" width="24" height="24" viewBox="0 0 24 24"><rect x="1" y="1" width="22" height="22" rx="2" fill="none" stroke="#d4d4d4" stroke-width="1.5"/><path d="M12 1 V23 M1 12 H23" stroke="#d4d4d4" stroke-width="1.5"/><path d="M8 7.5 L17 12 L8 16.5Z" fill="#3fbfbf"/></svg>
<svg class="a" style="left:1060px;top:49px" width="24" height="24" viewBox="0 0 24 24"><path d="M3 9 H17 Q17 18 10 18 Q3 18 3 9Z" fill="none" stroke="#d4d4d4" stroke-width="1.8"/><path d="M17 10 Q22 9 21 12 L16 16" stroke="#d4d4d4" stroke-width="1.8" fill="none"/><path d="M6 9 V16 M9 9 V17 M12 9 V17" stroke="#d4d4d4" stroke-width="1.2"/><circle cx="10" cy="6.5" r="1.5" fill="#d4d4d4"/><path d="M1 10 L3 9" stroke="#d4d4d4" stroke-width="1.8"/></svg>
<div class="t" style="left:1105.8px;top:56.6px;font-size:11px;color:#d0d0d0;font-weight:400;letter-spacing:-0.45px;font-family:'Liberation Sans';">Copitor</div>
<svg class="a" style="left:1167px;top:54px" width="14" height="14" viewBox="0 0 14 14"><rect x="0.5" y="0.5" width="13" height="13" rx="2.5" fill="#2d7de0"/><rect x="0.5" y="0.5" width="13" height="13" rx="2.5" fill="none" stroke="#6aa8ff" stroke-width="0.8"/><text x="7" y="10" font-size="7.5" font-weight="700" fill="#fff" text-anchor="middle" font-family="Liberation Sans">RB</text></svg>
<svg class="a" style="left:1194px;top:49px" width="24" height="24" viewBox="0 0 24 24"><circle cx="12" cy="12" r="11" fill="none" stroke="#d4d4d4" stroke-width="1.5"/><path d="M8.5 9 Q8.5 5.5 12 5.5 Q15.5 5.5 15.5 8.5 Q15.5 10.5 13 11.8 Q12 12.4 12 14.5" stroke="#3fbfbf" stroke-width="1.8" fill="none"/><circle cx="12" cy="17.5" r="1.2" fill="#3fbfbf"/></svg>
<div class="a" style="left:1226px;top:48px;width:1px;height:28px;background:#5e5e5e;"></div>
<div class="a" style="left:1228px;top:48px;width:1px;height:28px;background:#3a3a3a;"></div>
<svg class="a" style="left:1235px;top:49px" width="24" height="24" viewBox="0 0 24 24"><path d="M5 6 L1 14 H3 L1 18 H9 L7 14 H9Z" fill="#3fbfbf"/><path d="M13 7 L7 15 H9.5 L6 22 H20 L16.5 15 H19Z" fill="#d4d4d4"/><rect x="12.2" y="21" width="1.6" height="3" fill="#d4d4d4"/><path d="M20 1 L16.5 7 H18 L16 12 H24 L22 7 H23.5Z" fill="#fbb41b"/></svg>
<svg class="a" style="left:1267px;top:49px" width="24" height="24" viewBox="0 0 24 24"><path d="M1 3 Q1 1 3 1 H18 Q23 1 23 6 V21 Q23 23 21 23 H3 Q1 23 1 21Z" fill="none" stroke="#d4d4d4" stroke-width="1.5"/><path d="M5 8 H19" stroke="#fbb41b" stroke-width="1.8"/><path d="M5 12 H19 M5 16 H19" stroke="#3fbfbf" stroke-width="1.8"/></svg>
<svg class="a" style="left:1299px;top:49px" width="24" height="24" viewBox="0 0 24 24"><circle cx="12" cy="12" r="11" fill="none" stroke="#d4d4d4" stroke-width="1.5"/><path d="M8.5 9 Q8.5 5.5 12 5.5 Q15.5 5.5 15.5 8.5 Q15.5 10.5 13 11.8 Q12 12.4 12 14.5" stroke="#3fbfbf" stroke-width="1.8" fill="none"/><circle cx="12" cy="17.5" r="1.2" fill="#3fbfbf"/></svg>
<svg class="a" style="left:13px;top:82px" width="24" height="24" viewBox="0 0 24 24"><path d="M6 8.5 H15 A5.2 5.2 0 0 1 15 19 H12" stroke="#d4d4d4" stroke-width="3.2" fill="none"/><path d="M0.8 8.5 L7 2.8 V14.2Z" fill="#d4d4d4"/></svg>
<svg class="a" style="left:44px;top:82px" width="24" height="24" viewBox="0 0 24 24"><path d="M18 8.5 H9 A5.2 5.2 0 0 0 9 19 H12" stroke="#d4d4d4" stroke-width="3.2" fill="none"/><path d="M23.2 8.5 L17 2.8 V14.2Z" fill="#d4d4d4"/></svg>
<div class="a" style="left:75px;top:86px;width:1px;height:15px;background:#2c2c2c;"></div>
<svg class="a" style="left:83px;top:82px" width="24" height="24" viewBox="0 0 24 24"><rect x="-8.0" y="-4.0" width="16" height="8" rx="4.0" transform="translate(7.2 16.3) rotate(-45)" fill="none" stroke="#d4d4d4" stroke-width="2.6"/><rect x="-8.0" y="-4.0" width="16" height="8" rx="4.0" transform="translate(16.3 7.5) rotate(-45)" fill="none" stroke="#d4d4d4" stroke-width="2.6"/></svg>
<svg class="a" style="left:115px;top:82px" width="24" height="24" viewBox="0 0 24 24"><rect x="-8.0" y="-4.0" width="16" height="8" rx="4.0" transform="translate(7.2 16.3) rotate(-45)" fill="none" stroke="#d4d4d4" stroke-width="2.6"/><rect x="-8.0" y="-4.0" width="16" height="8" rx="4.0" transform="translate(16.3 7.5) rotate(-45)" fill="none" stroke="#d4d4d4" stroke-width="2.6"/><path d="M9 12 L12.5 8.5 M11.5 15.5 L15 12" stroke="#444" stroke-width="4"/><path d="M6 5 L10 9 M14 14.5 L18 18.5" stroke="#3fbfbf" stroke-width="1.8"/></svg>
<svg class="a" style="left:147px;top:82px" width="24" height="24" viewBox="0 0 24 24"><path d="M1 11 Q6 8 11 11 Q16 14 23 11 M1 16 Q6 13 11 16 Q16 19 23 16 M1 21 Q6 18 11 21 Q16 24 23 21" stroke="#d4d4d4" stroke-width="1.6" fill="none"/><rect x="-4.5" y="-2.5" width="9" height="5" rx="2.5" transform="translate(13.8 8.5) rotate(-45)" fill="none" stroke="#fbb41b" stroke-width="1.5"/><rect x="-4.5" y="-2.5" width="9" height="5" rx="2.5" transform="translate(18.3 4.2) rotate(-45)" fill="none" stroke="#fbb41b" stroke-width="1.5"/></svg>
<div class="a" style="left:177px;top:86px;width:1px;height:15px;background:#2c2c2c;"></div>
<div class="a" style="left:181px;top:81px;width:69px;height:16px;background:#606060;"></div>
<div class="t" style="left:186.0px;top:84.2px;font-size:11px;color:#cfcfcf;font-weight:400;letter-spacing:0px;font-family:'Liberation Sans';">All</div>
<svg class="a" style="left:234px;top:85px" width="10" height="8" viewBox="0 0 10 8"><path d="M1 1 H9 L5 7Z" fill="#dcdcdc"/></svg>
<div class="a" style="left:251px;top:79px;width:31px;height:30px;background:#6592cf;border-radius:3px"></div>
<svg class="a" style="left:254px;top:82px" width="24" height="24" viewBox="0 0 24 24"><rect x="2" y="2" width="16" height="16" fill="#d4d4d4" stroke="#555" stroke-width="1"/><path d="M13 11 L22 19 L18 19.5 L20 23.5 L17.5 24 L16 20 L13 22.5Z" fill="#fbb41b"/></svg>
<svg class="a" style="left:287px;top:82px" width="24" height="24" viewBox="0 0 24 24"><path d="M1 3 H18 M1 7 H18 M1 11 H18 M1 15 H12" stroke="#d4d4d4" stroke-width="2.2"/><path d="M13 13 L22 21 L18 21.5 L20 24.5 L17.5 25 L16 22 L13 24.5Z" fill="#fbb41b"/></svg>
<svg class="a" style="left:318px;top:82px" width="24" height="24" viewBox="0 0 24 24"><rect x="2" y="2" width="21" height="21" fill="none" stroke="#3fbfbf" stroke-width="2.2" stroke-dasharray="2.5 2"/><path d="M21 24 L24 21 V24Z" fill="#d4d4d4"/></svg>
<svg class="a" style="left:351px;top:82px" width="24" height="24" viewBox="0 0 24 24"><rect x="1" y="1" width="16" height="21" fill="none" stroke="#d4d4d4" stroke-width="2" stroke-dasharray="2.5 2"/><rect x="10" y="5" width="13" height="14" fill="#3fbfbf"/></svg>
<div class="a" style="left:381px;top:86px;width:1px;height:15px;background:#2c2c2c;"></div>
<svg class="a" style="left:389px;top:82px" width="24" height="24" viewBox="0 0 24 24"><path d="M12 1 L16 5.5 H13.2 V10.8 H18.5 V8 L23 12 L18.5 16 V13.2 H13.2 V18.5 H16 L12 23 L8 18.5 H10.8 V13.2 H5.5 V16 L1 12 L5.5 8 V10.8 H10.8 V5.5 H8Z" fill="#d4d4d4"/></svg>
<svg class="a" style="left:421px;top:82px" width="24" height="24" viewBox="0 0 24 24"><path d="M18.5 12 A7.5 7.5 0 1 1 14 5" stroke="#d4d4d4" stroke-width="2.6" fill="none"/><path d="M12 0.5 L19 5 L12.5 9.5Z" fill="#d4d4d4"/></svg>
<svg class="a" style="left:453px;top:82px" width="24" height="24" viewBox="0 0 24 24"><rect x="1" y="1" width="22" height="22" fill="none" stroke="#3fbfbf" stroke-width="2" stroke-dasharray="2.5 1.8"/><rect x="1.5" y="13" width="9.5" height="10" fill="#d4d4d4"/><path d="M13 6 H18 V11" stroke="#3fbfbf" stroke-width="1.8" fill="none"/><path d="M21 24 L24 21 V24Z" fill="#d4d4d4"/></svg>
<svg class="a" style="left:485px;top:82px" width="24" height="24" viewBox="0 0 24 24"><circle cx="10" cy="14" r="9" fill="#d4d4d4"/><circle cx="18.5" cy="5.5" r="5" fill="#3fbfbf"/><path d="M8 16 L18 6" stroke="#fbb41b" stroke-width="2"/><path d="M6 18 L8 13 L11 16Z" fill="#fbb41b"/><path d="M21 24 L24 21 V24Z" fill="#d4d4d4"/></svg>
<div class="a" style="left:513px;top:81px;width:69px;height:16px;background:#606060;"></div>
<div class="t" style="left:518.5px;top:84.2px;font-size:11px;color:#cfcfcf;font-weight:400;letter-spacing:-0.2px;font-family:'Liberation Sans';">View</div>
<svg class="a" style="left:566px;top:85px" width="10" height="8" viewBox="0 0 10 8"><path d="M1 1 H9 L5 7Z" fill="#dcdcdc"/></svg>
<svg class="a" style="left:587px;top:82px" width="24" height="24" viewBox="0 0 24 24"><path d="M1 1 H7 V17 L4 20 L1 17Z" fill="#d4d4d4"/><path d="M14 1 H20 V14 L17 17 L14 14Z" fill="#d4d4d4"/><path d="M4 15 V24 M0 19.5 H8" stroke="#3fbfbf" stroke-width="1.8"/><path d="M17 12 V20 M13 16 H21" stroke="#3fbfbf" stroke-width="1.8"/><path d="M21 24 L24 21 V24Z" fill="#d4d4d4"/></svg>
<div class="a" style="left:617px;top:86px;width:1px;height:15px;background:#2c2c2c;"></div>
<svg class="a" style="left:624px;top:82px" width="24" height="24" viewBox="0 0 24 24"><rect x="8.5" y="1" width="6" height="6" fill="#3fbfbf"/><path d="M11.5 7 V20 M3 13 H20" stroke="#d4d4d4" stroke-width="2"/><rect x="1" y="10" width="5" height="6" fill="#d4d4d4"/><rect x="18" y="10" width="5" height="6" fill="#d4d4d4"/><rect x="9" y="18" width="5" height="5" fill="#d4d4d4"/></svg>
<div class="a" style="left:653px;top:79px;width:31px;height:30px;background:#6592cf;border-radius:3px"></div>
<svg class="a" style="left:657px;top:83px" width="24" height="24" viewBox="0 0 24 24"><rect x="1" y="1" width="22" height="22" rx="1.5" fill="#d4d4d4" stroke="#444" stroke-width="1.2"/><path d="M9 4 L13.5 8 H11 V12 H7 V8 H4.5Z" fill="#333"/></svg>
<div class="a" style="left:688px;top:86px;width:1px;height:15px;background:#2c2c2c;"></div>
<svg class="a" style="left:694px;top:82px" width="24" height="24" viewBox="0 0 24 24"><text x="0" y="21" font-size="21" font-weight="700" fill="#d4d4d4" font-family="Liberation Sans">3</text><path d="M13 7 A5 5 0 1 1 22 10 L19 15" stroke="#fbb41b" stroke-width="2.2" fill="none" stroke-dasharray="3 1.3"/><path d="M21 24 L24 21 V24Z" fill="#d4d4d4"/></svg>
<svg class="a" style="left:726px;top:82px" width="24" height="24" viewBox="0 0 24 24"><path d="M3 5 V21 H21" stroke="#d4d4d4" stroke-width="2" fill="none"/><path d="M3 12 Q10 12 10 21" stroke="#d4d4d4" stroke-width="1.8" fill="none"/><path d="M13 7 A5 5 0 1 1 22 10 L19 15" stroke="#fbb41b" stroke-width="2.2" fill="none" stroke-dasharray="3 1.3"/></svg>
<svg class="a" style="left:758px;top:82px" width="24" height="24" viewBox="0 0 24 24"><circle cx="5" cy="7" r="3" fill="none" stroke="#d4d4d4" stroke-width="2"/><circle cx="16" cy="19" r="3" fill="none" stroke="#d4d4d4" stroke-width="2"/><path d="M4 22 L17 3" stroke="#d4d4d4" stroke-width="2.2"/><path d="M13 7 A5 5 0 1 1 22 10 L19 15" stroke="#fbb41b" stroke-width="2.2" fill="none" stroke-dasharray="3 1.3"/></svg>
<svg class="a" style="left:790px;top:82px" width="24" height="24" viewBox="0 0 24 24"><path d="M7 3 L13 10 H1Z" fill="#d4d4d4"/><path d="M7 23 L13 15 H1Z" fill="#d4d4d4"/><path d="M13 7 A5 5 0 1 1 22 10 L19 15" stroke="#fbb41b" stroke-width="2.2" fill="none" stroke-dasharray="3 1.3"/></svg>
<div class="a" style="left:822px;top:86px;width:1px;height:15px;background:#2c2c2c;"></div>
<svg class="a" style="left:829px;top:82px" width="24" height="24" viewBox="0 0 24 24"><text x="0" y="20" font-size="19" fill="#d4d4d4" font-family="Liberation Sans">{}</text><path d="M12 17 L21 6" stroke="#fbb41b" stroke-width="2.4"/><path d="M11 19 L12 15.5 L13.5 17Z" fill="#fbb41b"/></svg>
<div class="a" style="left:857px;top:81px;width:119px;height:16px;background:#606060;"></div>
<div class="t" style="left:861.0px;top:84.2px;font-size:11px;color:#cfcfcf;font-weight:400;letter-spacing:-0.35px;font-family:'Liberation Sans';">Create Selection Set</div>
<svg class="a" style="left:960px;top:85px" width="10" height="8" viewBox="0 0 10 8"><path d="M1 1 H9 L5 7Z" fill="#dcdcdc"/></svg>
<div class="a" style="left:980px;top:86px;width:1px;height:15px;background:#2c2c2c;"></div>
<svg class="a" style="left:987px;top:82px" width="24" height="24" viewBox="0 0 24 24"><path d="M1 3 L8 7 V23 L1 19Z" fill="#d4d4d4"/><path d="M22 3 L15 7 V23 L22 19Z" fill="#3fbfbf"/><path d="M11.5 1 V24" stroke="#d4d4d4" stroke-width="1.8" stroke-dasharray="3 2"/></svg>
<svg class="a" style="left:1018px;top:82px" width="24" height="24" viewBox="0 0 24 24"><path d="M3 1 V24" stroke="#3fbfbf" stroke-width="1.8" stroke-dasharray="3 2"/><rect x="8" y="3" width="11" height="7" fill="#d4d4d4"/><rect x="8" y="14" width="16" height="7" fill="#d4d4d4"/><path d="M21 24 L24 21 V24Z" fill="#d4d4d4"/></svg>
<div class="a" style="left:1049px;top:86px;width:1px;height:15px;background:#2c2c2c;"></div>
<svg class="a" style="left:1058px;top:82px" width="24" height="24" viewBox="0 0 24 24"><rect x="1" y="1" width="20" height="23" fill="#d4d4d4"/><path d="M3 4 H19" stroke="#444" stroke-width="1"/><path d="M3 9 H7 M10 9 H19 M3 14 H7 M10 14 H19 M3 19 H7 M10 19 H19" stroke="#444" stroke-width="2"/></svg>
<svg class="a" style="left:1090px;top:82px" width="24" height="24" viewBox="0 0 24 24"><rect x="1" y="1" width="20" height="23" fill="#d4d4d4"/><path d="M3 4 H19" stroke="#444" stroke-width="1"/><path d="M11 6 L18 9.5 L11 13 L4 9.5Z M4 13 L11 16.5 L18 13 M4 16.5 L11 20 L18 16.5" fill="#444" stroke="#444" stroke-width="1.2"/></svg>
<div class="a" style="left:1120px;top:86px;width:1px;height:15px;background:#2c2c2c;"></div>
<svg class="a" style="left:1127px;top:82px" width="24" height="24" viewBox="0 0 24 24"><path d="M1 1 H12 V5 H23 V24 H1Z" fill="#d4d4d4"/><rect x="13" y="1" width="4" height="3" fill="#d4d4d4"/><rect x="18" y="1" width="5" height="3" fill="#d4d4d4"/><path d="M4 12 H9 M14 12 H19 M4 17 H9 M14 17 H19" stroke="#444" stroke-width="2.2"/></svg>
<svg class="a" style="left:1159px;top:82px" width="24" height="24" viewBox="0 0 24 24"><rect x="1" y="1" width="22" height="23" fill="#d4d4d4"/><path d="M3 3 H5 M6 3 H8 M9 3 H11" stroke="#444" stroke-width="1.5"/><path d="M1 5 H23" stroke="#444" stroke-width="1"/><path d="M3 15 Q7 8 11 14 Q15 20 20 13" stroke="#3fbfbf" stroke-width="2" fill="none"/></svg>
<svg class="a" style="left:1190px;top:82px" width="24" height="24" viewBox="0 0 24 24"><rect x="1" y="1" width="22" height="3" fill="#d4d4d4"/><rect x="1" y="19" width="22" height="5" fill="#3fbfbf"/><path d="M12 6 V14" stroke="#3fbfbf" stroke-width="2.6"/><path d="M7.5 12 H16.5 L12 16.5Z" fill="#3fbfbf"/></svg>
<div class="a" style="left:1222px;top:86px;width:1px;height:15px;background:#2c2c2c;"></div>
<svg class="a" style="left:1229px;top:82px" width="24" height="24" viewBox="0 0 24 24"><circle cx="4" cy="4" r="3" fill="#d4d4d4" opacity="0.8"/><circle cx="4" cy="20" r="3" fill="#d4d4d4" opacity="0.8"/><path d="M7 4 H13 V9 M7 20 H13 V15" stroke="#3fbfbf" stroke-width="1.5" fill="none"/><path d="M14 9 H17 V12 H20 V9 H23 V12 H20 V15 H23 V18 H20 V15 H17 V18 H14 V15 H17 V12 H14Z" fill="#d4d4d4"/><path d="M21 24 L24 21 V24Z" fill="#d4d4d4"/></svg>
<div class="a" style="left:1260px;top:86px;width:1px;height:15px;background:#2c2c2c;"></div>
<svg class="a" style="left:1266px;top:82px" width="24" height="24" viewBox="0 0 24 24"><path d="M1 8 L5 11 Q6 17 12 17 Q17 17 18 12 L19 9 Q14 5 10 7 Q5 6 1 8Z" fill="#d4d4d4"/><circle cx="12" cy="5" r="1.6" fill="#d4d4d4"/><rect x="7" y="6" width="10" height="2" rx="1" fill="#d4d4d4"/><polygon points="23.00,17.00 21.32,18.79 21.24,21.24 18.79,21.32 17.00,23.00 15.21,21.32 12.76,21.24 12.68,18.79 11.00,17.00 12.68,15.21 12.76,12.76 15.21,12.68 17.00,11.00 18.79,12.68 21.24,12.76 21.32,15.21" fill="#fbb41b"/><circle cx="17" cy="17" r="2.70" fill="#444"/></svg>
<svg class="a" style="left:1299px;top:82px" width="24" height="24" viewBox="0 0 24 24"><rect x="1" y="1" width="22" height="3" fill="#d4d4d4"/><path d="M2.5 2.5 H4 M5.5 2.5 H7 M8.5 2.5 H10" stroke="#444" stroke-width="1.2"/><rect x="1" y="5" width="22" height="19" fill="#3fbfbf"/><path d="M3 12 L7 14 Q8 20 13 20 Q18 20 18.5 15 Q21 16 20 13 Q19 11 17.5 12.5 Q15 9 11 10 Q7 10 3 12Z" fill="#d4d4d4"/><circle cx="12" cy="8.5" r="1.4" fill="#d4d4d4"/></svg>
<svg class="a" style="left:1331px;top:82px" width="24" height="24" viewBox="0 0 24 24"><path d="M1 8 L5 11 Q6 17 12 17 Q17 17 18 12 L19 9 Q14 5 10 7 Q5 6 1 8Z" fill="#d4d4d4"/><circle cx="12" cy="5" r="1.6" fill="#d4d4d4"/><rect x="7" y="6" width="10" height="2" rx="1" fill="#d4d4d4"/><path d="M19 10 L14 18 H17.5 L15 24 L22 15 H18.5 L21 10Z" fill="#3fbfbf"/><path d="M21 24 L24 21 V24Z" fill="#d4d4d4"/></svg>
<div class="a" style="left:2px;top:112px;width:28px;height:3px;background:#5a5a5a;"></div>
<div class="a" style="left:35px;top:112px;width:36px;height:1px;background:repeating-linear-gradient(90deg,#8c8c8c 0 1px,transparent 1px 2px)"></div>
<div class="a" style="left:36px;top:114px;width:35px;height:1px;background:repeating-linear-gradient(90deg,#8c8c8c 0 1px,transparent 1px 2px)"></div>
<svg class="a" style="left:5px;top:122px" width="24" height="24" viewBox="0 0 24 24"><path d="M2 9 Q0 11 2.5 14 Q4 20 11 21 Q18 21 20 15 Q23 14 22 10 Q21 8 19.5 9 L18 10 Q16 7 11 7 Q6 7 4 10Z" fill="#d4d4d4"/><ellipse cx="11" cy="7" rx="5" ry="1.6" fill="#d4d4d4"/><circle cx="11" cy="4" r="1.5" fill="#d4d4d4"/><path d="M21 24 L24 21 V24Z" fill="#d4d4d4"/></svg>
<svg class="a" style="left:5px;top:153px" width="24" height="24" viewBox="0 0 24 24"><path d="M2 11 A10 10 0 0 1 21 11" stroke="#d4d4d4" stroke-width="3.2" fill="none"/><path d="M3 21 Q0 21 0.5 17.5 Q1 14.5 4.5 15 Q5.5 11 10 11.5 Q13 10 15.5 13 Q19 12.5 20 16 Q23 17 22 20 Q21.5 21.5 19 21.5Z" fill="#d4d4d4"/></svg>
<svg class="a" style="left:5px;top:184px" width="24" height="24" viewBox="0 0 24 24"><rect x="1" y="2" width="22" height="20" fill="#d4d4d4"/><path d="M1 4.5 H23" stroke="#444" stroke-width="0.8"/><path d="M12 8 L17 10.5 V16.5 L12 19 L7 16.5 V10.5Z" fill="#444"/><path d="M7 10.5 L12 13 L17 10.5 M12 13 V19" stroke="#d4d4d4" stroke-width="0.9" fill="none"/></svg>
<div class="a" style="left:5px;top:211px;width:27px;height:1px;background:#2c2c2c;"></div>
<svg class="a" style="left:5px;top:222px" width="24" height="24" viewBox="0 0 24 24"><circle cx="15" cy="8.5" r="7.5" fill="#fbb41b"/><rect x="11" y="15" width="8" height="4" fill="#fbb41b"/><rect x="10.5" y="19" width="9" height="3" rx="1.5" fill="#d4d4d4"/><rect x="1" y="6" width="13" height="13" fill="#444"/><rect x="1.5" y="7" width="11" height="11" fill="none" stroke="#d4d4d4" stroke-width="1.4"/><path d="M4 10 H10 M4 12.5 H10 M4 15 H10" stroke="#d4d4d4" stroke-width="1.2"/></svg>
<svg class="a" style="left:5px;top:254px" width="24" height="24" viewBox="0 0 24 24"><circle cx="17" cy="5" r="4" fill="#d4d4d4"/><rect x="8" y="9" width="11" height="12" fill="#d4d4d4"/><path d="M19 13 L23 9 V21 L19 17Z" fill="#d4d4d4"/><rect x="1" y="7" width="12" height="12" fill="#444"/><rect x="1.5" y="8" width="10" height="10" fill="none" stroke="#d4d4d4" stroke-width="1.4"/><path d="M4 11 H9 M4 13.5 H9 M4 16 H9" stroke="#d4d4d4" stroke-width="1.2"/></svg>
<div class="a" style="left:5px;top:281px;width:27px;height:1px;background:#2c2c2c;"></div>
<svg class="a" style="left:5px;top:292px" width="24" height="24" viewBox="0 0 24 24"><circle cx="7" cy="5" r="4.5" fill="#d4d4d4"/><circle cx="16" cy="5" r="4.5" fill="#d4d4d4"/><circle cx="7" cy="5" r="2" fill="#444"/><circle cx="16" cy="5" r="2" fill="#444"/><rect x="2" y="10" width="15" height="12" rx="1.5" fill="#d4d4d4"/><path d="M17 14 L23 10 V22 L17 18Z" fill="#d4d4d4"/></svg>
<div class="a" style="left:5px;top:320px;width:27px;height:1px;background:#2c2c2c;"></div>
<svg class="a" style="left:5px;top:331px" width="24" height="24" viewBox="0 0 24 24"><path d="M2 3 H22 L19 9 H5Z" fill="#fbb41b"/><path d="M12 9 V19" stroke="#fbb41b" stroke-width="1.5"/><path d="M9 16 L12 20 L15 16" stroke="#fbb41b" stroke-width="1.5" fill="none"/></svg>
<svg class="a" style="left:5px;top:362px" width="24" height="24" viewBox="0 0 24 24"><path d="M2 18 A10 8.5 0 0 1 22 18Z" fill="#fbb41b"/><path d="M12 9.5 Q9 13 10 18" stroke="#444" stroke-width="1.2" fill="none"/></svg>
<svg class="a" style="left:5px;top:394px" width="24" height="24" viewBox="0 0 24 24"><circle cx="12" cy="12" r="10.5" fill="#fbb41b"/><path d="M2 14 Q12 16 21 7" stroke="#444" stroke-width="1.2" fill="none"/></svg>
<svg class="a" style="left:5px;top:425px" width="24" height="24" viewBox="0 0 24 24"><polygon points="12,1 21.5,6.5 21.5,17.5 12,23 2.5,17.5 2.5,6.5" fill="none" stroke="#fbb41b" stroke-width="1.5"/><polygon points="12,5 18,16 6,16" fill="none" stroke="#fbb41b" stroke-width="1.2"/><path d="M12 1 L12 5 M2.5 6.5 L6 16 M21.5 6.5 L18 16 M6 16 L12 23 L18 16 M2.5 17.5 L6 16 M21.5 17.5 L18 16 M2.5 6.5 L12 5 L21.5 6.5" stroke="#fbb41b" stroke-width="1.1" fill="none"/></svg>
<svg class="a" style="left:5px;top:455px" width="24" height="24" viewBox="0 0 24 24"><ellipse cx="12" cy="6" rx="11" ry="3.2" fill="#fbb41b"/><path d="M12 9 V19" stroke="#fbb41b" stroke-width="1.5"/><path d="M9 16 L12 20 L15 16" stroke="#fbb41b" stroke-width="1.5" fill="none"/></svg>
<svg class="a" style="left:5px;top:487px" width="24" height="24" viewBox="0 0 24 24"><path d="M8.5 8 A3.5 4 0 0 1 15.5 8 V9.5 H8.5Z" fill="#fbb41b"/><path d="M8.5 10 Q3 12 2 18 Q3 23 8 21 Q12 17 12 10 Q12 17 16 21 Q21 23 22 18 Q21 12 15.5 10" stroke="#fbb41b" stroke-width="1.5" fill="none"/></svg>
<svg class="a" style="left:5px;top:518px" width="24" height="24" viewBox="0 0 24 24"><circle cx="12" cy="12" r="6" fill="#fbb41b"/><path d="M20.0 12.0 L23.0 12.0" stroke="#fbb41b" stroke-width="2.2"/><path d="M17.7 17.7 L19.8 19.8" stroke="#fbb41b" stroke-width="2.2"/><path d="M12.0 20.0 L12.0 23.0" stroke="#fbb41b" stroke-width="2.2"/><path d="M6.3 17.7 L4.2 19.8" stroke="#fbb41b" stroke-width="2.2"/><path d="M4.0 12.0 L1.0 12.0" stroke="#fbb41b" stroke-width="2.2"/><path d="M6.3 6.3 L4.2 4.2" stroke="#fbb41b" stroke-width="2.2"/><path d="M12.0 4.0 L12.0 1.0" stroke="#fbb41b" stroke-width="2.2"/><path d="M17.7 6.3 L19.8 4.2" stroke="#fbb41b" stroke-width="2.2"/></svg>
<svg class="a" style="left:5px;top:549px" width="24" height="24" viewBox="0 0 24 24"><path d="M17.0 12.0 L23.0 12.0" stroke="#fbb41b" stroke-width="1.6"/><path d="M16.3 14.5 L21.5 17.5" stroke="#fbb41b" stroke-width="1.6"/><path d="M14.5 16.3 L17.5 21.5" stroke="#fbb41b" stroke-width="1.6"/><path d="M12.0 17.0 L12.0 23.0" stroke="#fbb41b" stroke-width="1.6"/><path d="M9.5 16.3 L6.5 21.5" stroke="#fbb41b" stroke-width="1.6"/><path d="M7.7 14.5 L2.5 17.5" stroke="#fbb41b" stroke-width="1.6"/><path d="M7.0 12.0 L1.0 12.0" stroke="#fbb41b" stroke-width="1.6"/><path d="M7.7 9.5 L2.5 6.5" stroke="#fbb41b" stroke-width="1.6"/><path d="M9.5 7.7 L6.5 2.5" stroke="#fbb41b" stroke-width="1.6"/><path d="M12.0 7.0 L12.0 1.0" stroke="#fbb41b" stroke-width="1.6"/><path d="M14.5 7.7 L17.5 2.5" stroke="#fbb41b" stroke-width="1.6"/><path d="M16.3 9.5 L21.5 6.5" stroke="#fbb41b" stroke-width="1.6"/></svg>
<div class="a" style="left:5px;top:576px;width:27px;height:1px;background:#2c2c2c;"></div>
<svg class="a" style="left:5px;top:588px" width="24" height="24" viewBox="0 0 24 24"><path d="M2 6 L10 2 L22 5 V16 L14 22 L2 19Z" fill="#d4d4d4"/><path d="M2 6 L14 9 L22 5 M14 9 V22 M2 19 L10 2" stroke="#444" stroke-width="1.2" fill="none"/></svg>
<svg class="a" style="left:5px;top:619px" width="24" height="24" viewBox="0 0 24 24"><circle cx="13" cy="13" r="10" fill="#d4d4d4"/><path d="M3 12 Q6 3 14 4 Q11 12 3 12Z" fill="#3fbfbf"/><path d="M3 11 A10 10 0 0 1 12 2" stroke="#d4d4d4" stroke-width="1.2" stroke-dasharray="1.5 1.2" fill="none"/></svg>
<svg class="a" style="left:5px;top:650px" width="24" height="24" viewBox="0 0 24 24"><path d="M12 1 L15 5 M12 1 L9 5 M12 1 V13" stroke="#d4d4d4" stroke-width="1.5" fill="none"/><path d="M2 21 L7 11 H17 L22 21Z M2 21 L12 13 L22 21 M7 11 L12 13 L17 11" stroke="#d4d4d4" stroke-width="1.5" fill="none"/></svg>
<svg class="a" style="left:5px;top:681px" width="24" height="24" viewBox="0 0 24 24"><path d="M2 2 L22 5 V19 L2 22Z" fill="#d4d4d4"/><ellipse cx="9" cy="9" rx="2.5" ry="3" fill="#3fbfbf"/><ellipse cx="16" cy="9" rx="2.5" ry="3" fill="#3fbfbf"/><ellipse cx="9" cy="16" rx="2.5" ry="3" fill="#3fbfbf"/><ellipse cx="16" cy="16" rx="2.5" ry="3" fill="#3fbfbf"/></svg>
<svg class="a" style="left:5px;top:712px" width="24" height="24" viewBox="0 0 24 24"><path d="M1 20 Q2 11 5 8 Q5 15 8 18 Q8 9 12 4 Q11 13 13 18 Q15 10 19 7 Q16 14 17 18 Q19 13 23 12 Q20 16 21 20Z" fill="#d4d4d4"/></svg>
<svg class="a" style="left:5px;top:743px" width="24" height="24" viewBox="0 0 24 24"><path d="M2 7 L8 2 H22 V17 L16 22 H2Z" fill="none" stroke="#3fbfbf" stroke-width="1.6"/><path d="M2 7 H16 V22 M16 7 L22 2" stroke="#3fbfbf" stroke-width="1.4" fill="none"/><path d="M9 20 Q4 18 6 13 Q7 10 9 9 Q9 12 11 13 Q13 11 12 8 Q16 11 15 16 Q14 20 9 20Z" fill="#d4d4d4"/></svg>
<div class="a" style="left:5px;top:771px;width:27px;height:1px;background:#2c2c2c;"></div>
<div class="a" style="left:6px;top:783px;width:22px;height:22px;border-radius:50%;background:radial-gradient(circle at 40% 35%,#e8e8e8,#9a9a9a 70%,#6a6a6a)"></div>
<svg class="a" style="left:5px;top:782px" width="24" height="24" viewBox="0 0 24 24"><path d="M21 24 L24 21 V24Z" fill="#d4d4d4"/></svg>
<svg class="a" style="left:5px;top:812px" width="24" height="24" viewBox="0 0 24 24"><circle cx="6.5" cy="6.5" r="5.3" fill="#3fbfbf"/><circle cx="17.5" cy="6.5" r="5.3" fill="#d4d4d4"/><circle cx="6.5" cy="17.5" r="5.3" fill="#d4d4d4"/><circle cx="17.5" cy="17.5" r="5.3" fill="#fbb41b"/></svg>
<svg class="a" style="left:5px;top:843px" width="24" height="24" viewBox="0 0 24 24"><path d="M12 1.5 C20 1.5 23 7 23 10 C23 14 19 12 17 14 C15 16 18 22 11 22 C5 22 1 17 1 11.5 C1 5.5 6 1.5 12 1.5Z" fill="#d4d4d4"/><circle cx="7.5" cy="12" r="3.2" fill="#444"/><circle cx="14" cy="6" r="1.8" fill="#444"/></svg>
<svg class="a" style="left:5px;top:875px" width="24" height="24" viewBox="0 0 24 24"><rect x="9" y="8" width="14" height="15" fill="none" stroke="#3fbfbf" stroke-width="1.5"/><circle cx="8" cy="8" r="7" fill="#d4d4d4"/><path d="M1 9 Q8 12 15 8" stroke="#444" stroke-width="1.2" fill="none"/><ellipse cx="16" cy="19" rx="5" ry="1.5" fill="#d4d4d4"/></svg>
<div class="a" style="left:5px;top:902px;width:27px;height:1px;background:#2c2c2c;"></div>
<svg class="a" style="left:5px;top:913px" width="24" height="24" viewBox="0 0 24 24"><rect x="1" y="2" width="10" height="19" fill="none" stroke="#d4d4d4" stroke-width="1.3"/><rect x="2.5" y="10" width="7" height="9" fill="#3fbfbf"/><path d="M3 5 H9 M3 7.5 H9" stroke="#d4d4d4" stroke-width="1"/><path d="M11 15 L16 11 V19Z" fill="#fbb41b"/><rect x="16" y="10" width="6" height="10" rx="1" fill="none" stroke="#d4d4d4" stroke-width="1.3"/><rect x="18" y="12" width="2" height="6" fill="#3fbfbf"/></svg>
<div class="a" style="left:2px;top:941px;width:28px;height:3px;background:#5a5a5a;"></div>
<div class="a" style="left:43px;top:841px;width:19px;height:19px;background:#424242;border-radius:3px"></div>
<svg class="a" style="left:49px;top:845px" width="10" height="12" viewBox="0 0 10 12"><path d="M1 1 L8 6 L1 11Z" fill="#cfcfcf"/></svg>
<div class="a" style="left:37px;top:871px;width:36px;height:44px;background:#3f7fd9;border-radius:4px 0 0 4px"></div>
<div class="a" style="left:40px;top:879px;width:31px;height:27px;background:linear-gradient(#5d6470,#55606c);border:1px solid #2e3640"></div>
<div class="a" style="left:35px;top:924px;width:1px;height:31px;background:repeating-linear-gradient(180deg,#8c8c8c 0 1px,transparent 1px 2px)"></div>
<div class="a" style="left:37px;top:925px;width:1px;height:30px;background:repeating-linear-gradient(180deg,#8c8c8c 0 1px,transparent 1px 2px)"></div>
<div class="a" style="left:1710px;top:112px;width:208px;height:1px;background:repeating-linear-gradient(90deg,#8c8c8c 0 1px,transparent 1px 2px)"></div>
<div class="a" style="left:1711px;top:114px;width:207px;height:1px;background:repeating-linear-gradient(90deg,#8c8c8c 0 1px,transparent 1px 2px)"></div>
<div class="a" style="left:1708px;top:119px;width:210px;height:27px;background:#3a3a3a;"></div>
<div class="a" style="left:1708px;top:119px;width:31px;height:27px;background:#474747;"></div>
<div class="a" style="left:1739.5px;top:121px;width:1px;height:23px;background:#353535;"></div>
<div class="a" style="left:1771.0px;top:121px;width:1px;height:23px;background:#353535;"></div>
<div class="a" style="left:1802.5px;top:121px;width:1px;height:23px;background:#353535;"></div>
<div class="a" style="left:1834.0px;top:121px;width:1px;height:23px;background:#353535;"></div>
<div class="a" style="left:1865.5px;top:121px;width:1px;height:23px;background:#353535;"></div>
<div class="a" style="left:1897.0px;top:121px;width:1px;height:23px;background:#353535;"></div>
<svg class="a" style="left:1712px;top:121px" width="24" height="24" viewBox="0 0 24 24"><path d="M11.5 3 V20 M3 11.5 H20" stroke="#e0e0e0" stroke-width="3"/></svg>
<svg class="a" style="left:1744px;top:121px" width="24" height="24" viewBox="0 0 24 24"><rect x="4" y="4" width="15" height="15" fill="none" stroke="#3aa3a3" stroke-width="1.6"/><rect x="2.5" y="2.5" width="3" height="3" fill="#3a3a3a" stroke="#3aa3a3" stroke-width="1"/><rect x="17.5" y="2.5" width="3" height="3" fill="#3a3a3a" stroke="#3aa3a3" stroke-width="1"/><rect x="2.5" y="17.5" width="3" height="3" fill="#3a3a3a" stroke="#3aa3a3" stroke-width="1"/><rect x="17.5" y="17.5" width="3" height="3" fill="#3a3a3a" stroke="#3aa3a3" stroke-width="1"/><path d="M5 18 Q6 6 18 5" stroke="#9a9a9a" stroke-width="1.2" fill="none"/></svg>
<svg class="a" style="left:1776px;top:121px" width="24" height="24" viewBox="0 0 24 24"><rect x="6" y="3" width="11" height="5" fill="#9a9a9a"/><path d="M11.5 8 V13 M5 13 H18 M5 13 V16 M18 13 V16" stroke="#3aa3a3" stroke-width="1.6" fill="none"/><rect x="2" y="16" width="6" height="5" fill="#3aa3a3"/><rect x="15" y="16" width="6" height="5" fill="#3aa3a3"/></svg>
<svg class="a" style="left:1808px;top:121px" width="24" height="24" viewBox="0 0 24 24"><circle cx="8" cy="12" r="7" fill="none" stroke="#3aa3a3" stroke-width="1.3"/><circle cx="10" cy="12" r="7" fill="none" stroke="#3aa3a3" stroke-width="1.3"/><circle cx="14" cy="12" r="7.5" fill="#a6a6a6"/></svg>
<svg class="a" style="left:1840px;top:121px" width="24" height="24" viewBox="0 0 24 24"><rect x="2" y="4" width="19" height="11" fill="#a6a6a6"/><rect x="9" y="15" width="5" height="3" fill="#a6a6a6"/><rect x="6" y="18" width="11" height="2" fill="#a6a6a6"/></svg>
<svg class="a" style="left:1872px;top:121px" width="24" height="24" viewBox="0 0 24 24"><path d="M3 19 L12 10" stroke="#a6a6a6" stroke-width="3"/><circle cx="15" cy="7" r="5" fill="#a6a6a6"/><path d="M15 7 L20 2" stroke="#3a3a3a" stroke-width="3"/></svg>
<div class="a" style="left:1711px;top:151px;width:22px;height:22px;background:#6592cf;border-radius:3px"></div>
<svg class="a" style="left:1710px;top:150px" width="24" height="24" viewBox="0 0 24 24"><circle cx="12" cy="12" r="6.8" fill="#d8d8d8" stroke="#555" stroke-width="0.6"/></svg>
<svg class="a" style="left:1733px;top:150px" width="24" height="24" viewBox="0 0 24 24"><circle cx="9" cy="10" r="5.5" fill="#d0d0d0"/><rect x="9" y="10" width="9" height="9" fill="#d0d0d0" stroke="#444" stroke-width="1"/></svg>
<svg class="a" style="left:1756px;top:150px" width="24" height="24" viewBox="0 0 24 24"><circle cx="12" cy="9" r="5.3" fill="#d0d0d0"/><rect x="9.5" y="13" width="5" height="3" fill="#d0d0d0"/><path d="M9.5 17 H14.5 M10 19 H14" stroke="#d0d0d0" stroke-width="1.2"/></svg>
<svg class="a" style="left:1779px;top:150px" width="24" height="24" viewBox="0 0 24 24"><rect x="2" y="7" width="13" height="10" rx="1" fill="#d0d0d0"/><path d="M15 10 L21 7 V17 L15 14Z" fill="#d0d0d0"/></svg>
<svg class="a" style="left:1802px;top:150px" width="24" height="24" viewBox="0 0 24 24"><path d="M4 4 V20 H20Z" fill="none" stroke="#d0d0d0" stroke-width="1.8"/><path d="M7 12 V17 H12Z" fill="#d0d0d0"/><path d="M4 8 H6 M4 12 H6 M4 16 H6" stroke="#d0d0d0" stroke-width="1"/></svg>
<svg class="a" style="left:1825px;top:150px" width="24" height="24" viewBox="0 0 24 24"><path d="M3 7 Q7 4 11 7 Q15 10 20 7 M3 12 Q7 9 11 12 Q15 15 20 12 M3 17 Q7 14 11 17 Q15 20 20 17" stroke="#d0d0d0" stroke-width="1.6" fill="none"/></svg>
<svg class="a" style="left:1848px;top:150px" width="24" height="24" viewBox="0 0 24 24"><polygon points="13.00,8.00 11.60,9.49 11.54,11.54 9.49,11.60 8.00,13.00 6.51,11.60 4.46,11.54 4.40,9.49 3.00,8.00 4.40,6.51 4.46,4.46 6.51,4.40 8.00,3.00 9.49,4.40 11.54,4.46 11.60,6.51" fill="#d0d0d0"/><circle cx="8" cy="8" r="2.25" fill="#444"/><polygon points="20.50,15.50 19.10,16.99 19.04,19.04 16.99,19.10 15.50,20.50 14.01,19.10 11.96,19.04 11.90,16.99 10.50,15.50 11.90,14.01 11.96,11.96 14.01,11.90 15.50,10.50 16.99,11.90 19.04,11.96 19.10,14.01" fill="#d0d0d0"/><circle cx="15.5" cy="15.5" r="2.25" fill="#444"/></svg>
<div class="a" style="left:1710px;top:178px;width:207px;height:21px;background:#606060;"></div>
<div class="t" style="left:1716.0px;top:183.2px;font-size:11px;color:#dadada;font-weight:400;letter-spacing:-0.3px;font-family:'Liberation Sans';">Standard Primitives</div>
<svg class="a" style="left:1902px;top:184px" width="10" height="8" viewBox="0 0 10 8"><path d="M1 1 H9 L5 7Z" fill="#e0e0e0"/></svg>
<div class="a" style="left:1912px;top:204px;width:5px;height:711px;background:#3c3c3c;border-radius:2px"></div>
<div class="a" style="left:1710px;top:203px;width:199px;height:192px;background:#4a4a4a;border-radius:2px"></div>
<svg class="a" style="left:1716px;top:208px" width="10" height="8" viewBox="0 0 10 8"><path d="M1 1 H9 L5 7Z" fill="#bdbdbd"/></svg>
<div class="t" style="left:1730.0px;top:208.7px;font-size:11px;color:#eeeeee;font-weight:700;letter-spacing:-0.1px;font-family:'Liberation Sans';">Object Type</div>
<div class="a" style="left:1895px;top:211px;width:7px;height:6px;background-image:radial-gradient(circle,#8a8a8a 0.6px,transparent 0.8px);background-size:2px 2px"></div>
<div class="a" style="left:1781px;top:230px;width:12px;height:12px;background:#444;"></div>
<div class="t" style="left:1798.0px;top:231.2px;font-size:11px;color:#8c8c8c;font-weight:400;letter-spacing:-0.3px;font-family:'Liberation Sans';">AutoGrid</div>
<div class="a" style="left:1716px;top:250px;width:92px;height:20px;background:#5a5a5a;border-radius:2px"></div>
<div class="a" style="left:1812px;top:250px;width:92px;height:20px;background:#5a5a5a;border-radius:2px"></div>
<div class="t" style="left:1716.0px;top:254.7px;width:92px;text-align:center;font-size:11px;color:#dadada;font-weight:400;letter-spacing:-0.3px">Box</div>
<div class="t" style="left:1812.0px;top:254.7px;width:92px;text-align:center;font-size:11px;color:#dadada;font-weight:400;letter-spacing:-0.3px">Cone</div>
<div class="a" style="left:1716px;top:274px;width:92px;height:20px;background:#5a5a5a;border-radius:2px"></div>
<div class="a" style="left:1812px;top:274px;width:92px;height:20px;background:#5a5a5a;border-radius:2px"></div>
<div class="t" style="left:1716.0px;top:278.6px;width:92px;text-align:center;font-size:11px;color:#dadada;font-weight:400;letter-spacing:-0.3px">Sphere</div>
<div class="t" style="left:1812.0px;top:278.6px;width:92px;text-align:center;font-size:11px;color:#dadada;font-weight:400;letter-spacing:-0.3px">GeoSphere</div>
<div class="a" style="left:1716px;top:298px;width:92px;height:20px;background:#5a5a5a;border-radius:2px"></div>
<div class="a" style="left:1812px;top:298px;width:92px;height:20px;background:#5a5a5a;border-radius:2px"></div>
<div class="t" style="left:1716.0px;top:302.6px;width:92px;text-align:center;font-size:11px;color:#dadada;font-weight:400;letter-spacing:-0.3px">Cylinder</div>
<div class="t" style="left:1812.0px;top:302.6px;width:92px;text-align:center;font-size:11px;color:#dadada;font-weight:400;letter-spacing:-0.3px">Tube</div>
<div class="a" style="left:1716px;top:322px;width:92px;height:20px;background:#5a5a5a;border-radius:2px"></div>
<div class="a" style="left:1812px;top:322px;width:92px;height:20px;background:#5a5a5a;border-radius:2px"></div>
<div class="t" style="left:1716.0px;top:326.6px;width:92px;text-align:center;font-size:11px;color:#dadada;font-weight:400;letter-spacing:-0.3px">Torus</div>
<div class="t" style="left:1812.0px;top:326.6px;width:92px;text-align:center;font-size:11px;color:#dadada;font-weight:400;letter-spacing:-0.3px">Pyramid</div>
<div class="a" style="left:1716px;top:346px;width:92px;height:20px;background:#5a5a5a;border-radius:2px"></div>
<div class="a" style="left:1812px;top:346px;width:92px;height:20px;background:#5a5a5a;border-radius:2px"></div>
<div class="t" style="left:1716.0px;top:350.6px;width:92px;text-align:center;font-size:11px;color:#dadada;font-weight:400;letter-spacing:-0.3px">Teapot</div>
<div class="t" style="left:1812.0px;top:350.6px;width:92px;text-align:center;font-size:11px;color:#dadada;font-weight:400;letter-spacing:-0.3px">Plane</div>
<div class="a" style="left:1716px;top:370px;width:92px;height:20px;background:#5a5a5a;border-radius:2px"></div>
<div class="a" style="left:1812px;top:370px;width:92px;height:20px;background:#5a5a5a;border-radius:2px"></div>
<div class="t" style="left:1716.0px;top:374.6px;width:92px;text-align:center;font-size:11px;color:#dadada;font-weight:400;letter-spacing:-0.3px">TextPlus</div>
<div class="t" style="left:1812.0px;top:374.6px;width:92px;text-align:center;font-size:11px;color:#dadada;font-weight:400;letter-spacing:-0.3px">tyFlow</div>
<div class="a" style="left:1710px;top:398px;width:199px;height:48px;background:#4a4a4a;border-radius:2px"></div>
<svg class="a" style="left:1716px;top:404px" width="10" height="8" viewBox="0 0 10 8"><path d="M1 1 H9 L5 7Z" fill="#bdbdbd"/></svg>
<div class="t" style="left:1730.0px;top:404.1px;font-size:11px;color:#eeeeee;font-weight:700;letter-spacing:-0.1px;font-family:'Liberation Sans';">Name and Color</div>
<div class="a" style="left:1895px;top:406px;width:7px;height:6px;background-image:radial-gradient(circle,#8a8a8a 0.6px,transparent 0.8px);background-size:2px 2px"></div>
<div class="a" style="left:1716px;top:421px;width:164px;height:20px;background:#555555;"></div>
<div class="a" style="left:1884px;top:420px;width:21px;height:21px;background:#c42c2c;border:1.5px solid #1e1e1e"></div>
<div class="a" style="left:42px;top:922px;width:15px;height:17px;background:#5a5a5a;border-radius:3px"></div>
<div class="t" style="left:46.0px;top:925.6px;font-size:11px;color:#d0d0d0;font-weight:400;letter-spacing:0px;font-family:'Liberation Sans';">&lt;</div>
<div class="a" style="left:58px;top:922px;width:124px;height:17px;background:#5c5c5c;border-radius:3px"></div>
<div class="t" style="left:70.0px;top:925.1px;width:100px;text-align:center;font-size:11px;color:#d8d8d8;font-weight:400;letter-spacing:-0.2px">0 / 100</div>
<div class="a" style="left:183px;top:922px;width:15px;height:17px;background:#5a5a5a;border-radius:3px"></div>
<div class="t" style="left:187.0px;top:925.6px;font-size:11px;color:#d0d0d0;font-weight:400;letter-spacing:0px;font-family:'Liberation Sans';">&gt;</div>
<div class="a" style="left:91px;top:942px;width:1779px;height:36px;background:#2e2e2e;"></div>
<div class="a" style="left:91px;top:966px;width:1779px;height:12px;background:#292929;"></div>
<div class="a" style="left:91px;top:966px;width:1779px;height:1px;background:#333;"></div>
<div class="a" style="left:41px;top:942px;width:50px;height:36px;background:#474747;"></div>
<div class="a" style="left:41px;top:942px;width:1829px;height:1px;background:#262626;"></div>
<svg class="a" style="left:0;top:942px" width="1920" height="13"><rect x="99.5" y="0" width="1" height="12" fill="#5e5e5e"/><rect x="117.1" y="0" width="1" height="12" fill="#505050"/><rect x="134.8" y="0" width="1" height="12" fill="#505050"/><rect x="152.4" y="0" width="1" height="12" fill="#505050"/><rect x="170.0" y="0" width="1" height="12" fill="#505050"/><rect x="187.6" y="0" width="1" height="12" fill="#5e5e5e"/><rect x="205.2" y="0" width="1" height="12" fill="#505050"/><rect x="222.9" y="0" width="1" height="12" fill="#505050"/><rect x="240.5" y="0" width="1" height="12" fill="#505050"/><rect x="258.1" y="0" width="1" height="12" fill="#505050"/><rect x="275.8" y="0" width="1" height="12" fill="#5e5e5e"/><rect x="293.4" y="0" width="1" height="12" fill="#505050"/><rect x="311.0" y="0" width="1" height="12" fill="#505050"/><rect x="328.6" y="0" width="1" height="12" fill="#505050"/><rect x="346.2" y="0" width="1" height="12" fill="#505050"/><rect x="363.9" y="0" width="1" height="12" fill="#5e5e5e"/><rect x="381.5" y="0" width="1" height="12" fill="#505050"/><rect x="399.1" y="0" width="1" height="12" fill="#505050"/><rect x="416.8" y="0" width="1" height="12" fill="#505050"/><rect x="434.4" y="0" width="1" height="12" fill="#505050"/><rect x="452.0" y="0" width="1" height="12" fill="#5e5e5e"/><rect x="469.6" y="0" width="1" height="12" fill="#505050"/><rect x="487.2" y="0" width="1" height="12" fill="#505050"/><rect x="504.9" y="0" width="1" height="12" fill="#505050"/><rect x="522.5" y="0" width="1" height="12" fill="#505050"/><rect x="540.1" y="0" width="1" height="12" fill="#5e5e5e"/><rect x="557.8" y="0" width="1" height="12" fill="#505050"/><rect x="575.4" y="0" width="1" height="12" fill="#505050"/><rect x="593.0" y="0" width="1" height="12" fill="#505050"/><rect x="610.6" y="0" width="1" height="12" fill="#505050"/><rect x="628.2" y="0" width="1" height="12" fill="#5e5e5e"/><rect x="645.9" y="0" width="1" height="12" fill="#505050"/><rect x="663.5" y="0" width="1" height="12" fill="#505050"/><rect x="681.1" y="0" width="1" height="12" fill="#505050"/><rect x="698.8" y="0" width="1" height="12" fill="#505050"/><rect x="716.4" y="0" width="1" height="12" fill="#5e5e5e"/><rect x="734.0" y="0" width="1" height="12" fill="#505050"/><rect x="751.6" y="0" width="1" height="12" fill="#505050"/><rect x="769.2" y="0" width="1" height="12" fill="#505050"/><rect x="786.9" y="0" width="1" height="12" fill="#505050"/><rect x="804.5" y="0" width="1" height="12" fill="#5e5e5e"/><rect x="822.1" y="0" width="1" height="12" fill="#505050"/><rect x="839.8" y="0" width="1" height="12" fill="#505050"/><rect x="857.4" y="0" width="1" height="12" fill="#505050"/><rect x="875.0" y="0" width="1" height="12" fill="#505050"/><rect x="892.6" y="0" width="1" height="12" fill="#5e5e5e"/><rect x="910.2" y="0" width="1" height="12" fill="#505050"/><rect x="927.9" y="0" width="1" height="12" fill="#505050"/><rect x="945.5" y="0" width="1" height="12" fill="#505050"/><rect x="963.1" y="0" width="1" height="12" fill="#505050"/><rect x="980.8" y="0" width="1" height="12" fill="#5e5e5e"/><rect x="998.4" y="0" width="1" height="12" fill="#505050"/><rect x="1016.0" y="0" width="1" height="12" fill="#505050"/><rect x="1033.6" y="0" width="1" height="12" fill="#505050"/><rect x="1051.2" y="0" width="1" height="12" fill="#505050"/><rect x="1068.9" y="0" width="1" height="12" fill="#5e5e5e"/><rect x="1086.5" y="0" width="1" height="12" fill="#505050"/><rect x="1104.1" y="0" width="1" height="12" fill="#505050"/><rect x="1121.8" y="0" width="1" height="12" fill="#505050"/><rect x="1139.4" y="0" width="1" height="12" fill="#505050"/><rect x="1157.0" y="0" width="1" height="12" fill="#5e5e5e"/><rect x="1174.6" y="0" width="1" height="12" fill="#505050"/><rect x="1192.2" y="0" width="1" height="12" fill="#505050"/><rect x="1209.9" y="0" width="1" height="12" fill="#505050"/><rect x="1227.5" y="0" width="1" height="12" fill="#505050"/><rect x="1245.1" y="0" width="1" height="12" fill="#5e5e5e"/><rect x="1262.8" y="0" width="1" height="12" fill="#505050"/><rect x="1280.4" y="0" width="1" height="12" fill="#505050"/><rect x="1298.0" y="0" width="1" height="12" fill="#505050"/><rect x="1315.6" y="0" width="1" height="12" fill="#505050"/><rect x="1333.2" y="0" width="1" height="12" fill="#5e5e5e"/><rect x="1350.9" y="0" width="1" height="12" fill="#505050"/><rect x="1368.5" y="0" width="1" height="12" fill="#505050"/><rect x="1386.1" y="0" width="1" height="12" fill="#505050"/><rect x="1403.8" y="0" width="1" height="12" fill="#505050"/><rect x="1421.4" y="0" width="1" height="12" fill="#5e5e5e"/><rect x="1439.0" y="0" width="1" height="12" fill="#505050"/><rect x="1456.6" y="0" width="1" height="12" fill="#505050"/><rect x="1474.2" y="0" width="1" height="12" fill="#505050"/><rect x="1491.9" y="0" width="1" height="12" fill="#505050"/><rect x="1509.5" y="0" width="1" height="12" fill="#5e5e5e"/><rect x="1527.1" y="0" width="1" height="12" fill="#505050"/><rect x="1544.8" y="0" width="1" height="12" fill="#505050"/><rect x="1562.4" y="0" width="1" height="12" fill="#505050"/><rect x="1580.0" y="0" width="1" height="12" fill="#505050"/><rect x="1597.6" y="0" width="1" height="12" fill="#5e5e5e"/><rect x="1615.2" y="0" width="1" height="12" fill="#505050"/><rect x="1632.9" y="0" width="1" height="12" fill="#505050"/><rect x="1650.5" y="0" width="1" height="12" fill="#505050"/><rect x="1668.1" y="0" width="1" height="12" fill="#505050"/><rect x="1685.8" y="0" width="1" height="12" fill="#5e5e5e"/><rect x="1703.4" y="0" width="1" height="12" fill="#505050"/><rect x="1721.0" y="0" width="1" height="12" fill="#505050"/><rect x="1738.6" y="0" width="1" height="12" fill="#505050"/><rect x="1756.2" y="0" width="1" height="12" fill="#505050"/><rect x="1773.9" y="0" width="1" height="12" fill="#5e5e5e"/><rect x="1791.5" y="0" width="1" height="12" fill="#505050"/><rect x="1809.1" y="0" width="1" height="12" fill="#505050"/><rect x="1826.8" y="0" width="1" height="12" fill="#505050"/><rect x="1844.4" y="0" width="1" height="12" fill="#505050"/><rect x="1862.0" y="0" width="1" height="12" fill="#5e5e5e"/></svg>
<div class="t" style="left:173.1px;top:956.1px;width:30px;text-align:center;font-size:10.5px;color:#c8c8c8;font-weight:400;letter-spacing:-0.3px">5</div>
<div class="t" style="left:261.2px;top:956.1px;width:30px;text-align:center;font-size:10.5px;color:#c8c8c8;font-weight:400;letter-spacing:-0.3px">10</div>
<div class="t" style="left:349.4px;top:956.1px;width:30px;text-align:center;font-size:10.5px;color:#c8c8c8;font-weight:400;letter-spacing:-0.3px">15</div>
<div class="t" style="left:437.5px;top:956.1px;width:30px;text-align:center;font-size:10.5px;color:#c8c8c8;font-weight:400;letter-spacing:-0.3px">20</div>
<div class="t" style="left:525.6px;top:956.1px;width:30px;text-align:center;font-size:10.5px;color:#c8c8c8;font-weight:400;letter-spacing:-0.3px">25</div>
<div class="t" style="left:613.8px;top:956.1px;width:30px;text-align:center;font-size:10.5px;color:#c8c8c8;font-weight:400;letter-spacing:-0.3px">30</div>
<div class="t" style="left:701.9px;top:956.1px;width:30px;text-align:center;font-size:10.5px;color:#c8c8c8;font-weight:400;letter-spacing:-0.3px">35</div>
<div class="t" style="left:790.0px;top:956.1px;width:30px;text-align:center;font-size:10.5px;color:#c8c8c8;font-weight:400;letter-spacing:-0.3px">40</div>
<div class="t" style="left:878.1px;top:956.1px;width:30px;text-align:center;font-size:10.5px;color:#c8c8c8;font-weight:400;letter-spacing:-0.3px">45</div>
<div class="t" style="left:966.2px;top:956.1px;width:30px;text-align:center;font-size:10.5px;color:#c8c8c8;font-weight:400;letter-spacing:-0.3px">50</div>
<div class="t" style="left:1054.4px;top:956.1px;width:30px;text-align:center;font-size:10.5px;color:#c8c8c8;font-weight:400;letter-spacing:-0.3px">55</div>
<div class="t" style="left:1142.5px;top:956.1px;width:30px;text-align:center;font-size:10.5px;color:#c8c8c8;font-weight:400;letter-spacing:-0.3px">60</div>
<div class="t" style="left:1230.6px;top:956.1px;width:30px;text-align:center;font-size:10.5px;color:#c8c8c8;font-weight:400;letter-spacing:-0.3px">65</div>
<div class="t" style="left:1318.8px;top:956.1px;width:30px;text-align:center;font-size:10.5px;color:#c8c8c8;font-weight:400;letter-spacing:-0.3px">70</div>
<div class="t" style="left:1406.9px;top:956.1px;width:30px;text-align:center;font-size:10.5px;color:#c8c8c8;font-weight:400;letter-spacing:-0.3px">75</div>
<div class="t" style="left:1495.0px;top:956.1px;width:30px;text-align:center;font-size:10.5px;color:#c8c8c8;font-weight:400;letter-spacing:-0.3px">80</div>
<div class="t" style="left:1583.1px;top:956.1px;width:30px;text-align:center;font-size:10.5px;color:#c8c8c8;font-weight:400;letter-spacing:-0.3px">85</div>
<div class="t" style="left:1671.2px;top:956.1px;width:30px;text-align:center;font-size:10.5px;color:#c8c8c8;font-weight:400;letter-spacing:-0.3px">90</div>
<div class="t" style="left:1759.4px;top:956.1px;width:30px;text-align:center;font-size:10.5px;color:#c8c8c8;font-weight:400;letter-spacing:-0.3px">95</div>
<div class="t" style="left:1847.5px;top:956.1px;width:30px;text-align:center;font-size:10.5px;color:#c8c8c8;font-weight:400;letter-spacing:-0.3px">100</div>
<div class="a" style="left:96px;top:943px;width:8px;height:22px;background:#8a8422;"></div>
<div class="a" style="left:99px;top:943px;width:2px;height:22px;background:#9c9630;"></div>
<div class="t" style="left:94.0px;top:956.1px;width:12px;text-align:center;font-size:10.5px;color:#e8e46a;font-weight:400;letter-spacing:0px">0</div>
<svg class="a" style="left:55px;top:948px" width="12" height="12" viewBox="0 0 12 12"><rect x="0" y="2" width="3" height="8" fill="#9a9a9a"/><path d="M5 10 V5 A2.5 2.5 0 0 1 10 5 V10" stroke="#3fbfbf" stroke-width="1.3" fill="none"/></svg>
<div class="a" style="left:1870px;top:942px;width:50px;height:36px;background:#444;"></div>
<div class="a" style="left:0px;top:979px;width:106px;height:53px;background:#3c3c3c;"></div>
<div class="a" style="left:106px;top:981px;width:1px;height:49px;background:#2e2e2e;"></div>
<div class="t" style="left:110.0px;top:990.5px;font-size:10.5px;color:#e6e6e6;font-weight:400;letter-spacing:-0.15px;font-family:'Liberation Sans';">None Selected</div>
<div class="t" style="left:110.0px;top:1015.8px;font-size:10.5px;color:#dedede;font-weight:400;letter-spacing:-0.05px;font-family:'Liberation Sans';">Click or click-and-drag to select objects</div>
<svg class="a" style="left:1034px;top:985px" width="22" height="22" viewBox="0 0 22 22"><rect x="3" y="4" width="11" height="11" fill="none" stroke="#5a5a5a" stroke-width="1.4"/><circle cx="3" cy="4" r="2" fill="none" stroke="#5a5a5a" stroke-width="1"/><circle cx="14" cy="4" r="2" fill="none" stroke="#5a5a5a" stroke-width="1"/><circle cx="3" cy="15" r="2" fill="none" stroke="#5a5a5a" stroke-width="1"/><circle cx="14" cy="15" r="2" fill="none" stroke="#5a5a5a" stroke-width="1"/><rect x="6" y="3" width="4" height="4" fill="#5a5a5a"/><path d="M16 20 L20 16 V20Z" fill="#d0d0d0"/></svg>
<svg class="a" style="left:1064px;top:986px" width="14" height="18" viewBox="0 0 14 18"><path d="M3.5 8 V5.5 A3.5 3.5 0 0 1 10.5 5.5 V8" stroke="#5a5a5a" stroke-width="1.6" fill="none"/><rect x="2" y="8" width="10" height="9" rx="1" fill="#5a5a5a"/><rect x="6" y="11" width="2" height="3" fill="#444"/></svg>
<svg class="a" style="left:1091px;top:987px" width="15" height="15" viewBox="0 0 15 15"><rect x="1" y="1" width="13" height="13" fill="none" stroke="#d0d0d0" stroke-width="1.3"/><circle cx="7.5" cy="7.5" r="3" fill="none" stroke="#d0d0d0" stroke-width="1.2"/><rect x="6.5" y="6.5" width="2" height="2" fill="#d0d0d0"/><path d="M7.5 1 V3.5 M7.5 11.5 V14 M1 7.5 H3.5 M11.5 7.5 H14" stroke="#d0d0d0" stroke-width="1.2"/></svg>
<div class="t" style="left:1113.0px;top:989.6px;font-size:11px;color:#e0e0e0;font-weight:400;letter-spacing:0px;font-family:'Liberation Sans';">X:</div>
<div class="a" style="left:1126px;top:986px;width:58px;height:17px;background:#555555;"></div>
<div class="t" style="left:1128px;top:989.6px;width:56px;overflow:hidden;font-size:11px;color:#8e8e8e;letter-spacing:-0.3px">-2941.1946c</div>
<div class="t" style="left:1197.0px;top:989.6px;font-size:11px;color:#e0e0e0;font-weight:400;letter-spacing:0px;font-family:'Liberation Sans';">Y:</div>
<div class="a" style="left:1210px;top:986px;width:58px;height:17px;background:#555555;"></div>
<div class="t" style="left:1212px;top:989.6px;width:56px;overflow:hidden;font-size:11px;color:#8e8e8e;letter-spacing:-0.3px">-4606.8828c</div>
<div class="t" style="left:1281.0px;top:989.6px;font-size:11px;color:#e0e0e0;font-weight:400;letter-spacing:0px;font-family:'Liberation Sans';">Z:</div>
<div class="a" style="left:1294px;top:986px;width:58px;height:17px;background:#555555;"></div>
<div class="t" style="left:1296px;top:989.6px;width:56px;overflow:hidden;font-size:11px;color:#8e8e8e;letter-spacing:-0.3px">0.0cm</div>
<div class="t" style="left:1366.0px;top:990.1px;font-size:11px;color:#e6e6e6;font-weight:400;letter-spacing:-0.3px;font-family:'Liberation Sans';">Grid = 100.0cm</div>
<div class="a" style="left:1212px;top:1012px;width:1px;height:16px;background:#2c2c2c;"></div>
<div class="a" style="left:1219px;top:1010px;width:20px;height:20px;background:#555;border-radius:3px"></div>
<svg class="a" style="left:1222px;top:1012px" width="14" height="16" viewBox="0 0 14 16"><path d="M7 1 L13 3 V8 Q13 13 7 15 Q1 13 1 8 V3Z" fill="#d8d8d8"/><path d="M7 1 V15 M1 8 H13" stroke="#555" stroke-width="0.8"/><path d="M7 8 H13 Q13 13 7 15Z M1 3 L7 1 V8 H1Z" fill="#444"/></svg>
<div class="t" style="left:1244.5px;top:1014.6px;font-size:11px;color:#e6e6e6;font-weight:400;letter-spacing:-0.3px;font-family:'Liberation Sans';">Enabled:</div>
<div class="a" style="left:1290px;top:1015px;width:10px;height:10px;border-radius:50%;background:#3fd43a"></div>
<div class="a" style="left:1305px;top:1010px;width:20px;height:20px;background:#555;border-radius:3px"></div>
<div class="a" style="left:1308px;top:1013px;width:14px;height:14px;border-radius:50%;background:#f2f2f2"></div>
<div class="t" style="left:1308.0px;top:1015.5px;width:14px;text-align:center;font-size:10px;color:#333;font-weight:700;letter-spacing:0px">1</div>
<div class="a" style="left:1330px;top:1012px;width:1px;height:16px;background:#2c2c2c;"></div>
<div class="a" style="left:1336px;top:1010px;width:22px;height:20px;background:#5b8fd1;border-radius:3px"></div>
<svg class="a" style="left:1339px;top:1012px" width="16" height="16" viewBox="0 0 16 16"><path d="M8 1 L15 4.5 V11.5 L8 15 L1 11.5 V4.5Z M1 4.5 L8 8 L15 4.5 M8 8 V15" stroke="#e8e8e8" stroke-width="1.1" fill="none"/></svg>
<div class="t" style="left:1362.5px;top:1014.6px;font-size:11px;color:#e6e6e6;font-weight:400;letter-spacing:-0.3px;font-family:'Liberation Sans';">Add Time Tag</div>
<svg class="a" style="left:1474px;top:986px" width="16" height="12" viewBox="0 0 16 12"><rect x="1" y="1" width="2" height="10" fill="#d6d6d6"/><path d="M9 1 L3.5 6 L9 11Z M15 1 L9.5 6 L15 11Z" fill="#d6d6d6"/></svg>
<div class="a" style="left:1497px;top:986px;width:1px;height:15px;background:#2c2c2c;"></div>
<svg class="a" style="left:1502px;top:986px" width="15" height="12" viewBox="0 0 15 12"><path d="M6 1 L1 6 L6 11Z" fill="#d6d6d6"/><rect x="7.5" y="1" width="2" height="10" fill="#d6d6d6"/><rect x="11.5" y="1" width="2" height="10" fill="#d6d6d6"/></svg>
<svg class="a" style="left:1525px;top:985px" width="17" height="15" viewBox="0 0 17 15"><path d="M1 1 L12 7 L1 13Z" fill="#d6d6d6"/><path d="M13 14 L16 11 V14Z" fill="#d6d6d6"/></svg>
<svg class="a" style="left:1548px;top:986px" width="15" height="12" viewBox="0 0 15 12"><rect x="1" y="1" width="2" height="10" fill="#d6d6d6"/><rect x="5" y="1" width="2" height="10" fill="#d6d6d6"/><path d="M8.5 1 L13.5 6 L8.5 11Z" fill="#d6d6d6"/></svg>
<div class="a" style="left:1569px;top:986px;width:1px;height:15px;background:#2c2c2c;"></div>
<svg class="a" style="left:1574px;top:986px" width="16" height="12" viewBox="0 0 16 12"><path d="M1 1 L6.5 6 L1 11Z M7 1 L12.5 6 L7 11Z" fill="#d6d6d6"/><rect x="13" y="1" width="2" height="10" fill="#d6d6d6"/></svg>
<svg class="a" style="left:1477px;top:1010px" width="13" height="10" viewBox="0 0 13 10"><path d="M5 1 L1 5 L5 9Z M8 1 L12 5 L8 9Z" fill="#d6d6d6"/></svg>
<div class="a" style="left:1497px;top:1006px;width:1px;height:16px;background:#2c2c2c;"></div>
<div class="a" style="left:1498px;top:1006px;width:72px;height:17px;background:#555;"></div>
<div class="t" style="left:1501.0px;top:1009.6px;font-size:11px;color:#e0e0e0;font-weight:400;letter-spacing:0px;font-family:'Liberation Sans';">0</div>
<svg class="a" style="left:1559px;top:1008px" width="8" height="13" viewBox="0 0 8 13"><path d="M1 5 L4 1 L7 5Z M1 8 L4 12 L7 8Z" fill="#d0d0d0"/></svg>
<div class="a" style="left:1569px;top:1006px;width:1px;height:16px;background:#2c2c2c;"></div>
<svg class="a" style="left:1575px;top:1005px" width="16" height="17" viewBox="0 0 16 17"><circle cx="6" cy="7" r="5.5" fill="#d6d6d6"/><path d="M6 3 V7 H9" stroke="#444" stroke-width="1.2" fill="none"/><polygon points="15.00,12.00 13.88,13.19 13.83,14.83 12.19,14.88 11.00,16.00 9.81,14.88 8.17,14.83 8.12,13.19 7.00,12.00 8.12,10.81 8.17,9.17 9.81,9.12 11.00,8.00 12.19,9.12 13.83,9.17 13.88,10.81" fill="#fbb41b"/><circle cx="11" cy="12" r="1.80" fill="#444"/></svg>
<div class="a" style="left:1601px;top:983px;width:43px;height:45px;background:#555;border-radius:3px"></div>
<svg class="a" style="left:1609px;top:990px" width="28" height="30" viewBox="0 0 28 30"><path d="M11 2 V24 M2 12 H22" stroke="#e0e0e0" stroke-width="3.5"/><circle cx="14" cy="24" r="3" fill="none" stroke="#3fbfbf" stroke-width="1.5"/><path d="M16 22 L25 13 M22 16 L24 18 M24 14 L26 16" stroke="#3fbfbf" stroke-width="1.5"/></svg>
<div class="a" style="left:1647px;top:983px;width:46px;height:20px;background:#555;border-radius:3px"></div>
<div class="t" style="left:1647.0px;top:988.1px;width:46px;text-align:center;font-size:11px;color:#e0e0e0;font-weight:400;letter-spacing:-0.2px">Auto</div>
<div class="a" style="left:1696px;top:983px;width:114px;height:15px;background:#5a5a5a;"></div>
<div class="t" style="left:1701.0px;top:985.6px;font-size:11px;color:#e6e6e6;font-weight:400;letter-spacing:-0.3px;font-family:'Liberation Sans';">Selected</div>
<svg class="a" style="left:1795px;top:987px" width="10" height="8" viewBox="0 0 10 8"><path d="M1 1 H9 L5 7Z" fill="#e0e0e0"/></svg>
<div class="a" style="left:1647px;top:1005px;width:46px;height:20px;background:#555;border-radius:3px"></div>
<div class="t" style="left:1647.0px;top:1010.1px;width:46px;text-align:center;font-size:11px;color:#e0e0e0;font-weight:400;letter-spacing:-0.3px">Set K.</div>
<svg class="a" style="left:1699px;top:1007px" width="20" height="20" viewBox="0 0 20 20"><path d="M1 18 Q3 14 4 6 Q5 2 9 2 Q13 2 14 6 Q15 14 17 18" stroke="#3fbfbf" stroke-width="1.5" fill="none"/><circle cx="9" cy="2.5" r="1.5" fill="#bbb"/><path d="M16 20 L20 16 V20Z" fill="#d0d0d0"/></svg>
<div class="a" style="left:1721px;top:1005px;width:89px;height:20px;background:#555;border-radius:3px"></div>
<div class="t" style="left:1720.5px;top:1010.1px;width:89px;text-align:center;font-size:11px;color:#e0e0e0;font-weight:400;letter-spacing:-0.3px">Filters...</div>
<svg class="a" style="left:1823px;top:984px" width="20" height="20" viewBox="0 0 20 20"><rect x="1" y="6" width="5" height="4" fill="#3fbfbf"/><path d="M6 8 H9" stroke="#3fbfbf" stroke-width="1.3"/><path d="M11 2 V15 M8.5 4.5 L11 1.5 L13.5 4.5 M8.5 12.5 L11 15.5 L13.5 12.5" stroke="#d6d6d6" stroke-width="1.6" fill="none"/><path d="M14 17 L17 14 V17Z" fill="#d6d6d6"/></svg>
<svg class="a" style="left:1846px;top:984px" width="20" height="20" viewBox="0 0 20 20"><ellipse cx="8" cy="8" rx="7" ry="5" fill="none" stroke="#d6d6d6" stroke-width="1.3"/><path d="M1 8 H15 M8 3 V13" stroke="#d6d6d6" stroke-width="1"/><rect x="8" y="9" width="8" height="6" fill="#fbb41b"/></svg>
<svg class="a" style="left:1869px;top:984px" width="20" height="20" viewBox="0 0 20 20"><path d="M4 14 A6 6 0 0 1 4 3 M13 3 A6 6 0 0 1 13 14" stroke="#d6d6d6" stroke-width="1.6" fill="none"/><path d="M1 3 L5 1 L5 5Z" fill="#d6d6d6"/><rect x="9" y="9" width="8" height="6" fill="#fbb41b"/></svg>
<svg class="a" style="left:1892px;top:984px" width="20" height="20" viewBox="0 0 20 20"><path d="M1 10 L7 6 L13 10 L7 14Z" fill="none" stroke="#d6d6d6" stroke-width="1.2"/><path d="M10 3 A3 2 0 0 1 16 3 V12 A3 2 0 0 1 10 12Z" fill="#3fbfbf"/><path d="M15 17 L18 14 V17Z" fill="#d6d6d6"/></svg>
<svg class="a" style="left:1823px;top:1006px" width="20" height="20" viewBox="0 0 20 20"><path d="M15 2 L2 9 L15 16" stroke="#d6d6d6" stroke-width="1.6" fill="none"/><path d="M8 9 L15 6 V12Z" fill="none" stroke="#d6d6d6" stroke-width="1"/></svg>
<svg class="a" style="left:1846px;top:1006px" width="20" height="20" viewBox="0 0 20 20"><rect x="6" y="1" width="7" height="6" fill="#d6d6d6"/><path d="M13 3 L16 1 V7 L13 5Z" fill="#d6d6d6"/><path d="M1 16 L5 9 H14 L17 16Z" fill="#3fbfbf"/><path d="M16 18 L19 15 V18Z" fill="#d6d6d6"/></svg>
<svg class="a" style="left:1869px;top:1006px" width="20" height="20" viewBox="0 0 20 20"><circle cx="8" cy="8" r="6" fill="none" stroke="#d6d6d6" stroke-width="1.4"/><path d="M1 10 Q8 4 16 4" stroke="#d6d6d6" stroke-width="1.4" fill="none"/><rect x="9" y="10" width="8" height="6" fill="#fbb41b"/><path d="M16 18 L19 15 V18Z" fill="#d6d6d6"/></svg>
<svg class="a" style="left:1892px;top:1006px" width="20" height="20" viewBox="0 0 20 20"><rect x="1" y="1" width="15" height="15" fill="none" stroke="#d6d6d6" stroke-width="1.6"/><rect x="1" y="9" width="7" height="7" fill="#d6d6d6"/><path d="M8 9 L14 3 M10 3 H14 V7" stroke="#d6d6d6" stroke-width="1.5" fill="none"/></svg>
<div class="a" style="left:0px;top:1032px;width:1920px;height:48px;background:linear-gradient(90deg,#e5d5cc 0%,#e7d7cd 25%,#ecdfcd 40%,#efe3cc 50%,#ede0cc 60%,#e8d8cf 75%,#e8d9d0 100%);"></div>
<div class="a" style="left:0px;top:1032px;width:1920px;height:1px;background:#a8a29f;"></div>
<div class="a" style="left:21px;top:1045px;width:20px;height:20px;border-radius:50%;background:linear-gradient(135deg,#f7c02a,#f26a12)"></div>
<div class="t" style="left:50.0px;top:1042.8px;font-size:12px;color:#2a2a2a;font-weight:400;letter-spacing:0px;font-family:'Liberation Sans';">25°C</div>
<div class="t" style="left:50.0px;top:1058.3px;font-size:12px;color:#444;font-weight:400;letter-spacing:0px;font-family:'Liberation Sans';">Sunny</div>
<svg class="a" style="left:506px;top:1045px" width="24" height="24" viewBox="0 0 24 24"><defs><linearGradient id="wl" x1="0" y1="0" x2="1" y2="1"><stop offset="0" stop-color="#4fc3f7"/><stop offset="1" stop-color="#1e7fd8"/></linearGradient></defs><rect x="0" y="0" width="11" height="11" rx="1" fill="url(#wl)"/><rect x="12.5" y="0" width="11" height="11" rx="1" fill="url(#wl)"/><rect x="0" y="12.5" width="11" height="11" rx="1" fill="url(#wl)"/><rect x="12.5" y="12.5" width="11" height="11" rx="1" fill="url(#wl)"/></svg>
<div class="a" style="left:543.5px;top:1040.5px;width:218px;height:31px;background:#f6f2ee;border-radius:16px;border:1px solid #ddd3cb"></div>
<svg class="a" style="left:553px;top:1049px" width="15" height="15" viewBox="0 0 15 15"><circle cx="6" cy="6" r="5" fill="none" stroke="#222" stroke-width="1.8"/><path d="M9.8 9.8 L14 14" stroke="#222" stroke-width="1.9"/></svg>
<div class="t" style="left:580.0px;top:1050.2px;font-size:15px;color:#585858;font-weight:400;letter-spacing:0.2px;font-family:'Liberation Sans';">Search</div>
<svg class="a" style="left:707px;top:1043px" width="54" height="28" viewBox="0 0 54 28"><ellipse cx="27" cy="20" rx="26" ry="8" fill="#d8c08a"/><ellipse cx="27" cy="16" rx="24" ry="4" fill="#a8c8e8" opacity="0.7"/><path d="M6 12 L46 3 L48 8 L8 17Z" fill="none" stroke="#a0703a" stroke-width="1.4"/><path d="M12 11 V16 M20 9 V15 M28 7 V13 M36 5 V11 M44 4 V9" stroke="#a0703a" stroke-width="0.8"/><path d="M5 14 V22 M45 8 V16" stroke="#2a6aa8" stroke-width="2"/></svg>
<svg class="a" style="left:774px;top:1045px" width="24" height="24" viewBox="0 0 24 24"><rect x="7" y="0" width="16" height="15" rx="1" fill="#f2f2f2" stroke="#ddd" stroke-width="0.5"/><rect x="0" y="6" width="16" height="16" rx="1" fill="#222"/><rect x="7" y="6" width="9" height="9" fill="#bdbdbd"/></svg>
<svg class="a" style="left:819px;top:1045px" width="24" height="24" viewBox="0 0 24 24"><defs><linearGradient id="cp" x1="0" y1="0" x2="1" y2="1"><stop offset="0" stop-color="#2fb5f0"/><stop offset="0.5" stop-color="#f5c531"/><stop offset="1" stop-color="#d64ad8"/></linearGradient></defs><path d="M8 1 H14 Q16 1 15 4 L11 19 Q10 22 7 22 H3 Q1 22 2 19 L6 4 Q7 1 8 1Z" fill="url(#cp)"/><path d="M16 3 H20 Q23 3 22 6 L18 20 Q17 23 14 23 H10 Q12 22 13 19 Z" fill="#c95de8" opacity="0.85"/></svg>
<svg class="a" style="left:866px;top:1045px" width="17" height="22" viewBox="0 0 17 22"><ellipse cx="8.5" cy="11" rx="8.5" ry="11" fill="#1e82e6"/><path d="M4.5 7 L12 14 L8.5 17.5 V4.5 L12 8 L4.5 15" stroke="#fff" stroke-width="1.5" fill="none"/></svg>
<svg class="a" style="left:906px;top:1044px" width="24" height="24" viewBox="0 0 24 24"><circle cx="12" cy="12" r="12" fill="#2da94f"/><path d="M12 12 L1.6 6 A12 12 0 0 1 22.4 6Z" fill="#e94235"/><path d="M12 12 L22.4 6 A12 12 0 0 1 12 24Z" fill="#fbbc04"/><circle cx="12" cy="12" r="5.5" fill="#fff"/><circle cx="12" cy="12" r="4.3" fill="#1a73e8"/></svg>
<svg class="a" style="left:951px;top:1044px" width="24" height="24" viewBox="0 0 24 24"><circle cx="11.5" cy="13" r="10.5" fill="#ff7b1a"/><path d="M4 6 Q10 -1 19 4 Q23 10 21 16" fill="#ffcf2f" opacity="0.9"/><circle cx="12" cy="13" r="5.5" fill="#7b3ee8"/><path d="M2 14 Q5 22 13 23 Q6 19 6 13Z" fill="#e8362e"/></svg>
<svg class="a" style="left:995px;top:1045px" width="22" height="24" viewBox="0 0 22 24"><polygon points="11,0 21,6 21,17 11,23 1,17 1,6" fill="#3a3a3a"/><polygon points="11,2 19,7 19,16 11,21 3,16 3,7" fill="#6a6a6a"/><path d="M11 5 L17 16 H5Z" fill="#1e1e1e"/></svg>
<svg class="a" style="left:1038px;top:1045px" width="22" height="22" viewBox="0 0 22 22"><path d="M0 3 Q0 1 2 1 H8 L10 3 H22 V21 H0Z" fill="#f0b429"/><rect x="0" y="6" width="22" height="16" fill="#fbd155"/><rect x="5" y="14" width="12" height="6" rx="1.5" fill="#1e7fd8"/></svg>
<svg class="a" style="left:1082px;top:1044px" width="25" height="24" viewBox="0 0 25 24"><defs><linearGradient id="ed" x1="0" y1="0" x2="1" y2="1"><stop offset="0" stop-color="#35c1f1"/><stop offset="0.6" stop-color="#2d8ce8"/><stop offset="1" stop-color="#62d26f"/></linearGradient></defs><circle cx="12.5" cy="12" r="11.5" fill="url(#ed)"/><path d="M6 14 Q6 8 12 8 Q18 8 18 13 H10 Q11 17 16 17 Q20 17 23 14 Q21 22 12 23 Q6 22 6 14Z" fill="#1a5fb4"/><circle cx="13" cy="12" r="3" fill="#fff" opacity="0"/></svg>
<svg class="a" style="left:1126px;top:1044px" width="24" height="24" viewBox="0 0 24 24"><rect x="0" y="0" width="24" height="24" fill="#3b6e8a" stroke="#fff" stroke-width="1"/><path d="M2 2 Q12 8 14 14 Q16 20 22 23" stroke="#fff" stroke-width="1.2" fill="none"/><path d="M7 9 Q10 7 12 9 Q9 11 7 9Z M15 3 Q18 6 16 9 Q14 6 15 3Z" fill="#fff"/><text x="11" y="21" font-size="8" font-weight="700" fill="#fff" text-anchor="middle" font-family="Liberation Sans">12</text></svg>
<svg class="a" style="left:1170px;top:1038px" width="26" height="32" viewBox="0 0 26 32"><g transform="translate(0 6)"><circle cx="12" cy="12" r="12" fill="#2da94f"/><path d="M12 12 L1.6 6 A12 12 0 0 1 22.4 6Z" fill="#e94235"/><path d="M12 12 L22.4 6 A12 12 0 0 1 12 24Z" fill="#fbbc04"/><circle cx="12" cy="12" r="5.5" fill="#fff"/><circle cx="12" cy="12" r="4.3" fill="#4285f4"/></g><circle cx="19" cy="6" r="6" fill="#9a9a9a" stroke="#dcdcdc" stroke-width="1.2"/><path d="M16 8 Q18 3 21 6 Q22 8 19 9Z" fill="#3c7a3a"/></svg>
<svg class="a" style="left:1216px;top:1045px" width="22" height="22" viewBox="0 0 22 22"><defs><linearGradient id="ph" x1="0" y1="0" x2="1" y2="1"><stop offset="0" stop-color="#3a9bf0"/><stop offset="1" stop-color="#7a4ae0"/></linearGradient></defs><rect x="0" y="0" width="21" height="22" rx="3" fill="url(#ph)"/><path d="M0 19 L9 9 L21 19 V19 Q21 22 18 22 H3 Q0 22 0 19Z" fill="#5fd0ff"/><circle cx="16" cy="5" r="2" fill="#fff"/></svg>
<div class="a" style="left:1252px;top:1037px;width:38px;height:38px;background:#f4ebe3;border-radius:5px"></div>
<svg class="a" style="left:1259px;top:1044px" width="23" height="24" viewBox="0 0 23 24"><path d="M0 2 L4 0 V20 L0 22Z" fill="#7ec3de"/><rect x="3" y="0" width="19" height="24" rx="1" fill="#2f92bf"/><rect x="3" y="17" width="19" height="7" fill="#26688a"/><text x="12.5" y="14" font-size="13" font-weight="700" fill="#fff" text-anchor="middle" font-family="Liberation Sans">3</text><text x="12.5" y="22.5" font-size="5" font-weight="700" fill="#cfe" text-anchor="middle" font-family="Liberation Sans">MAX</text></svg>
<div class="a" style="left:1263px;top:1072px;width:15px;height:3px;background:#1a72d8;border-radius:2px"></div>
<svg class="a" style="left:1302px;top:1044px" width="26" height="24" viewBox="0 0 26 24"><circle cx="14" cy="12" r="11" fill="#f06a3c"/><path d="M14 12 V1 A11 11 0 0 1 25 12Z" fill="#ff9a6c"/><path d="M14 12 H25 A11 11 0 0 1 14 23Z" fill="#d04a2a"/><rect x="0" y="6" width="13" height="13" rx="1.5" fill="#c43e1c"/><text x="6.5" y="16.5" font-size="10" font-weight="700" fill="#fff" text-anchor="middle" font-family="Liberation Sans">P</text></svg>
<svg class="a" style="left:1348px;top:1038px" width="28" height="30" viewBox="0 0 28 30"><circle cx="11" cy="17" r="11" fill="#2aa2e0"/><path d="M4 16 L17 11 L15 22 L11 19 L9 22 L9 18 L15 13 L7 17.5Z" fill="#fff"/><rect x="11" y="0" width="17" height="11" rx="5.5" fill="#e8412e"/><text x="19.5" y="8.8" font-size="8" fill="#fff" text-anchor="middle" font-family="Liberation Sans">39</text></svg>
<svg class="a" style="left:1391px;top:1044px" width="24" height="24" viewBox="0 0 24 24"><path d="M1 2 L4 0 V22 L1 24Z" fill="#f06a8a"/><rect x="3" y="0" width="20" height="24" fill="#c8143c"/><rect x="3" y="17" width="20" height="7" fill="#7a0e26"/><text x="13" y="14" font-size="13" font-weight="700" fill="#fff" text-anchor="middle" font-family="Liberation Sans">A</text><text x="13" y="22.5" font-size="5" font-weight="700" fill="#fcc" text-anchor="middle" font-family="Liberation Sans">CAD</text></svg>
<div class="a" style="left:1046.5px;top:1072px;width:7px;height:3px;background:#8a8a8a;border-radius:2px"></div>
<div class="a" style="left:1134.5px;top:1072px;width:7px;height:3px;background:#8a8a8a;border-radius:2px"></div>
<div class="a" style="left:1179.5px;top:1072px;width:7px;height:3px;background:#8a8a8a;border-radius:2px"></div>
<div class="a" style="left:1222.5px;top:1072px;width:7px;height:3px;background:#8a8a8a;border-radius:2px"></div>
<div class="a" style="left:1310.5px;top:1072px;width:7px;height:3px;background:#8a8a8a;border-radius:2px"></div>
<div class="a" style="left:1354.5px;top:1072px;width:7px;height:3px;background:#8a8a8a;border-radius:2px"></div>
<div class="a" style="left:1398.5px;top:1072px;width:7px;height:3px;background:#8a8a8a;border-radius:2px"></div>
<svg class="a" style="left:1627px;top:1051px" width="14" height="9" viewBox="0 0 14 9"><path d="M1 7 L7 1 L13 7" stroke="#222" stroke-width="1.4" fill="none"/></svg>
<svg class="a" style="left:1656px;top:1047px" width="18" height="18" viewBox="0 0 18 18"><path d="M3 8 A6 6 0 0 1 14 5 M15 10 A6 6 0 0 1 4 13" stroke="#222" stroke-width="1.4" fill="none"/><path d="M14 1 V5 H10 M4 17 V13 H8" stroke="#222" stroke-width="1.4" fill="none"/><circle cx="13" cy="13" r="3.5" fill="#e81e1e"/></svg>
<svg class="a" style="left:1688px;top:1047px" width="18" height="18" viewBox="0 0 18 18"><path d="M4 14 Q0 14 0.5 10 Q1 6 5 7 Q7 2 12 4 Q16 5 15 9" fill="none" stroke="#333" stroke-width="1.5"/><rect x="10" y="9" width="7" height="8" rx="1" fill="#777" stroke="#222" stroke-width="0.8"/></svg>
<div class="t" style="left:1731.0px;top:1051.8px;font-size:12px;color:#222;font-weight:400;letter-spacing:0px;font-family:'Liberation Sans';">فا</div>
<svg class="a" style="left:1765px;top:1048px" width="17" height="16" viewBox="0 0 17 16"><path d="M1 6 Q8.5 -1 16 6 M3.5 8.5 Q8.5 4 13.5 8.5 M6 11 Q8.5 9 11 11" stroke="#222" stroke-width="1.4" fill="none"/><circle cx="8.5" cy="13.5" r="1.3" fill="#222"/></svg>
<svg class="a" style="left:1789px;top:1048px" width="17" height="16" viewBox="0 0 17 16"><path d="M1 5.5 H4 L8 2 V14 L4 10.5 H1Z" fill="none" stroke="#222" stroke-width="1.3"/><path d="M10.5 5 Q12 8 10.5 11 M12.5 3 Q15 8 12.5 13" stroke="#222" stroke-width="1.3" fill="none"/></svg>
<div class="t" style="left:1834.0px;top:1042.8px;font-size:12px;color:#1e1e1e;font-weight:400;letter-spacing:-0.1px;font-family:'Liberation Sans';">1:41 PM</div>
<div class="t" style="left:1822.0px;top:1058.3px;font-size:12px;color:#1e1e1e;font-weight:400;letter-spacing:-0.1px;font-family:'Liberation Sans';">8/19/2025</div>
<svg class="a" style="left:1885px;top:1049px" width="15" height="17" viewBox="0 0 15 17"><path d="M7.5 1 Q13 1 13 7 V11 L15 14 H0 L2 11 V7 Q2 1 7.5 1Z" fill="#1a5ec4"/><path d="M5.5 15 A2 2 0 0 0 9.5 15Z" fill="#1a5ec4"/></svg>
<div class="a" style="left:2.5px;top:981px;width:99.5px;height:24px;background:#ddc8c8;"></div>
<div class="a" style="left:2.5px;top:1005px;width:99.5px;height:2px;background:#b4b4b4;"></div>
<div class="a" style="left:2.5px;top:1007px;width:99.5px;height:22px;background:#ffffff;"></div>
<div class="t" style="left:5.0px;top:1008.2px;font-size:11.5px;color:#8a8a8a;font-weight:400;letter-spacing:-0.3px;font-family:'Liberation Mono';">Scripting Mini</div>
<div class="a" style="left:4px;top:955px;width:88px;height:24px;background:#8e8e8e;border-radius:4px"></div>
<svg class="a" style="left:10px;top:947px" width="12" height="8" viewBox="0 0 12 8"><path d="M0 8 L6 0 L12 8Z" fill="#8e8e8e"/></svg>
<div class="t" style="left:9.0px;top:961.3px;font-size:12px;color:#ececec;font-weight:400;letter-spacing:-0.1px;font-family:'Liberation Sans';">V-Ray Toolbar</div>
<div class="a" style="left:30px;top:985px;width:71px;height:3px;background:rgba(255,255,255,0.95);border-radius:2px;box-shadow:0 0 2px rgba(0,0,0,0.3)"></div>
<div class="a" style="left:35px;top:991px;width:62px;height:3px;background:rgba(255,255,255,0.95);border-radius:2px;box-shadow:0 0 2px rgba(0,0,0,0.3)"></div>
<div class="a" style="left:40px;top:996px;width:53px;height:3px;background:rgba(255,255,255,0.95);border-radius:2px;box-shadow:0 0 2px rgba(0,0,0,0.3)"></div>
<div class="a" style="left:59px;top:996px;width:3px;height:50px;background:rgba(255,255,255,0.95);box-shadow:0 0 2px rgba(0,0,0,0.3)"></div>
<div class="a" style="left:64px;top:996px;width:3px;height:50px;background:rgba(255,255,255,0.95);box-shadow:0 0 2px rgba(0,0,0,0.3)"></div>
<div class="a" style="left:69px;top:996px;width:3px;height:50px;background:rgba(255,255,255,0.95);box-shadow:0 0 2px rgba(0,0,0,0.3)"></div>
<div class="t" style="left:77.0px;top:1013.9px;font-size:22.5px;color:#ffffff;font-weight:700;letter-spacing:2.4px;font-family:'Liberation Sans';-webkit-text-stroke:1px #fff;text-shadow:0 0 2px rgba(0,0,0,0.35)">ARH2TARH</div>
<div class="t" style="left:77.0px;top:1037.2px;font-size:11px;color:rgba(255,255,255,0.9);font-weight:400;letter-spacing:1.3px;font-family:'Liberation Sans';text-shadow:0 0 2px rgba(0,0,0,0.3)">ALL RIGHT RESERVED</div>
<div class="a" style="left:218px;top:1003px;width:12px;height:12px;border-radius:50%;border:1.5px solid #fff"></div>
<div class="t" style="left:221.3px;top:1006.2px;font-size:8px;color:#fff;font-weight:700;letter-spacing:0px;font-family:'Liberation Sans';">c</div>
<div class="t" style="left:80.5px;top:115.2px;font-size:11.5px;color:#dcdcdc;font-weight:400;letter-spacing:0.1px;font-family:'Liberation Sans';">[+ ]</div>
<div class="t" style="left:102.5px;top:115.2px;font-size:11.5px;color:#dcdcdc;font-weight:400;letter-spacing:-0.42px;font-family:'Liberation Sans';">[Corona Camera008 ]</div>
<div class="t" style="left:212.5px;top:115.2px;font-size:11.5px;color:#dcdcdc;font-weight:400;letter-spacing:-0.2px;font-family:'Liberation Sans';">[Standard ]</div>
<div class="t" style="left:271.0px;top:115.2px;font-size:11.5px;color:#dcdcdc;font-weight:400;letter-spacing:-0.3px;font-family:'Liberation Sans';">[Default Shading ]</div>
<svg class="a" style="left:366px;top:115px" width="13" height="13" viewBox="0 0 13 13"><path d="M0.5 0.5 H12 L7.5 6 V12 L5 10 V6Z" fill="#8a8a8a"/></svg>
<svg class="a" style="left:86px;top:886px" width="26" height="28" viewBox="0 0 26 28"><path d="M4.5 4 V17" stroke="#1f2fc8" stroke-width="1.2"/><path d="M4.5 17 H17" stroke="#1a9a1a" stroke-width="1.2"/><path d="M4.5 17 V21" stroke="#c81e1e" stroke-width="1.2"/><text x="5" y="10" font-size="10" fill="#2a3ae0" font-family="Liberation Sans">z</text><text x="17" y="17" font-size="10" fill="#22b022" font-family="Liberation Sans">y</text><text x="5.5" y="26" font-size="10" fill="#d42020" font-family="Liberation Sans">x</text></svg>
</body></html>
